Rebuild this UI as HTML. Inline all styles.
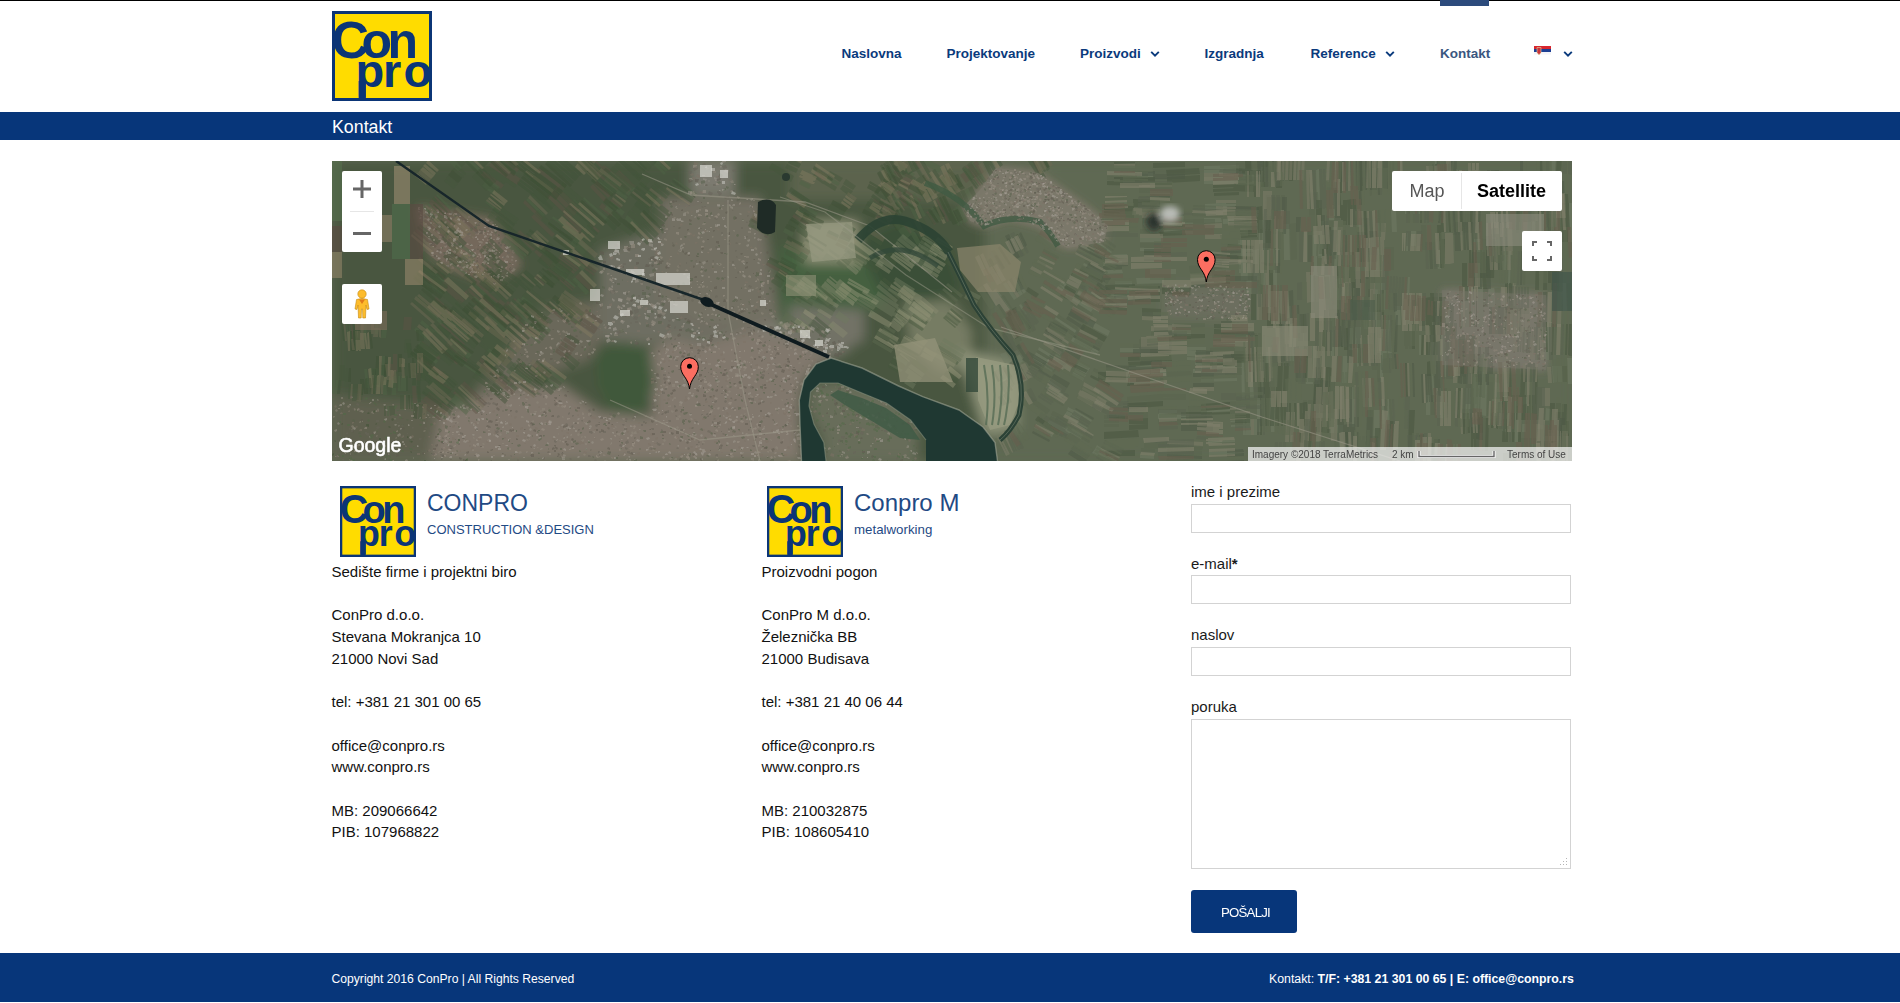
<!DOCTYPE html>
<html><head><meta charset="utf-8"><title>Kontakt - ConPro</title>
<style>
html,body{margin:0;padding:0;background:#fff;}
body{width:1900px;height:1003px;position:relative;overflow:hidden;font-family:"Liberation Sans", sans-serif;}
</style></head><body>
<div style="position:absolute;left:0px;top:0px;width:1900px;height:1px;background:#000"></div>
<svg style="position:absolute;left:332px;top:11px" width="100" height="90" viewBox="0 0 100 90" preserveAspectRatio="none">
<rect x="0" y="0" width="100" height="90" fill="#0b3576"/>
<rect x="3" y="3" width="94" height="84" fill="#ffdc00"/>
<text x="-0.5" y="46.8" font-family="Liberation Sans" font-weight="bold" font-size="52" fill="#0b3576">C</text>
<text x="29.5 55.5" y="46.8" font-family="Liberation Sans" font-weight="bold" font-size="50" fill="#0b3576">on</text>
<text x="23.6 50.9 71.5" y="75.5" font-family="Liberation Sans" font-weight="bold" font-size="47" fill="#0b3576">pro</text>
<rect x="26.7" y="70" width="7.2" height="18" fill="#0b3576"/>
</svg>
<div style="position:absolute;left:841.5px;top:46.57px;font-size:13.5px;line-height:13.5px;font-weight:bold;color:#0a3a7c;white-space:nowrap;font-family:'Liberation Sans', sans-serif;">Naslovna</div>
<div style="position:absolute;left:946.5px;top:46.57px;font-size:13.5px;line-height:13.5px;font-weight:bold;color:#0a3a7c;white-space:nowrap;font-family:'Liberation Sans', sans-serif;">Projektovanje</div>
<div style="position:absolute;left:1080px;top:46.57px;font-size:13.5px;line-height:13.5px;font-weight:bold;color:#0a3a7c;white-space:nowrap;font-family:'Liberation Sans', sans-serif;">Proizvodi</div>
<div style="position:absolute;left:1204.5px;top:46.57px;font-size:13.5px;line-height:13.5px;font-weight:bold;color:#0a3a7c;white-space:nowrap;font-family:'Liberation Sans', sans-serif;">Izgradnja</div>
<div style="position:absolute;left:1310.5px;top:46.57px;font-size:13.5px;line-height:13.5px;font-weight:bold;color:#0a3a7c;white-space:nowrap;font-family:'Liberation Sans', sans-serif;">Reference</div>
<div style="position:absolute;left:1440px;top:46.57px;font-size:13.5px;line-height:13.5px;font-weight:bold;color:#3a5680;white-space:nowrap;font-family:'Liberation Sans', sans-serif;">Kontakt</div>
<svg style="position:absolute;left:1150px;top:49.5px" width="10" height="8" viewBox="0 0 10 8"><path d="M1.2 1.8 L5 5.6 L8.8 1.8" fill="none" stroke="#0a3a7c" stroke-width="1.9"/></svg>
<svg style="position:absolute;left:1385px;top:49.5px" width="10" height="8" viewBox="0 0 10 8"><path d="M1.2 1.8 L5 5.6 L8.8 1.8" fill="none" stroke="#0a3a7c" stroke-width="1.9"/></svg>
<svg style="position:absolute;left:1562.5px;top:49.5px" width="10" height="8" viewBox="0 0 10 8"><path d="M1.2 1.8 L5 5.6 L8.8 1.8" fill="none" stroke="#0a3a7c" stroke-width="1.9"/></svg>
<div style="position:absolute;left:1440px;top:0px;width:49px;height:6px;background:#2c4b7c"></div>
<svg style="position:absolute;left:1534px;top:46px" width="18" height="11" viewBox="0 0 18 11">
<rect x="0" y="0" width="17" height="3" fill="#d8262e"/><rect x="0" y="3" width="17" height="3" fill="#1c3f94"/><rect x="0" y="6" width="17" height="2.5" fill="#f4f4f8"/>
<path d="M3 1.5 h4 v5 l-2 2.5 l-2 -2.5z" fill="#c9343c" stroke="#e8d9a0" stroke-width="0.6"/></svg>
<div style="position:absolute;left:0px;top:112px;width:1900px;height:28px;background:#07367a"></div>
<div style="position:absolute;left:332px;top:118.93px;font-size:17.8px;line-height:17.8px;font-weight:normal;color:#fff;white-space:nowrap;font-family:'Liberation Sans', sans-serif;">Kontakt</div>
<svg style="position:absolute;left:332px;top:161px" width="1240" height="300" viewBox="332 161 1240 300">
<defs><filter id="b6" x="-5%" y="-5%" width="110%" height="110%"><feGaussianBlur stdDeviation="6"/></filter>
<filter id="b3"><feGaussianBlur stdDeviation="3"/></filter>
<clipPath id="mc"><rect x="332" y="161" width="1240" height="300"/></clipPath></defs>
<g clip-path="url(#mc)">
<rect x="332" y="161" width="1240" height="300" fill="#5f6852" />
<g filter="url(#b6)">
<polygon points="332,161 1572,161 1572,461 332,461" fill="#4a573f" />
<polygon points="789,161 985,161 985,200 789,200" fill="#5b634d" />
<polygon points="985,161 1572,161 1572,461 985,461" fill="#5f6952" />
<polygon points="332,395 440,405 470,461 332,461" fill="#5f604f" />
<polygon points="536,311 600,300 600,345 590,360 536,378 500,392 470,400" fill="#6a675a" />
<polygon points="660,197 760,197 770,260 779,321 750,330 700,325 660,300" fill="#736f63" />
<polygon points="600,250 660,230 660,300 700,325 750,330 700,345 672,337 650,345 600,340" fill="#6e6e62" />
<polygon points="779,321 830,330 850,350 831,358 790,340 750,330" fill="#7f7d72" />
<polygon points="690,161 735,161 735,195 690,195" fill="#7b7a70" />
<polygon points="430,461 440,412 503,389 560,384 600,412 653,416 650,350 672,337 700,345 750,330 790,340 831,358 811,371 802,385 799,408 800,436 802,461" fill="#81786d" />
<polygon points="417,207 495,220 521,265 495,285 430,259" fill="#74695b" />
<polygon points="596,352 625,342 650,350 655,385 640,416 610,410 598,385" fill="#40593a" />
<polygon points="813,384 846,381 887,393 918,425 917,461 824,461 822,436 811,417 809,397" fill="#676d5a" />
<polygon points="780,245 870,258 885,300 850,322 780,328" fill="#45603f" />
<polygon points="856,240 900,220 947,246 962,290 930,302 880,292" fill="#3a5039" />
<polygon points="789,305 864,310 864,340 831,356 789,340" fill="#727266" />
<polygon points="804,221 858,221 858,263 804,263" fill="#8d9076" />
<polygon points="905,302 950,300 972,330 971,370 940,372 910,345" fill="#767b63" />
<polygon points="959,350 1017,363 1017,429 985,435" fill="#8f947a" />
<polygon points="996,168 1038,173 1062,190 1090,210 1108,226 1104,242 1067,248 1056,242 1041,226 1010,218 984,226 970,221 963,207 980,190 992,173" fill="#7e786a" />
<polygon points="1442,290 1546,295 1546,370 1442,365" fill="#78766a" />
<polygon points="1164,285 1250,287 1250,320 1164,318" fill="#6c6e5e" />
</g>
<g filter="url(#b3)">
<polygon points="996,168 1038,173 1062,190 1090,210 1108,226 1104,242 1067,248 1056,242 1041,226 1010,218 984,226 970,221 963,207 980,190 992,173" fill="#7e786a" opacity="0.8"/>
<polygon points="417,207 495,220 521,265 495,285 430,259" fill="#74695b" opacity="0.7"/>
<polygon points="1442,290 1546,295 1546,370 1442,365" fill="#78766a" opacity="0.6"/>
</g>
<path fill="#5d5244" opacity="0.45" d="M428 261 447 280 445 281 427 262zM420 270 438 288 437 290 418 271zM602 203 614 213 611 217 599 207zM480 265 502 284 500 287 478 267zM433 376 452 389 451 391 432 378zM557 186 581 209 578 212 554 189zM554 190 577 212 574 216 551 193zM550 194 573 216 570 219 547 197zM537 249 556 265 552 269 534 252zM567 221 586 235 584 237 566 223zM520 230 537 247 533 251 516 234zM422 341 441 357 439 360 420 345zM436 202 457 222 456 224 435 203zM433 205 454 226 453 227 431 207zM431 207 452 227 451 229 430 208zM425 214 446 234 445 236 423 215zM576 256 597 271 595 273 574 258zM574 259 595 274 594 276 573 261zM565 213 582 229 580 231 563 215zM440 322 452 331 451 333 439 324zM619 170 635 186 631 190 615 174zM615 174 631 190 627 194 611 178zM506 305 522 318 520 321 504 308zM547 304 568 323 567 324 545 306zM612 199 622 207 620 208 610 201zM455 209 479 231 477 233 453 212zM493 160 521 179 519 182 491 163zM491 163 519 182 517 185 489 166zM565 337 577 345 575 348 563 340zM562 341 575 349 572 352 560 344zM560 345 572 353 570 356 558 348zM557 348 569 357 567 360 555 352zM504 156 520 168 517 172 501 159zM497 164 513 176 511 180 494 167zM515 298 532 313 531 315 513 299zM480 277 492 289 490 291 478 279zM477 279 489 291 487 294 475 282zM469 288 481 300 479 302 467 290zM466 290 478 303 476 305 464 293zM564 250 583 263 581 265 563 252zM561 254 579 268 578 270 559 256zM559 257 577 270 576 272 558 259zM557 259 575 272 574 274 556 261zM526 235 550 251 549 253 525 236zM539 168 565 188 563 191 537 171zM498 378 515 392 512 395 495 381zM425 219 445 236 443 238 423 221zM416 229 437 246 435 248 415 231zM508 301 520 310 517 313 506 303zM429 392 450 408 448 410 428 393zM428 394 448 410 447 412 426 396zM426 396 446 412 445 414 424 398zM424 398 445 414 443 416 423 400zM422 400 443 417 441 418 421 402zM421 403 441 419 440 421 419 404zM464 381 487 403 486 404 463 383zM463 383 486 405 484 406 461 384zM455 391 478 413 476 414 453 393zM480 303 502 319 500 321 478 306zM559 275 575 288 574 289 558 277zM558 277 573 290 572 291 557 278zM435 196 450 210 449 212 434 197zM432 199 447 214 445 215 430 201zM430 201 445 215 443 217 429 203zM436 297 453 312 451 314 434 299zM590 223 600 231 598 233 589 224zM453 337 469 352 468 353 451 338zM450 340 466 355 464 357 448 342zM448 342 464 357 463 359 446 344zM488 273 500 283 497 286 485 276zM536 275 545 284 544 285 535 277zM536 315 547 324 545 327 533 318zM533 318 544 328 542 330 531 321zM528 325 539 334 537 337 525 328zM520 303 544 322 542 324 519 305zM597 181 611 195 608 198 594 184zM593 184 607 199 604 202 590 187zM500 299 518 314 516 316 498 302zM493 308 510 322 508 325 491 310zM444 281 465 300 461 304 440 285zM579 273 593 288 590 291 575 277zM484 171 504 185 501 189 481 175zM446 344 468 360 466 362 445 346zM477 282 501 303 499 305 475 284zM473 287 497 308 495 310 471 289zM470 290 494 311 492 313 468 292zM517 318 534 333 532 335 515 320zM442 348 458 363 457 365 440 350zM583 148 607 171 605 172 582 149zM557 305 579 322 576 325 555 309zM437 200 459 219 457 221 435 202zM435 202 457 221 455 223 433 204zM433 204 455 224 453 226 431 206zM604 165 625 181 622 184 601 168zM598 171 619 188 617 191 596 174zM535 363 549 376 547 379 532 366zM549 268 561 277 560 279 547 269zM482 363 508 383 506 386 480 366zM422 357 448 376 445 379 420 360zM481 358 493 368 491 371 479 361zM442 323 465 344 464 345 441 325zM537 315 549 323 546 326 535 318zM525 200 543 218 541 220 523 203zM469 269 481 278 478 282 466 273zM534 214 555 234 552 237 531 217zM435 265 448 274 447 276 434 266zM586 309 603 321 601 324 584 312zM581 316 598 328 596 331 579 319zM579 320 596 331 594 334 577 323zM456 253 481 271 479 274 454 255zM416 386 417 403 413 403 412 386zM397 354 397 372 393 372 393 354zM422 359 420 381 416 380 418 359zM412 317 411 330 407 330 408 317zM408 317 407 330 403 330 404 317zM394 364 395 380 391 380 390 364zM352 319 354 340 352 340 350 319zM767 262 788 273 786 276 766 265zM905 189 921 200 920 202 904 191zM895 170 914 181 912 185 893 173zM892 174 911 185 909 189 890 177zM875 198 884 204 882 207 873 201zM753 217 772 227 770 231 751 221zM877 215 892 221 891 223 876 217zM790 195 810 207 808 210 789 198zM816 171 826 179 825 181 814 174zM895 166 913 177 911 179 893 168zM842 231 852 237 850 240 840 234zM881 188 893 196 892 198 880 190zM879 203 898 213 897 215 878 205zM794 214 809 223 808 226 792 217zM928 211 936 224 934 225 926 212zM915 156 922 167 919 169 913 158zM977 161 984 172 980 175 973 163zM972 164 979 175 975 178 968 166zM1035 160 1041 172 1038 173 1032 161zM938 198 949 221 947 222 936 200zM900 190 908 205 904 207 896 192zM906 223 912 232 910 234 903 225zM964 172 970 180 966 183 960 175zM967 165 981 185 980 186 965 166z"/>
<path fill="#4e6445" opacity="0.45" d="M427 263 445 281 444 283 425 264zM450 156 462 168 458 171 446 159zM518 298 528 306 526 310 515 302zM515 303 525 310 523 314 512 307zM475 296 487 306 485 308 473 297zM419 345 438 361 436 364 417 348zM649 190 663 202 662 205 647 193zM435 329 447 338 446 340 434 331zM486 201 500 211 498 213 485 202zM436 409 447 417 445 420 434 412zM469 158 481 170 479 172 467 160zM431 282 443 292 441 294 429 285zM510 303 527 319 525 321 508 305zM474 282 487 294 484 297 472 284zM525 236 549 253 548 255 524 238zM569 252 586 267 583 271 566 256zM456 393 473 407 470 411 453 397zM453 397 469 411 466 415 450 401zM662 155 673 165 671 168 660 157zM657 160 668 170 666 172 655 162zM655 162 666 173 664 175 653 164zM421 341 439 355 436 358 418 344zM561 273 576 286 575 288 560 275zM437 194 452 208 450 210 436 195zM428 203 443 217 441 219 427 204zM425 206 439 221 438 222 423 208zM528 309 551 330 549 333 526 312zM523 315 546 336 544 338 521 317zM518 321 541 342 539 344 516 323zM427 307 443 322 441 325 425 309zM511 366 524 375 522 378 509 369zM508 369 522 378 520 382 506 372zM505 237 527 255 525 257 503 239zM503 239 525 258 523 260 501 241zM523 296 533 304 531 307 521 299zM582 159 591 167 589 169 580 161zM515 362 533 379 532 381 514 363zM513 364 532 381 530 383 512 365zM511 366 530 383 528 385 510 367zM465 252 475 262 472 264 462 255zM462 255 472 265 469 268 459 258zM459 258 468 268 465 271 456 261zM627 215 639 225 637 229 625 219zM541 363 565 380 563 383 539 365zM536 369 560 387 558 389 534 372zM508 345 517 353 516 355 507 347zM553 216 577 233 575 235 552 218zM422 320 435 331 433 334 420 323zM416 327 430 338 428 341 414 330zM459 242 477 255 475 258 457 245zM490 313 509 332 507 335 488 316zM600 178 614 192 611 195 597 180zM495 305 513 320 511 322 493 307zM575 277 589 292 586 295 572 280zM576 236 590 248 586 251 573 240zM573 240 586 252 583 255 570 244zM450 339 472 355 470 357 449 341zM448 341 470 357 468 359 447 343zM574 199 599 221 598 222 573 200zM572 201 597 223 596 224 571 202zM454 357 480 374 479 376 453 358zM448 341 465 356 463 358 447 343zM674 178 697 194 696 196 673 179zM671 182 694 198 693 200 670 183zM584 197 609 219 607 221 583 199zM488 178 500 187 497 190 485 181zM485 182 496 191 494 195 482 186zM553 262 565 272 564 273 552 264zM489 348 501 358 499 361 487 351zM447 317 471 337 470 339 446 318zM611 171 635 188 632 192 608 174zM608 175 631 192 629 196 605 179zM605 179 628 197 626 200 602 183zM528 198 545 215 543 217 526 200zM611 201 625 212 622 216 608 204zM607 205 621 217 618 220 604 209zM555 305 581 323 579 326 552 308zM450 261 475 279 474 281 449 263zM406 376 406 391 403 391 403 376zM403 376 403 391 400 391 401 376zM400 376 400 391 398 391 398 376zM389 406 389 416 387 416 387 406zM396 376 396 395 392 395 392 377zM386 377 387 395 383 395 382 377zM378 321 378 334 375 334 375 321zM387 329 386 338 384 338 384 329zM384 329 384 338 381 338 382 329zM384 363 384 375 381 375 382 363zM376 375 375 394 373 394 374 375zM372 368 372 380 369 379 369 368zM367 324 366 340 363 340 364 324zM378 368 380 387 377 387 375 368zM367 369 369 388 366 388 364 369zM385 356 384 376 382 376 382 356zM356 318 358 340 356 340 354 319zM349 319 352 340 350 341 348 319zM347 319 349 341 348 341 345 319zM338 380 337 394 334 394 336 380zM335 380 334 394 332 393 333 380zM333 380 331 393 329 393 330 379zM785 228 794 233 792 237 783 232zM802 203 818 213 816 216 800 205zM798 208 814 219 813 221 797 211zM827 175 840 183 838 186 825 179zM801 180 811 185 809 189 799 184zM897 162 915 174 913 176 895 165zM884 184 895 192 894 194 883 186zM790 245 808 256 806 260 787 249zM920 155 942 167 939 173 917 160zM933 207 942 220 939 222 931 209zM901 220 911 235 905 240 894 225zM915 193 926 216 923 217 912 195zM908 196 919 219 916 221 905 198zM968 188 979 211 975 212 964 190zM909 221 921 243 917 245 904 223zM967 167 974 178 970 181 963 170zM960 205 968 221 966 222 958 206zM958 206 966 222 964 223 955 207zM955 208 963 223 961 224 953 209zM952 209 960 225 958 226 950 210zM895 192 903 207 899 209 892 194zM890 166 895 177 891 179 886 168zM909 220 916 230 913 232 907 222zM882 168 892 186 890 187 881 168zM895 203 902 213 900 214 893 204zM882 213 888 224 886 225 879 214zM949 172 960 189 958 190 947 174zM944 176 955 192 953 194 942 177zM941 177 953 194 951 196 939 179zM894 157 906 177 903 178 891 159zM972 161 987 181 985 182 971 162z"/>
<path fill="#3f5238" opacity="0.45" d="M425 264 443 283 442 284 423 266zM423 266 442 285 440 286 422 268zM421 268 440 286 438 288 420 269zM418 271 436 290 435 291 416 273zM414 275 433 293 431 295 413 276zM606 168 630 189 627 192 603 170zM423 391 442 404 440 406 422 393zM498 216 522 236 520 240 495 219zM560 230 578 244 577 246 559 232zM516 235 532 252 528 256 512 239zM546 249 573 269 571 272 545 251zM545 251 571 272 569 274 543 254zM543 254 569 275 567 277 541 256zM541 256 567 277 566 279 539 259zM539 259 565 280 564 282 537 261zM526 270 539 281 538 283 524 272zM524 272 537 283 536 285 523 273zM521 275 534 286 533 288 520 277zM518 279 531 290 530 291 517 280zM517 280 530 292 529 293 516 282zM416 349 435 364 433 368 414 352zM498 149 516 167 514 169 496 152zM426 212 448 232 446 234 425 213zM442 320 454 328 453 330 441 322zM439 325 451 333 449 335 437 327zM437 327 449 335 448 338 436 329zM551 299 573 317 571 319 550 300zM501 266 522 281 519 284 498 269zM498 269 519 285 517 288 495 273zM610 201 620 209 619 210 609 203zM607 218 617 227 614 231 604 221zM445 397 456 405 454 407 443 399zM443 400 454 408 452 410 441 402zM432 342 455 360 453 363 430 345zM451 228 467 243 464 246 449 230zM478 149 490 161 488 163 476 150zM476 151 488 163 486 165 474 153zM474 153 486 165 484 167 472 155zM467 160 479 172 477 174 465 162zM530 229 554 246 553 247 529 231zM527 233 551 250 550 251 526 234zM524 238 548 255 546 257 523 240zM646 152 657 161 655 164 644 154zM637 201 650 211 647 215 634 205zM633 155 647 168 646 170 631 156zM631 157 645 170 644 172 629 158zM487 267 508 283 507 285 486 269zM482 273 504 289 502 291 481 275zM641 182 658 196 657 198 639 184zM637 186 655 201 653 203 635 188zM635 189 653 203 652 205 634 191zM632 193 650 207 648 209 630 195zM490 356 506 369 504 371 489 358zM480 367 496 381 494 383 479 369zM490 251 508 265 504 269 487 256zM505 304 517 314 515 316 503 306zM503 307 515 317 512 319 501 309zM500 310 512 320 510 322 498 312zM506 357 518 366 512 372 501 363zM563 356 576 367 573 371 560 359zM479 322 489 332 488 333 478 324zM474 328 484 338 483 339 472 329zM422 268 448 287 447 289 420 270zM416 275 443 294 442 297 415 277zM482 167 496 181 495 183 480 168zM421 341 439 354 437 357 419 345zM418 345 436 358 434 361 416 349zM415 349 433 362 431 366 413 353zM444 305 456 314 455 316 443 306zM621 158 643 177 639 181 618 161zM456 302 483 323 481 325 455 304zM453 306 479 328 477 330 451 308zM539 373 557 388 554 392 537 376zM536 377 554 392 551 395 533 380zM588 224 598 233 597 235 587 226zM446 344 462 359 461 361 445 346zM509 232 531 250 530 252 507 234zM494 208 515 224 514 226 492 210zM482 280 494 290 491 293 479 284zM540 271 549 279 548 280 539 272zM532 280 541 288 540 289 531 281zM503 351 512 359 511 361 502 353zM498 261 506 270 503 273 494 264zM490 268 499 277 495 280 487 272zM525 173 552 193 550 196 523 175zM520 179 548 199 546 201 519 181zM518 181 545 202 544 204 517 184zM443 373 457 385 455 386 442 374zM441 374 455 387 454 388 440 376zM438 378 452 390 451 391 437 379zM437 379 451 391 450 393 436 381zM436 381 450 393 448 394 434 382zM433 384 447 396 446 398 432 386zM518 305 542 325 540 327 517 307zM445 346 466 362 464 365 443 349zM509 327 526 342 524 344 507 329zM438 226 449 234 446 237 435 229zM569 205 594 226 593 228 568 206zM457 353 483 371 482 372 456 354zM673 180 696 196 695 198 672 181zM669 185 692 202 691 203 668 187zM596 175 617 191 615 194 594 177zM542 277 554 287 553 288 540 279zM485 360 511 379 509 382 483 363zM477 370 503 390 501 393 475 373zM419 360 445 380 443 383 417 363zM417 364 442 383 440 386 414 367zM414 367 440 387 437 390 412 370zM514 369 541 389 539 390 513 371zM535 190 553 208 551 210 533 193zM556 151 582 174 580 176 554 154zM554 154 579 176 577 179 552 156zM551 157 577 179 575 181 549 159zM549 159 574 182 572 184 547 162zM557 301 583 319 581 322 555 304zM420 386 421 402 418 403 417 386zM408 376 408 391 406 391 406 376zM411 343 413 357 408 358 406 343zM379 377 379 385 376 385 376 376zM376 376 375 385 372 385 372 376zM359 338 361 350 358 350 357 338zM356 338 358 350 355 350 354 339zM424 330 424 341 422 341 421 330zM421 330 422 341 419 341 419 330zM385 365 386 380 383 381 381 365zM376 369 375 380 372 380 373 369zM421 375 420 386 417 385 417 375zM416 375 416 385 412 385 413 375zM388 357 387 376 385 376 385 356zM354 319 356 340 354 340 352 319zM343 320 345 341 343 341 341 320zM341 380 340 394 337 394 339 380zM801 208 810 214 807 219 797 213zM790 219 799 223 797 228 788 223zM791 187 810 200 808 204 789 191zM828 209 842 217 840 221 826 213zM800 206 816 216 815 218 799 208zM886 175 899 183 898 185 885 176zM829 230 839 235 838 238 827 233zM868 201 880 207 878 210 866 205zM888 172 901 179 900 183 886 176zM846 223 856 229 854 232 844 226zM844 227 854 233 852 236 842 230zM790 158 801 164 799 168 788 163zM885 182 897 190 895 192 884 184zM882 186 894 194 893 196 881 188zM880 190 891 198 890 200 879 192zM790 221 805 230 803 234 788 224zM800 226 809 233 806 238 796 231zM879 186 890 194 887 197 876 190zM876 190 887 198 885 201 874 193zM873 194 884 202 882 205 871 197zM897 187 906 192 905 194 896 189zM784 262 798 272 796 276 781 266zM782 257 797 265 796 267 781 259zM781 260 796 267 795 270 780 262zM958 174 963 186 959 188 953 176zM952 171 957 181 955 182 949 173zM912 158 919 169 916 170 910 159zM910 160 916 171 913 172 907 161zM907 161 913 172 910 174 904 163zM904 163 910 174 908 175 901 164zM1029 152 1040 174 1037 176 1026 154zM1033 156 1046 177 1041 181 1027 160zM996 154 1003 165 1000 167 993 155zM989 158 996 169 993 171 986 159zM893 208 905 226 903 227 891 209zM889 211 901 228 899 230 887 212zM987 160 996 179 992 181 983 162zM932 210 938 221 936 222 929 212zM901 160 908 173 903 175 897 161zM886 166 896 184 894 185 884 166zM885 163 897 182 895 184 883 164zM963 167 978 188 976 189 962 169z"/>
<path fill="#44573b" opacity="0.45" d="M416 273 434 292 433 293 415 274zM454 152 466 163 462 167 450 155zM483 262 505 282 503 284 481 265zM485 330 507 346 503 350 481 335zM603 171 627 192 624 195 600 174zM432 378 451 391 449 393 431 380zM430 380 449 393 448 395 429 382zM429 382 448 395 446 397 428 384zM426 387 445 400 443 402 425 389zM424 389 443 402 442 404 423 391zM495 220 519 240 516 244 492 223zM640 214 659 234 657 236 638 216zM637 217 657 236 655 238 635 219zM635 219 654 239 652 241 633 221zM630 223 649 243 647 245 628 225zM471 300 483 310 481 312 470 302zM562 227 580 242 579 244 560 229zM558 232 577 246 575 248 557 234zM520 277 533 288 532 290 518 278zM490 326 511 345 508 348 487 329zM487 330 508 348 506 351 484 332zM413 353 432 368 430 371 410 356zM495 152 513 169 511 171 493 154zM430 209 451 229 449 230 428 210zM428 210 449 231 448 232 427 212zM655 182 670 194 668 196 654 184zM653 185 668 197 666 199 651 187zM490 196 504 206 503 208 489 197zM614 196 625 203 623 205 613 197zM489 166 517 185 515 188 487 169zM441 403 452 411 450 414 439 406zM563 182 586 201 583 203 561 185zM561 185 583 204 581 207 558 188zM558 188 580 207 578 210 556 191zM438 263 451 275 448 278 435 266zM430 345 452 363 450 366 428 348zM418 295 439 314 436 317 416 298zM415 298 435 318 432 321 412 301zM448 230 464 246 462 248 446 233zM446 233 461 249 459 251 443 235zM436 276 448 285 446 288 434 279zM434 279 446 288 444 291 432 282zM548 270 559 280 555 283 545 274zM513 299 530 315 529 317 512 301zM508 305 525 321 524 322 506 307zM658 202 672 213 669 217 655 206zM654 207 668 218 665 222 651 211zM650 212 665 223 662 227 647 216zM556 261 574 275 572 277 554 263zM529 231 553 248 552 249 528 232zM644 154 655 164 653 166 642 156zM642 157 652 166 650 169 640 159zM639 159 650 169 648 171 637 161zM641 197 653 207 650 210 638 201zM634 206 646 215 643 219 631 209zM630 210 643 220 640 223 627 214zM577 243 594 259 591 262 574 247zM495 270 516 290 514 292 493 272zM485 280 507 300 505 302 483 282zM635 152 649 166 648 168 633 154zM484 271 505 287 504 289 483 273zM417 361 434 379 432 381 415 363zM485 337 508 355 506 358 483 340zM483 340 506 358 504 360 481 342zM481 343 504 361 502 363 479 345zM502 373 518 388 515 391 499 377zM495 382 511 396 508 399 492 385zM420 224 441 241 439 243 419 226zM639 184 657 198 655 200 637 186zM488 358 504 372 502 374 487 360zM424 251 443 266 441 269 422 254zM422 254 440 269 438 271 420 257zM417 260 436 275 434 277 415 263zM486 256 504 270 500 274 483 261zM495 316 507 326 505 328 493 319zM529 287 555 309 553 311 528 289zM526 292 551 313 549 315 524 294zM524 294 549 315 547 317 522 296zM491 238 504 251 501 254 489 241zM488 242 501 254 498 257 485 244zM485 245 498 257 495 260 482 247zM482 248 494 260 492 263 479 251zM431 389 451 406 450 407 430 391zM458 388 481 410 480 411 457 389zM456 390 479 411 478 413 455 391zM482 300 504 316 502 318 481 303zM478 306 500 322 498 324 476 309zM476 310 498 325 496 327 474 312zM474 313 495 328 494 330 472 315zM567 352 580 363 577 367 564 355zM477 324 488 334 486 335 476 326zM475 326 486 336 484 337 474 328zM472 330 482 339 481 341 470 331zM466 336 477 345 475 347 465 337zM465 338 475 347 474 349 463 339zM421 291 445 310 443 313 419 293zM414 299 438 319 436 321 412 302zM562 271 578 284 577 286 561 273zM556 279 572 291 571 293 555 280zM484 165 498 179 497 181 482 166zM476 173 490 187 488 189 474 175zM474 175 488 189 486 191 472 177zM578 152 602 176 600 177 576 153zM434 197 448 212 447 213 432 199zM520 318 544 339 542 341 518 320zM445 303 457 313 456 314 444 305zM441 308 453 318 452 319 440 310zM439 312 451 321 449 323 438 313zM425 310 441 325 439 327 423 312zM640 167 653 177 651 180 638 170zM637 170 650 181 647 184 635 173zM634 174 647 185 644 188 632 177zM631 177 644 188 641 191 629 180zM625 154 646 173 643 177 621 157zM617 162 639 181 636 185 614 166zM613 166 635 186 632 189 610 170zM528 299 553 321 550 324 525 302zM521 307 546 329 543 332 518 311zM458 299 485 320 483 323 457 301zM455 304 481 325 479 327 453 306zM447 314 473 335 471 337 445 316zM456 165 466 173 465 175 455 167zM454 168 464 176 463 178 452 170zM448 176 458 184 456 186 446 178zM446 179 456 186 454 189 444 181zM587 226 596 235 595 237 585 228zM583 230 593 239 591 240 582 232zM475 272 487 280 484 284 472 276zM521 300 531 307 529 310 519 302zM518 303 528 311 526 313 516 306zM497 204 519 219 517 221 496 206zM496 206 517 222 516 224 494 208zM492 211 514 226 512 228 491 213zM490 213 512 229 510 231 489 215zM489 215 510 231 509 233 487 217zM479 301 501 321 498 324 476 304zM517 360 535 377 534 379 516 361zM621 223 633 233 630 236 618 226zM538 366 562 383 560 386 536 369zM542 269 551 277 550 279 541 270zM539 272 548 280 547 282 538 274zM533 278 543 287 541 288 532 280zM551 219 575 236 573 238 550 221zM538 312 550 321 547 324 536 315zM530 322 542 331 539 334 528 325zM494 265 502 273 499 277 491 268zM444 371 458 383 457 385 443 373zM440 376 454 388 453 390 439 378zM434 383 448 395 447 396 433 384zM487 357 499 367 496 370 484 360zM440 286 461 305 457 309 436 290zM487 166 507 180 504 184 484 170zM480 176 500 190 498 194 477 180zM584 228 597 240 594 243 580 232zM580 232 593 244 590 247 577 236zM475 284 499 305 497 308 473 287zM468 292 492 313 490 316 466 295zM440 222 451 230 449 233 438 225zM529 363 549 379 546 383 526 367zM568 206 592 228 591 230 566 208zM566 208 591 230 589 232 564 210zM458 351 484 369 483 370 457 352zM446 343 463 358 461 360 444 345zM444 346 461 361 459 363 442 348zM582 150 605 172 604 174 580 151zM467 314 487 331 485 334 465 317zM670 184 693 200 692 202 669 185zM435 379 455 396 452 398 433 382zM564 292 576 304 573 308 560 296zM559 297 572 308 569 312 556 300zM554 260 567 270 566 272 553 262zM551 264 564 274 563 275 550 266zM550 266 563 275 561 277 549 268zM546 272 558 281 557 283 545 273zM544 273 557 283 556 284 543 275zM543 275 556 285 555 286 542 277zM436 320 456 341 454 343 433 322zM430 325 450 346 448 349 428 328zM475 374 501 393 498 396 472 377zM486 351 499 361 496 364 484 354zM443 322 467 342 466 344 442 323zM440 325 464 346 463 347 439 326zM535 319 546 327 544 329 533 322zM538 188 555 205 553 207 536 190zM533 193 550 210 548 212 531 195zM538 210 559 230 556 233 535 213zM395 406 395 415 392 415 392 406zM392 406 392 415 390 416 389 406zM386 406 386 416 384 416 384 406zM391 377 391 395 388 395 387 377zM383 377 383 385 380 385 380 377zM427 360 425 381 421 381 423 359zM399 372 398 388 393 388 395 371zM345 365 345 381 339 381 340 365zM363 384 362 400 360 400 361 384zM358 384 357 400 355 400 356 384zM355 384 355 400 352 400 353 384zM351 384 350 399 348 399 349 384zM381 363 381 375 378 375 379 362zM348 368 348 382 345 382 346 368zM411 339 410 353 404 353 405 339zM420 358 421 366 418 366 418 358zM417 358 418 366 415 366 415 358zM407 363 408 378 405 378 404 363zM375 368 376 388 373 388 372 368zM423 404 422 419 418 419 419 404zM369 378 370 394 368 394 367 378zM357 384 356 401 352 401 354 384zM412 395 413 409 411 409 411 395zM408 395 408 409 406 409 406 395zM404 395 404 409 402 409 402 395zM402 395 402 409 400 409 400 395zM751 218 770 229 768 232 749 222zM792 273 807 281 806 284 790 276zM788 279 804 288 802 290 787 282zM772 163 794 176 791 182 769 168zM769 259 789 270 788 273 767 262zM897 166 916 178 914 181 895 170zM777 272 787 279 786 280 776 274zM775 276 784 282 783 284 774 278zM773 278 783 284 782 286 772 280zM772 280 782 286 780 288 771 282zM831 204 845 212 843 216 828 208zM750 222 770 232 768 236 748 226zM875 220 889 226 888 228 874 222zM867 232 883 242 881 246 865 236zM830 171 843 178 840 182 828 174zM825 180 837 187 835 191 822 183zM794 190 813 202 812 204 792 192zM792 192 812 205 810 207 790 195zM814 174 824 182 823 184 812 176zM866 205 878 211 876 214 864 209zM885 177 899 184 897 188 883 181zM786 283 806 294 804 297 785 285zM785 286 804 298 802 300 783 288zM783 289 802 301 800 303 781 291zM846 179 856 186 853 190 843 184zM843 185 853 191 849 196 840 189zM787 164 798 169 796 173 785 168zM893 165 904 172 903 175 891 168zM886 180 898 188 897 190 885 182zM787 250 805 260 803 264 785 254zM871 198 882 205 880 208 869 201zM898 185 907 190 906 192 897 187zM781 267 795 277 792 281 778 271zM807 271 817 278 813 283 803 277zM842 231 852 235 851 239 841 234zM953 176 958 189 954 191 948 178zM923 217 930 232 926 234 919 219zM943 176 948 186 946 187 941 177zM972 186 983 209 979 210 968 188zM964 190 975 213 971 214 960 191zM960 192 971 215 967 216 956 193zM1039 147 1050 169 1047 171 1036 149zM1035 149 1046 171 1044 172 1033 150zM915 218 927 240 922 242 910 220zM942 192 949 207 943 210 936 195zM921 176 934 195 931 197 918 178zM918 178 931 197 928 199 915 180zM914 180 928 199 925 201 912 182zM922 158 933 177 930 179 919 160zM915 162 926 181 924 183 912 164zM935 208 942 218 939 220 932 210zM929 213 935 223 933 224 926 214zM885 183 896 199 893 201 882 185zM969 168 975 177 971 180 965 171zM893 204 900 214 898 215 891 205zM946 174 958 191 956 192 944 175zM888 161 900 180 898 182 885 162zM882 164 894 184 892 185 880 166zM935 169 947 187 945 189 932 171zM971 162 985 182 983 183 969 163zM969 163 983 184 982 185 967 165zM965 166 979 186 978 187 963 167zM826 289 838 299 836 303 823 293zM823 293 835 303 832 307 820 297zM914 313 928 322 926 325 912 316zM910 319 924 329 922 331 908 322zM848 250 865 264 864 266 847 252zM914 359 928 369 925 373 911 363zM951 308 963 318 962 320 950 310zM948 312 961 322 959 323 947 313zM946 315 958 325 957 326 944 317zM944 317 956 327 955 328 943 318zM824 301 836 309 834 312 822 304zM884 277 904 293 902 296 882 280zM809 234 827 245 826 247 808 236zM947 370 959 380 956 383 944 374zM900 344 919 355 918 356 899 346zM937 349 959 362 957 365 935 352zM805 289 825 302 823 305 803 293zM846 283 867 295 866 297 845 285zM917 250 938 262 937 265 916 252zM866 257 881 267 879 271 864 261zM863 261 879 271 877 274 861 265zM893 281 913 293 911 295 892 284zM798 294 813 303 812 306 796 296zM855 247 867 254 866 256 854 249zM853 250 866 257 865 259 852 252zM852 252 865 259 863 261 851 254zM851 254 863 262 862 264 849 257zM949 256 966 267 964 270 947 259zM946 259 963 271 961 274 944 262zM851 242 871 258 868 262 848 246zM816 316 832 329 830 332 814 318zM813 319 830 332 827 335 811 322zM811 322 827 336 824 338 808 325zM884 253 897 262 895 266 881 256zM927 240 936 248 935 250 925 242zM924 244 933 252 932 253 922 246zM896 353 908 361 907 363 895 355zM893 358 905 365 904 367 892 360zM892 360 904 368 903 370 890 362zM889 365 901 372 900 374 888 367zM791 320 801 328 799 330 790 323zM946 285 960 298 959 300 944 287zM941 290 956 303 954 305 940 292z"/>
<path fill="#857c62" opacity="0.45" d="M516 152 541 172 539 174 514 154zM478 268 500 287 498 289 476 270zM476 270 498 290 496 292 474 273zM436 217 459 239 456 241 433 220zM632 221 652 241 650 243 630 223zM565 223 584 237 582 239 564 225zM564 225 582 239 580 241 562 227zM557 234 575 248 573 250 555 236zM647 193 661 205 659 207 645 195zM562 216 579 232 577 234 560 218zM560 218 577 234 575 236 558 220zM444 317 456 326 454 328 442 319zM503 309 519 322 516 325 500 313zM550 301 571 319 570 321 549 302zM494 190 508 201 507 202 493 192zM493 192 507 202 505 204 492 193zM491 194 505 204 504 206 490 195zM489 197 502 208 501 209 488 199zM616 194 626 201 625 203 615 195zM428 160 439 170 437 172 426 163zM425 164 436 173 434 176 423 166zM423 167 434 176 431 179 420 170zM417 173 428 182 426 185 415 176zM471 155 484 168 482 169 469 157zM472 285 484 297 482 299 469 287zM563 252 581 265 579 267 561 254zM573 248 590 263 587 267 570 251zM490 275 512 295 510 297 488 277zM659 157 671 168 669 170 657 159zM419 359 437 377 435 379 417 361zM412 234 433 251 431 253 411 236zM484 362 500 376 498 378 483 364zM498 313 510 323 507 325 496 316zM527 290 553 311 551 313 526 292zM459 386 482 408 481 409 458 388zM420 270 447 290 445 292 418 272zM579 150 603 174 602 175 578 152zM576 154 600 177 599 179 575 155zM575 155 599 179 597 180 573 157zM573 157 597 181 596 182 572 158zM443 307 455 316 453 318 442 308zM440 310 452 320 451 321 439 312zM434 300 450 315 448 317 432 302zM432 302 448 317 446 320 430 304zM429 305 446 320 444 322 427 307zM585 228 595 237 593 238 584 230zM582 232 591 241 590 242 580 234zM451 338 467 353 466 355 450 340zM590 150 599 158 596 161 588 153zM579 162 588 170 586 172 577 164zM577 164 586 173 584 175 575 167zM482 298 504 317 501 320 479 301zM543 359 567 377 565 380 541 362zM538 274 547 282 546 283 536 275zM535 277 544 285 543 286 534 278zM535 232 547 244 545 246 533 234zM530 237 543 248 541 250 528 239zM527 170 554 190 552 193 525 172zM456 246 475 259 472 262 454 249zM487 316 506 335 504 338 484 319zM497 344 510 354 507 358 494 348zM490 352 502 362 499 366 487 356zM448 277 469 296 466 300 444 281zM582 270 597 285 594 288 579 273zM515 320 532 336 530 337 513 322zM511 325 528 340 526 342 509 327zM507 329 524 344 522 346 505 331zM505 331 522 347 520 349 503 333zM571 203 596 224 594 226 569 204zM564 210 589 232 588 234 563 212zM575 156 599 179 597 180 574 157zM470 311 490 328 488 331 468 314zM667 187 690 204 689 205 666 189zM580 202 605 224 603 226 578 204zM561 301 582 318 579 321 558 305zM532 366 546 379 544 382 530 369zM427 328 448 349 445 351 425 330zM424 331 445 352 442 354 422 333zM484 355 496 365 494 367 481 357zM457 216 471 230 467 234 453 220zM452 221 467 235 463 239 448 226zM453 310 477 331 476 332 452 312zM452 312 475 332 474 334 451 313zM450 313 474 334 473 335 449 315zM449 315 473 336 471 337 448 317zM446 318 470 339 468 340 445 320zM445 320 468 341 467 342 443 322zM530 326 541 333 539 336 528 328zM527 329 539 337 537 340 525 332zM511 373 538 392 537 394 510 375zM434 366 449 377 446 380 431 369zM431 370 446 381 443 384 428 374zM474 259 490 274 488 276 472 261zM471 261 487 277 485 279 469 264zM437 262 450 272 448 274 436 264zM584 313 600 324 598 327 582 316zM577 323 593 335 591 338 575 326zM387 377 386 385 383 385 384 377zM393 370 394 383 391 384 390 370zM394 371 393 388 388 387 390 371zM405 359 405 367 402 367 402 358zM402 358 402 367 399 367 399 358zM369 332 370 349 368 349 367 333zM366 333 368 349 366 349 364 333zM364 333 365 349 363 349 362 333zM362 333 363 349 361 349 359 333zM359 333 360 349 358 350 357 333zM381 375 380 394 378 394 379 375zM379 375 378 394 376 394 377 375zM360 331 361 351 359 351 358 331zM358 331 358 351 356 351 355 331zM350 331 350 351 348 351 347 332zM423 357 424 366 421 366 421 358zM371 368 373 388 370 388 368 369zM391 357 390 376 388 376 388 357zM382 356 381 376 379 376 379 356zM846 195 855 201 853 203 845 197zM844 198 853 204 851 206 843 200zM842 201 851 207 849 209 841 203zM790 276 805 284 804 287 788 279zM786 283 802 291 800 294 785 286zM816 163 835 176 834 178 815 166zM812 169 832 182 830 184 811 172zM788 192 807 204 804 208 786 196zM779 271 788 277 787 278 778 272zM873 202 882 207 880 210 871 205zM871 205 880 211 878 214 869 208zM802 170 817 177 816 179 801 172zM801 172 816 179 815 181 800 174zM800 175 815 182 814 184 799 177zM878 212 893 219 892 221 877 214zM885 176 897 185 896 187 884 178zM882 180 895 189 893 191 881 182zM881 182 893 191 892 193 880 184zM879 184 892 193 891 195 878 186zM913 179 927 187 925 191 910 183zM818 169 828 176 827 179 816 171zM803 175 814 180 812 184 801 179zM883 207 895 214 894 216 882 209zM793 153 803 159 801 163 791 158zM897 158 908 165 907 168 895 161zM895 162 906 168 905 171 893 164zM797 210 812 219 810 223 795 213zM901 179 910 183 910 185 900 181zM899 183 908 188 908 190 898 185zM912 195 922 218 919 219 909 196zM918 219 926 235 921 237 914 221zM946 174 951 184 949 186 944 176zM1032 151 1043 173 1040 174 1029 152zM929 180 938 197 933 200 923 182zM923 183 932 201 927 203 917 186zM993 156 1000 167 997 169 990 157zM935 200 946 223 943 224 933 201zM942 174 956 194 953 196 939 177zM885 169 890 179 886 181 881 171zM949 163 958 183 954 185 945 164zM944 165 953 185 949 187 940 167zM896 151 906 168 900 172 890 155zM932 171 944 190 941 192 929 173z"/>
<path fill="#3b4d34" opacity="0.45" d="M514 154 539 174 538 176 512 156zM512 156 537 177 536 179 510 158zM510 159 535 179 534 181 508 161zM606 198 618 208 615 212 603 202zM439 214 462 235 459 238 436 217zM644 210 664 230 662 231 642 212zM473 298 485 308 483 310 471 300zM469 302 481 313 480 314 468 304zM467 304 479 315 478 317 466 306zM465 306 477 317 476 319 464 308zM464 308 476 319 474 321 462 310zM541 244 560 261 556 264 538 248zM555 237 573 251 572 253 553 239zM490 158 508 175 506 177 488 160zM434 204 456 224 454 225 433 205zM555 295 576 314 575 315 553 297zM553 297 574 315 573 317 552 299zM548 302 570 321 568 323 547 304zM614 210 624 220 621 223 611 213zM610 214 621 224 618 227 607 217zM568 333 580 341 578 345 565 336zM443 236 459 251 456 254 441 238zM544 275 555 284 552 288 541 279zM500 160 516 172 514 176 498 163zM492 273 514 292 512 295 490 275zM541 165 567 185 565 188 539 168zM536 171 563 191 561 194 534 174zM534 174 560 194 558 197 532 177zM532 177 558 197 556 200 530 180zM485 269 507 285 505 287 484 271zM422 356 439 374 437 376 420 359zM491 386 508 400 505 404 488 389zM418 344 436 359 433 362 415 347zM415 348 433 362 431 365 413 350zM412 351 430 366 428 368 410 354zM418 226 439 243 437 245 417 228zM486 360 502 374 500 376 485 362zM482 365 498 378 496 380 481 367zM468 334 479 343 477 345 467 335zM423 288 447 308 445 310 421 290zM418 273 445 292 444 294 417 275zM415 277 442 297 440 299 413 279zM480 169 494 183 492 185 478 170zM478 171 492 185 490 187 476 173zM526 312 549 333 547 335 523 314zM451 309 477 330 475 332 449 311zM452 170 462 178 460 181 450 173zM450 173 460 181 458 183 448 175zM448 249 462 259 459 262 446 253zM446 253 459 263 456 266 443 257zM585 156 594 164 591 167 582 158zM485 294 507 314 504 317 482 297zM519 358 537 375 536 377 517 359zM491 270 503 280 500 283 488 273zM485 277 497 287 494 290 482 280zM624 219 636 229 634 233 621 222zM543 268 552 276 551 277 542 269zM549 222 573 239 571 241 548 224zM523 176 550 196 548 199 521 178zM524 299 548 318 546 320 522 301zM522 301 546 320 544 322 520 303zM494 348 506 358 503 362 491 352zM498 302 515 317 513 319 496 304zM491 311 508 325 506 328 488 313zM452 336 474 352 472 354 451 338zM443 349 464 365 462 367 441 351zM513 323 530 338 528 340 511 324zM456 355 481 372 480 374 454 356zM580 151 603 174 602 175 579 153zM577 154 600 177 599 179 576 156zM574 158 597 180 596 182 573 159zM582 200 607 222 605 224 580 202zM564 297 585 313 582 317 561 301zM593 178 614 194 612 197 591 181zM537 360 552 373 549 376 535 363zM547 270 560 279 559 281 546 271zM532 322 544 330 542 333 530 325zM520 361 546 381 545 382 519 363zM518 363 545 383 544 384 517 365zM517 365 543 385 542 386 516 367zM516 367 542 387 541 388 514 369zM510 375 536 394 535 396 509 377zM547 162 572 185 570 187 545 164zM466 273 477 282 474 286 463 277zM439 260 451 270 450 272 437 262zM434 267 446 276 445 278 432 269zM432 269 445 278 443 280 431 271zM402 354 402 372 398 372 398 354zM360 384 359 400 357 400 358 384zM371 332 373 348 371 349 369 332zM419 330 419 341 417 341 416 330zM387 363 386 376 384 375 385 363zM378 362 378 375 375 375 376 362zM351 368 351 382 348 382 349 368zM355 331 355 351 353 351 353 331zM352 331 353 351 351 351 350 331zM360 324 360 340 357 340 358 324zM357 324 357 340 354 340 355 324zM414 358 415 367 412 367 412 358zM414 363 415 377 412 377 411 363zM411 363 411 378 409 378 408 363zM418 404 417 419 413 418 414 403zM379 356 378 376 376 376 376 356zM374 378 375 394 373 394 372 378zM371 378 373 394 371 394 369 378zM367 378 368 394 366 394 365 379zM364 379 366 394 364 394 362 379zM362 379 363 395 361 395 360 379zM410 395 410 409 409 409 408 395zM814 166 833 179 832 181 813 169zM770 257 791 267 789 270 769 259zM787 224 796 228 794 232 785 228zM904 192 919 203 918 205 902 194zM900 197 916 208 915 210 899 199zM776 274 785 281 784 282 775 276zM833 200 848 208 845 212 831 204zM804 212 824 221 823 225 803 216zM802 217 822 226 820 230 800 221zM884 178 896 187 895 189 882 180zM910 184 925 192 922 196 908 188zM881 211 893 218 892 220 880 213zM864 209 876 215 874 218 862 213zM870 181 882 188 881 190 869 183zM869 184 881 190 879 192 868 186zM868 186 879 192 878 194 867 188zM880 201 899 210 898 212 879 203zM792 217 807 227 805 230 790 220zM900 181 909 186 909 187 899 183zM840 234 851 239 849 242 839 238zM788 236 805 245 803 248 787 239zM958 209 963 220 958 222 953 211zM952 211 958 223 953 225 948 214zM935 206 944 219 942 220 933 207zM930 209 939 222 937 223 928 210zM891 209 903 227 901 228 889 210zM887 212 899 230 897 231 885 213zM1044 155 1050 167 1047 168 1041 157zM924 174 937 192 935 194 922 176zM945 195 955 218 953 219 942 197zM941 197 952 220 950 221 939 198zM938 206 945 216 942 218 935 208zM950 168 965 188 961 190 947 171zM880 171 886 181 882 183 877 173zM882 186 893 202 890 204 879 188zM888 165 898 183 896 184 886 165zM884 167 894 185 892 186 882 167zM896 202 903 211 902 213 895 203zM891 206 898 215 896 216 889 207zM891 159 903 178 901 180 888 160z"/>
<path fill="#6f6b54" opacity="0.45" d="M488 325 510 340 507 345 485 329zM427 385 446 398 445 399 426 387zM433 221 455 242 453 245 430 223zM642 212 661 232 659 234 640 214zM523 273 536 285 535 286 521 275zM500 147 519 164 516 166 498 149zM493 155 511 172 509 174 491 157zM578 254 599 269 597 271 576 256zM651 188 666 200 664 202 649 190zM487 199 501 210 500 211 486 201zM613 197 623 205 622 207 612 199zM460 204 484 226 482 228 458 206zM457 207 481 228 479 231 455 209zM452 212 476 234 474 236 450 214zM450 215 474 237 472 239 448 217zM438 406 449 414 448 417 436 409zM441 260 454 271 451 274 438 263zM420 170 431 179 429 182 418 173zM511 301 529 317 527 319 510 303zM581 239 598 254 595 258 578 243zM488 278 509 298 507 300 486 280zM423 221 443 238 441 240 421 223zM414 231 435 248 433 250 413 233zM633 191 651 205 650 207 632 193zM420 257 438 272 436 274 418 260zM461 384 484 406 483 408 460 386zM470 332 481 341 479 343 469 333zM419 294 442 313 440 316 417 296zM416 296 440 316 438 318 414 299zM412 302 435 322 433 324 410 304zM426 205 441 219 440 221 425 206zM525 303 550 325 547 328 522 306zM449 311 475 333 473 335 447 313zM451 245 464 255 462 258 449 249zM478 267 490 275 488 279 475 271zM507 234 529 252 528 255 505 236zM587 153 596 161 594 164 585 156zM476 305 498 324 495 327 473 308zM512 341 521 349 519 351 510 343zM510 343 519 351 518 353 508 345zM506 347 516 355 514 357 505 349zM505 349 514 357 512 359 503 351zM501 353 511 361 509 363 500 355zM500 355 509 363 507 365 498 357zM498 357 507 365 506 367 496 359zM537 230 549 241 548 243 535 232zM533 234 545 246 543 248 531 236zM419 324 433 334 430 337 417 327zM533 359 552 375 549 378 530 363zM579 153 602 176 600 177 577 154zM464 318 484 335 482 338 461 321zM433 382 452 399 450 401 430 385zM430 385 449 402 447 405 428 388zM431 207 453 226 451 228 429 209zM601 168 622 184 620 187 599 171zM433 323 453 344 451 346 430 325zM480 367 506 386 504 389 478 370zM478 361 491 371 489 374 476 364zM513 371 539 391 538 392 511 373zM508 377 535 396 534 398 507 379zM530 195 548 213 546 215 528 198zM469 264 485 279 483 282 467 266zM565 290 591 308 589 311 563 293zM562 293 589 311 586 315 560 297zM560 297 586 315 584 319 558 300zM454 256 479 274 477 276 453 258zM452 258 477 277 476 279 451 260zM448 263 473 282 472 284 447 266zM374 321 374 334 371 334 371 321zM396 370 397 383 394 383 393 370zM353 339 355 350 352 350 351 339zM353 384 352 399 350 399 351 384zM381 329 381 338 379 337 379 328zM379 328 378 337 376 337 376 328zM376 328 376 337 373 337 374 328zM416 363 416 378 411 378 410 363zM384 376 383 394 381 394 381 375zM374 375 373 394 371 394 372 375zM389 364 391 380 387 380 385 364zM364 324 363 340 360 340 361 324zM404 363 405 378 402 378 401 364zM423 353 423 373 420 373 420 353zM420 353 419 373 417 373 417 353zM427 404 426 419 422 419 423 404zM362 384 361 402 357 401 358 384zM406 395 406 409 404 409 404 395zM345 320 347 341 345 341 343 320zM848 192 857 198 855 201 847 195zM756 210 775 220 773 224 754 213zM753 214 772 224 770 228 751 218zM902 194 918 205 916 207 901 196zM780 269 789 275 788 276 779 270zM876 217 890 224 889 226 875 219zM869 228 885 238 883 242 867 232zM827 233 838 238 836 241 826 236zM884 205 896 212 895 214 883 207zM882 209 894 216 893 218 881 211zM792 241 811 251 808 255 790 245zM881 198 900 208 899 210 880 200zM779 262 795 270 793 272 778 264zM839 238 849 243 847 246 837 241zM837 242 847 247 846 250 835 245zM787 240 803 249 801 252 785 243zM785 244 801 252 799 255 783 247zM949 173 954 183 952 184 946 174zM982 163 991 182 987 184 978 165zM1047 154 1053 165 1050 167 1044 155zM1041 157 1047 168 1044 170 1038 158zM1038 158 1044 170 1041 171 1035 160zM919 160 930 179 927 181 916 162zM891 195 898 209 895 211 887 197zM946 171 961 191 957 193 943 174zM889 181 900 197 897 199 886 183zM906 157 912 171 908 173 902 159zM898 200 905 210 904 211 897 201zM886 210 893 220 891 222 884 211zM884 211 891 222 888 223 882 213z"/>
<path fill="#6f7a60" opacity="0.45" d="M903 234 920 248 918 251 900 237zM900 237 917 251 915 254 897 240zM897 241 914 255 912 258 895 244zM830 249 840 256 838 258 829 251zM827 253 837 260 835 262 825 255zM825 255 835 263 834 264 824 257zM824 257 833 265 832 266 822 259zM916 310 930 319 929 321 914 312zM798 281 814 292 812 293 797 283zM923 236 942 248 940 251 922 239zM919 243 938 254 936 257 918 246zM909 298 928 311 926 314 907 301zM906 301 925 314 923 318 904 305zM904 305 923 318 921 321 902 308zM901 309 920 322 918 325 899 312zM850 248 867 262 866 264 849 250zM839 311 850 319 846 324 835 317zM911 364 925 374 922 377 908 367zM908 368 922 378 919 382 905 372zM894 317 906 324 903 328 892 320zM879 284 898 300 896 303 876 287zM802 246 819 257 818 259 800 247zM920 301 936 314 933 318 917 304zM802 313 813 321 810 325 800 317zM799 318 809 325 807 329 796 321zM944 338 966 351 964 354 942 341zM941 342 964 355 962 358 940 345zM916 253 936 265 935 268 914 256zM914 256 934 268 933 271 912 259zM912 259 933 271 931 274 911 262zM897 278 916 294 914 296 895 281zM910 373 919 379 916 383 907 378zM907 379 916 384 913 389 904 383zM878 291 899 305 897 309 876 295zM875 295 896 309 894 313 873 299zM873 299 894 313 892 317 870 303zM969 290 981 296 979 300 967 294zM966 294 978 301 976 305 964 298zM868 253 884 263 882 267 866 257zM896 277 915 289 913 292 894 280zM889 288 909 299 907 302 888 290zM898 307 908 313 905 317 896 311zM895 312 905 318 902 322 892 315zM856 245 869 252 868 254 855 247zM819 312 835 326 833 328 816 315zM928 239 938 246 936 248 927 240zM925 242 935 250 933 251 924 244zM864 289 880 299 879 301 863 291zM860 296 876 306 875 308 859 298zM858 298 875 308 873 310 857 300zM939 293 954 305 952 307 938 295zM857 240 875 251 873 253 856 242zM855 242 873 253 872 255 854 244zM854 244 872 255 871 257 853 246zM853 246 871 257 870 259 852 248zM849 252 867 263 866 265 848 254z"/>
<path fill="#9a987c" opacity="0.45" d="M894 244 912 258 909 261 892 247zM828 251 838 258 837 260 827 253zM797 318 812 329 810 333 794 322zM793 323 809 334 806 338 791 327zM916 246 925 253 922 257 912 250zM912 251 921 258 918 263 909 256zM804 276 818 286 816 290 801 279zM801 280 815 291 813 294 798 284zM798 284 812 295 810 298 795 288zM912 316 926 325 924 328 910 319zM917 333 928 341 924 346 913 338zM795 285 810 296 809 298 794 287zM877 248 886 254 882 259 873 253zM917 297 934 310 932 314 915 301zM914 301 931 315 929 318 911 305zM911 306 928 319 925 322 908 309zM927 258 943 268 942 271 925 261zM899 309 911 317 908 320 897 312zM950 310 962 320 961 321 949 311zM852 258 863 265 862 267 850 260zM808 236 825 248 824 250 806 238zM950 366 962 376 959 379 947 370zM943 375 956 384 953 388 940 378zM904 336 923 347 922 349 903 338zM805 309 816 316 813 320 803 313zM808 285 828 297 826 301 806 288zM904 285 923 297 919 303 900 290zM849 278 870 290 869 292 848 280zM848 281 869 292 867 294 847 283zM845 285 866 297 865 299 844 288zM938 237 953 247 952 248 936 239zM936 239 952 249 951 250 935 241zM934 243 950 253 949 255 933 245zM932 245 948 255 947 257 931 247zM931 247 947 257 946 259 930 249zM930 250 946 259 945 261 929 251zM898 246 918 260 917 262 897 248zM897 248 917 262 915 264 895 250zM895 251 915 265 913 267 894 253zM893 253 913 267 912 269 892 255zM892 255 911 270 910 272 890 257zM802 286 818 296 817 298 801 288zM880 328 899 338 897 342 878 331zM876 335 895 346 893 349 874 338zM854 238 875 253 871 257 851 241zM925 347 937 354 934 358 923 351zM923 352 934 358 932 362 920 356zM861 294 878 303 876 305 860 296zM904 285 917 295 915 298 902 288zM902 288 915 298 912 301 899 291zM899 292 912 302 910 305 897 295zM871 310 892 323 889 328 868 316zM852 248 870 259 869 261 851 250zM843 282 861 295 858 298 840 285zM840 286 858 299 856 302 838 289zM837 289 855 302 853 306 835 292z"/>
<path fill="#8a8c70" opacity="0.45" d="M830 276 850 292 849 294 829 277zM828 278 848 294 847 296 827 279zM827 279 847 296 846 298 826 281zM825 281 845 298 844 300 824 283zM824 283 844 300 842 301 822 285zM822 285 842 302 841 303 821 287zM829 285 841 295 839 298 826 289zM800 279 815 289 814 291 799 280zM797 283 812 294 811 296 796 285zM794 287 809 298 807 300 792 289zM844 254 861 269 860 271 843 256zM843 257 859 271 858 273 841 258zM841 259 858 273 856 275 839 261zM929 254 946 264 944 267 927 257zM925 261 941 271 939 274 923 265zM922 265 939 275 937 278 921 268zM897 313 908 321 906 324 895 316zM826 297 839 305 837 308 824 300zM819 308 832 316 830 319 817 311zM856 251 867 258 866 260 855 253zM853 256 864 262 863 265 852 258zM850 261 862 267 860 270 849 263zM805 241 822 252 821 254 803 243zM803 243 821 255 820 257 802 245zM923 297 939 311 936 314 920 301zM916 305 932 318 930 322 914 308zM905 335 924 345 923 347 905 336zM903 338 922 349 921 351 902 340zM902 340 921 351 920 353 901 342zM901 342 920 353 919 354 900 344zM898 348 916 359 916 360 897 350zM896 316 905 324 904 325 895 317zM895 318 904 325 903 327 893 319zM893 320 902 327 901 329 892 321zM892 321 901 329 900 331 890 323zM890 323 900 331 898 332 889 325zM895 281 914 297 912 299 893 283zM890 339 898 345 897 347 889 340zM888 341 897 348 895 349 887 342zM840 279 852 289 850 293 837 282zM837 283 849 293 847 296 834 286zM780 321 795 331 794 334 778 324zM891 284 911 296 909 299 890 287zM881 257 894 266 892 270 878 261zM878 261 891 271 889 274 875 265zM813 283 833 300 832 302 812 285zM811 286 831 302 830 304 810 287zM936 349 957 361 954 367 933 356zM918 253 930 260 928 262 916 255zM863 291 879 301 878 303 862 293zM901 353 910 361 909 362 899 354zM833 321 848 333 843 338 828 326z"/>
<path fill="#5d6a50" opacity="0.45" d="M925 233 944 245 942 247 924 236zM921 240 940 251 938 254 920 243zM846 252 863 267 862 269 845 254zM947 313 959 323 958 325 946 315zM822 304 834 312 832 316 819 308zM854 253 866 260 865 262 853 255zM881 280 901 296 899 299 879 283zM806 239 824 250 823 252 805 240zM899 346 918 357 917 358 898 348zM939 345 962 359 960 362 937 348zM802 294 822 306 820 310 800 297zM898 314 907 322 906 323 896 316zM892 336 900 343 899 345 890 338zM786 312 802 322 800 325 784 315zM784 315 800 325 798 328 782 318zM782 318 797 328 796 331 780 321zM935 241 951 251 950 253 934 243zM801 289 817 298 815 300 799 291zM799 291 815 301 814 303 798 294zM796 297 812 306 811 308 795 299zM795 299 810 309 809 311 793 301zM846 252 854 258 851 262 843 255zM843 256 851 262 848 266 840 259zM839 260 847 266 845 270 836 263zM878 331 897 342 895 345 876 335zM874 339 893 350 891 353 872 342zM847 247 867 263 864 266 844 251zM815 281 835 298 833 300 813 283zM810 288 830 304 828 306 808 290zM922 246 932 253 930 255 921 247zM921 248 930 255 929 257 920 249zM919 249 929 257 928 259 918 251zM894 356 907 363 906 365 893 358zM890 363 903 370 901 372 889 365zM789 323 799 331 797 333 787 326zM921 246 934 253 932 256 920 249zM919 249 932 256 930 259 918 252zM857 301 873 311 872 313 856 303zM948 283 963 295 961 298 946 285zM944 288 958 300 957 302 942 290zM902 351 911 359 910 360 901 353zM899 355 908 362 907 364 898 356zM898 356 907 364 906 366 896 358zM885 325 896 331 894 334 884 327zM883 328 894 335 892 337 882 331zM881 331 892 338 890 341 880 334zM850 250 868 261 867 263 849 252z"/>
<path fill="#6f7a64" opacity="0.55" d="M1136 278 1164 277 1164 283 1137 284zM1201 367 1236 365 1236 368 1201 369zM1201 379 1237 378 1237 381 1201 382zM1230 406 1246 405 1246 407 1230 408zM1230 421 1247 420 1247 421 1231 422zM1231 425 1247 424 1247 426 1231 427zM1114 166 1135 166 1135 168 1114 168zM1195 363 1223 362 1223 364 1195 365zM1150 269 1176 269 1176 274 1150 274zM1193 369 1214 369 1214 373 1193 373zM1191 275 1206 275 1206 280 1191 281zM1105 203 1127 202 1127 204 1105 205zM1223 219 1257 217 1257 223 1223 224zM1216 203 1236 204 1236 206 1216 206zM1140 238 1163 238 1163 242 1140 242zM1140 248 1163 248 1163 251 1140 251zM1105 255 1127 254 1128 258 1105 259zM1120 348 1140 348 1140 352 1120 352zM1227 248 1253 249 1253 252 1227 251zM1227 252 1253 253 1253 256 1227 255zM1151 370 1167 371 1167 376 1151 375zM1172 286 1189 286 1189 291 1172 290zM1137 173 1153 173 1153 177 1137 178zM1159 410 1177 410 1177 413 1159 414zM1102 215 1125 214 1125 219 1102 220zM1129 365 1159 364 1160 368 1129 369zM1129 380 1160 378 1160 382 1129 384zM1150 191 1170 192 1170 194 1150 194zM1208 441 1235 440 1235 442 1208 443zM1209 452 1235 451 1235 454 1209 455zM1099 295 1127 294 1127 296 1099 297zM1099 308 1127 308 1127 310 1099 310zM1164 221 1193 222 1193 224 1164 224zM1164 224 1193 225 1193 227 1164 227zM1164 230 1193 231 1193 234 1164 233zM1140 455 1154 456 1154 459 1140 458zM1103 262 1122 261 1122 265 1103 266zM1103 270 1122 270 1123 273 1103 274zM1201 411 1230 409 1230 411 1201 413zM1115 281 1132 281 1132 286 1115 287zM1115 288 1132 287 1132 293 1115 293zM1115 294 1133 294 1133 299 1116 299zM1158 414 1186 415 1186 419 1158 419zM1187 347 1206 347 1206 350 1187 350zM1187 350 1206 351 1206 354 1187 353zM1187 353 1206 354 1205 357 1187 356zM1187 357 1205 358 1205 361 1187 360zM1128 370 1150 370 1150 374 1128 373zM1205 204 1226 203 1227 208 1205 210zM1221 325 1248 326 1248 329 1221 329zM1172 333 1191 333 1191 336 1172 336zM1204 166 1239 165 1239 169 1204 169zM1204 170 1239 169 1239 173 1204 173zM1204 181 1239 181 1239 184 1204 184zM1204 218 1221 218 1222 222 1204 223zM1235 174 1261 175 1261 180 1235 179zM1215 269 1231 270 1230 272 1215 271zM1214 286 1230 287 1229 289 1214 289zM1068 407 1082 414 1081 417 1067 410zM1067 411 1080 417 1079 420 1065 414zM1062 281 1084 296 1082 298 1060 283zM1060 284 1082 299 1081 301 1059 286zM1073 337 1099 351 1098 353 1072 339zM1072 339 1097 353 1097 355 1071 341zM1056 353 1074 364 1073 366 1055 356zM1080 244 1104 256 1103 257 1079 246zM1075 410 1092 420 1091 422 1074 411zM1070 417 1088 428 1087 429 1069 419zM1049 380 1062 389 1061 391 1048 382zM1097 445 1115 457 1113 460 1095 449zM1095 449 1112 461 1110 464 1092 453zM1097 241 1112 252 1111 253 1096 243zM1077 291 1097 302 1095 305 1076 294zM1073 298 1093 309 1091 312 1072 300zM1087 286 1109 301 1107 305 1084 289zM1049 420 1071 431 1069 435 1047 424zM1056 317 1077 331 1075 333 1055 319zM1035 426 1053 435 1052 437 1034 428zM1079 362 1090 368 1088 371 1077 365zM1077 366 1088 371 1086 374 1075 368zM1075 369 1086 375 1085 377 1074 372zM1073 372 1084 378 1083 381 1072 375zM1086 318 1110 331 1108 336 1083 323zM1084 263 1106 275 1105 277 1083 265zM1048 384 1064 394 1061 398 1045 388zM1039 347 1060 360 1058 362 1038 350zM1036 352 1057 365 1055 367 1035 355zM1034 355 1055 368 1054 370 1033 357zM1033 358 1053 370 1052 372 1032 360zM1067 425 1083 435 1081 439 1064 429zM1087 290 1105 299 1104 302 1086 293zM1277 270 1277 307 1274 307 1273 270zM1265 270 1265 307 1262 307 1261 270zM1289 224 1290 260 1284 260 1283 224zM1345 278 1346 300 1342 300 1341 278zM1340 278 1341 300 1337 300 1336 279zM1548 323 1549 360 1545 360 1545 323zM1544 323 1545 360 1541 360 1541 323zM1348 356 1347 383 1342 383 1343 356zM1494 288 1495 307 1489 307 1489 288zM1357 336 1359 366 1357 367 1355 336zM1551 409 1550 441 1544 441 1546 408zM1484 287 1484 327 1482 327 1482 287zM1482 287 1482 327 1480 327 1480 287zM1480 287 1480 327 1478 327 1478 287zM1475 287 1475 327 1474 327 1474 287zM1473 287 1473 327 1471 327 1472 287zM1469 287 1469 327 1467 327 1467 287zM1467 287 1467 327 1465 327 1465 287zM1463 287 1463 327 1461 327 1461 287zM1318 272 1319 302 1316 302 1315 272zM1314 272 1315 302 1311 302 1310 272zM1512 308 1511 332 1509 332 1509 308zM1281 210 1280 232 1277 231 1278 210zM1270 209 1269 231 1267 231 1268 209zM1337 227 1337 255 1332 255 1332 227zM1549 322 1550 352 1548 352 1547 322zM1540 322 1540 353 1538 353 1538 322zM1356 432 1358 459 1355 459 1354 432zM1556 155 1555 174 1550 174 1551 155zM1317 256 1317 275 1314 275 1314 256zM1500 383 1500 416 1494 416 1495 382zM1487 382 1486 416 1480 415 1481 382zM1480 382 1479 415 1474 415 1474 382zM1400 306 1401 325 1396 325 1395 306zM1441 388 1443 418 1440 418 1439 388zM1380 223 1380 240 1376 240 1376 223zM1507 397 1507 413 1505 413 1505 397zM1440 241 1441 269 1438 269 1436 242zM1317 346 1319 381 1314 382 1312 346zM1396 209 1397 232 1392 232 1391 209zM1485 347 1485 385 1482 385 1482 347zM1242 240 1242 273 1239 273 1238 240zM1265 155 1266 182 1264 182 1264 155zM1324 221 1322 258 1318 258 1320 221zM1572 358 1573 384 1568 384 1567 358zM1408 233 1408 251 1406 251 1407 233zM1343 425 1344 453 1339 453 1337 425zM1374 312 1375 328 1373 328 1372 312zM1372 312 1372 328 1371 328 1370 312zM1370 312 1370 329 1368 329 1368 312zM1367 312 1368 329 1366 329 1366 312zM1365 312 1366 329 1364 329 1363 312zM1360 209 1360 227 1357 227 1357 209zM1295 447 1295 466 1290 466 1290 447zM1507 402 1506 426 1504 426 1505 402zM1259 249 1260 280 1254 280 1253 250zM1246 250 1247 280 1241 281 1240 250zM1312 358 1313 384 1306 384 1306 358zM1562 366 1562 382 1558 382 1557 366zM1557 366 1557 382 1553 383 1552 366zM1389 399 1390 429 1388 429 1387 399zM1384 399 1385 429 1383 429 1381 399zM1382 249 1382 271 1375 271 1375 249zM1319 169 1320 208 1317 209 1316 170zM1455 444 1454 475 1452 475 1453 444zM1471 388 1470 419 1468 419 1469 388zM1468 388 1467 419 1465 419 1466 388zM1482 357 1482 374 1477 374 1478 356zM1472 356 1471 373 1467 373 1467 356zM1566 283 1567 311 1563 311 1562 283zM1527 397 1526 432 1522 432 1523 397zM1517 397 1516 432 1512 432 1513 397zM1507 396 1506 432 1502 431 1503 396zM1274 398 1275 432 1271 432 1270 398zM1260 398 1261 432 1257 432 1257 398zM1383 353 1383 382 1380 382 1380 353zM1535 222 1536 251 1532 251 1532 222zM1531 222 1532 251 1528 251 1527 222zM1481 239 1480 278 1474 277 1474 239zM1518 419 1518 442 1515 442 1515 419zM1385 283 1385 310 1381 310 1381 283zM1380 283 1380 310 1375 310 1375 283zM1527 327 1526 353 1524 353 1525 327zM1443 335 1443 355 1440 355 1441 335zM1421 335 1421 355 1419 355 1419 335zM1339 230 1337 266 1334 266 1336 230zM1320 433 1319 451 1316 450 1316 433zM1264 220 1265 243 1259 244 1259 220zM1361 327 1361 363 1355 363 1355 327zM1553 191 1554 211 1552 212 1551 191zM1511 251 1510 284 1508 284 1509 251zM1368 378 1369 407 1366 407 1365 378zM1433 374 1435 402 1433 402 1432 374zM1335 419 1334 433 1330 433 1331 418zM1377 290 1377 329 1375 329 1376 290zM1291 306 1293 339 1290 339 1289 306zM1281 249 1280 263 1274 263 1275 249zM1274 249 1273 263 1268 263 1268 249zM1267 248 1267 263 1261 262 1262 248zM1330 275 1332 309 1326 310 1325 275zM1334 316 1334 356 1331 356 1331 316zM1506 247 1506 270 1503 270 1502 247zM1336 179 1337 216 1334 216 1333 180zM1390 320 1392 358 1388 358 1386 320zM1386 320 1387 358 1383 359 1382 320zM1381 320 1383 359 1379 359 1377 320zM1377 320 1378 359 1374 359 1373 321zM1354 387 1354 427 1352 427 1352 387zM1293 321 1294 361 1290 361 1289 321zM1437 155 1438 172 1435 172 1434 155zM1477 358 1475 397 1473 397 1474 358zM1416 231 1416 246 1411 246 1411 231zM1263 167 1264 187 1262 187 1261 167zM1334 205 1334 220 1329 220 1329 205zM1461 341 1461 355 1456 355 1457 341zM1317 231 1316 262 1313 262 1313 231zM1252 361 1254 398 1250 398 1249 361zM1244 361 1245 399 1242 399 1241 361zM1268 347 1269 382 1267 382 1266 347zM1573 203 1572 242 1568 242 1569 203zM1380 410 1379 450 1373 450 1374 410zM1446 339 1446 377 1444 377 1443 339zM1450 303 1448 335 1445 335 1446 303zM1543 194 1543 233 1540 233 1540 194zM1419 189 1420 214 1418 214 1417 189zM1414 189 1415 214 1413 214 1412 190zM1407 190 1407 214 1405 214 1404 190zM1381 231 1383 261 1379 261 1378 231zM1257 419 1257 435 1254 435 1254 419zM1251 419 1251 435 1248 435 1248 419zM1248 419 1248 435 1245 435 1246 419zM1245 419 1245 435 1243 435 1243 419zM1252 264 1251 294 1246 293 1247 264zM1353 328 1353 350 1349 350 1349 328zM1481 171 1480 206 1477 206 1479 170zM1472 170 1470 206 1467 206 1469 170zM1458 170 1457 205 1454 205 1456 169zM1430 395 1430 415 1426 415 1426 395zM1410 277 1409 311 1406 310 1408 277zM996 288 1011 309 1010 310 995 289zM1016 276 1026 292 1024 294 1013 278zM1013 278 1023 294 1020 296 1010 280zM1006 282 1017 298 1014 300 1003 284zM1002 367 1007 378 1005 379 1000 369zM999 369 1005 379 1003 380 997 370zM1012 237 1018 250 1016 251 1010 238zM1021 304 1027 314 1025 315 1019 305zM1008 363 1018 382 1013 384 1003 366zM1014 364 1020 372 1017 374 1011 366zM1011 366 1016 375 1013 377 1008 368zM1017 419 1024 432 1021 433 1015 420zM1017 350 1024 361 1020 363 1014 352zM1013 352 1020 363 1017 365 1010 354zM1006 352 1012 364 1006 367 1000 354z"/>
<path fill="#5a654e" opacity="0.55" d="M1137 285 1164 284 1165 290 1137 292zM1144 247 1171 247 1171 248 1144 248zM1144 257 1171 257 1171 259 1144 259zM1167 445 1203 447 1202 450 1167 448zM1167 449 1202 451 1202 455 1167 453zM1167 458 1202 460 1202 464 1166 462zM1230 404 1246 403 1246 405 1230 406zM1230 410 1246 409 1246 411 1230 412zM1230 412 1246 411 1246 413 1230 414zM1231 423 1247 422 1247 424 1231 424zM1195 352 1223 351 1223 353 1195 354zM1183 219 1215 219 1215 224 1183 223zM1115 284 1151 286 1151 288 1115 286zM1139 339 1171 338 1171 345 1139 346zM1139 178 1172 178 1172 180 1139 180zM1139 187 1172 187 1172 189 1139 189zM1139 189 1172 189 1172 191 1139 191zM1139 191 1172 192 1172 193 1139 193zM1139 196 1172 196 1172 198 1139 198zM1225 354 1241 353 1242 360 1225 360zM1225 361 1242 361 1242 367 1225 367zM1225 369 1242 368 1242 375 1225 375zM1107 176 1142 177 1142 181 1107 180zM1235 424 1250 423 1250 426 1235 426zM1140 229 1163 229 1163 233 1140 233zM1140 243 1163 243 1163 247 1140 247zM1145 443 1166 444 1166 449 1144 448zM1221 251 1241 251 1241 255 1221 255zM1221 256 1241 255 1241 259 1222 260zM1141 349 1169 349 1169 353 1141 353zM1152 364 1167 365 1167 370 1152 369zM1105 258 1128 259 1128 262 1105 261zM1144 443 1169 442 1169 446 1144 448zM1227 206 1256 206 1256 210 1227 210zM1227 211 1256 211 1256 215 1227 216zM1166 372 1191 371 1192 375 1167 377zM1127 397 1162 394 1163 400 1127 402zM1193 205 1223 206 1223 208 1193 207zM1192 213 1223 215 1223 217 1192 216zM1123 403 1147 403 1146 405 1123 405zM1123 408 1146 408 1146 411 1123 410zM1099 225 1126 226 1126 231 1098 231zM1141 448 1155 449 1155 452 1141 451zM1236 397 1263 396 1263 400 1236 401zM1210 348 1234 347 1234 350 1210 351zM1153 169 1185 168 1185 173 1153 174zM1174 323 1205 323 1205 327 1174 328zM1133 344 1157 343 1157 348 1133 348zM1158 420 1186 420 1186 425 1158 424zM1213 348 1235 348 1235 352 1213 352zM1157 394 1186 394 1186 397 1158 397zM1158 398 1186 397 1186 400 1158 400zM1241 238 1258 237 1258 239 1241 240zM1151 332 1176 331 1177 336 1151 337zM1104 415 1119 415 1119 419 1104 419zM1104 420 1119 420 1119 423 1104 423zM1104 424 1119 424 1119 427 1104 427zM1189 266 1225 264 1226 269 1190 272zM1190 268 1212 267 1212 273 1190 273zM1188 406 1206 406 1207 410 1189 411zM1189 411 1207 411 1207 415 1189 416zM1189 416 1207 416 1207 420 1189 421zM1189 421 1207 421 1207 425 1189 426zM1229 221 1247 220 1247 225 1229 226zM1222 402 1250 401 1250 408 1222 408zM1206 252 1237 251 1237 255 1206 256zM1129 413 1148 412 1148 418 1129 418zM1236 157 1262 159 1262 163 1236 162zM1236 163 1262 164 1261 169 1236 168zM1143 219 1158 218 1158 223 1143 223zM1223 169 1242 168 1242 171 1223 171zM1231 351 1264 350 1264 353 1231 354zM1123 173 1148 174 1148 176 1123 176zM1142 212 1174 214 1174 217 1142 215zM1070 279 1088 288 1086 293 1067 283zM1067 284 1085 294 1083 299 1064 289zM1067 282 1078 287 1077 290 1066 285zM1091 296 1116 312 1114 315 1090 299zM1077 329 1103 343 1102 345 1076 331zM1075 333 1101 347 1100 349 1074 335zM1076 303 1093 314 1091 318 1074 307zM1071 311 1088 323 1085 326 1068 315zM1047 338 1064 349 1062 352 1045 341zM1091 242 1101 249 1100 252 1089 245zM1043 362 1056 370 1054 372 1042 364zM1084 237 1107 249 1106 251 1083 239zM1083 239 1106 251 1105 253 1082 241zM1026 393 1050 410 1047 414 1023 397zM1045 393 1064 405 1063 406 1044 395zM1068 428 1090 441 1089 443 1067 430zM1101 235 1116 246 1115 248 1099 237zM1098 239 1114 250 1113 251 1097 241zM1093 246 1109 257 1108 259 1092 248zM1090 250 1106 261 1105 263 1089 252zM1040 418 1055 428 1053 431 1038 421zM1071 301 1091 313 1089 315 1070 304zM1053 411 1075 422 1074 426 1051 415zM1051 416 1073 427 1071 430 1049 419zM1047 424 1069 435 1067 439 1045 428zM1093 252 1118 264 1117 266 1092 254zM1058 314 1078 328 1077 330 1056 317zM1054 320 1075 333 1073 336 1053 322zM1086 260 1108 272 1107 274 1084 262zM1079 271 1102 284 1100 286 1078 274zM1094 368 1113 377 1112 380 1093 371zM1044 249 1059 257 1058 259 1043 251zM1038 350 1058 362 1057 365 1036 352zM1053 351 1069 360 1068 362 1052 352zM1105 440 1124 449 1123 451 1104 441zM1102 446 1121 455 1120 457 1101 448zM1098 454 1117 463 1116 465 1097 456zM1086 276 1102 285 1100 287 1084 278zM1074 445 1090 455 1087 459 1071 449zM1465 409 1465 427 1462 427 1462 409zM1296 223 1297 259 1291 260 1290 224zM1452 164 1452 184 1450 184 1450 164zM1551 258 1551 290 1547 290 1548 258zM1394 354 1394 369 1392 369 1392 354zM1389 354 1390 369 1388 369 1387 354zM1382 355 1383 370 1381 370 1380 355zM1380 355 1380 370 1379 370 1378 355zM1378 355 1378 370 1376 370 1376 355zM1375 355 1376 370 1374 370 1373 355zM1373 355 1374 370 1372 370 1371 355zM1544 414 1543 444 1537 444 1538 414zM1488 288 1488 307 1483 307 1483 288zM1429 206 1429 220 1425 220 1425 206zM1522 308 1522 332 1519 332 1520 308zM1277 210 1276 231 1273 231 1274 210zM1394 247 1394 270 1389 270 1389 247zM1389 247 1388 270 1383 270 1384 247zM1383 247 1382 270 1377 270 1378 247zM1354 320 1352 348 1350 348 1351 320zM1348 319 1346 347 1344 347 1345 319zM1342 319 1340 347 1338 347 1339 319zM1336 319 1335 347 1332 347 1333 319zM1325 227 1325 254 1319 254 1320 226zM1336 433 1337 460 1335 460 1334 433zM1419 433 1419 471 1416 471 1416 433zM1493 382 1493 416 1487 416 1488 382zM1365 218 1366 245 1363 245 1362 218zM1362 218 1362 245 1359 245 1359 218zM1473 354 1474 377 1471 377 1470 354zM1465 354 1466 377 1463 377 1462 354zM1461 354 1462 378 1459 378 1458 354zM1447 388 1448 418 1446 418 1444 388zM1519 397 1519 413 1517 413 1517 397zM1415 184 1415 223 1413 223 1413 184zM1410 184 1410 223 1408 223 1408 184zM1442 293 1444 322 1440 322 1439 293zM1311 346 1313 382 1308 382 1306 346zM1305 346 1307 382 1302 382 1300 346zM1502 412 1501 429 1499 429 1499 412zM1380 210 1382 247 1379 247 1378 210zM1394 147 1394 185 1392 185 1392 147zM1391 147 1391 185 1389 185 1389 147zM1338 221 1336 259 1332 259 1334 221zM1333 221 1332 259 1328 259 1329 221zM1328 221 1327 259 1323 258 1324 221zM1371 168 1372 195 1370 196 1369 168zM1282 285 1281 321 1279 321 1280 285zM1349 308 1351 346 1347 347 1346 309zM1341 309 1343 347 1339 347 1337 309zM1337 309 1339 347 1335 347 1333 309zM1252 250 1253 280 1248 280 1247 250zM1447 198 1448 232 1446 232 1445 198zM1316 442 1316 465 1314 465 1314 442zM1391 399 1393 429 1390 429 1389 399zM1364 442 1362 476 1360 476 1361 442zM1285 195 1285 219 1281 219 1281 195zM1270 195 1270 219 1265 219 1266 195zM1371 320 1371 338 1367 338 1366 320zM1366 320 1366 338 1362 338 1361 320zM1476 354 1476 371 1472 371 1472 354zM1474 388 1473 419 1470 419 1471 388zM1529 287 1529 314 1526 314 1527 287zM1571 283 1572 310 1568 311 1567 283zM1380 353 1380 382 1377 382 1377 353zM1520 362 1521 401 1517 401 1516 362zM1488 239 1487 278 1481 278 1482 239zM1369 283 1369 310 1365 310 1365 283zM1426 225 1427 250 1422 250 1421 225zM1536 327 1535 353 1533 353 1534 327zM1533 327 1532 353 1531 353 1532 327zM1525 327 1524 353 1522 352 1523 327zM1522 327 1521 352 1520 352 1521 327zM1535 189 1535 205 1529 205 1530 188zM1531 205 1532 221 1529 221 1528 205zM1333 221 1333 252 1329 252 1330 221zM1549 157 1549 186 1546 186 1546 157zM1555 191 1556 211 1554 211 1554 191zM1551 191 1551 212 1549 212 1549 191zM1549 191 1549 212 1547 212 1547 191zM1537 191 1538 212 1536 212 1535 192zM1450 326 1449 353 1444 353 1445 326zM1526 251 1525 285 1523 285 1524 251zM1452 194 1452 208 1450 208 1450 194zM1557 324 1556 355 1554 355 1555 324zM1279 216 1279 248 1277 248 1277 216zM1409 319 1409 346 1404 346 1404 319zM1527 404 1527 424 1522 424 1522 405zM1503 170 1503 206 1499 206 1499 170zM1536 438 1536 470 1533 470 1533 438zM1532 438 1532 470 1529 470 1529 438zM1528 438 1528 470 1525 470 1525 438zM1525 438 1524 470 1521 470 1521 438zM1351 265 1352 287 1350 287 1349 265zM1347 265 1348 287 1346 287 1345 265zM1345 265 1346 287 1344 287 1343 265zM1336 266 1337 288 1336 288 1334 266zM1261 333 1261 353 1258 353 1258 333zM1257 333 1257 353 1254 353 1254 333zM1254 333 1254 353 1250 353 1251 333zM1250 333 1250 353 1247 353 1247 333zM1318 192 1319 208 1310 208 1309 193zM1318 276 1320 310 1314 310 1313 276zM1378 436 1378 473 1374 473 1374 436zM1374 436 1374 473 1370 473 1370 436zM1365 436 1365 473 1362 473 1362 436zM1361 436 1361 473 1358 473 1357 436zM1467 413 1468 433 1466 434 1465 413zM1498 307 1498 334 1495 334 1495 307zM1356 302 1357 321 1353 321 1353 302zM1395 320 1396 358 1393 358 1391 320zM1494 241 1495 263 1490 264 1490 241zM1489 241 1489 264 1485 264 1484 242zM1483 358 1482 397 1479 397 1481 358zM1480 358 1478 397 1476 397 1477 358zM1474 358 1472 397 1470 397 1471 358zM1414 440 1414 476 1408 477 1408 440zM1318 399 1319 436 1314 436 1314 400zM1313 400 1314 436 1309 436 1308 400zM1307 400 1308 436 1303 436 1303 400zM1290 152 1289 181 1285 181 1286 152zM1277 152 1276 181 1272 180 1273 151zM1281 197 1281 234 1276 234 1277 197zM1276 197 1276 234 1271 234 1272 197zM1375 271 1375 297 1371 297 1371 271zM1360 271 1360 297 1356 297 1356 271zM1355 271 1355 297 1351 297 1351 272zM1486 418 1485 451 1482 451 1483 418zM1439 239 1439 267 1434 267 1435 239zM1250 348 1251 382 1249 382 1248 348zM1281 229 1281 266 1279 266 1279 229zM1270 229 1270 266 1268 266 1268 229zM1262 229 1262 265 1260 265 1260 229zM1470 205 1469 233 1467 233 1467 205zM1467 205 1466 233 1464 233 1465 205zM1464 205 1464 233 1461 233 1462 205zM1461 205 1461 233 1458 233 1459 205zM1459 205 1458 233 1456 233 1456 205zM1467 338 1468 377 1465 377 1464 339zM1464 339 1465 377 1462 377 1461 339zM1449 339 1449 377 1447 377 1446 339zM1449 156 1447 190 1443 190 1445 156zM1315 200 1315 231 1309 232 1309 201zM1545 443 1546 466 1542 467 1541 443zM1438 297 1439 326 1433 326 1432 297zM1519 194 1519 233 1516 233 1516 194zM1561 425 1562 447 1558 447 1558 425zM1463 202 1463 235 1458 235 1458 202zM1457 202 1457 235 1452 235 1452 202zM1250 207 1251 233 1246 234 1245 207zM1475 170 1473 206 1471 206 1472 170zM1468 170 1467 205 1464 205 1466 170zM1411 318 1412 349 1409 349 1408 318zM1408 318 1408 349 1405 349 1405 318zM1436 395 1435 415 1431 415 1431 395zM1369 441 1368 465 1363 465 1364 441zM1363 440 1363 465 1358 465 1358 440zM995 250 1005 267 1003 269 992 251zM991 266 998 279 996 280 990 267zM989 267 996 280 994 281 987 268zM1007 392 1012 402 1008 404 1003 395zM1004 295 1017 316 1015 317 1002 296zM1002 296 1014 317 1012 319 1000 297zM999 298 1012 319 1010 320 997 299zM997 299 1009 320 1007 322 995 300zM1011 328 1022 347 1019 349 1008 329zM1007 330 1018 349 1015 351 1004 331zM1024 310 1034 331 1032 332 1022 311zM1022 311 1031 332 1029 333 1020 312zM1015 240 1024 255 1021 257 1013 241zM1012 241 1021 257 1018 258 1010 243zM1009 243 1018 258 1016 260 1007 244zM1018 361 1024 370 1021 372 1015 364zM1014 420 1021 433 1019 434 1012 421zM1014 328 1022 340 1017 343 1009 331zM1008 332 1016 344 1012 347 1003 335z"/>
<path fill="#48553f" opacity="0.55" d="M1128 357 1152 355 1152 360 1128 361zM1128 362 1152 361 1152 365 1129 367zM1144 251 1171 251 1171 253 1144 253zM1114 162 1135 162 1135 163 1114 164zM1114 177 1135 177 1135 179 1114 179zM1109 415 1128 416 1128 419 1109 418zM1139 183 1172 183 1172 185 1139 185zM1214 324 1248 325 1248 330 1214 328zM1214 329 1248 331 1248 335 1214 334zM1107 181 1142 182 1142 186 1107 185zM1235 414 1250 414 1250 416 1235 416zM1235 416 1250 416 1250 418 1235 418zM1235 419 1250 419 1250 421 1235 421zM1235 421 1250 421 1250 423 1235 423zM1158 216 1184 214 1184 216 1159 218zM1159 226 1185 225 1185 227 1159 229zM1159 232 1185 230 1185 232 1160 234zM1160 234 1185 232 1186 235 1160 236zM1098 372 1126 372 1126 376 1098 376zM1098 376 1126 376 1126 380 1098 380zM1162 288 1191 288 1190 295 1162 294zM1181 412 1212 412 1212 414 1181 414zM1228 244 1254 246 1253 249 1227 247zM1227 255 1253 257 1253 260 1227 258zM1213 185 1238 184 1238 187 1213 188zM1213 189 1238 188 1239 191 1213 192zM1214 193 1239 192 1239 195 1214 196zM1166 170 1199 168 1200 174 1167 176zM1167 177 1200 175 1200 181 1167 183zM1127 403 1163 401 1163 406 1128 409zM1234 183 1255 184 1255 192 1233 191zM1105 451 1135 450 1135 456 1106 456zM1142 308 1161 309 1161 313 1142 312zM1150 349 1171 349 1171 354 1150 355zM1150 356 1171 355 1172 361 1151 361zM1210 363 1235 362 1235 365 1210 366zM1133 199 1160 200 1160 207 1133 207zM1153 163 1185 162 1185 167 1153 168zM1201 404 1230 402 1230 404 1201 406zM1201 409 1230 407 1230 409 1201 411zM1201 413 1230 412 1230 414 1201 415zM1174 334 1205 334 1205 338 1174 339zM1104 432 1138 430 1139 437 1104 439zM1103 307 1127 308 1127 311 1102 310zM1128 374 1150 374 1150 378 1128 377zM1128 382 1150 383 1150 386 1127 386zM1240 230 1257 230 1257 232 1240 232zM1240 233 1257 232 1257 234 1241 235zM1241 235 1257 235 1257 237 1241 238zM1235 215 1258 217 1258 219 1234 218zM1234 219 1258 220 1258 223 1234 221zM1120 177 1155 177 1155 182 1120 182zM1172 336 1191 336 1191 339 1171 338zM1135 286 1160 286 1160 288 1135 288zM1135 292 1160 292 1160 295 1135 295zM1135 299 1160 299 1160 302 1135 302zM1105 285 1135 284 1135 288 1106 290zM1104 205 1134 206 1134 209 1104 207zM1104 208 1134 209 1134 212 1104 210zM1104 211 1134 212 1134 215 1104 213zM1104 214 1134 215 1134 218 1104 216zM1129 419 1148 418 1148 424 1129 424zM1129 425 1148 424 1148 429 1129 430zM1236 168 1261 170 1261 174 1236 173zM1214 274 1230 275 1230 277 1214 276zM1214 281 1230 282 1230 284 1214 283zM1231 354 1264 354 1264 356 1231 357zM1232 357 1264 357 1264 359 1232 360zM1232 360 1264 360 1264 362 1232 363zM1066 285 1076 291 1075 294 1064 288zM1062 293 1073 298 1071 301 1060 296zM1097 284 1111 294 1110 296 1096 286zM1089 245 1100 252 1098 254 1087 248zM1066 360 1088 370 1086 373 1065 363zM1075 294 1095 306 1093 309 1074 297zM1072 273 1086 280 1085 282 1071 275zM1038 416 1060 431 1057 435 1035 420zM1083 324 1107 337 1104 342 1080 329zM1081 268 1103 281 1102 283 1079 271zM1091 375 1110 384 1109 387 1090 377zM1028 287 1039 294 1036 298 1026 291zM1485 252 1487 289 1483 289 1481 252zM1273 270 1273 307 1270 307 1269 270zM1555 182 1556 205 1553 205 1552 182zM1450 164 1450 184 1448 184 1448 164zM1437 164 1437 184 1435 184 1435 164zM1557 430 1556 469 1554 469 1555 430zM1559 258 1559 291 1555 291 1556 258zM1555 258 1555 291 1551 290 1552 258zM1547 258 1547 290 1543 290 1544 258zM1539 258 1539 290 1535 290 1536 258zM1502 222 1502 255 1500 255 1499 222zM1477 287 1477 327 1476 327 1476 287zM1415 410 1413 449 1408 449 1409 410zM1340 190 1342 218 1335 218 1334 190zM1508 397 1507 413 1502 413 1502 397zM1362 161 1363 191 1360 191 1360 161zM1345 319 1343 347 1341 347 1342 319zM1251 159 1252 182 1246 183 1245 160zM1516 452 1517 468 1513 468 1512 453zM1512 453 1512 468 1508 468 1507 453zM1507 453 1507 468 1503 468 1503 453zM1331 227 1331 255 1326 254 1326 227zM1343 162 1342 193 1339 193 1339 162zM1547 322 1548 352 1546 352 1545 322zM1545 322 1545 352 1543 352 1543 322zM1380 428 1379 467 1374 467 1375 428zM1348 432 1349 459 1346 460 1345 432zM1562 155 1561 174 1556 174 1557 155zM1306 314 1307 333 1301 333 1300 314zM1437 301 1436 316 1433 316 1434 301zM1422 184 1422 223 1420 223 1420 184zM1434 293 1435 322 1432 322 1430 293zM1329 277 1330 298 1325 299 1324 277zM1509 412 1509 429 1507 429 1507 412zM1507 412 1506 429 1504 429 1505 412zM1499 412 1498 429 1496 428 1497 412zM1494 412 1493 428 1491 428 1492 412zM1359 235 1359 267 1357 267 1357 235zM1366 211 1368 248 1365 248 1364 211zM1295 420 1294 435 1291 435 1291 420zM1282 314 1282 328 1279 328 1279 313zM1273 313 1273 328 1270 328 1270 313zM1270 313 1270 328 1267 328 1267 313zM1353 284 1353 313 1349 313 1348 284zM1289 363 1288 391 1283 391 1284 363zM1283 363 1282 391 1277 391 1278 363zM1270 363 1269 391 1264 390 1265 363zM1263 285 1262 320 1259 320 1260 284zM1468 286 1468 301 1464 301 1464 286zM1435 325 1435 342 1431 342 1430 325zM1354 252 1355 288 1350 288 1350 252zM1268 378 1269 394 1264 394 1263 378zM1526 368 1524 406 1520 406 1521 368zM1523 195 1521 230 1516 230 1517 195zM1462 198 1463 231 1461 231 1459 198zM1449 198 1451 232 1449 232 1447 198zM1442 198 1444 232 1441 232 1440 199zM1567 366 1567 382 1563 382 1562 366zM1434 443 1434 458 1428 458 1429 443zM1537 395 1537 420 1532 420 1532 395zM1531 395 1531 420 1527 420 1527 395zM1526 395 1526 420 1521 420 1521 395zM1520 395 1521 420 1516 420 1516 395zM1515 395 1515 420 1511 420 1510 395zM1461 388 1460 418 1457 418 1458 388zM1511 286 1511 314 1508 314 1509 286zM1477 356 1477 374 1472 373 1473 356zM1467 263 1467 287 1462 287 1462 263zM1258 335 1258 371 1256 372 1255 335zM1511 362 1512 401 1508 401 1507 362zM1495 239 1494 278 1488 278 1489 239zM1521 419 1521 442 1518 442 1519 419zM1515 419 1514 442 1512 442 1512 419zM1508 419 1508 442 1505 442 1506 419zM1505 419 1505 442 1502 442 1503 419zM1441 225 1442 249 1438 250 1437 225zM1475 336 1474 374 1471 374 1472 335zM1472 335 1471 374 1468 374 1469 335zM1465 335 1464 374 1461 374 1462 335zM1462 335 1460 374 1458 374 1459 335zM1529 327 1528 353 1526 353 1527 327zM1428 335 1428 355 1426 355 1426 335zM1424 335 1423 355 1421 355 1422 335zM1556 260 1556 283 1552 283 1552 260zM1552 260 1552 283 1548 283 1548 260zM1331 405 1331 421 1329 421 1329 405zM1568 194 1570 230 1566 230 1565 194zM1549 195 1551 231 1547 231 1546 195zM1542 158 1543 186 1540 186 1540 158zM1312 433 1311 450 1308 450 1309 433zM1271 220 1271 243 1266 243 1265 220zM1544 191 1545 212 1543 212 1542 191zM1539 191 1540 212 1538 212 1538 191zM1373 344 1373 363 1369 363 1368 344zM1362 344 1363 363 1358 363 1358 344zM1407 363 1408 397 1406 397 1405 363zM1571 324 1570 356 1568 355 1569 324zM1568 324 1567 355 1565 355 1566 324zM1554 324 1553 355 1551 355 1552 324zM1567 404 1566 433 1561 433 1562 404zM1561 403 1560 433 1555 433 1556 403zM1555 403 1554 433 1549 433 1550 403zM1325 321 1325 351 1322 351 1323 321zM1332 368 1330 404 1328 404 1329 367zM1329 367 1327 404 1325 404 1326 367zM1323 367 1322 404 1319 404 1321 367zM1320 367 1319 404 1316 404 1318 367zM1317 367 1316 404 1313 404 1315 367zM1330 418 1329 433 1325 433 1326 418zM1325 418 1325 433 1321 432 1321 418zM1320 418 1320 432 1316 432 1316 418zM1316 418 1315 432 1311 432 1312 418zM1384 290 1384 329 1382 329 1382 290zM1373 290 1373 329 1371 329 1371 290zM1499 170 1498 206 1495 206 1495 170zM1540 438 1540 470 1537 470 1537 438zM1349 265 1350 287 1348 287 1347 265zM1338 266 1339 288 1338 288 1336 266zM1304 413 1303 443 1299 442 1300 413zM1491 250 1491 278 1488 278 1488 250zM1488 250 1488 278 1486 278 1486 250zM1482 250 1483 278 1480 278 1480 250zM1477 250 1477 278 1475 278 1475 250zM1474 250 1474 278 1472 278 1472 250zM1471 250 1472 278 1469 278 1469 250zM1482 412 1483 433 1480 433 1480 412zM1479 412 1480 433 1478 433 1477 412zM1469 413 1470 433 1468 433 1467 413zM1465 413 1465 434 1463 434 1463 413zM1569 421 1569 436 1563 436 1563 421zM1394 421 1393 449 1389 448 1390 421zM1346 205 1346 220 1341 220 1341 205zM1280 387 1279 426 1275 426 1276 387zM1275 387 1274 426 1270 426 1271 387zM1270 387 1269 426 1265 426 1265 387zM1294 152 1293 181 1289 181 1290 152zM1271 197 1270 234 1266 234 1267 197zM1489 418 1488 451 1485 451 1486 418zM1477 418 1476 450 1474 450 1474 418zM1474 418 1473 450 1471 450 1471 418zM1445 239 1444 268 1440 268 1440 239zM1260 361 1262 398 1258 398 1257 361zM1543 196 1544 234 1542 234 1541 196zM1430 361 1431 376 1427 376 1427 362zM1473 205 1472 233 1470 233 1470 205zM1569 203 1568 242 1564 242 1565 203zM1565 203 1564 242 1560 242 1561 203zM1552 203 1552 242 1548 241 1549 203zM1322 200 1322 231 1316 231 1316 200zM1480 417 1480 440 1477 439 1478 417zM1477 417 1477 439 1474 439 1475 417zM1474 417 1474 439 1471 439 1472 417zM1506 399 1507 425 1504 425 1503 399zM1307 402 1308 426 1306 426 1305 402zM1305 402 1305 426 1303 426 1302 403zM1302 403 1302 426 1300 426 1300 403zM1296 403 1297 426 1295 426 1294 403zM1291 403 1291 426 1289 426 1289 403zM1286 403 1286 426 1284 426 1283 403zM1283 403 1283 426 1281 426 1280 403zM1445 297 1446 326 1440 326 1439 297zM1431 297 1432 326 1426 326 1425 298zM1424 298 1425 326 1419 326 1418 298zM1283 162 1282 188 1276 188 1277 162zM1269 162 1268 187 1261 187 1263 161zM1356 199 1357 225 1353 225 1352 199zM1352 199 1352 225 1348 225 1347 200zM1347 200 1347 225 1343 225 1343 200zM1256 294 1256 320 1251 320 1251 294zM1262 206 1263 233 1258 233 1257 207zM1512 283 1513 313 1509 313 1509 283zM1508 283 1508 313 1505 313 1505 283zM1262 419 1262 435 1260 435 1260 419zM1348 328 1348 350 1344 350 1344 328zM1488 188 1488 211 1482 211 1482 188zM1415 318 1415 349 1412 349 1412 318zM1380 294 1381 312 1377 312 1377 294zM1256 171 1256 197 1254 197 1254 171zM1538 367 1537 406 1535 406 1535 367zM1331 249 1332 263 1330 263 1329 249zM1329 249 1329 264 1327 264 1327 249zM1324 249 1324 264 1322 264 1322 249zM1308 346 1307 378 1303 378 1304 346zM1000 246 1011 264 1009 265 998 248zM1009 316 1019 337 1015 339 1005 318zM997 255 1005 268 1002 270 994 256zM991 258 998 272 995 273 988 260zM1018 234 1024 247 1022 248 1016 235zM1009 238 1015 251 1013 252 1007 239zM1026 301 1032 311 1030 312 1024 302zM1014 308 1022 325 1020 326 1012 309zM1010 311 1022 332 1018 334 1007 313z"/>
<path fill="#4e5a47" opacity="0.55" d="M1144 249 1171 249 1171 251 1144 251zM1144 253 1171 253 1171 255 1144 255zM1144 259 1171 259 1171 261 1144 261zM1167 454 1202 456 1202 459 1167 457zM1115 293 1150 295 1150 297 1114 295zM1196 350 1213 351 1213 357 1196 356zM1196 357 1213 358 1213 364 1196 363zM1193 373 1214 373 1214 377 1193 377zM1193 383 1214 383 1214 387 1193 387zM1191 282 1206 281 1207 287 1192 288zM1154 328 1168 328 1168 331 1154 332zM1105 263 1128 262 1128 266 1105 267zM1181 417 1212 416 1213 418 1181 418zM1181 421 1213 421 1213 422 1181 423zM1181 425 1213 425 1213 427 1181 427zM1181 427 1213 427 1213 429 1181 429zM1181 429 1213 429 1213 431 1181 431zM1141 359 1162 360 1162 365 1140 365zM1227 450 1243 449 1244 452 1227 453zM1227 454 1244 453 1244 456 1227 457zM1227 461 1244 460 1244 463 1227 464zM1227 464 1244 463 1244 466 1228 467zM1228 468 1244 467 1245 470 1228 471zM1202 366 1217 366 1217 369 1202 369zM1221 250 1241 249 1241 253 1222 254zM1142 312 1161 313 1161 317 1142 316zM1150 194 1170 195 1170 198 1150 197zM1123 406 1146 406 1146 408 1123 408zM1133 367 1166 366 1166 369 1133 370zM1099 219 1126 220 1126 225 1099 225zM1103 266 1122 266 1122 269 1103 270zM1210 355 1234 355 1234 358 1210 359zM1153 174 1185 174 1185 179 1154 179zM1133 349 1157 349 1157 354 1133 354zM1225 276 1257 276 1257 281 1225 281zM1221 333 1254 332 1255 336 1221 337zM1235 206 1259 207 1259 210 1235 209zM1120 171 1155 171 1155 176 1120 176zM1206 253 1230 255 1230 257 1206 255zM1221 321 1248 321 1248 325 1221 325zM1237 170 1262 171 1261 176 1236 174zM1236 175 1261 177 1261 181 1236 180zM1130 380 1163 378 1164 382 1130 384zM1206 257 1237 255 1238 259 1206 260zM1106 365 1136 366 1136 371 1106 370zM1090 265 1105 272 1104 275 1089 267zM1096 290 1120 306 1118 308 1094 293zM1074 335 1100 349 1099 351 1073 337zM1068 316 1085 327 1083 330 1066 319zM1098 282 1113 291 1111 293 1097 284zM1095 286 1110 296 1108 298 1094 288zM1039 369 1052 377 1050 378 1038 371zM1068 347 1081 356 1079 360 1065 351zM1079 246 1102 258 1102 260 1078 248zM1089 263 1111 278 1109 281 1087 266zM1087 266 1109 281 1107 284 1085 269zM1076 408 1094 418 1093 420 1075 409zM1028 351 1047 362 1045 365 1026 354zM1026 354 1045 366 1043 368 1024 357zM1024 357 1043 369 1042 371 1022 360zM1051 321 1068 330 1067 332 1050 322zM1050 323 1067 332 1066 334 1049 325zM1049 325 1066 335 1065 336 1048 327zM1046 329 1063 339 1062 341 1045 331zM1071 275 1085 282 1084 284 1070 277zM1033 431 1050 440 1049 442 1032 433zM1071 309 1096 322 1094 325 1070 312zM1070 312 1094 325 1093 328 1068 315zM1082 266 1105 278 1103 280 1081 268zM1054 374 1070 383 1067 388 1051 378zM1050 355 1066 364 1065 366 1049 356zM1071 450 1087 460 1084 464 1068 454zM1490 252 1491 289 1487 289 1486 252zM1480 252 1482 289 1478 289 1477 252zM1476 252 1477 289 1473 289 1472 252zM1368 296 1368 320 1363 320 1363 296zM1357 296 1357 320 1352 320 1352 296zM1564 181 1565 205 1562 205 1562 181zM1561 181 1562 205 1559 205 1558 181zM1558 181 1559 205 1556 205 1555 182zM1549 182 1550 206 1547 206 1546 182zM1434 164 1435 184 1433 184 1432 164zM1492 236 1492 270 1487 270 1486 236zM1289 318 1288 347 1285 347 1286 318zM1540 323 1540 360 1537 360 1536 323zM1396 354 1397 369 1395 369 1394 354zM1340 310 1340 330 1335 330 1336 310zM1388 153 1388 189 1383 188 1383 153zM1507 222 1508 255 1506 255 1505 222zM1517 308 1516 332 1514 332 1515 308zM1335 381 1334 413 1328 413 1329 381zM1328 381 1326 413 1320 413 1322 380zM1321 380 1319 413 1313 412 1315 380zM1398 315 1397 352 1394 352 1396 315zM1356 320 1355 348 1353 348 1354 320zM1351 320 1349 348 1347 347 1348 319zM1263 159 1264 182 1259 182 1258 159zM1467 359 1467 376 1461 376 1461 359zM1359 432 1360 459 1358 459 1357 432zM1354 432 1355 459 1352 459 1351 432zM1369 218 1369 245 1366 245 1366 218zM1496 223 1496 237 1493 237 1493 223zM1432 242 1433 269 1430 269 1429 242zM1299 346 1301 382 1296 382 1294 347zM1344 409 1344 441 1338 441 1338 409zM1489 347 1489 385 1486 385 1485 347zM1481 347 1482 385 1478 385 1478 347zM1512 412 1511 429 1509 429 1510 412zM1347 235 1347 267 1345 267 1345 235zM1274 155 1274 182 1273 182 1272 155zM1267 155 1268 182 1266 182 1266 155zM1263 155 1264 182 1262 182 1261 156zM1261 156 1262 182 1260 182 1259 156zM1259 156 1259 182 1258 182 1257 156zM1468 366 1467 384 1463 384 1463 366zM1463 366 1462 384 1458 383 1458 366zM1379 168 1380 195 1378 195 1377 168zM1355 424 1356 452 1351 452 1349 424zM1349 424 1350 452 1345 453 1343 425zM1551 173 1551 190 1549 190 1549 173zM1554 429 1554 446 1550 446 1550 429zM1545 429 1545 446 1541 446 1541 429zM1541 429 1541 446 1537 446 1537 429zM1535 363 1535 382 1533 382 1533 363zM1533 363 1532 382 1530 382 1531 363zM1531 363 1530 382 1528 382 1528 363zM1528 363 1527 382 1525 382 1526 363zM1503 402 1502 426 1500 425 1501 402zM1454 198 1456 232 1454 232 1452 198zM1493 357 1493 374 1488 374 1489 357zM1449 323 1449 361 1445 361 1446 323zM1363 348 1363 362 1361 362 1360 348zM1538 328 1537 353 1535 353 1536 327zM1424 434 1425 452 1420 452 1419 435zM1436 335 1435 355 1433 355 1434 335zM1431 335 1430 355 1428 355 1429 335zM1441 199 1440 223 1438 223 1439 199zM1542 191 1542 212 1540 212 1540 191zM1352 344 1352 363 1347 363 1347 344zM1523 251 1522 285 1520 285 1521 251zM1345 230 1343 255 1340 255 1341 230zM1337 230 1336 255 1333 255 1334 230zM1334 230 1332 255 1329 254 1331 230zM1352 387 1352 422 1350 422 1349 387zM1414 363 1415 397 1413 397 1412 363zM1449 194 1449 208 1447 208 1447 194zM1439 194 1439 208 1437 208 1437 194zM1293 290 1294 323 1290 324 1289 291zM1573 324 1572 356 1570 356 1571 324zM1271 216 1271 248 1268 248 1268 216zM1268 216 1268 248 1266 248 1266 216zM1332 321 1332 351 1329 351 1329 321zM1329 321 1328 351 1325 351 1326 321zM1440 373 1441 402 1439 402 1438 373zM1438 373 1439 402 1437 402 1436 374zM1436 374 1437 402 1435 402 1434 374zM1431 374 1433 402 1431 402 1429 374zM1429 374 1430 402 1429 402 1427 374zM1427 374 1428 402 1426 403 1425 374zM1423 374 1424 403 1422 403 1421 374zM1325 215 1325 235 1322 235 1322 215zM1523 146 1523 177 1520 177 1520 146zM1299 305 1300 338 1298 338 1297 305zM1495 170 1494 206 1490 205 1491 170zM1490 170 1490 205 1486 205 1487 170zM1500 211 1501 228 1499 228 1498 212zM1369 436 1370 473 1366 473 1366 436zM1485 250 1485 278 1483 278 1483 250zM1301 217 1300 232 1296 232 1296 217zM1472 413 1473 433 1471 433 1470 413zM1515 306 1516 334 1513 334 1513 306zM1507 307 1507 334 1504 334 1504 307zM1504 307 1504 334 1501 334 1501 307zM1501 307 1501 334 1498 334 1498 307zM1492 307 1492 334 1489 334 1489 307zM1565 418 1565 450 1561 450 1560 418zM1501 247 1502 270 1498 270 1498 247zM1562 421 1562 436 1556 436 1557 421zM1549 421 1548 436 1543 436 1543 421zM1359 387 1359 427 1357 427 1357 387zM1283 322 1285 361 1281 362 1280 322zM1341 326 1342 346 1338 347 1337 326zM1265 387 1264 426 1260 426 1260 387zM1285 152 1284 181 1281 181 1282 152zM1466 341 1466 356 1461 355 1462 341zM1287 197 1286 234 1282 234 1282 197zM1377 157 1377 190 1375 190 1375 157zM1374 157 1375 190 1372 190 1372 157zM1372 157 1372 190 1370 190 1370 157zM1367 157 1367 190 1365 190 1365 157zM1362 157 1362 190 1360 190 1360 157zM1360 157 1360 190 1358 190 1358 157zM1357 157 1358 190 1356 190 1355 157zM1370 271 1370 297 1366 297 1366 271zM1480 418 1479 451 1476 450 1477 418zM1553 227 1554 258 1550 258 1549 227zM1312 231 1312 262 1308 262 1308 231zM1361 186 1362 205 1359 205 1359 186zM1440 361 1440 376 1436 376 1436 361zM1254 347 1255 382 1253 382 1252 348zM1268 229 1267 266 1265 265 1265 229zM1481 205 1480 233 1478 233 1479 205zM1373 410 1372 450 1366 450 1367 410zM1461 339 1462 377 1459 377 1458 339zM1457 157 1456 190 1452 190 1454 157zM1453 157 1451 190 1448 190 1449 156zM1440 156 1439 190 1435 189 1437 156zM1547 292 1546 327 1542 327 1543 292zM1454 303 1453 336 1449 335 1450 303zM1441 303 1440 335 1437 335 1438 303zM1437 303 1436 335 1433 335 1434 302zM1459 179 1458 196 1453 196 1454 179zM1345 161 1345 182 1341 182 1342 161zM1483 417 1483 440 1480 440 1481 417zM1288 403 1289 426 1286 426 1286 403zM1539 194 1539 233 1536 233 1536 194zM1440 439 1438 466 1433 466 1434 439zM1361 279 1360 302 1354 302 1355 279zM1421 189 1422 214 1420 214 1419 189zM1280 250 1280 273 1277 273 1278 250zM1377 231 1378 261 1375 262 1373 231zM1373 231 1374 262 1371 262 1369 231zM1369 232 1370 262 1367 262 1365 232zM1365 232 1366 262 1363 262 1361 232zM1361 232 1362 262 1359 262 1357 232zM1260 419 1259 435 1257 435 1257 419zM1397 293 1397 311 1394 312 1393 293zM1358 440 1357 465 1352 465 1353 440zM1473 222 1474 250 1472 250 1471 222zM1468 222 1469 250 1467 250 1465 222zM1465 222 1466 250 1464 250 1463 222zM1459 222 1461 251 1458 251 1457 222zM1457 222 1458 251 1455 251 1454 222zM1019 344 1032 365 1029 366 1016 346zM987 260 995 274 992 275 984 262zM1004 331 1015 351 1012 353 1001 333zM995 371 1000 381 998 382 993 372zM1021 232 1027 245 1025 247 1019 234zM1018 276 1024 289 1021 290 1015 277zM1012 278 1018 292 1015 293 1009 280zM1007 369 1013 377 1010 379 1004 371zM1016 307 1024 324 1022 325 1014 308zM1009 234 1020 257 1016 259 1005 236zM1019 311 1031 328 1029 329 1017 312z"/>
<path fill="#7c7b68" opacity="0.55" d="M1144 255 1171 255 1171 257 1144 257zM1168 440 1203 442 1203 446 1167 444zM1230 408 1246 407 1246 409 1230 410zM1230 419 1246 418 1247 419 1230 420zM1114 164 1135 164 1135 166 1114 166zM1195 357 1223 357 1223 359 1195 360zM1195 371 1223 370 1223 373 1195 373zM1196 365 1212 366 1212 372 1195 371zM1139 185 1172 185 1172 187 1139 187zM1193 387 1214 387 1214 391 1193 391zM1213 341 1247 342 1247 347 1213 345zM1216 200 1236 200 1236 203 1216 203zM1216 206 1236 207 1236 209 1216 209zM1216 209 1236 210 1236 213 1216 212zM1216 213 1236 213 1236 216 1216 215zM1235 411 1250 411 1250 413 1235 413zM1140 234 1163 234 1163 238 1140 238zM1222 261 1241 260 1241 264 1222 265zM1141 337 1169 337 1169 341 1141 341zM1141 341 1169 341 1169 345 1141 345zM1141 345 1169 345 1169 349 1141 349zM1105 255 1128 255 1128 258 1105 258zM1105 261 1128 262 1128 265 1104 264zM1198 422 1220 424 1220 427 1197 426zM1228 222 1257 221 1257 226 1228 226zM1159 418 1177 418 1177 421 1159 422zM1192 210 1223 212 1223 214 1192 213zM1142 316 1161 317 1161 321 1142 320zM1099 297 1127 297 1127 299 1099 299zM1223 359 1237 360 1237 366 1223 365zM1210 359 1234 358 1235 361 1210 362zM1133 208 1160 209 1160 216 1132 215zM1103 303 1127 304 1127 308 1103 306zM1240 228 1257 227 1257 229 1240 230zM1151 326 1176 325 1176 330 1151 331zM1172 324 1191 325 1191 327 1172 327zM1172 330 1191 330 1191 333 1172 333zM1190 274 1212 273 1212 279 1190 279zM1135 296 1160 296 1160 299 1135 299zM1204 173 1239 173 1239 177 1204 177zM1204 224 1222 223 1222 228 1205 228zM1205 234 1222 234 1222 239 1205 239zM1146 336 1172 335 1172 337 1147 338zM1142 213 1158 212 1158 217 1142 218zM1232 318 1248 317 1248 323 1232 323zM1058 286 1081 301 1079 303 1057 288zM1057 288 1079 303 1077 306 1055 290zM1083 387 1107 401 1106 403 1082 389zM1082 390 1106 403 1105 405 1081 392zM1081 392 1104 405 1103 407 1079 394zM1079 394 1103 408 1102 410 1078 396zM1078 396 1102 410 1101 412 1077 398zM1032 266 1043 272 1041 275 1030 269zM1045 341 1062 352 1060 355 1043 344zM1076 252 1099 264 1098 266 1075 254zM1068 421 1086 431 1085 433 1067 423zM1080 329 1098 338 1096 340 1079 332zM1084 382 1100 391 1099 394 1083 386zM1080 390 1096 399 1094 402 1078 394zM1047 327 1065 337 1064 339 1046 329zM1079 290 1100 301 1099 303 1078 292zM1078 292 1099 303 1098 305 1077 294zM1049 328 1069 342 1068 344 1047 331zM1073 306 1097 319 1096 322 1072 309zM1038 260 1053 268 1052 270 1037 262zM1101 448 1120 457 1119 459 1100 450zM1099 452 1118 461 1117 463 1098 454zM1419 293 1418 331 1416 331 1416 293zM1415 293 1415 331 1412 331 1412 293zM1269 270 1269 307 1266 307 1265 270zM1384 237 1385 277 1381 277 1380 237zM1351 278 1352 299 1347 299 1346 278zM1568 431 1568 469 1566 469 1566 431zM1566 431 1565 469 1563 469 1564 431zM1564 431 1563 469 1561 469 1562 431zM1561 431 1561 469 1559 469 1560 431zM1559 431 1559 469 1557 469 1557 430zM1555 430 1554 469 1552 469 1553 430zM1552 430 1552 469 1550 469 1550 430zM1550 430 1549 469 1548 469 1548 430zM1329 310 1329 330 1324 330 1325 309zM1369 335 1371 366 1369 366 1367 335zM1362 335 1363 366 1361 366 1360 335zM1371 153 1371 188 1366 188 1367 153zM1512 222 1513 255 1511 255 1510 222zM1510 222 1511 255 1508 255 1507 222zM1504 222 1505 255 1503 255 1502 222zM1499 222 1500 255 1498 255 1497 222zM1496 222 1497 255 1495 256 1494 222zM1493 222 1494 256 1492 256 1491 223zM1488 223 1489 256 1487 256 1486 223zM1450 144 1452 180 1447 180 1445 144zM1310 272 1311 302 1307 303 1306 272zM1305 151 1304 181 1301 180 1302 151zM1301 151 1300 180 1297 180 1298 150zM1297 150 1296 180 1293 180 1294 150zM1293 150 1292 180 1289 180 1290 150zM1289 150 1288 180 1285 180 1286 150zM1285 150 1284 180 1281 180 1282 150zM1383 315 1382 351 1379 351 1381 315zM1284 210 1283 232 1280 232 1281 210zM1350 161 1351 191 1348 191 1348 161zM1343 227 1343 255 1338 255 1338 227zM1552 322 1552 352 1550 352 1550 322zM1349 386 1350 418 1345 419 1345 386zM1453 233 1454 263 1450 264 1449 233zM1449 233 1450 264 1445 264 1445 233zM1431 433 1431 471 1428 471 1428 433zM1322 411 1321 441 1316 441 1317 411zM1310 411 1309 441 1304 440 1305 411zM1499 223 1499 237 1496 237 1496 223zM1438 388 1440 418 1437 418 1436 388zM1386 223 1385 240 1381 240 1381 223zM1333 391 1334 428 1329 429 1328 392zM1337 409 1337 441 1331 441 1330 409zM1375 307 1375 333 1369 333 1369 307zM1255 240 1255 273 1251 273 1251 240zM1496 412 1496 428 1494 428 1494 412zM1352 235 1352 267 1350 267 1350 235zM1280 344 1281 366 1278 366 1277 345zM1369 211 1370 248 1368 248 1367 211zM1363 211 1365 248 1363 248 1361 211zM1361 211 1362 248 1360 248 1358 211zM1276 313 1276 328 1273 328 1273 313zM1348 284 1348 313 1344 313 1343 284zM1417 234 1416 251 1414 251 1415 234zM1473 366 1472 384 1468 384 1468 366zM1458 365 1457 383 1453 383 1453 365zM1549 173 1548 190 1546 190 1547 173zM1429 325 1430 342 1426 342 1425 325zM1360 252 1360 288 1356 288 1355 252zM1349 252 1349 288 1345 288 1344 252zM1526 363 1525 382 1523 382 1523 363zM1509 402 1508 426 1507 426 1507 402zM1496 402 1495 425 1493 425 1494 401zM1459 198 1460 232 1458 232 1457 198zM1445 198 1446 232 1444 232 1443 198zM1551 367 1552 383 1548 383 1547 367zM1309 170 1310 209 1307 209 1306 170zM1458 444 1457 475 1455 475 1456 444zM1510 353 1509 392 1504 392 1504 353zM1503 353 1503 392 1497 392 1498 353zM1488 357 1487 374 1483 374 1483 357zM1480 263 1480 287 1475 287 1475 263zM1576 282 1577 310 1573 310 1572 283zM1522 397 1521 432 1517 432 1518 397zM1248 335 1248 372 1246 372 1246 335zM1550 388 1550 406 1542 406 1542 388zM1375 283 1375 310 1370 310 1370 283zM1364 283 1364 310 1360 310 1360 283zM1518 327 1517 352 1515 352 1516 327zM1516 327 1515 352 1513 352 1514 327zM1538 205 1538 221 1535 221 1535 205zM1342 230 1341 266 1338 266 1339 230zM1534 340 1534 360 1529 360 1529 339zM1325 405 1325 421 1323 421 1323 405zM1323 405 1322 421 1320 421 1320 405zM1320 405 1319 421 1317 421 1317 404zM1317 404 1316 421 1314 421 1314 404zM1311 404 1310 421 1308 421 1308 404zM1557 194 1558 230 1555 230 1553 194zM1553 194 1554 230 1551 231 1550 195zM1565 193 1566 218 1561 218 1561 193zM1555 193 1556 218 1551 218 1551 193zM1446 199 1445 223 1443 223 1444 199zM1304 433 1304 450 1300 450 1301 432zM1540 420 1540 457 1536 457 1536 420zM1364 378 1366 407 1363 407 1362 378zM1342 387 1342 422 1340 422 1339 387zM1409 363 1410 397 1408 397 1407 363zM1283 291 1285 324 1281 324 1279 291zM1276 216 1276 248 1274 248 1274 216zM1326 367 1324 404 1322 404 1324 367zM1375 290 1375 329 1373 329 1373 290zM1334 266 1335 288 1333 288 1332 266zM1295 412 1294 442 1290 442 1291 412zM1290 412 1289 442 1285 442 1286 412zM1471 163 1471 203 1468 203 1468 163zM1462 413 1463 434 1461 434 1460 413zM1338 316 1338 356 1335 356 1335 316zM1330 316 1330 356 1327 356 1327 316zM1323 316 1322 356 1319 356 1319 316zM1510 247 1511 270 1507 270 1506 247zM1497 247 1498 270 1494 270 1493 247zM1493 247 1493 270 1490 270 1489 247zM1440 165 1441 186 1434 186 1434 166zM1433 166 1433 187 1427 187 1426 166zM1349 387 1349 427 1347 427 1347 387zM1288 321 1290 361 1286 361 1284 322zM1279 322 1281 362 1277 362 1275 322zM1506 308 1505 336 1503 336 1504 308zM1281 152 1280 181 1276 181 1277 152zM1356 385 1356 417 1354 417 1354 385zM1272 347 1273 381 1271 381 1270 347zM1263 347 1264 382 1262 382 1261 347zM1261 347 1262 382 1260 382 1259 347zM1259 347 1260 382 1258 382 1257 347zM1252 348 1253 382 1251 382 1250 348zM1247 348 1248 382 1246 382 1245 348zM1407 299 1406 325 1403 325 1404 299zM1562 292 1561 327 1557 327 1558 292zM1453 179 1452 196 1447 195 1448 178zM1338 161 1337 182 1334 182 1335 160zM1330 160 1329 182 1326 181 1327 160zM1502 399 1503 426 1500 426 1499 399zM1499 399 1500 426 1497 426 1495 399zM1495 399 1496 426 1493 426 1492 399zM1535 194 1535 233 1532 233 1532 194zM1328 387 1327 427 1322 427 1323 387zM1322 387 1321 427 1315 427 1316 387zM1262 294 1262 320 1257 320 1257 294zM1269 250 1269 273 1267 273 1267 250zM1516 283 1517 313 1513 313 1513 283zM1254 419 1254 435 1251 435 1251 419zM1441 396 1441 415 1436 415 1436 395zM1249 171 1249 197 1247 197 1247 171zM1272 191 1272 220 1263 220 1263 191zM1321 346 1320 378 1317 378 1317 346zM1312 346 1312 378 1308 378 1308 346zM1471 222 1472 250 1469 250 1468 222zM1462 222 1463 250 1461 251 1460 222zM1025 363 1033 377 1028 379 1020 365zM1020 366 1028 380 1023 382 1015 368zM1012 364 1021 382 1017 384 1007 367zM1009 280 1020 296 1017 298 1007 282zM1000 435 1010 454 1008 455 999 436zM998 436 1008 455 1006 456 997 437zM997 370 1002 380 1000 381 995 371zM1005 318 1017 337 1014 339 1002 319zM992 266 1002 283 997 285 988 269zM1004 431 1013 452 1012 453 1002 432zM983 253 992 273 989 274 980 255zM1012 422 1018 435 1016 436 1009 423z"/>
<path fill="#5a6250" opacity="0.55" d="M1201 370 1236 368 1236 371 1201 373zM1201 373 1236 372 1236 374 1201 376zM1195 368 1223 367 1223 370 1195 371zM1115 290 1151 292 1150 294 1115 292zM1114 296 1150 298 1150 301 1114 298zM1139 347 1172 346 1172 352 1139 353zM1139 181 1172 181 1172 183 1139 182zM1139 198 1172 198 1172 200 1139 200zM1125 408 1144 409 1143 414 1125 414zM1235 426 1250 426 1251 428 1235 428zM1181 414 1212 414 1212 416 1181 416zM1145 438 1166 438 1166 443 1145 443zM1197 436 1219 437 1219 441 1196 439zM1113 232 1138 233 1138 237 1113 236zM1161 253 1187 252 1187 256 1161 257zM1159 426 1178 426 1178 429 1159 430zM1193 208 1223 209 1223 211 1192 210zM1127 289 1150 288 1150 293 1127 294zM1165 212 1193 213 1193 215 1165 215zM1164 227 1193 228 1193 230 1164 230zM1236 406 1263 405 1263 409 1236 409zM1116 300 1133 300 1133 305 1116 305zM1158 409 1186 409 1186 414 1158 413zM1220 169 1239 170 1238 173 1219 172zM1102 232 1129 232 1129 237 1102 237zM1157 332 1187 331 1187 335 1157 336zM1235 209 1259 210 1259 213 1235 212zM1235 212 1259 214 1258 216 1235 215zM1234 225 1258 226 1258 229 1234 228zM1154 243 1171 243 1171 245 1154 245zM1158 440 1194 439 1194 443 1158 443zM1158 444 1194 443 1194 447 1158 447zM1158 452 1194 451 1194 455 1158 456zM1138 197 1159 195 1159 200 1138 202zM1138 203 1159 201 1159 206 1138 208zM1221 393 1250 393 1250 400 1221 400zM1206 261 1238 260 1238 263 1206 265zM1147 344 1172 342 1172 344 1147 346zM1106 402 1128 401 1129 405 1107 407zM1107 408 1129 406 1129 411 1107 412zM1107 413 1129 412 1129 416 1107 418zM1223 172 1242 171 1242 174 1223 175zM1223 178 1243 178 1243 180 1223 181zM1123 181 1148 181 1148 183 1123 183zM1142 206 1175 207 1175 210 1142 209zM1086 273 1101 281 1099 283 1084 275zM1076 331 1102 345 1101 347 1075 333zM1077 250 1100 262 1099 264 1076 252zM1074 411 1091 422 1090 424 1073 413zM1072 413 1090 424 1089 425 1072 415zM1071 415 1089 426 1088 427 1070 417zM1045 387 1058 395 1057 397 1044 388zM1041 393 1054 402 1052 403 1040 395zM1039 395 1052 404 1051 405 1038 397zM1051 384 1069 395 1068 397 1050 386zM1070 423 1093 437 1092 439 1069 425zM1092 248 1107 259 1106 261 1091 250zM1045 331 1062 341 1061 343 1044 333zM1081 286 1102 297 1101 298 1080 288zM1041 412 1063 427 1060 431 1039 416zM1051 379 1067 388 1064 393 1048 383zM1031 366 1045 374 1044 376 1030 367zM1030 368 1044 376 1043 378 1028 369zM1028 370 1043 378 1042 380 1027 371zM1027 372 1042 380 1041 382 1026 373zM1055 346 1071 356 1070 358 1054 348zM1054 348 1070 358 1069 360 1053 350zM1051 353 1068 362 1067 364 1050 354zM1049 357 1065 366 1064 368 1048 359zM1104 442 1123 451 1122 453 1103 443zM1097 456 1116 465 1115 467 1096 458zM1082 282 1098 291 1097 294 1081 285zM1080 285 1096 294 1095 297 1079 288zM1064 430 1080 440 1077 444 1061 434zM1057 416 1070 424 1069 425 1056 418zM1056 418 1068 426 1067 427 1055 420zM1055 420 1067 428 1066 429 1054 422zM1054 422 1066 430 1065 431 1053 424zM1053 424 1065 431 1064 433 1052 425zM1050 428 1063 435 1062 437 1049 429zM1093 403 1111 413 1110 416 1092 407zM1426 293 1425 331 1422 331 1423 293zM1476 409 1477 426 1473 427 1473 409zM1472 409 1473 427 1470 427 1469 409zM1358 372 1359 398 1356 399 1355 372zM1261 270 1261 307 1258 307 1257 270zM1563 258 1563 291 1559 291 1560 258zM1285 318 1284 347 1281 347 1282 317zM1553 323 1553 360 1549 360 1549 323zM1387 354 1387 369 1385 369 1385 354zM1385 354 1385 369 1383 369 1383 354zM1376 335 1378 366 1376 366 1374 335zM1374 335 1375 366 1373 366 1372 335zM1371 335 1373 366 1371 366 1369 335zM1367 335 1368 366 1366 366 1365 335zM1364 335 1366 366 1364 366 1362 335zM1360 335 1361 366 1359 366 1358 336zM1339 188 1338 209 1333 209 1333 188zM1332 188 1332 209 1326 209 1327 187zM1326 187 1325 209 1320 208 1320 187zM1290 211 1290 229 1286 229 1286 211zM1392 353 1391 373 1382 373 1383 353zM1444 144 1446 180 1441 181 1440 145zM1400 424 1398 463 1395 463 1397 424zM1390 424 1388 463 1385 463 1387 424zM1387 424 1385 463 1382 463 1384 424zM1384 424 1382 463 1379 462 1381 424zM1503 234 1504 261 1502 261 1501 234zM1495 234 1496 262 1494 262 1493 234zM1492 234 1493 262 1491 262 1490 234zM1514 308 1514 332 1511 332 1512 308zM1392 315 1391 352 1388 351 1390 315zM1389 315 1388 351 1385 351 1387 315zM1267 209 1266 231 1263 231 1264 209zM1347 161 1348 191 1345 191 1345 162zM1359 320 1358 348 1356 348 1357 320zM1392 429 1391 468 1386 467 1387 428zM1386 428 1385 467 1380 467 1381 428zM1339 433 1340 460 1338 460 1337 433zM1383 437 1383 461 1378 461 1377 438zM1427 433 1427 471 1424 471 1424 433zM1573 156 1573 175 1568 174 1568 156zM1567 156 1567 174 1562 174 1563 155zM1328 256 1328 275 1325 275 1325 256zM1477 353 1478 377 1475 377 1474 354zM1469 354 1470 377 1467 377 1466 354zM1512 397 1512 413 1510 413 1510 397zM1436 242 1437 269 1434 269 1433 242zM1428 242 1429 269 1426 269 1425 242zM1428 184 1429 223 1427 223 1426 184zM1426 184 1426 223 1424 223 1424 184zM1419 184 1419 223 1417 223 1417 184zM1417 184 1417 223 1415 223 1415 184zM1408 184 1408 223 1406 223 1406 184zM1438 293 1439 322 1436 322 1434 293zM1504 412 1504 429 1501 429 1502 412zM1286 442 1286 468 1282 468 1283 442zM1282 442 1282 468 1278 468 1279 442zM1278 442 1277 468 1274 467 1275 442zM1289 344 1290 366 1288 366 1287 344zM1286 344 1287 366 1285 366 1284 344zM1283 344 1284 366 1282 366 1280 344zM1277 345 1278 366 1275 366 1274 345zM1274 345 1275 366 1272 367 1271 345zM1372 211 1373 248 1371 248 1369 211zM1285 314 1285 328 1282 328 1282 314zM1342 284 1343 313 1339 313 1338 284zM1410 234 1410 251 1408 251 1409 233zM1382 168 1382 195 1380 195 1379 168zM1345 309 1347 347 1343 347 1342 309zM1531 172 1531 190 1529 189 1529 172zM1356 209 1356 227 1353 227 1353 209zM1274 378 1275 394 1270 394 1269 378zM1306 447 1307 466 1302 466 1301 447zM1500 402 1499 425 1497 425 1498 402zM1320 358 1320 384 1314 384 1314 358zM1305 358 1305 384 1298 384 1298 358zM1325 441 1325 465 1324 465 1323 441zM1323 442 1323 465 1321 465 1321 442zM1320 442 1321 465 1319 465 1318 442zM1318 442 1319 465 1317 465 1316 442zM1313 442 1314 465 1312 465 1312 442zM1394 399 1395 429 1393 429 1392 399zM1386 399 1387 429 1385 429 1384 399zM1325 169 1327 208 1324 208 1323 169zM1322 169 1324 208 1321 208 1319 169zM1315 170 1317 209 1314 209 1312 170zM1366 442 1365 476 1363 476 1364 442zM1280 195 1280 219 1276 219 1276 195zM1275 195 1275 219 1271 219 1271 195zM1376 320 1376 338 1372 338 1371 320zM1360 320 1361 338 1356 338 1356 320zM1480 354 1480 371 1476 371 1477 354zM1466 388 1465 419 1463 419 1464 388zM1526 287 1526 314 1523 314 1524 287zM1523 287 1523 314 1520 314 1521 287zM1520 287 1520 314 1517 314 1518 287zM1517 287 1517 314 1514 314 1515 286zM1514 286 1514 314 1511 314 1512 286zM1265 335 1265 371 1263 371 1263 335zM1253 335 1253 372 1251 372 1251 335zM1310 419 1310 433 1305 433 1305 419zM1512 419 1511 442 1509 442 1509 419zM1457 323 1457 361 1453 361 1454 323zM1453 323 1453 361 1449 361 1450 323zM1410 396 1409 429 1404 429 1405 396zM1531 327 1530 353 1528 353 1529 327zM1520 327 1519 352 1517 352 1518 327zM1302 282 1302 300 1297 300 1297 283zM1418 435 1419 452 1414 452 1413 435zM1412 435 1413 452 1408 452 1407 435zM1445 335 1445 356 1443 355 1443 335zM1441 335 1440 355 1438 355 1438 335zM1438 335 1438 355 1436 355 1436 335zM1433 335 1433 355 1431 355 1431 335zM1534 205 1535 221 1532 221 1532 205zM1346 230 1345 266 1341 266 1343 230zM1335 230 1334 266 1331 265 1332 230zM1332 230 1330 265 1327 265 1329 230zM1328 230 1326 265 1323 265 1325 229zM1561 260 1561 283 1557 283 1557 260zM1550 193 1551 218 1546 218 1546 193zM1308 433 1307 450 1304 450 1305 433zM1333 298 1333 332 1329 332 1328 298zM1328 298 1328 332 1324 332 1324 298zM1546 191 1547 212 1545 212 1544 191zM1520 251 1519 285 1517 285 1518 251zM1471 373 1471 404 1465 404 1466 373zM1381 378 1382 406 1379 406 1378 378zM1564 324 1563 355 1561 355 1562 324zM1319 321 1318 351 1315 350 1316 321zM1442 373 1443 402 1441 402 1440 373zM1537 404 1538 424 1533 424 1533 404zM1382 290 1382 329 1380 329 1380 290zM1329 215 1329 235 1326 235 1326 215zM1505 211 1506 228 1504 228 1503 211zM1453 355 1453 379 1446 379 1446 355zM1445 355 1445 379 1438 379 1438 355zM1560 418 1560 450 1555 450 1555 418zM1369 302 1370 320 1366 320 1365 302zM1365 302 1366 320 1362 320 1361 302zM1352 302 1353 321 1349 321 1348 302zM1348 303 1349 321 1345 321 1344 303zM1556 421 1555 436 1549 436 1550 421zM1357 387 1357 427 1354 427 1355 387zM1352 387 1352 427 1349 427 1350 387zM1443 154 1444 171 1441 172 1441 154zM1345 326 1346 346 1342 346 1341 326zM1336 326 1337 347 1333 347 1332 327zM1422 231 1421 246 1417 246 1417 231zM1411 231 1410 246 1406 246 1406 231zM1271 166 1272 187 1270 187 1269 166zM1269 166 1269 187 1267 187 1266 167zM1266 167 1267 187 1265 187 1264 167zM1340 205 1340 220 1335 220 1335 205zM1458 391 1458 427 1455 426 1455 391zM1440 391 1440 426 1437 426 1437 391zM1364 157 1365 190 1363 190 1362 157zM1352 157 1353 190 1351 190 1350 157zM1279 172 1280 186 1276 187 1275 172zM1270 172 1271 187 1267 187 1266 173zM1303 231 1303 262 1299 262 1299 231zM1336 276 1336 305 1333 305 1333 276zM1256 361 1258 398 1254 398 1253 361zM1548 196 1549 234 1547 234 1546 196zM1265 229 1265 265 1262 265 1263 229zM1475 205 1475 233 1472 233 1473 205zM1545 387 1545 424 1536 424 1536 387zM1309 313 1309 341 1304 341 1304 314zM1303 314 1303 341 1298 341 1298 314zM1415 300 1414 325 1411 325 1412 300zM1352 283 1351 313 1348 313 1349 283zM1531 194 1531 233 1528 233 1528 194zM1527 194 1527 233 1524 233 1524 194zM1389 255 1388 290 1382 290 1383 255zM1409 190 1410 214 1408 214 1407 190zM1277 250 1277 273 1275 273 1275 250zM1265 419 1265 435 1263 435 1263 419zM1258 264 1257 294 1252 294 1253 264zM1404 277 1403 310 1400 310 1402 277zM1401 277 1400 310 1397 310 1399 277zM1398 277 1397 310 1394 310 1396 276zM1395 276 1394 310 1391 310 1393 276zM1392 276 1391 310 1388 309 1390 276zM1535 367 1535 406 1532 406 1533 367zM1476 222 1477 250 1475 250 1474 222zM992 251 1002 269 1000 271 989 253zM1009 332 1020 354 1014 358 1002 335zM1002 319 1014 339 1011 341 999 321zM1024 302 1030 313 1028 314 1022 303zM1014 360 1024 379 1019 381 1009 363zM1027 309 1036 330 1034 331 1025 310zM1014 426 1024 448 1022 449 1012 427zM1012 427 1022 449 1020 449 1010 428zM1010 428 1020 450 1018 450 1008 429zM1008 429 1017 451 1016 451 1006 430zM1006 430 1015 451 1014 452 1004 431zM1020 237 1029 252 1027 254 1018 238zM1014 232 1025 255 1021 257 1010 234zM1027 305 1039 322 1037 324 1025 307zM1024 307 1037 324 1034 325 1022 308zM1022 309 1034 326 1032 327 1020 310zM1031 388 1037 400 1033 402 1027 390z"/>
<path fill="#5f6952" opacity="0.55" d="M1201 376 1236 375 1237 377 1201 379zM1230 414 1246 413 1246 415 1230 416zM1230 416 1246 416 1246 417 1230 418zM1114 159 1135 159 1135 161 1114 161zM1114 168 1135 168 1135 170 1114 170zM1114 173 1135 173 1135 175 1114 175zM1114 175 1135 175 1135 177 1114 177zM1114 180 1135 180 1135 182 1114 182zM1150 275 1176 275 1176 280 1150 280zM1139 355 1172 353 1172 360 1140 361zM1139 194 1172 194 1172 196 1139 196zM1119 212 1136 211 1136 215 1120 216zM1120 216 1136 216 1136 220 1120 221zM1120 221 1137 221 1137 225 1120 226zM1193 378 1214 378 1214 382 1193 382zM1153 312 1168 312 1168 315 1153 315zM1214 335 1248 336 1247 341 1213 340zM1105 194 1127 193 1127 195 1105 196zM1105 199 1127 198 1127 200 1105 200zM1223 212 1257 210 1257 216 1223 218zM1224 225 1257 224 1257 229 1224 231zM1107 165 1142 166 1142 171 1107 170zM1159 219 1184 217 1185 219 1159 221zM1159 221 1185 219 1185 222 1159 223zM1159 229 1185 227 1185 229 1159 231zM1098 367 1126 368 1126 371 1098 371zM1120 343 1140 343 1140 347 1120 347zM1222 265 1241 265 1241 269 1222 269zM1141 353 1162 354 1162 359 1141 358zM1151 376 1167 377 1166 381 1151 380zM1151 381 1166 382 1166 387 1150 386zM1114 213 1139 214 1139 218 1114 217zM1113 222 1138 223 1138 227 1113 226zM1113 227 1138 228 1138 232 1113 231zM1161 248 1187 248 1187 252 1161 252zM1166 362 1191 360 1191 365 1166 366zM1166 367 1191 365 1191 370 1166 372zM1167 378 1192 376 1192 381 1167 383zM1227 457 1244 456 1244 459 1227 460zM1202 355 1217 355 1217 358 1202 358zM1202 362 1217 362 1217 365 1202 365zM1136 163 1152 162 1152 167 1137 167zM1137 168 1152 167 1153 172 1137 172zM1158 407 1177 406 1177 409 1159 410zM1159 414 1177 414 1177 417 1159 418zM1220 235 1240 234 1240 238 1221 239zM1221 240 1240 239 1240 243 1221 244zM1221 245 1240 244 1241 248 1221 249zM1150 182 1173 182 1173 188 1150 188zM1150 197 1173 197 1173 203 1150 203zM1129 375 1160 374 1160 378 1129 379zM1234 175 1256 175 1255 183 1234 182zM1105 444 1135 444 1135 449 1105 450zM1209 447 1235 446 1235 448 1209 449zM1123 411 1146 411 1146 413 1123 413zM1134 378 1167 377 1167 380 1134 381zM1206 437 1223 437 1223 440 1206 439zM1165 209 1193 209 1193 212 1165 211zM1164 215 1193 216 1193 218 1164 218zM1164 218 1193 219 1193 221 1164 221zM1235 392 1263 392 1263 395 1236 396zM1236 401 1263 400 1263 404 1236 405zM1174 328 1205 328 1205 333 1174 333zM1174 339 1205 339 1205 344 1174 344zM1105 441 1139 438 1139 446 1105 448zM1231 322 1247 323 1247 329 1231 329zM1220 165 1239 166 1239 169 1220 168zM1102 214 1129 214 1129 219 1102 219zM1157 391 1186 391 1186 393 1157 394zM1234 222 1258 223 1258 226 1234 224zM1154 241 1171 241 1171 243 1154 243zM1154 257 1171 258 1171 260 1154 259zM1190 273 1226 270 1226 276 1190 278zM1221 334 1248 334 1248 338 1221 338zM1236 180 1261 182 1261 186 1236 185zM1229 226 1248 226 1248 231 1229 231zM1229 232 1248 231 1248 236 1230 237zM1129 286 1158 285 1158 289 1129 290zM1105 280 1135 278 1135 283 1105 284zM1106 291 1135 289 1136 294 1106 295zM1105 202 1134 203 1134 206 1104 204zM1189 394 1206 395 1206 400 1189 399zM1189 400 1206 401 1206 406 1189 405zM1189 406 1206 407 1206 412 1188 412zM1205 229 1222 229 1222 233 1205 234zM1147 339 1172 337 1172 339 1147 341zM1147 341 1172 340 1172 342 1147 343zM1215 266 1231 267 1231 269 1215 268zM1215 271 1230 272 1230 274 1214 273zM1214 276 1230 277 1230 279 1214 278zM1214 279 1230 280 1230 282 1214 281zM1214 284 1230 285 1230 287 1214 286zM1123 171 1148 171 1148 173 1123 173zM1123 176 1148 176 1148 178 1123 178zM1123 178 1148 179 1148 181 1123 180zM1142 202 1175 204 1175 207 1142 205zM1142 209 1175 211 1174 214 1142 212zM1073 273 1091 283 1089 288 1070 278zM1089 268 1103 275 1102 278 1087 270zM1087 270 1102 278 1101 280 1086 273zM1098 287 1122 302 1120 305 1096 289zM1094 293 1118 309 1116 312 1092 296zM1089 300 1114 316 1112 318 1088 303zM1035 259 1046 264 1045 267 1034 262zM1033 262 1045 268 1043 271 1032 265zM1030 270 1041 275 1040 278 1028 273zM1030 298 1044 305 1043 307 1029 300zM1029 300 1043 307 1042 310 1028 303zM1070 341 1096 355 1095 357 1070 343zM1043 283 1065 297 1063 299 1042 285zM1097 447 1124 461 1122 463 1096 449zM1096 450 1122 464 1121 466 1094 452zM1094 453 1121 467 1119 469 1093 455zM1094 289 1108 298 1107 300 1092 291zM1092 240 1103 247 1102 249 1091 242zM1042 365 1054 372 1053 374 1041 367zM1041 367 1053 374 1052 376 1040 369zM1038 372 1050 379 1049 381 1037 374zM1037 374 1049 381 1048 383 1036 376zM1035 376 1047 383 1046 385 1034 378zM1078 248 1101 260 1100 262 1077 250zM1067 423 1084 433 1083 435 1066 424zM1022 398 1047 415 1044 419 1019 402zM1047 385 1059 393 1058 395 1045 386zM1044 389 1056 397 1055 399 1043 391zM1042 391 1055 400 1054 401 1041 393zM1077 335 1094 344 1093 347 1076 338zM1076 338 1093 347 1092 350 1074 341zM1074 341 1091 350 1090 353 1073 344zM1068 355 1090 366 1088 369 1067 359zM1064 364 1086 374 1084 377 1063 367zM1062 368 1084 378 1082 381 1061 371zM1069 426 1092 439 1090 441 1068 428zM1099 237 1115 248 1114 250 1098 239zM1082 386 1098 395 1097 398 1081 390zM1078 395 1094 403 1092 406 1076 398zM1038 421 1053 431 1051 434 1036 424zM1079 287 1099 299 1097 302 1078 290zM1038 235 1057 247 1055 251 1035 240zM1045 268 1066 280 1065 282 1044 270zM1042 272 1064 284 1063 286 1041 274zM1041 274 1063 287 1062 288 1040 276zM1080 288 1101 299 1100 301 1079 290zM1096 247 1120 259 1119 261 1095 249zM1092 255 1117 266 1116 268 1091 257zM1091 257 1116 269 1115 271 1090 259zM1045 421 1061 432 1057 438 1041 427zM1077 263 1091 270 1090 272 1076 265zM1076 265 1090 272 1089 274 1075 267zM1041 312 1054 320 1052 323 1039 315zM1069 433 1093 449 1092 451 1067 435zM1067 435 1092 451 1090 454 1066 437zM1065 438 1090 454 1089 456 1064 440zM1052 323 1073 336 1071 339 1051 325zM1050 325 1071 339 1069 341 1049 328zM1034 428 1051 437 1050 439 1033 430zM1078 274 1100 287 1099 289 1076 277zM1093 371 1112 381 1111 383 1091 374zM1045 247 1060 255 1059 256 1044 249zM1042 254 1056 261 1055 263 1041 256zM1039 258 1054 266 1053 268 1038 260zM1103 444 1122 453 1121 455 1102 445zM1025 292 1035 299 1033 303 1023 296zM1516 387 1517 413 1515 413 1514 387zM1513 387 1515 413 1512 413 1511 387zM1469 409 1469 427 1466 427 1465 409zM1461 409 1462 427 1458 427 1458 410zM1365 371 1366 398 1363 398 1362 371zM1361 371 1362 398 1359 398 1358 372zM1354 372 1356 399 1353 399 1352 372zM1351 372 1352 399 1349 399 1348 372zM1348 372 1349 399 1346 399 1345 372zM1344 372 1346 399 1343 399 1342 372zM1552 182 1553 205 1550 206 1549 182zM1335 279 1336 300 1332 300 1331 279zM1432 164 1432 184 1430 184 1430 164zM1485 236 1486 270 1480 270 1480 236zM1543 258 1543 290 1539 290 1540 258zM1340 377 1339 403 1335 403 1336 377zM1335 377 1334 403 1329 403 1330 376zM1564 397 1564 412 1556 412 1556 397zM1391 354 1392 369 1390 369 1390 354zM1272 337 1271 352 1266 352 1266 336zM1265 336 1265 352 1259 352 1260 336zM1259 336 1258 352 1253 352 1253 336zM1500 288 1501 307 1495 307 1495 288zM1335 310 1335 330 1330 330 1330 310zM1438 437 1437 474 1432 474 1433 437zM1421 437 1420 473 1415 473 1417 437zM1394 153 1393 189 1388 189 1389 153zM1500 234 1502 261 1499 262 1498 234zM1498 234 1499 262 1497 262 1495 234zM1440 207 1439 221 1435 221 1435 206zM1435 206 1434 221 1430 220 1430 206zM1424 206 1424 220 1420 220 1420 206zM1520 308 1519 332 1517 332 1517 308zM1408 410 1407 449 1401 449 1403 409zM1402 409 1400 449 1395 449 1396 409zM1395 315 1394 352 1391 352 1393 315zM1274 210 1273 231 1270 231 1271 209zM1501 397 1501 413 1496 413 1496 397zM1495 397 1495 413 1489 413 1489 397zM1365 161 1366 191 1363 191 1363 161zM1359 161 1360 191 1357 191 1357 161zM1356 161 1357 191 1354 191 1354 161zM1257 159 1258 182 1253 182 1252 159zM1542 322 1543 352 1541 353 1540 322zM1444 233 1445 264 1441 264 1440 233zM1415 433 1415 471 1412 471 1412 433zM1328 411 1327 441 1322 441 1323 411zM1321 256 1320 275 1317 275 1318 256zM1299 314 1300 333 1294 333 1293 314zM1507 223 1507 237 1504 237 1504 223zM1443 301 1442 316 1440 316 1440 301zM1502 374 1501 413 1499 413 1500 374zM1499 374 1499 413 1497 413 1497 374zM1494 374 1494 413 1491 413 1492 374zM1492 374 1491 413 1489 413 1489 374zM1450 388 1451 418 1449 418 1447 388zM1444 388 1445 418 1443 418 1442 388zM1516 397 1516 413 1514 413 1514 397zM1444 241 1445 268 1442 269 1440 241zM1424 184 1424 223 1422 223 1422 184zM1412 184 1413 223 1411 223 1410 184zM1328 392 1329 429 1324 429 1323 392zM1368 307 1368 333 1363 333 1362 307zM1390 209 1391 232 1386 232 1385 209zM1384 209 1385 232 1380 232 1379 209zM1491 412 1491 428 1488 428 1489 411zM1292 344 1293 366 1291 366 1290 344zM1271 345 1272 367 1269 367 1268 345zM1272 155 1272 182 1270 182 1270 155zM1270 155 1270 182 1268 182 1268 155zM1257 156 1257 182 1255 182 1255 156zM1255 156 1255 182 1253 182 1253 156zM1358 211 1359 248 1357 248 1355 211zM1299 420 1298 435 1295 435 1295 420zM1291 420 1290 435 1286 435 1287 420zM1286 420 1286 435 1282 434 1283 420zM1282 420 1281 434 1278 434 1279 419zM1278 419 1277 434 1274 434 1274 419zM1279 313 1279 328 1276 328 1276 313zM1484 241 1486 273 1482 273 1481 241zM1480 242 1482 273 1478 273 1477 242zM1397 147 1397 185 1395 185 1394 147zM1337 284 1338 313 1334 313 1333 284zM1332 284 1333 313 1329 313 1328 284zM1277 363 1276 391 1270 391 1271 363zM1577 358 1578 383 1573 384 1572 358zM1567 358 1568 384 1563 384 1562 358zM1562 358 1563 384 1558 384 1557 359zM1557 359 1558 384 1554 384 1552 359zM1392 168 1393 195 1390 195 1390 168zM1389 168 1390 195 1388 195 1387 168zM1387 168 1387 195 1385 195 1384 168zM1384 168 1385 195 1383 195 1382 168zM1376 168 1377 195 1375 195 1374 168zM1374 168 1375 195 1372 195 1372 168zM1546 173 1546 190 1544 190 1544 173zM1544 173 1543 190 1541 190 1542 173zM1541 173 1541 190 1539 190 1539 173zM1536 173 1536 190 1534 190 1534 173zM1534 173 1533 190 1531 190 1532 172zM1521 368 1519 406 1514 406 1516 368zM1301 378 1302 400 1297 400 1296 378zM1295 378 1296 400 1292 401 1291 378zM1290 378 1291 401 1286 401 1285 379zM1498 402 1497 425 1495 425 1496 402zM1457 198 1458 232 1456 232 1455 198zM1452 198 1453 232 1451 232 1450 198zM1305 170 1307 209 1304 209 1302 170zM1445 444 1444 475 1442 475 1443 444zM1372 442 1371 476 1368 476 1370 442zM1369 442 1368 476 1366 476 1367 442zM1381 320 1381 338 1377 338 1377 320zM1484 354 1484 372 1480 371 1481 354zM1479 388 1478 419 1476 419 1477 388zM1476 388 1475 419 1473 419 1474 388zM1562 283 1562 311 1558 311 1557 283zM1270 398 1270 432 1267 432 1266 398zM1265 398 1266 432 1262 432 1261 398zM1262 335 1263 371 1261 371 1260 335zM1260 335 1260 371 1258 371 1258 335zM1255 335 1256 372 1253 372 1253 335zM1245 335 1246 372 1244 372 1243 335zM1370 430 1369 461 1365 461 1367 430zM1366 430 1365 461 1361 461 1362 430zM1362 430 1361 461 1357 461 1358 430zM1357 430 1356 461 1353 461 1354 430zM1389 353 1389 382 1386 382 1386 353zM1386 353 1386 382 1383 382 1383 353zM1540 222 1540 251 1537 251 1536 222zM1522 222 1523 251 1519 252 1519 222zM1259 361 1260 387 1254 387 1254 361zM1365 348 1366 362 1364 362 1363 348zM1360 348 1360 363 1358 363 1358 348zM1357 349 1358 363 1355 363 1355 349zM1436 225 1437 250 1432 250 1432 225zM1404 396 1403 429 1398 429 1398 396zM1307 282 1307 299 1303 300 1302 282zM1548 189 1547 206 1542 205 1543 189zM1542 189 1541 205 1536 205 1536 189zM1528 206 1528 221 1525 221 1525 206zM1539 340 1539 360 1535 360 1535 340zM1346 221 1345 252 1342 252 1342 221zM1342 221 1341 252 1337 252 1338 221zM1547 260 1547 283 1543 283 1543 260zM1314 404 1313 421 1311 421 1311 404zM1560 194 1562 230 1559 230 1557 194zM1552 157 1552 186 1550 186 1549 157zM1546 157 1546 186 1543 186 1543 158zM1539 158 1540 186 1537 186 1536 158zM1439 199 1438 223 1436 223 1437 199zM1437 199 1436 223 1433 223 1435 199zM1367 327 1367 363 1362 363 1362 327zM1549 420 1549 457 1545 457 1545 420zM1517 251 1516 285 1514 285 1515 251zM1514 251 1513 285 1511 284 1512 251zM1508 251 1507 284 1505 284 1506 251zM1505 251 1504 284 1502 284 1503 251zM1502 251 1501 284 1499 284 1500 251zM1478 373 1477 404 1472 404 1472 373zM1387 377 1388 406 1386 406 1384 377zM1377 378 1379 406 1376 406 1375 378zM1345 387 1346 422 1343 422 1342 387zM1412 363 1413 397 1411 397 1410 363zM1455 194 1455 208 1452 208 1452 194zM1447 194 1447 208 1444 208 1445 194zM1444 194 1444 208 1442 208 1442 194zM1442 194 1441 208 1439 208 1439 194zM1436 194 1436 208 1434 208 1434 194zM1566 324 1565 355 1563 355 1564 324zM1282 216 1282 248 1279 248 1279 216zM1273 216 1273 248 1271 248 1271 216zM1573 404 1571 434 1566 433 1568 404zM1415 319 1415 346 1410 346 1410 319zM1322 321 1321 351 1319 351 1319 321zM1532 404 1533 424 1528 424 1527 404zM1389 290 1388 329 1386 329 1387 290zM1386 290 1386 329 1384 329 1384 290zM1380 290 1379 329 1377 329 1378 290zM1317 215 1317 235 1313 235 1313 215zM1313 215 1313 235 1309 235 1309 215zM1308 215 1309 235 1305 235 1305 215zM1530 146 1530 177 1527 177 1527 146zM1526 146 1527 177 1524 177 1523 146zM1340 266 1342 287 1340 287 1339 266zM1300 413 1298 442 1294 442 1296 412zM1480 250 1480 278 1477 278 1477 250zM1513 306 1513 334 1510 334 1510 306zM1360 302 1361 320 1358 321 1357 302zM1326 316 1326 356 1323 356 1323 316zM1332 180 1333 216 1330 216 1329 180zM1329 180 1329 216 1326 216 1326 180zM1372 321 1374 359 1370 359 1368 321zM1362 387 1362 427 1359 427 1360 387zM1500 241 1501 263 1496 263 1495 241zM1440 154 1441 172 1438 172 1438 155zM1434 155 1435 172 1432 172 1431 155zM1431 155 1432 172 1429 172 1428 155zM1486 358 1485 398 1482 398 1484 358zM1405 231 1405 246 1400 246 1400 231zM1404 421 1402 449 1398 449 1400 421zM1385 420 1384 448 1379 448 1381 420zM1462 391 1461 427 1458 427 1459 391zM1455 391 1454 426 1451 426 1451 391zM1369 157 1370 190 1368 190 1367 157zM1355 157 1355 190 1353 190 1353 157zM1567 227 1568 258 1564 258 1563 227zM1562 227 1563 258 1559 258 1558 227zM1548 227 1550 258 1546 258 1544 228zM1283 172 1284 186 1280 186 1280 172zM1340 276 1339 305 1336 305 1337 276zM1333 276 1332 305 1329 305 1330 276zM1329 276 1329 305 1326 305 1326 276zM1326 276 1325 305 1322 305 1323 276zM1373 385 1374 417 1371 417 1371 385zM1370 385 1371 417 1368 417 1368 385zM1365 385 1365 417 1363 417 1362 385zM1362 385 1362 417 1360 417 1359 385zM1359 385 1359 417 1357 417 1357 385zM1248 361 1249 398 1246 399 1245 361zM1551 196 1551 234 1549 234 1549 196zM1538 196 1539 234 1537 234 1536 196zM1536 196 1536 234 1534 234 1534 196zM1533 196 1534 234 1532 234 1531 196zM1364 186 1365 205 1362 205 1362 186zM1435 361 1435 376 1431 376 1431 361zM1265 347 1266 382 1265 382 1264 347zM1284 229 1284 266 1281 266 1281 229zM1276 229 1275 266 1273 266 1273 229zM1556 203 1556 242 1552 242 1553 203zM1458 339 1458 377 1456 377 1455 339zM1452 339 1452 377 1450 377 1449 339zM1445 156 1443 190 1439 190 1441 156zM1411 300 1410 325 1407 325 1408 299zM1349 161 1348 182 1345 182 1346 161zM1342 161 1341 182 1338 182 1338 161zM1334 160 1333 182 1330 182 1331 160zM1510 399 1511 425 1508 425 1506 399zM1348 283 1347 313 1344 312 1345 283zM1294 403 1294 426 1292 426 1291 403zM1560 442 1561 466 1557 466 1556 442zM1550 443 1551 466 1547 466 1546 443zM1276 162 1275 188 1269 187 1270 162zM1523 194 1523 233 1520 233 1520 194zM1566 425 1566 447 1562 447 1562 425zM1544 425 1544 447 1541 447 1540 425zM1335 388 1334 427 1328 427 1329 387zM1458 440 1457 467 1452 466 1453 440zM1446 439 1445 466 1439 466 1440 439zM1369 279 1368 303 1361 302 1362 279zM1382 255 1381 290 1375 289 1376 255zM1375 255 1374 289 1368 289 1369 255zM1412 190 1412 214 1410 214 1409 190zM1282 250 1282 274 1280 273 1280 250zM1275 250 1274 273 1272 273 1272 250zM1272 250 1272 273 1270 273 1270 250zM1267 250 1267 273 1264 273 1264 250zM1261 250 1261 273 1259 273 1259 250zM1259 250 1259 273 1257 273 1257 250zM1264 264 1263 294 1258 294 1259 264zM1473 189 1474 211 1468 211 1467 189zM1419 318 1419 349 1416 349 1416 318zM1393 293 1393 312 1390 312 1389 293zM1388 293 1389 312 1385 312 1385 293zM1384 293 1385 312 1381 312 1381 294zM1376 294 1377 312 1373 312 1373 294zM1263 171 1262 197 1260 197 1261 171zM1254 171 1253 197 1251 197 1252 171zM1252 171 1251 197 1249 197 1250 171zM1247 171 1247 197 1245 197 1245 171zM1354 255 1355 282 1350 282 1349 255zM1348 255 1349 282 1343 282 1342 255zM1532 367 1532 406 1530 406 1530 367zM998 248 1008 266 1006 267 995 249zM1019 422 1030 438 1026 441 1015 424zM1014 425 1025 441 1022 444 1010 428zM1000 309 1013 328 1009 330 996 311zM991 315 1004 334 1000 336 987 317zM1007 367 1016 384 1012 387 1003 369zM1017 312 1027 333 1024 335 1014 314zM1013 314 1023 335 1019 337 1010 316zM1002 395 1007 404 1002 406 998 397zM994 257 1001 270 998 271 991 258zM1003 434 1012 453 1010 454 1001 435zM996 438 1006 457 1004 457 995 438zM1015 235 1021 248 1019 249 1013 236zM1021 274 1027 288 1024 289 1018 276zM1015 277 1021 290 1018 292 1012 278zM1018 238 1026 254 1024 255 1015 240zM1004 237 1015 260 1011 262 1000 239zM982 286 995 307 990 310 977 289zM1005 381 1010 391 1008 392 1002 382zM1002 382 1008 393 1005 394 1000 384zM1019 307 1030 328 1026 330 1015 308z"/>
<path fill="#858370" opacity="0.55" d="M1114 157 1135 157 1135 159 1114 159zM1195 355 1223 354 1223 356 1195 357zM1195 366 1223 365 1223 367 1195 368zM1115 287 1151 289 1151 291 1115 289zM1153 316 1168 316 1168 319 1153 319zM1153 320 1168 320 1168 323 1153 323zM1153 324 1168 324 1168 327 1154 327zM1154 332 1168 332 1169 335 1154 336zM1105 196 1127 196 1127 197 1105 198zM1105 201 1127 200 1127 202 1105 203zM1105 207 1128 206 1128 208 1105 209zM1107 171 1142 172 1142 176 1107 175zM1159 224 1185 222 1185 224 1159 226zM1105 259 1128 258 1128 262 1105 263zM1162 280 1191 280 1191 287 1162 287zM1181 419 1213 418 1213 420 1181 420zM1181 423 1213 423 1213 424 1181 425zM1163 222 1182 224 1182 226 1163 225zM1227 259 1253 260 1253 263 1227 262zM1141 353 1169 353 1169 356 1141 357zM1143 438 1169 437 1169 441 1144 443zM1197 427 1219 428 1219 432 1197 430zM1213 181 1238 180 1238 184 1213 185zM1227 216 1256 216 1257 220 1228 221zM1161 257 1187 257 1187 261 1161 261zM1202 359 1217 359 1217 362 1202 362zM1150 197 1170 198 1170 201 1150 200zM1208 438 1234 437 1235 440 1208 441zM1208 444 1235 443 1235 445 1209 446zM1209 449 1235 448 1235 451 1209 452zM1209 455 1235 454 1235 456 1209 457zM1099 304 1127 303 1127 305 1099 305zM1127 295 1150 293 1151 298 1128 300zM1133 371 1166 369 1166 372 1134 374zM1134 374 1166 373 1166 376 1134 377zM1134 382 1167 380 1167 383 1134 385zM1207 421 1223 422 1223 424 1207 423zM1207 424 1223 424 1223 427 1207 426zM1207 426 1223 427 1223 429 1206 428zM1206 429 1223 430 1223 432 1206 431zM1206 431 1223 432 1223 434 1206 434zM1206 439 1223 440 1222 442 1206 441zM1206 442 1222 443 1222 445 1206 444zM1141 452 1155 453 1154 456 1140 455zM1223 367 1237 367 1237 373 1222 373zM1210 352 1234 351 1234 354 1210 355zM1210 367 1235 366 1235 369 1210 370zM1231 315 1247 315 1247 321 1231 321zM1219 173 1238 174 1238 177 1219 176zM1102 220 1129 220 1129 225 1102 225zM1102 226 1129 226 1129 231 1102 231zM1158 342 1187 341 1187 345 1158 346zM1158 346 1187 346 1187 350 1158 350zM1158 351 1187 350 1187 354 1158 355zM1221 323 1254 323 1254 327 1221 327zM1221 328 1254 327 1254 331 1221 332zM1205 211 1227 209 1227 215 1206 216zM1120 183 1155 183 1155 188 1120 188zM1206 251 1230 253 1230 255 1206 253zM1205 258 1230 259 1230 261 1205 259zM1205 260 1230 261 1229 263 1205 262zM1205 262 1229 264 1229 265 1205 264zM1205 264 1229 266 1229 268 1205 266zM1190 279 1226 277 1226 283 1191 285zM1158 448 1194 447 1194 451 1158 452zM1221 338 1248 339 1248 342 1221 342zM1135 289 1160 289 1160 292 1135 292zM1131 257 1162 256 1162 262 1131 262zM1131 263 1162 263 1162 268 1131 269zM1129 371 1163 368 1163 372 1129 375zM1190 388 1207 389 1207 394 1189 393zM1204 177 1239 177 1239 180 1204 181zM1129 407 1148 407 1148 412 1129 412zM1106 371 1136 372 1136 377 1106 376zM1106 377 1136 378 1136 383 1105 382zM1123 183 1148 183 1148 186 1123 185zM1065 414 1079 421 1077 424 1063 417zM1091 262 1106 270 1105 272 1090 264zM1042 286 1063 299 1062 302 1040 288zM1049 335 1066 346 1064 348 1048 338zM1092 291 1106 301 1105 303 1091 293zM1054 356 1073 366 1071 369 1053 359zM1053 359 1071 369 1070 372 1052 361zM1081 242 1105 253 1104 255 1080 243zM1069 419 1087 430 1086 431 1068 421zM1048 383 1061 391 1059 393 1047 384zM1050 386 1068 398 1067 400 1048 388zM1048 389 1067 400 1065 402 1047 390zM1047 391 1065 402 1064 404 1046 393zM1072 421 1094 435 1093 436 1070 423zM1095 387 1119 403 1117 406 1093 390zM1044 333 1061 343 1060 345 1043 335zM1044 270 1065 282 1064 284 1043 272zM1075 268 1089 275 1088 277 1074 270zM1046 305 1059 313 1057 316 1044 308zM1036 424 1054 433 1053 435 1035 426zM1040 256 1055 263 1054 265 1039 258zM1048 359 1064 368 1063 370 1047 361zM1070 275 1082 281 1080 285 1069 279zM1068 279 1080 285 1078 289 1066 283zM1086 293 1104 303 1102 305 1084 296zM1082 300 1100 309 1099 312 1081 303zM1096 399 1114 409 1112 412 1094 403zM1422 293 1422 331 1419 331 1419 293zM1412 293 1412 331 1409 331 1409 293zM1408 293 1408 331 1405 331 1405 293zM1405 293 1405 331 1402 331 1402 293zM1379 237 1380 277 1375 277 1374 237zM1374 237 1375 277 1370 277 1369 238zM1368 238 1369 277 1365 277 1364 238zM1297 318 1296 347 1293 347 1294 318zM1293 318 1292 347 1289 347 1290 318zM1354 357 1352 383 1348 383 1349 356zM1337 356 1336 382 1331 382 1332 356zM1507 287 1507 307 1502 307 1501 287zM1324 309 1324 330 1319 330 1319 309zM1432 437 1431 474 1426 473 1428 437zM1427 437 1426 473 1421 473 1422 437zM1382 153 1382 188 1377 188 1378 153zM1377 153 1376 188 1372 188 1372 153zM1558 409 1557 442 1551 441 1552 409zM1544 408 1543 441 1537 441 1539 408zM1465 287 1465 327 1463 327 1463 287zM1397 424 1395 463 1392 463 1394 424zM1530 308 1530 332 1527 332 1528 308zM1528 308 1527 332 1525 332 1525 308zM1525 308 1524 332 1522 332 1523 308zM1281 150 1281 180 1277 180 1278 150zM1344 162 1345 191 1342 191 1342 162zM1460 359 1460 376 1455 376 1454 359zM1457 186 1457 204 1452 204 1452 186zM1451 186 1452 204 1447 204 1446 186zM1445 186 1446 204 1441 204 1440 186zM1351 432 1352 459 1349 459 1348 432zM1345 432 1346 460 1343 460 1342 432zM1342 432 1343 460 1341 460 1339 433zM1344 386 1345 419 1340 419 1340 386zM1339 386 1339 419 1335 419 1335 386zM1439 233 1440 264 1436 264 1435 233zM1325 256 1324 275 1321 275 1322 256zM1418 306 1419 324 1414 324 1413 306zM1412 306 1413 324 1408 324 1407 306zM1406 306 1407 324 1402 325 1401 306zM1503 223 1503 237 1500 237 1500 223zM1440 301 1439 316 1437 316 1437 301zM1497 374 1496 413 1494 413 1495 374zM1329 225 1330 244 1326 244 1325 225zM1324 225 1325 244 1320 244 1319 226zM1318 226 1319 244 1314 244 1313 226zM1263 240 1263 273 1260 273 1259 240zM1259 240 1259 273 1255 273 1255 240zM1250 240 1251 273 1247 273 1247 240zM1246 240 1246 273 1243 273 1242 240zM1375 210 1376 248 1374 248 1372 211zM1402 146 1403 185 1400 185 1400 146zM1421 234 1420 251 1418 251 1419 234zM1419 234 1418 251 1416 251 1417 234zM1415 234 1414 251 1412 251 1413 234zM1413 234 1412 251 1410 251 1411 234zM1406 233 1405 251 1404 251 1404 233zM1404 233 1403 251 1402 251 1402 233zM1271 285 1270 321 1268 320 1269 285zM1478 286 1478 301 1474 301 1474 286zM1473 286 1473 301 1469 301 1469 286zM1440 325 1440 341 1436 342 1435 325zM1353 209 1353 227 1350 227 1350 209zM1300 447 1301 466 1296 466 1295 447zM1538 364 1537 382 1535 382 1536 364zM1491 401 1490 425 1488 425 1489 401zM1440 443 1440 458 1434 458 1435 443zM1312 170 1314 209 1311 209 1309 170zM1448 444 1446 475 1444 475 1446 444zM1375 443 1373 476 1371 476 1372 442zM1463 388 1462 419 1460 418 1461 388zM1458 388 1457 418 1455 418 1456 388zM1512 397 1511 432 1507 432 1508 396zM1304 419 1304 433 1299 433 1299 419zM1506 362 1508 401 1504 401 1503 362zM1527 222 1527 251 1524 251 1523 222zM1253 361 1253 387 1248 387 1248 361zM1479 336 1477 374 1474 374 1476 336zM1540 328 1539 353 1537 353 1538 328zM1426 335 1426 355 1424 355 1424 335zM1545 340 1544 360 1540 360 1540 340zM1338 221 1337 252 1333 252 1334 221zM1328 405 1328 421 1326 421 1326 405zM1564 194 1566 230 1563 230 1561 194zM1560 193 1561 218 1556 218 1556 193zM1323 298 1323 332 1319 332 1319 298zM1381 327 1381 363 1375 363 1375 327zM1374 327 1374 363 1368 363 1368 327zM1559 420 1558 457 1555 457 1555 420zM1545 420 1544 457 1540 457 1541 420zM1341 230 1340 255 1337 255 1338 230zM1384 377 1385 406 1382 406 1381 377zM1371 378 1372 407 1369 407 1368 378zM1349 387 1349 422 1346 422 1346 387zM1288 291 1290 324 1286 324 1284 291zM1279 291 1280 324 1276 324 1274 291zM1274 291 1275 324 1271 324 1270 291zM1561 324 1560 355 1558 355 1559 324zM1559 324 1558 355 1556 355 1557 324zM1425 374 1426 403 1424 403 1423 374zM1321 215 1321 235 1318 235 1317 215zM1508 211 1509 228 1506 228 1506 211zM1503 211 1504 228 1501 228 1501 211zM1498 212 1498 228 1496 228 1496 212zM1495 212 1496 228 1494 228 1493 212zM1493 212 1493 228 1491 229 1490 212zM1324 276 1326 310 1320 310 1319 276zM1357 436 1357 473 1353 473 1353 436zM1479 163 1478 203 1475 203 1476 163zM1475 163 1475 203 1471 203 1472 163zM1477 412 1478 433 1476 433 1475 413zM1474 413 1475 433 1473 433 1472 413zM1340 179 1340 216 1337 216 1337 179zM1399 421 1398 449 1394 449 1395 421zM1523 309 1522 337 1520 337 1521 309zM1520 309 1519 337 1517 337 1518 309zM1517 309 1516 337 1514 337 1515 309zM1515 309 1514 337 1511 336 1512 309zM1512 309 1511 336 1508 336 1509 309zM1509 309 1508 336 1506 336 1507 308zM1420 440 1421 476 1415 476 1415 440zM1451 391 1451 426 1447 426 1448 391zM1447 391 1447 426 1444 426 1444 391zM1444 391 1443 426 1440 426 1441 391zM1287 391 1287 407 1282 407 1282 391zM1281 391 1281 407 1277 407 1276 391zM1276 391 1276 407 1271 407 1271 391zM1274 172 1275 187 1271 187 1271 172zM1307 231 1307 262 1303 262 1304 231zM1541 196 1541 234 1539 234 1539 196zM1270 347 1271 381 1269 382 1268 347zM1256 347 1257 382 1255 382 1254 347zM1278 229 1278 266 1276 266 1276 229zM1478 205 1478 233 1475 233 1476 205zM1388 411 1386 450 1380 450 1382 410zM1455 339 1455 377 1453 377 1452 339zM1443 339 1443 377 1441 377 1440 339zM1315 313 1315 341 1310 341 1310 313zM1552 292 1551 327 1547 327 1548 292zM1345 283 1344 312 1341 312 1342 283zM1299 403 1300 426 1297 426 1297 403zM1555 442 1556 466 1552 466 1551 443zM1540 443 1541 467 1537 467 1536 443zM1264 250 1264 273 1262 273 1262 250zM1478 170 1477 206 1474 206 1475 170zM1462 170 1460 205 1457 205 1459 170zM1481 189 1481 211 1475 211 1474 189zM1260 171 1260 197 1258 197 1259 171zM1258 171 1258 197 1256 197 1256 171zM1530 367 1529 406 1527 406 1527 367zM1326 249 1327 264 1325 264 1324 249zM1325 347 1325 378 1321 378 1322 346zM1317 346 1316 378 1312 378 1313 346zM1479 222 1480 250 1478 250 1477 222zM995 289 1010 310 1008 312 993 291zM993 291 1008 312 1006 313 991 292zM1018 235 1024 248 1021 250 1014 237zM1014 238 1020 250 1016 252 1010 239zM1009 240 1015 253 1012 255 1005 242zM997 264 1006 280 1002 282 993 266zM979 255 988 275 984 276 975 257zM987 283 1000 303 996 306 983 285zM1026 391 1033 403 1029 405 1022 393zM1013 376 1019 386 1016 388 1011 377zM1010 378 1016 388 1014 389 1008 379z"/>
<path fill="#675f4e" opacity="0.55" d="M1114 171 1135 171 1135 173 1114 173zM1110 407 1128 408 1128 411 1109 410zM1109 411 1128 412 1128 415 1109 414zM1109 418 1128 419 1128 422 1109 421zM1195 360 1223 359 1223 362 1195 362zM1183 224 1215 225 1214 230 1182 229zM1182 230 1214 230 1214 235 1182 235zM1105 205 1127 204 1128 206 1105 207zM1125 415 1143 415 1143 421 1125 420zM1235 428 1251 428 1251 430 1235 431zM1120 353 1140 353 1140 357 1120 357zM1164 216 1182 217 1182 220 1164 219zM1164 219 1182 221 1182 223 1163 222zM1163 225 1182 227 1181 229 1163 228zM1221 247 1241 246 1241 250 1221 251zM1197 431 1219 433 1219 436 1197 435zM1213 174 1238 173 1238 176 1213 177zM1213 178 1238 177 1238 180 1213 181zM1113 217 1139 218 1138 223 1113 221zM1172 291 1189 292 1189 297 1172 296zM1161 238 1187 238 1187 242 1161 242zM1161 243 1187 243 1187 247 1161 247zM1145 269 1171 269 1171 278 1145 278zM1202 369 1217 369 1217 372 1202 372zM1159 422 1177 422 1178 425 1159 426zM1150 189 1173 189 1173 196 1150 196zM1102 204 1124 203 1125 208 1102 209zM1102 210 1125 209 1125 214 1102 214zM1102 221 1125 220 1125 225 1102 226zM1129 370 1160 369 1160 373 1129 374zM1099 290 1127 290 1127 292 1099 292zM1099 292 1127 292 1127 294 1099 294zM1099 299 1127 299 1127 301 1099 301zM1099 301 1127 301 1127 303 1099 303zM1099 306 1127 306 1127 307 1099 308zM1099 310 1127 310 1127 312 1099 312zM1099 312 1127 312 1127 314 1099 314zM1128 301 1151 299 1151 304 1128 305zM1206 434 1223 435 1223 437 1206 436zM1151 362 1172 362 1172 367 1151 367zM1099 213 1126 214 1126 219 1099 218zM1103 275 1123 274 1123 278 1103 278zM1201 406 1230 405 1230 407 1201 408zM1102 310 1127 312 1126 315 1102 313zM1225 282 1257 282 1257 288 1225 288zM1128 378 1150 378 1150 382 1128 382zM1214 334 1235 335 1235 338 1213 338zM1213 339 1235 339 1235 343 1213 343zM1213 343 1235 344 1235 347 1213 347zM1157 388 1186 388 1186 390 1157 391zM1157 337 1187 336 1187 340 1158 341zM1221 337 1255 337 1255 341 1221 341zM1154 245 1171 246 1171 248 1154 247zM1154 248 1171 248 1171 250 1154 250zM1154 250 1171 250 1171 252 1154 252zM1154 253 1171 253 1171 255 1154 255zM1154 255 1171 255 1171 257 1154 257zM1154 260 1171 260 1171 262 1154 262zM1206 255 1230 257 1230 259 1205 257zM1158 456 1194 456 1194 459 1159 460zM1221 330 1248 330 1248 334 1221 333zM1172 327 1191 328 1191 330 1172 330zM1129 291 1158 290 1159 295 1129 296zM1130 375 1163 373 1163 377 1130 379zM1130 385 1164 382 1164 386 1130 389zM1130 389 1164 387 1164 391 1131 393zM1204 271 1235 270 1235 275 1205 276zM1205 277 1235 276 1235 281 1205 282zM1205 283 1235 282 1235 287 1205 288zM1223 175 1243 174 1243 177 1223 178zM1232 324 1248 324 1248 330 1232 330zM1027 299 1045 309 1044 312 1026 302zM1025 302 1044 312 1042 315 1024 305zM1024 306 1042 316 1040 318 1022 309zM1064 289 1075 294 1073 297 1062 292zM1032 295 1046 302 1044 304 1031 298zM1045 280 1066 294 1065 297 1043 283zM1073 307 1091 318 1088 322 1071 311zM1091 294 1105 303 1104 305 1089 296zM1070 343 1084 352 1081 356 1068 347zM1065 351 1078 360 1076 364 1062 355zM1062 355 1076 364 1073 368 1060 359zM1079 332 1096 341 1095 344 1077 335zM1100 379 1124 395 1122 398 1098 382zM1098 383 1122 399 1120 402 1095 386zM1095 243 1111 254 1110 255 1094 244zM1094 245 1110 255 1109 257 1093 246zM1035 424 1051 435 1049 437 1034 427zM1041 230 1061 241 1058 246 1039 234zM1084 290 1106 305 1104 309 1081 294zM1081 294 1103 310 1101 313 1079 298zM1095 249 1119 261 1118 263 1094 252zM1073 270 1088 277 1087 279 1072 272zM1043 308 1056 316 1054 319 1041 312zM1043 251 1057 259 1057 261 1042 253zM1100 450 1119 459 1118 461 1099 452zM1051 358 1063 366 1059 372 1047 364zM1084 279 1100 288 1098 290 1082 281zM1089 287 1107 296 1106 299 1088 290zM1084 297 1102 306 1101 309 1083 299zM1052 426 1064 433 1063 435 1050 427zM1519 387 1520 413 1518 413 1517 387zM1511 387 1512 413 1509 413 1508 387zM1368 371 1369 398 1366 398 1365 371zM1362 296 1362 320 1358 320 1357 296zM1351 296 1351 320 1347 320 1346 296zM1345 296 1346 320 1341 320 1341 296zM1447 164 1447 184 1445 184 1445 164zM1445 164 1445 184 1443 184 1442 164zM1442 164 1442 184 1440 184 1440 164zM1440 164 1440 184 1438 184 1437 164zM1426 296 1425 321 1421 321 1422 296zM1421 296 1420 321 1415 321 1417 295zM1416 295 1414 321 1410 321 1411 295zM1410 295 1409 320 1405 320 1406 295zM1342 356 1341 382 1336 382 1338 356zM1398 354 1399 369 1397 369 1396 354zM1537 414 1536 444 1531 444 1531 413zM1530 413 1530 444 1524 444 1525 413zM1279 337 1278 353 1272 352 1273 337zM1286 211 1286 229 1282 229 1282 211zM1282 211 1282 229 1278 229 1278 211zM1278 211 1278 229 1274 229 1274 211zM1491 223 1492 256 1489 256 1488 223zM1471 287 1471 327 1469 327 1469 287zM1461 287 1461 327 1459 327 1459 287zM1393 424 1392 463 1389 463 1391 424zM1333 190 1334 218 1327 218 1326 190zM1386 315 1385 351 1382 351 1384 315zM1377 247 1376 270 1371 270 1372 247zM1353 161 1354 191 1351 191 1351 161zM1339 319 1338 347 1335 347 1336 319zM1453 359 1454 376 1448 376 1448 359zM1346 162 1346 193 1343 193 1343 162zM1339 162 1338 193 1335 193 1336 162zM1335 162 1335 193 1331 192 1332 162zM1376 438 1377 461 1371 461 1370 438zM1423 433 1423 471 1420 471 1420 433zM1316 411 1315 441 1310 441 1311 411zM1332 256 1331 275 1328 275 1329 256zM1314 256 1313 275 1310 275 1311 256zM1449 301 1448 316 1446 316 1446 301zM1446 301 1445 316 1443 316 1443 301zM1433 301 1433 316 1430 315 1431 301zM1430 300 1430 315 1427 315 1428 300zM1436 388 1437 418 1435 418 1433 388zM1523 397 1523 413 1521 413 1521 397zM1521 397 1521 413 1519 413 1519 397zM1514 397 1514 413 1512 413 1512 397zM1510 397 1510 413 1508 413 1508 397zM1323 277 1324 299 1319 299 1318 277zM1514 412 1514 429 1512 429 1512 412zM1366 235 1366 267 1364 267 1364 235zM1364 235 1364 267 1362 267 1362 235zM1361 235 1361 267 1359 267 1359 235zM1357 235 1356 267 1354 267 1355 235zM1354 235 1354 267 1352 267 1352 235zM1350 235 1349 267 1347 267 1348 235zM1345 235 1345 267 1343 267 1343 235zM1377 210 1379 247 1376 248 1375 210zM1476 242 1478 273 1474 273 1473 242zM1400 146 1400 185 1398 185 1397 147zM1423 234 1422 252 1420 251 1421 234zM1288 285 1287 321 1284 321 1285 285zM1285 285 1284 321 1282 321 1282 285zM1279 285 1278 321 1276 321 1277 285zM1276 285 1276 321 1273 321 1274 285zM1274 285 1273 321 1271 321 1271 285zM1268 285 1267 320 1265 320 1266 285zM1265 285 1265 320 1262 320 1263 285zM1463 286 1463 301 1459 301 1459 286zM1539 173 1538 190 1536 190 1537 173zM1550 429 1550 446 1546 446 1546 429zM1529 196 1527 230 1522 230 1524 195zM1516 195 1515 230 1509 229 1511 195zM1514 402 1513 426 1511 426 1512 402zM1512 402 1511 426 1509 426 1510 402zM1505 402 1504 426 1502 426 1503 402zM1494 401 1493 425 1491 425 1492 401zM1428 443 1428 458 1422 458 1423 443zM1422 443 1422 458 1416 458 1417 443zM1381 399 1382 429 1380 429 1379 399zM1391 249 1391 271 1384 271 1384 249zM1302 170 1303 209 1300 209 1299 170zM1461 444 1459 476 1457 475 1458 444zM1453 444 1452 475 1449 475 1451 444zM1450 444 1449 475 1447 475 1448 444zM1443 444 1441 475 1439 475 1440 444zM1440 444 1439 475 1436 475 1438 444zM1307 349 1306 373 1300 373 1302 349zM1301 349 1299 373 1294 373 1295 348zM1474 263 1474 287 1468 287 1468 263zM1557 283 1557 311 1553 311 1553 283zM1250 335 1251 372 1249 372 1248 335zM1316 419 1316 434 1311 433 1311 419zM1515 362 1517 401 1513 401 1511 362zM1502 362 1503 401 1500 401 1498 362zM1431 225 1432 250 1427 250 1427 225zM1469 335 1467 374 1464 374 1466 335zM1444 199 1443 223 1441 223 1442 199zM1434 199 1433 223 1431 222 1432 199zM1432 199 1431 222 1429 222 1430 199zM1316 433 1315 450 1312 450 1313 433zM1300 432 1300 450 1296 450 1297 432zM1296 432 1296 450 1292 450 1293 432zM1554 420 1554 457 1550 457 1550 420zM1558 191 1558 211 1556 211 1556 191zM1456 327 1455 353 1450 353 1451 326zM1368 344 1368 363 1363 363 1363 344zM1357 344 1357 363 1353 363 1352 344zM1374 378 1375 406 1373 407 1371 378zM1405 363 1406 397 1404 397 1403 363zM1402 363 1403 397 1401 398 1400 363zM1444 373 1445 402 1444 402 1442 373zM1296 305 1298 338 1295 338 1294 305zM1294 305 1295 338 1293 338 1292 306zM1342 265 1344 287 1342 287 1341 266zM1311 217 1311 232 1306 232 1307 217zM1306 217 1306 232 1301 232 1301 217zM1510 306 1510 334 1507 334 1507 307zM1495 307 1495 334 1492 334 1492 307zM1482 409 1482 425 1472 424 1473 408zM1530 442 1531 465 1524 465 1524 442zM1522 442 1523 465 1516 466 1516 442zM1390 420 1388 448 1384 448 1386 420zM1473 339 1474 367 1469 367 1469 340zM1468 340 1469 367 1464 367 1464 340zM1463 340 1463 367 1459 367 1459 340zM1458 340 1458 367 1454 367 1454 340zM1365 271 1365 297 1361 297 1361 271zM1483 418 1482 451 1479 451 1480 418zM1571 227 1572 257 1569 258 1567 227zM1557 227 1559 258 1555 258 1554 227zM1368 385 1368 417 1365 417 1365 385zM1546 196 1546 234 1544 234 1544 196zM1358 186 1359 205 1356 205 1356 186zM1356 186 1356 205 1354 205 1353 186zM1353 186 1353 205 1351 205 1350 186zM1444 361 1444 376 1441 376 1440 361zM1273 229 1273 266 1270 266 1271 229zM1560 203 1560 242 1556 242 1557 203zM1557 292 1556 327 1552 327 1553 292zM1542 292 1541 327 1537 327 1538 292zM1445 303 1444 335 1441 335 1442 303zM1557 425 1557 447 1554 447 1553 425zM1553 425 1553 447 1549 447 1549 425zM1548 425 1549 447 1545 447 1545 425zM1452 440 1451 466 1446 466 1447 439zM1361 199 1362 225 1357 225 1357 199zM1268 294 1268 320 1263 320 1263 294zM1256 207 1257 233 1252 233 1251 207zM1417 189 1417 214 1415 214 1414 189zM1465 170 1463 205 1461 205 1462 170zM1407 277 1406 310 1403 310 1405 277zM1389 276 1388 309 1385 309 1387 276zM1482 221 1483 250 1480 250 1479 222zM1010 428 1021 444 1017 447 1006 431zM987 268 994 281 992 282 985 269zM985 269 991 282 989 283 983 270zM996 312 1008 331 1004 333 992 314zM1016 362 1026 379 1022 381 1012 364zM1023 342 1035 363 1032 364 1020 344zM1004 366 1009 376 1007 377 1002 367zM1011 314 1023 334 1020 335 1008 316zM1008 316 1020 336 1017 337 1005 317zM1011 309 1019 327 1017 327 1009 310zM1009 310 1017 328 1015 328 1007 311zM1007 311 1015 329 1013 330 1005 312zM1007 379 1013 390 1011 391 1005 381zM1015 309 1026 330 1022 332 1011 311z"/>
<polygon points="996,168 1038,173 1062,190 1090,210 1108,226 1104,242 1067,248 1056,242 1041,226 1010,218 984,226 970,221 963,207 980,190 992,173" fill="#7a786a" opacity="0.85"/>
<path d="M925 183 Q962 196 984 226 Q1010 214 1040 222 Q1050 232 1058 246" fill="none" stroke="#3d5a42" stroke-width="6" opacity="0.75" fill="none"/>
<polygon points="1442,290 1546,295 1546,370 1442,365" fill="#77756a" opacity="0.5"/>
<path fill="#8f877b" opacity="0.5" d="M812 360 813 360 813 362 811 361zM473 437 475 438 474 439 473 438zM584 453 586 454 585 456 583 455zM717 460 719 459 719 461 717 462zM622 418 625 418 625 420 623 420zM669 458 672 457 672 459 670 460zM809 356 811 355 812 356 810 357zM757 368 759 367 759 369 758 369zM773 424 775 424 775 425 774 425zM581 440 584 439 584 441 582 442zM651 416 654 417 653 419 650 418zM690 381 692 382 691 383 689 382zM771 391 773 391 773 392 771 393zM651 352 653 352 654 354 651 354zM518 398 520 399 519 400 518 399zM683 364 686 363 687 366 684 366zM526 439 529 438 530 440 527 441zM765 369 768 368 768 370 766 371zM718 427 720 427 720 428 718 428zM540 411 541 410 542 411 540 412zM740 448 743 448 743 450 740 450zM749 335 751 335 751 337 749 337zM466 416 467 416 467 417 465 417zM777 364 780 363 781 365 778 366zM558 434 559 433 559 434 558 435zM716 456 718 456 718 458 716 458zM779 336 781 337 780 339 778 338zM663 384 665 384 665 385 664 386zM561 404 564 406 563 408 561 407zM747 435 749 434 750 436 747 437zM578 433 580 434 579 436 577 435zM794 398 796 398 796 399 794 399zM710 410 713 410 713 412 710 412zM694 438 696 437 697 439 695 439zM768 381 769 380 770 381 768 382zM689 434 690 433 690 434 689 435zM694 439 695 439 696 440 694 441zM625 422 626 423 626 423 625 423zM679 429 681 429 681 430 679 430zM778 412 779 413 779 414 777 413zM685 447 687 447 688 449 685 449zM782 399 783 400 783 401 781 400zM557 406 559 405 560 406 558 407zM701 414 703 415 703 416 701 416zM739 368 741 368 741 370 739 370zM507 404 509 405 508 407 506 406zM749 375 750 376 750 377 748 376zM750 395 753 396 753 398 750 397zM797 438 800 438 800 440 797 440zM546 411 548 410 549 412 547 413zM770 439 772 440 772 441 770 440zM476 455 479 456 478 458 476 457zM605 423 607 424 606 426 604 425zM688 352 689 351 689 352 688 353zM767 451 769 451 769 453 767 452zM666 386 668 386 668 388 665 388zM780 389 782 388 783 390 781 391zM472 449 474 449 474 451 472 451zM749 420 750 419 751 420 749 421zM546 412 547 412 547 413 546 413zM527 409 529 409 529 411 526 411zM675 458 677 458 677 460 674 460zM538 415 540 415 541 417 538 417zM735 373 737 373 737 375 735 375zM577 435 579 434 579 435 578 436zM723 423 725 423 725 424 724 424zM624 426 627 427 626 429 624 428zM790 347 792 347 792 349 790 349zM652 450 654 449 655 451 653 451zM751 387 753 386 754 388 751 388zM728 418 729 419 729 420 727 419zM727 385 729 385 728 386 727 386zM702 441 705 442 704 444 702 443zM633 420 635 419 635 420 634 421zM445 452 448 451 449 453 446 454zM504 430 506 430 506 431 504 431zM502 443 504 443 504 444 502 444zM559 440 561 440 561 441 560 442zM632 431 634 433 633 435 631 433zM605 417 607 417 607 419 605 419zM776 446 778 447 778 450 775 448zM770 449 773 450 772 452 769 451zM788 366 791 365 792 367 789 368zM617 422 618 422 618 423 616 423zM594 430 596 430 596 431 594 431zM613 428 615 428 615 429 613 429zM758 352 760 352 760 354 758 354zM765 344 767 344 767 346 765 346zM482 446 484 446 484 448 481 448zM620 432 622 431 622 432 620 433zM582 412 584 413 584 415 582 415zM727 385 729 386 728 388 726 386zM449 442 450 442 451 443 449 443zM629 448 632 447 633 449 630 450zM774 350 775 350 776 351 774 351zM603 454 606 455 605 456 603 456zM787 413 788 414 788 415 786 414zM717 365 719 364 720 366 718 367zM508 448 511 448 511 450 508 450zM687 457 690 456 690 458 687 459zM744 414 745 413 746 414 744 415zM542 408 545 408 545 410 542 411zM665 351 667 350 668 352 666 353zM676 417 679 418 679 420 676 420zM684 380 686 380 686 381 684 382zM793 400 794 400 794 401 793 401zM508 391 510 392 510 393 507 392zM446 434 449 433 449 435 446 436zM676 427 678 426 679 428 677 429zM762 417 763 417 763 418 762 418zM776 423 778 422 778 424 776 424zM743 370 745 369 746 370 744 371zM714 408 715 408 715 409 714 409zM509 438 511 438 511 439 509 439zM645 415 647 416 646 417 644 416zM503 394 505 394 506 396 503 396zM525 398 528 398 528 400 526 400zM796 453 797 452 797 454 796 454zM530 413 532 413 532 415 530 415zM671 410 674 411 673 413 671 412zM610 444 611 443 612 444 610 445zM610 416 612 416 613 417 611 418zM588 413 591 413 591 415 588 416zM655 393 658 394 657 396 655 395zM554 437 556 437 556 438 554 438zM798 445 800 444 801 446 799 447zM791 391 792 391 792 392 791 392zM615 426 617 427 616 428 615 427zM751 356 753 357 753 359 750 358zM521 416 523 416 524 418 521 418zM457 454 459 455 458 456 456 456zM717 367 719 366 720 368 717 369zM787 421 789 422 789 424 786 423zM718 348 720 348 720 350 718 349zM501 390 502 391 502 392 500 391zM662 384 664 384 664 385 663 386zM493 434 495 435 494 436 493 435zM757 426 759 426 759 428 757 428zM717 384 718 384 719 385 717 386zM545 422 547 423 546 424 544 423zM739 375 741 376 740 377 738 376zM661 392 662 393 662 394 660 393zM611 457 613 457 614 458 612 459zM500 433 502 434 501 436 499 435zM537 439 538 440 537 441 536 440zM531 421 534 420 534 422 532 423zM790 376 792 376 792 377 790 378zM782 440 784 439 784 440 783 441zM743 407 746 408 745 410 742 409zM801 382 804 384 803 386 800 385zM798 363 800 362 801 363 799 364zM728 416 731 415 731 417 728 418zM678 416 680 415 681 417 679 418zM577 409 578 408 579 409 577 410zM584 422 585 422 585 423 584 423zM510 391 512 392 511 394 509 393zM564 428 566 428 566 430 564 430zM675 347 676 346 677 347 675 348zM709 346 710 347 710 348 708 347zM669 358 672 358 672 360 670 360zM751 458 754 458 754 461 751 460zM455 411 456 411 456 412 455 412zM447 437 450 437 450 439 447 439zM633 428 635 428 635 429 633 429zM477 422 479 422 479 424 477 424zM537 401 539 402 538 404 536 403zM483 443 485 444 484 445 482 444zM582 400 583 401 583 402 581 401zM617 433 620 433 620 436 617 435zM788 460 790 460 791 461 789 462zM548 451 550 453 550 454 547 453zM454 452 456 451 457 453 454 454zM668 406 671 405 671 407 668 407zM674 427 676 428 675 429 673 428zM570 448 572 447 573 449 570 450zM791 425 792 426 792 427 790 426zM731 360 733 360 733 362 731 362zM691 351 693 351 693 353 691 352zM710 391 712 390 712 391 711 392zM762 438 764 438 763 440 762 439zM698 446 700 445 700 447 698 447zM811 352 813 353 812 355 810 353zM726 394 729 394 729 396 726 396zM522 393 524 391 526 393 523 395zM741 414 743 415 742 416 740 416zM674 397 676 397 676 399 673 399zM734 436 735 436 736 437 734 437zM452 434 453 434 454 435 452 435zM633 446 635 446 634 447 633 447zM466 406 469 407 468 409 466 408zM465 454 466 454 466 455 465 455zM452 412 454 413 453 414 452 413zM545 403 547 403 547 405 545 405zM585 443 587 443 587 445 585 445zM702 368 704 367 705 368 703 369zM581 437 582 436 583 437 581 438zM662 443 664 443 664 445 662 445zM518 452 521 451 522 453 519 454zM786 368 788 367 788 369 787 369zM534 411 537 411 537 412 535 413zM667 377 669 377 669 378 668 378zM691 344 693 344 693 346 691 345zM762 373 763 373 763 374 761 374zM728 390 731 391 730 393 728 392zM626 459 628 458 628 460 626 460zM562 416 564 417 563 418 562 417zM537 447 539 447 538 448 537 448zM462 405 464 404 465 406 462 407zM508 459 510 459 510 460 508 460zM726 393 728 394 728 395 726 395zM767 456 768 456 768 457 767 457zM663 440 665 439 666 441 664 442zM457 438 459 437 459 438 458 439zM456 421 459 422 458 424 456 423zM709 349 711 349 711 351 708 351zM715 372 717 373 717 374 715 374zM453 421 456 421 456 422 453 422zM727 379 729 377 730 379 727 381zM648 447 651 446 651 449 648 449zM788 367 789 368 789 369 787 368zM730 456 733 455 734 457 731 458zM561 456 564 456 564 457 562 458zM672 384 675 384 675 387 672 387zM634 432 636 431 637 434 634 434zM787 348 789 348 789 350 787 350zM708 363 711 363 711 365 708 365zM679 404 682 403 682 406 679 406zM797 437 800 437 799 439 797 438zM668 298 671 299 670 301 667 300zM661 239 662 239 662 240 661 240zM715 315 716 315 716 316 715 316zM744 288 746 287 747 289 745 289zM694 295 696 295 695 296 694 296zM738 306 739 306 739 308 737 307zM712 263 714 263 714 265 712 265zM688 232 691 233 690 235 687 235zM659 239 661 239 661 240 659 240zM698 209 701 209 701 211 698 210zM762 224 763 225 763 226 761 225zM760 252 762 252 762 253 760 254zM723 267 725 267 724 268 723 268zM687 211 689 212 689 214 686 213zM733 230 735 230 735 232 733 231zM689 275 690 275 690 276 688 276zM676 270 678 269 679 271 677 272zM718 264 721 263 722 265 719 266zM746 256 749 256 749 258 746 258zM744 276 745 276 745 277 743 277zM707 252 709 252 709 253 708 253zM706 287 708 286 708 287 707 288zM711 314 713 313 714 315 711 315zM673 282 674 281 675 282 673 283zM748 231 751 231 751 233 748 233zM666 228 668 228 668 230 665 230zM738 273 740 272 740 274 738 274zM697 284 698 284 698 285 697 285zM676 208 678 208 678 209 676 209zM738 259 740 259 741 260 739 261zM703 223 706 223 705 225 702 225zM709 294 710 295 710 297 708 296zM735 267 736 268 736 269 734 268zM683 243 685 243 685 245 682 245zM664 238 667 239 667 241 664 240zM722 307 725 306 725 309 722 310zM712 236 713 236 714 237 712 238zM761 312 764 313 763 315 761 314zM726 299 728 300 727 302 725 301zM753 200 755 200 755 201 753 201zM706 302 707 301 708 302 706 303zM670 201 672 201 672 203 670 203zM767 282 769 282 769 284 767 284zM675 304 678 304 677 306 675 306zM755 247 757 248 757 250 754 249zM672 301 674 300 675 302 673 302zM769 313 772 312 773 314 770 315zM769 271 771 270 771 272 769 273zM704 321 705 321 705 322 704 322zM668 212 670 211 671 213 669 214zM724 239 726 239 726 240 724 240zM714 216 717 215 718 217 715 218zM702 298 704 298 705 299 703 300zM764 298 766 298 765 299 764 299zM707 230 709 231 708 232 706 232zM677 266 679 265 680 267 678 268zM739 243 741 243 740 245 738 244zM732 311 735 311 735 314 732 314zM757 278 759 279 759 281 757 280zM700 284 702 284 702 286 700 285zM758 218 760 219 759 220 758 219zM708 276 710 276 710 278 708 278zM755 288 758 287 758 288 756 289zM756 302 758 301 758 303 756 303zM701 237 703 237 702 238 701 238zM740 304 742 303 742 304 740 305zM708 217 710 217 711 219 709 219zM669 326 671 325 671 327 669 327zM661 301 663 300 663 302 661 302zM600 304 603 303 603 306 600 307zM663 336 667 334 668 337 664 339zM612 291 615 292 614 294 611 293zM639 322 641 323 641 325 639 324zM621 270 624 271 623 274 620 273zM619 330 622 329 624 331 620 333zM640 283 643 283 643 285 641 285zM635 340 636 340 636 341 635 341zM628 247 630 247 630 248 628 248zM628 291 630 291 630 292 628 293zM657 250 659 250 658 252 656 251zM627 297 631 298 630 301 626 300zM619 313 621 313 620 315 618 314zM603 268 605 268 605 270 603 270zM662 312 666 313 664 316 661 314zM607 273 609 273 610 274 607 275zM615 291 618 291 618 292 616 293zM614 333 618 334 618 336 614 336zM625 292 626 291 627 292 625 293zM698 327 700 327 700 329 698 329zM600 263 603 262 603 265 600 265zM628 251 630 252 629 253 628 252zM604 327 607 326 607 328 605 329zM606 335 610 335 610 337 606 337zM603 325 605 324 605 325 604 326zM612 340 614 340 614 342 611 342zM612 321 615 321 615 323 612 323zM765 328 769 328 769 331 765 331zM829 346 834 347 833 350 829 349zM785 331 789 333 787 336 783 334zM795 342 800 342 800 345 796 345zM831 350 833 350 833 351 831 351zM827 339 830 340 829 342 826 341zM782 325 785 324 787 327 783 328zM825 345 827 345 827 346 825 347zM764 327 767 328 766 330 764 329zM699 183 701 183 702 184 700 185zM730 181 733 180 734 183 731 183zM713 170 716 171 716 173 713 173zM694 193 697 194 696 197 693 195zM493 243 495 243 495 245 493 245zM481 241 483 242 482 244 480 242zM507 255 509 256 509 258 506 257zM437 232 440 232 440 234 438 234zM444 246 447 245 447 247 445 248zM485 242 487 242 487 243 485 244zM483 263 485 262 485 264 484 265zM505 267 507 267 507 268 506 269zM453 214 455 215 454 216 453 215zM513 268 516 269 515 270 513 270zM461 269 463 270 462 271 460 270zM482 252 484 252 485 254 482 254zM479 219 480 219 480 220 479 220zM485 252 487 252 486 254 484 253zM498 268 500 268 500 269 499 269zM429 243 432 243 432 244 430 245zM484 260 487 261 486 263 483 262zM472 271 475 271 475 273 472 273zM472 264 474 263 474 264 473 265zM500 279 503 279 503 281 500 281zM431 255 433 254 434 256 432 256zM420 214 422 215 422 216 420 216zM484 251 486 251 485 253 483 252zM447 226 449 227 449 228 447 228zM478 241 481 241 481 243 479 243zM475 222 476 223 476 224 475 224zM511 270 514 269 515 271 512 272zM429 237 431 239 430 240 428 239zM444 222 446 221 447 222 445 224zM511 260 512 259 513 260 512 261zM447 250 449 251 449 253 446 252zM454 250 456 251 456 253 453 252zM512 256 513 256 513 258 511 257zM457 236 459 236 459 238 456 237zM493 283 496 283 495 285 493 284zM503 277 504 276 505 278 503 279zM494 253 497 252 497 254 495 255zM445 243 447 242 447 243 446 244zM490 251 491 251 491 252 490 252zM433 229 435 228 435 230 433 231zM500 271 502 270 502 272 500 272zM493 239 495 239 495 240 493 240zM506 275 508 275 508 277 505 276zM480 231 482 231 481 232 480 232zM501 266 503 266 503 268 501 268zM467 219 468 219 468 220 466 220zM440 238 442 239 441 240 439 240zM462 234 464 235 464 236 462 236zM451 242 454 243 453 245 451 244zM470 263 472 263 472 265 470 265zM437 258 440 259 439 260 437 259zM862 457 863 457 863 458 862 458zM904 456 906 456 907 458 904 458zM825 399 828 399 828 401 826 401zM839 455 841 456 841 457 839 457zM868 401 871 401 871 403 869 403zM888 394 891 394 891 397 888 397zM837 406 840 406 840 409 837 408zM845 409 848 408 848 410 846 410zM843 399 846 400 845 402 843 401zM880 458 881 459 881 460 879 459zM852 421 854 422 853 423 852 422zM866 404 869 404 869 406 866 406zM813 395 816 396 816 398 813 397zM841 386 844 386 844 388 841 388zM903 455 906 454 907 456 904 457zM842 456 843 455 843 456 842 457zM1072 218 1074 218 1074 220 1071 220zM1018 194 1020 193 1020 194 1019 195zM1057 240 1058 240 1059 241 1057 242zM979 216 981 215 981 217 979 217zM1071 200 1073 199 1074 201 1071 202zM1104 239 1106 240 1105 241 1104 241zM1081 209 1083 210 1083 212 1081 211zM1013 209 1015 210 1014 211 1012 211zM1062 199 1064 198 1064 199 1063 200zM1053 232 1055 232 1054 234 1052 233zM1045 186 1047 186 1047 188 1045 187zM987 182 989 182 989 183 987 183zM1076 224 1077 225 1077 226 1075 226zM1000 189 1002 189 1002 190 1000 190zM1062 225 1064 225 1064 226 1062 226zM1090 222 1092 221 1093 222 1091 223zM1005 192 1007 192 1007 193 1005 194zM1057 233 1060 233 1060 235 1058 235zM1007 172 1009 171 1009 173 1007 173zM1023 193 1025 193 1024 195 1023 194zM977 223 979 222 979 223 978 224zM1075 215 1077 215 1077 216 1075 217zM1011 193 1013 193 1013 195 1011 195zM983 186 985 186 985 187 984 187zM1082 244 1084 244 1083 245 1082 245zM1071 238 1073 238 1073 239 1072 240zM1029 184 1031 184 1031 186 1028 186zM985 203 987 203 987 204 985 204zM1063 229 1065 230 1065 231 1062 230zM1029 174 1030 173 1031 174 1029 175zM1048 198 1049 198 1049 199 1048 199zM1089 214 1091 213 1092 215 1089 216zM1008 214 1010 214 1010 215 1009 215zM1022 186 1024 187 1024 189 1021 188zM1017 177 1018 177 1018 179 1017 179zM1000 200 1002 201 1002 202 1000 202zM1088 240 1090 239 1091 241 1089 241zM1024 183 1026 184 1025 186 1023 185zM1013 206 1015 206 1015 208 1013 208zM1088 209 1090 209 1091 211 1088 211zM1038 215 1040 214 1040 215 1038 216zM975 198 977 198 976 200 975 199zM1047 196 1049 196 1049 197 1048 197zM1035 189 1037 189 1037 191 1035 190zM1033 219 1035 220 1035 222 1033 221zM1021 197 1023 197 1023 199 1021 198zM1049 199 1051 199 1051 200 1050 200zM1038 194 1039 193 1040 194 1039 195zM1015 202 1017 203 1016 204 1015 204zM1023 217 1024 218 1024 219 1023 219zM1044 209 1046 209 1046 210 1044 210zM1106 226 1108 226 1108 227 1106 227zM992 188 994 188 994 189 992 189zM1084 213 1086 212 1087 214 1085 214zM1018 200 1020 201 1019 202 1018 201zM966 215 968 214 969 216 967 217zM984 211 986 211 986 212 984 212zM1068 196 1070 195 1071 197 1069 198zM999 188 1001 187 1001 188 999 190zM1027 175 1029 176 1028 178 1026 177zM983 214 985 214 984 215 983 215zM991 222 992 222 992 223 991 223zM995 172 996 172 996 173 995 173zM1031 173 1033 173 1034 174 1032 175zM1060 200 1061 201 1061 202 1059 201zM1081 232 1083 232 1083 233 1081 233zM1034 201 1036 201 1036 202 1034 202zM1021 198 1023 198 1023 199 1021 199zM986 204 987 205 987 206 985 205zM975 213 976 214 976 215 974 215zM1081 217 1083 218 1083 220 1081 219zM1002 189 1004 189 1004 191 1002 191zM967 210 969 210 969 212 967 212zM1060 199 1061 200 1061 201 1059 200zM979 206 980 206 980 207 979 207zM985 193 988 192 988 194 986 195zM1035 196 1037 196 1038 197 1035 198zM1088 226 1090 227 1089 228 1088 227zM1007 215 1009 215 1010 216 1007 217zM1036 193 1039 192 1039 194 1037 194zM1028 186 1030 187 1030 189 1028 188zM1049 217 1051 218 1050 220 1048 219zM985 207 988 206 988 208 986 209zM1032 201 1035 202 1034 204 1032 203zM1025 200 1027 199 1027 200 1026 201zM975 205 976 205 976 206 975 206zM1002 197 1004 198 1003 199 1002 198zM1010 202 1012 201 1013 203 1011 204zM1072 227 1073 227 1074 228 1072 229zM1036 210 1037 210 1037 212 1036 211zM1033 191 1035 192 1034 194 1032 193zM1024 185 1026 185 1026 186 1025 186zM1039 178 1042 177 1042 179 1040 179zM991 221 993 222 993 223 991 222zM1054 222 1056 222 1056 224 1054 224zM1069 203 1071 202 1072 204 1069 205zM1014 179 1016 179 1016 181 1014 180zM1070 230 1072 230 1072 231 1070 232zM1073 203 1074 202 1074 203 1073 203zM1015 175 1018 177 1017 178 1014 177zM1024 172 1025 173 1025 174 1023 174zM1010 211 1011 212 1011 213 1010 212zM1079 202 1081 202 1081 204 1079 204zM1031 185 1033 185 1033 187 1031 186zM1058 210 1059 209 1060 211 1058 211zM1090 220 1092 220 1092 222 1090 222zM1041 175 1042 175 1042 176 1041 176zM982 215 984 215 984 217 982 217zM1079 223 1081 224 1080 225 1079 224zM1056 208 1058 208 1058 210 1056 209zM1085 225 1087 225 1087 227 1085 227zM1051 193 1053 193 1053 195 1051 195zM1067 204 1069 204 1069 205 1067 206zM1067 222 1069 223 1068 225 1066 224zM1070 202 1073 202 1072 204 1070 204zM1034 183 1036 184 1036 186 1033 185zM988 197 990 197 990 198 988 198zM974 213 976 213 976 214 974 214zM1056 226 1058 226 1058 227 1056 227zM1010 208 1011 208 1011 209 1010 209zM1020 203 1022 203 1022 204 1020 204zM1052 215 1054 213 1055 215 1053 216zM1079 217 1080 217 1081 218 1079 218zM1061 233 1063 234 1063 235 1061 235zM1000 215 1001 215 1001 216 1000 216zM1487 357 1489 356 1490 358 1488 358zM1509 366 1510 366 1511 367 1509 367zM1494 349 1496 350 1495 352 1493 351zM1489 356 1491 357 1490 359 1488 358zM1448 308 1450 308 1450 310 1448 310zM1482 325 1483 325 1483 326 1482 326zM1450 309 1451 309 1451 310 1450 310zM1545 331 1547 331 1547 332 1545 332zM1478 321 1480 322 1479 323 1478 322zM1450 297 1452 298 1451 299 1449 298zM1449 341 1451 341 1450 342 1449 342zM1526 338 1528 337 1528 339 1527 339zM1494 361 1497 361 1497 363 1494 363zM1532 329 1534 330 1533 331 1532 330zM1516 345 1518 346 1518 347 1515 347zM1540 348 1541 348 1542 349 1541 349zM1469 346 1470 346 1471 347 1469 348zM1506 350 1508 350 1508 351 1507 352zM1461 308 1462 308 1463 309 1461 309zM1478 341 1480 341 1480 343 1478 343zM1501 352 1503 352 1503 354 1501 354zM1450 291 1451 291 1450 293 1449 292zM1516 362 1518 362 1517 364 1515 363zM1477 321 1478 321 1479 322 1477 323zM1515 313 1517 314 1517 316 1514 315zM1492 294 1494 293 1494 295 1492 295zM1495 338 1497 338 1497 339 1495 339zM1505 352 1506 352 1506 353 1505 353zM1465 309 1467 308 1468 309 1466 310zM1529 296 1531 296 1531 298 1529 298zM1473 332 1475 332 1475 333 1473 333zM1530 318 1532 318 1532 319 1530 319zM1506 357 1508 357 1508 359 1506 359zM1523 298 1526 297 1526 299 1524 299zM1474 339 1476 339 1476 340 1475 341zM1475 364 1476 365 1476 366 1474 366zM1496 349 1498 350 1497 351 1495 351zM1457 361 1459 361 1459 363 1457 362zM1452 300 1453 300 1453 301 1451 301zM1483 329 1484 329 1484 331 1483 331zM1447 328 1449 327 1450 329 1448 330zM1518 330 1519 330 1519 331 1518 331zM1519 339 1521 340 1521 341 1519 341zM1485 316 1487 315 1488 316 1486 317zM1493 319 1496 319 1495 321 1493 321zM1542 355 1544 355 1544 357 1542 357zM1241 294 1243 293 1243 295 1241 296zM1197 306 1199 306 1198 307 1197 307zM1178 312 1180 311 1180 313 1178 313zM1222 311 1224 311 1224 312 1222 312zM1200 309 1202 310 1201 312 1199 311zM1170 289 1171 289 1171 290 1170 290zM1170 299 1172 298 1173 300 1171 301zM1169 297 1171 297 1171 299 1169 299zM1168 291 1169 292 1169 293 1167 292zM1206 297 1209 297 1208 299 1206 298zM1167 286 1169 285 1169 287 1167 288zM1245 301 1247 300 1247 302 1245 302zM1235 316 1236 316 1236 317 1235 317zM1168 302 1170 302 1170 303 1168 304zM1197 301 1199 300 1199 301 1198 302zM1221 316 1223 316 1223 318 1221 318zM1216 295 1218 295 1218 296 1216 296zM1184 314 1185 314 1185 315 1184 315zM1225 299 1227 298 1228 300 1225 301zM1232 295 1234 295 1235 296 1233 297zM1174 290 1176 291 1176 292 1173 292zM1246 313 1248 313 1248 314 1246 314zM1217 290 1219 290 1219 291 1217 291zM1215 290 1217 289 1217 291 1215 291zM1167 311 1169 310 1169 311 1168 312zM1246 310 1248 309 1248 311 1246 311zM1178 290 1180 289 1181 291 1179 292zM1186 295 1188 296 1187 298 1185 296zM1222 313 1223 312 1224 313 1222 314zM439 430 441 430 441 431 439 431zM388 453 390 454 389 455 388 455zM357 451 359 451 359 453 357 452zM423 431 425 430 426 431 424 432zM347 406 349 405 350 407 348 408zM352 425 354 426 354 428 351 427zM423 421 425 422 425 423 423 423zM341 397 343 397 343 399 341 399zM354 408 356 409 355 411 354 410zM384 445 386 445 386 447 384 447zM433 416 435 417 435 418 432 418zM396 431 398 430 398 432 396 432zM336 409 338 410 337 412 335 411zM359 411 361 410 361 412 360 412zM349 459 351 460 351 461 349 460zM351 429 352 429 353 430 352 430zM352 427 354 427 354 428 352 429zM333 416 335 416 335 417 333 418zM433 449 435 450 434 451 433 451zM447 443 450 443 450 445 447 445zM438 452 440 451 440 452 438 453zM378 408 379 410 379 411 377 410zM372 411 374 412 374 414 371 413zM350 460 353 460 353 462 350 462zM438 407 440 406 441 408 439 408zM362 420 363 421 363 422 362 422zM374 433 375 432 375 434 374 434zM392 404 394 404 394 405 393 406zM414 403 416 403 416 404 414 404zM337 455 339 456 339 457 337 457zM376 436 377 435 378 436 376 437zM395 438 397 437 397 438 396 439zM341 450 344 450 344 452 341 451zM588 353 590 353 591 355 588 355zM543 372 545 371 546 373 544 374zM542 359 545 358 545 360 543 361zM550 353 553 354 552 355 550 355zM522 327 525 328 524 330 522 329zM563 319 565 320 564 322 562 321zM529 364 531 364 530 366 528 365zM587 314 588 315 587 315 586 315zM513 341 515 340 515 342 513 342zM563 330 565 331 565 333 562 332zM563 356 565 356 565 358 563 357zM532 327 534 326 534 328 532 328zM521 335 522 335 522 336 521 336zM565 332 567 331 568 333 566 334zM568 351 570 350 570 352 568 352zM537 339 539 338 539 339 538 340zM563 359 564 360 564 361 563 360zM556 344 558 344 558 345 556 345zM575 353 578 352 578 355 575 355zM534 321 536 321 537 322 535 323zM485 389 486 390 486 390 485 390zM550 347 552 348 552 350 550 349zM514 354 516 354 516 356 514 355zM498 371 499 371 499 373 497 372zM541 312 543 312 543 313 541 313zM585 315 587 314 588 316 586 317zM556 345 558 345 557 347 556 346zM553 309 555 309 555 311 552 311zM526 351 528 351 528 353 525 353zM514 370 516 370 515 372 514 371z"/>
<path fill="#56604a" opacity="0.5" d="M774 346 776 346 776 347 774 347zM725 434 727 434 728 435 725 436zM475 398 477 399 477 400 475 399zM778 342 780 343 779 344 778 343zM665 403 668 402 668 404 666 404zM537 392 540 393 539 395 536 394zM673 346 676 345 676 347 673 348zM683 423 685 423 684 425 683 424zM779 365 781 366 780 368 778 367zM738 395 740 394 740 396 739 396zM720 372 722 372 722 374 720 373zM613 414 616 415 615 418 612 416zM694 433 696 434 695 435 693 434zM756 379 758 378 759 380 757 381zM787 402 789 402 789 403 788 404zM739 365 741 365 741 366 739 366zM442 442 443 442 443 443 442 443zM760 386 763 386 763 389 760 388zM469 417 470 418 469 419 468 418zM539 423 541 424 541 425 539 424zM688 439 690 439 690 440 688 440zM520 394 522 395 521 396 520 396zM792 373 794 372 795 373 793 374zM548 449 549 448 549 449 548 450zM765 447 767 446 768 448 766 449zM467 404 470 404 470 406 467 406zM582 428 584 427 584 429 582 430zM750 449 752 450 752 451 750 451zM711 408 713 408 713 409 712 409zM506 432 508 432 509 433 507 434zM675 345 677 345 677 347 675 347zM579 450 581 451 581 452 579 452zM541 415 543 414 544 415 542 416zM559 395 560 395 560 396 559 396zM769 340 770 340 770 341 769 341zM543 435 545 435 544 437 543 436zM620 448 622 448 622 450 620 450zM718 359 720 360 719 362 717 361zM680 351 682 352 681 354 679 353zM726 337 729 338 728 341 725 339zM593 409 595 410 594 411 593 410zM499 447 500 447 500 448 499 448zM680 436 683 436 683 438 681 438zM671 457 673 457 673 458 671 458zM716 442 718 442 718 444 716 444zM615 457 618 457 618 459 615 459zM712 344 714 344 713 346 711 346zM683 413 686 412 687 414 684 415zM604 423 606 423 606 425 603 425zM508 447 509 448 509 450 507 449zM662 438 664 438 664 439 662 439zM502 438 504 438 504 439 502 440zM741 449 742 448 742 450 741 450zM750 402 753 402 753 404 751 404zM755 389 757 389 757 391 755 391zM593 456 594 457 594 458 592 457zM773 379 775 379 775 380 773 380zM741 399 743 400 743 402 741 401zM794 412 795 411 796 412 794 413zM508 441 510 440 510 442 509 442zM449 412 451 414 450 416 448 414zM773 336 776 335 776 338 773 338zM689 344 692 345 691 346 689 345zM546 444 549 444 548 446 545 446zM717 386 718 386 718 387 717 387zM501 430 502 430 502 432 500 431zM621 442 623 442 623 444 621 443zM785 379 787 380 787 382 784 381zM771 380 774 380 774 382 771 382zM760 458 761 459 761 460 760 459zM538 430 540 430 540 431 538 431zM450 453 452 453 452 454 450 454zM575 443 578 442 579 444 576 445zM640 436 643 437 643 439 640 439zM795 392 796 393 796 394 794 393zM787 365 789 365 789 367 787 367zM774 384 776 384 776 385 775 385zM773 391 775 391 775 392 773 393zM701 370 703 370 703 371 701 371zM799 356 801 355 802 357 800 358zM439 431 440 431 441 432 439 433zM704 416 707 417 706 419 703 418zM449 441 452 441 452 443 449 443zM476 419 478 419 478 420 476 421zM505 409 508 409 507 411 505 411zM758 430 761 429 761 432 759 432zM688 454 691 453 691 455 689 456zM538 439 541 437 542 439 539 441zM738 407 741 407 741 409 738 410zM608 451 611 452 610 455 607 454zM796 371 799 371 800 373 797 373zM686 412 688 412 687 414 685 413zM573 441 576 440 576 442 573 443zM741 418 743 418 742 420 740 419zM726 373 727 372 728 373 726 374zM780 385 781 386 781 387 779 386zM496 415 498 414 498 415 497 416zM774 422 775 421 775 422 774 423zM726 445 727 445 728 446 726 446zM529 404 531 405 530 406 528 405zM704 376 706 376 706 377 705 377zM731 449 734 450 733 452 730 451zM725 398 727 398 726 399 725 399zM762 446 764 446 764 447 762 447zM719 366 721 366 721 368 719 367zM742 457 744 457 744 458 742 458zM543 390 545 390 544 392 543 391zM701 428 703 429 703 431 700 430zM688 420 691 421 690 423 688 422zM514 430 517 430 517 432 515 432zM545 424 547 423 547 424 546 425zM678 385 681 385 680 387 678 386zM533 423 535 424 535 425 532 425zM740 381 742 382 742 384 739 383zM551 388 553 388 552 389 551 389zM788 411 790 411 790 413 788 413zM479 406 480 406 480 407 478 407zM718 449 720 450 720 451 718 450zM661 367 664 368 663 370 661 370zM522 402 524 402 524 404 522 404zM705 437 707 438 707 440 704 439zM453 413 455 414 455 416 452 415zM683 407 684 407 684 408 683 408zM762 345 765 344 766 346 763 347zM527 409 529 409 529 411 527 411zM682 369 684 369 684 370 682 371zM704 392 706 391 706 393 704 393zM729 382 731 382 731 384 729 383zM528 410 529 411 529 413 527 412zM587 422 589 422 588 423 587 423zM828 358 829 358 829 359 828 359zM712 388 714 389 713 391 711 390zM738 429 740 429 740 431 738 430zM714 426 716 426 716 427 714 427zM733 430 736 431 735 433 732 432zM718 440 720 441 720 443 718 442zM787 403 789 403 789 404 787 404zM687 435 690 434 690 436 688 437zM751 339 754 338 754 340 752 341zM710 407 712 405 713 407 711 408zM669 355 672 356 672 358 669 358zM443 416 445 416 445 418 443 417zM560 448 562 448 562 450 560 450zM668 394 670 395 669 397 667 396zM761 376 764 377 763 379 760 378zM734 451 735 450 736 452 734 452zM532 414 533 414 534 415 532 416zM662 342 664 341 664 343 662 343zM588 441 590 441 590 443 588 443zM661 431 663 431 663 433 660 433zM735 359 737 360 736 361 735 361zM486 418 488 419 488 420 486 420zM532 435 533 436 533 437 532 436zM549 409 551 410 550 412 548 411zM795 437 796 436 796 437 795 438zM782 426 784 426 784 427 783 428zM739 361 741 360 741 361 740 362zM621 433 623 432 624 434 622 435zM669 443 671 444 670 445 669 444zM522 404 525 403 525 405 523 406zM656 406 658 405 658 407 657 407zM741 376 743 377 742 378 740 378zM711 432 713 433 712 435 710 433zM550 411 551 411 551 412 549 412zM750 427 752 427 751 428 750 428zM782 455 784 455 785 456 783 456zM445 425 448 426 447 429 445 428zM743 363 746 365 745 366 742 365zM580 432 582 432 582 433 580 434zM586 448 587 448 587 450 585 450zM538 453 539 452 540 454 538 454zM808 359 810 359 810 360 808 360zM785 424 787 424 787 426 785 426zM684 413 686 414 685 415 683 414zM514 454 515 454 515 455 514 455zM696 404 698 405 698 406 696 406zM545 416 547 415 547 416 545 417zM765 438 767 438 768 440 765 440zM512 443 513 443 513 444 511 444zM745 416 747 417 746 419 745 418zM729 387 731 386 732 387 730 388zM691 360 694 359 695 361 692 362zM517 445 520 444 521 446 518 447zM575 409 578 410 578 412 575 411zM605 425 607 425 607 426 605 426zM738 365 740 367 739 369 736 367zM483 431 486 432 485 433 483 433zM760 372 762 371 763 373 760 374zM634 459 637 459 637 461 634 462zM570 407 571 408 571 409 569 408zM486 414 487 414 487 415 486 415zM537 431 539 432 538 433 537 432zM681 409 684 409 684 411 681 411zM497 427 500 428 499 430 496 429zM804 354 806 354 806 355 805 355zM715 372 717 372 716 373 715 373zM671 371 674 370 674 372 672 373zM771 459 774 459 774 461 771 461zM478 398 481 397 481 399 479 399zM449 438 450 438 450 439 449 439zM457 450 458 451 458 452 456 451zM725 391 727 392 726 393 725 392zM711 368 712 369 712 370 710 370zM688 376 690 377 690 378 688 378zM767 457 768 457 769 458 767 458zM653 448 655 448 656 449 654 450zM513 391 515 391 514 392 513 392zM687 354 690 353 690 356 687 356zM697 404 700 403 701 406 698 406zM778 436 780 436 780 439 777 438zM757 374 759 375 758 376 756 375zM751 350 753 349 754 351 751 352zM797 425 800 424 801 426 798 427zM764 357 766 357 766 359 765 359zM639 449 640 448 641 449 640 450zM682 421 684 421 684 423 682 423zM776 409 778 408 778 410 777 411zM696 395 698 396 697 398 695 397zM698 379 699 378 700 380 698 380zM763 392 765 392 765 394 763 393zM683 419 685 420 685 422 682 421zM439 428 442 430 441 432 438 430zM759 422 762 420 763 422 760 424zM715 380 718 379 719 381 716 382zM781 453 783 453 783 455 781 454zM741 437 744 436 745 438 742 439zM643 430 646 430 646 432 644 432zM719 415 721 415 721 417 719 417zM707 455 710 455 709 457 706 456zM711 352 712 352 712 353 711 353zM670 427 672 428 672 429 670 429zM731 427 733 428 732 430 730 429zM738 343 739 344 739 345 737 344zM670 338 672 337 672 339 670 340zM458 426 460 427 459 428 458 427zM468 420 470 421 469 422 468 421zM674 348 676 348 676 349 674 350zM563 458 565 458 565 459 564 459zM734 217 736 218 735 220 733 219zM751 226 754 225 754 227 752 228zM726 254 728 253 728 254 727 255zM703 197 705 197 705 199 703 199zM741 287 742 288 742 289 741 289zM748 312 750 312 751 313 749 314zM717 315 720 314 720 317 717 317zM724 318 726 318 726 320 724 320zM681 291 683 290 684 292 682 293zM722 277 724 278 724 280 721 279zM734 299 737 299 736 301 734 301zM697 256 699 256 699 257 697 257zM719 264 720 264 720 265 719 265zM717 277 720 278 719 280 716 279zM756 272 759 272 759 274 756 274zM766 293 769 293 769 295 766 295zM670 206 672 205 673 207 671 208zM704 222 705 222 706 223 704 223zM669 203 672 203 671 205 669 204zM740 299 742 299 741 300 740 300zM724 253 726 253 726 254 724 254zM662 230 664 232 663 234 661 232zM769 270 771 271 770 272 768 272zM665 296 667 296 667 297 666 297zM769 287 772 288 771 290 769 289zM677 286 679 285 680 287 678 288zM697 217 700 218 699 220 697 219zM769 309 772 309 772 312 769 311zM695 296 697 295 697 297 696 298zM756 274 759 274 759 276 756 276zM689 223 691 223 692 225 689 225zM706 305 708 306 708 307 705 307zM691 260 693 260 692 262 690 261zM733 217 735 216 736 217 734 219zM760 281 763 281 763 283 760 283zM700 232 702 232 702 234 700 234zM719 208 721 207 721 209 719 209zM709 290 711 290 711 292 709 291zM683 282 685 283 685 285 682 284zM733 300 735 300 735 302 732 302zM718 245 720 245 720 247 718 246zM749 301 750 302 750 303 748 302zM738 273 740 272 740 273 739 274zM737 234 739 235 738 237 736 236zM684 236 686 236 687 237 685 238zM737 198 740 198 740 200 737 201zM663 226 665 225 665 227 663 227zM710 213 712 212 712 214 710 215zM700 270 702 269 703 270 701 271zM737 234 738 234 739 235 737 235zM697 253 699 253 699 255 697 255zM690 278 693 278 693 281 690 281zM704 270 707 269 707 271 705 272zM706 215 708 215 708 217 706 217zM754 313 756 313 756 314 754 314zM712 267 713 266 714 268 712 268zM705 301 707 301 707 303 705 303zM670 212 672 212 672 213 670 213zM661 296 663 295 664 297 662 298zM673 300 675 301 675 303 673 302zM742 220 743 219 744 221 742 221zM710 319 713 319 714 321 711 321zM756 324 759 326 758 328 755 326zM699 314 701 315 700 317 698 316zM755 275 757 275 757 277 755 276zM685 330 689 328 690 331 686 332zM652 289 654 289 654 290 652 290zM646 325 649 324 649 327 646 327zM658 257 661 257 660 259 658 259zM658 321 662 321 662 324 658 324zM647 315 650 316 649 318 646 317zM637 276 641 274 642 277 638 278zM652 270 655 268 656 271 653 273zM702 337 705 337 706 339 702 340zM651 310 654 311 653 313 650 312zM602 286 605 287 605 289 602 288zM619 330 623 329 624 332 620 333zM689 330 693 329 694 332 690 333zM723 335 725 334 725 336 723 337zM708 339 710 340 710 342 707 341zM677 318 681 319 680 321 676 320zM622 279 623 280 623 281 622 280zM642 292 646 292 646 295 642 295zM645 296 648 296 647 299 645 298zM646 286 650 287 649 290 646 289zM617 283 620 283 620 285 617 285zM631 296 634 294 635 296 632 298zM648 294 650 293 651 295 649 296zM687 321 690 321 690 324 686 323zM662 303 665 303 664 306 661 305zM709 326 711 326 710 328 709 327zM657 263 659 263 660 265 657 265zM721 331 723 332 722 334 720 333zM697 337 700 336 701 338 698 339zM793 338 797 338 797 341 793 341zM818 338 820 338 820 340 817 340zM825 349 826 349 827 350 825 351zM782 332 785 332 785 335 782 335zM786 321 789 322 787 324 785 323zM769 333 773 332 773 335 770 336zM794 331 796 329 797 331 795 332zM804 327 807 326 808 329 804 330zM826 339 828 338 828 340 826 340zM816 329 819 327 820 330 817 331zM824 329 827 329 827 331 824 331zM812 331 814 332 813 333 812 332zM796 342 799 342 799 344 796 344zM701 181 705 180 705 183 701 184zM720 173 723 175 722 177 719 175zM726 186 729 187 728 189 726 188zM723 189 726 188 726 190 723 191zM717 182 720 181 721 183 718 184zM430 214 431 215 431 216 430 215zM433 211 435 211 435 213 433 212zM429 219 431 220 431 221 429 221zM470 244 471 244 472 245 470 246zM470 256 472 256 472 258 470 257zM496 268 497 269 497 270 495 269zM429 213 431 213 431 215 429 214zM471 256 474 258 473 259 470 258zM470 262 472 263 471 264 469 263zM498 248 500 248 500 250 498 249zM494 232 497 231 497 233 495 234zM440 226 441 225 442 227 440 227zM519 264 521 264 521 265 519 265zM439 231 440 231 441 232 439 233zM470 252 471 252 471 253 470 253zM441 215 444 216 443 218 440 217zM490 268 493 269 492 271 490 270zM492 269 494 268 494 270 492 270zM475 226 477 227 477 229 474 228zM490 220 493 220 493 222 490 222zM433 239 435 239 436 240 434 241zM470 227 472 228 472 229 470 229zM433 258 434 259 434 260 432 259zM476 224 478 225 478 226 476 226zM484 230 486 230 486 232 484 232zM470 228 473 228 473 230 471 231zM472 260 475 259 475 261 473 262zM489 223 491 224 490 226 488 225zM482 274 483 274 483 276 481 275zM489 254 491 253 492 255 490 256zM453 244 455 244 455 246 452 246zM509 263 511 263 511 264 509 264zM489 237 491 236 492 238 490 239zM418 213 420 214 419 216 418 215zM476 265 478 264 479 266 477 266zM438 230 440 230 440 232 438 232zM498 234 500 235 500 236 498 236zM479 222 481 222 481 223 479 223zM445 236 447 237 446 239 445 238zM443 252 446 252 446 254 444 254zM494 258 496 258 496 259 494 260zM440 216 443 215 444 218 441 218zM457 214 459 214 459 215 458 216zM501 242 503 241 504 242 502 244zM467 269 469 269 469 270 467 271zM441 247 443 247 443 249 441 248zM454 215 456 214 457 216 455 217zM470 230 472 229 472 230 471 231zM886 421 888 421 888 423 886 423zM846 432 848 433 848 435 845 434zM904 433 906 433 906 435 904 434zM915 429 917 429 917 431 914 431zM832 438 834 437 834 439 833 439zM902 437 905 436 905 438 903 439zM834 446 835 446 835 447 834 447zM906 438 909 438 909 441 906 440zM825 426 827 426 827 427 825 428zM833 427 835 428 834 430 832 429zM839 451 840 450 841 452 839 452zM868 414 870 413 870 415 869 416zM875 425 878 425 879 428 875 428zM859 409 861 409 862 410 860 410zM878 416 880 415 881 417 879 418zM826 451 828 451 828 453 826 453zM886 414 888 413 889 414 887 416zM917 436 919 436 919 438 917 438zM836 402 838 403 837 404 836 403zM916 447 917 447 917 449 916 449zM840 440 843 440 843 442 840 442zM832 429 834 430 834 431 832 431zM882 397 885 397 884 398 882 398zM896 432 898 432 898 433 896 434zM835 412 837 413 837 415 834 414zM1036 182 1037 182 1037 183 1036 183zM1012 184 1014 183 1014 184 1013 185zM1033 211 1035 212 1034 214 1032 213zM1074 221 1076 222 1075 224 1073 223zM1010 216 1012 215 1013 217 1011 218zM994 198 996 198 996 200 994 199zM1045 196 1047 196 1047 198 1045 198zM996 211 998 210 999 211 997 212zM964 211 966 210 967 212 965 213zM1022 171 1024 172 1023 173 1021 173zM1010 194 1012 194 1012 195 1010 196zM1011 176 1013 175 1014 177 1012 178zM975 202 976 203 976 204 975 203zM1063 214 1065 214 1065 215 1064 215zM1009 196 1011 196 1011 197 1009 197zM1036 175 1037 175 1037 176 1036 176zM1058 234 1060 234 1060 236 1058 236zM995 193 997 193 996 195 994 194zM1069 214 1072 214 1072 216 1070 216zM1044 199 1046 199 1046 200 1044 200zM1017 184 1019 184 1019 185 1017 185zM1009 207 1010 207 1010 208 1009 208zM995 176 996 176 996 178 994 177zM1005 181 1007 181 1007 182 1005 183zM1014 215 1016 215 1015 217 1014 216zM1054 206 1056 207 1056 208 1054 208zM987 213 989 212 990 214 987 214zM1034 192 1036 192 1036 193 1034 193zM1057 191 1059 191 1059 192 1057 192zM1103 239 1105 239 1105 241 1103 241zM1025 190 1027 191 1026 192 1024 191zM1004 203 1006 203 1005 204 1004 204zM1078 245 1080 245 1081 246 1079 247zM1030 172 1032 172 1032 174 1030 174zM1031 208 1033 208 1032 209 1031 209zM1061 224 1062 225 1062 226 1061 225zM1071 217 1073 217 1073 218 1071 218zM975 212 978 212 978 214 975 214zM1036 206 1038 205 1038 207 1036 207zM974 221 976 222 975 224 974 223zM984 188 986 189 986 191 984 190zM994 188 996 189 996 190 994 189zM1009 179 1012 180 1011 181 1009 180zM1028 186 1030 187 1030 188 1028 188zM986 201 988 200 988 201 986 202zM1078 200 1080 201 1079 203 1077 202zM1075 217 1077 217 1077 218 1075 218zM971 216 973 216 973 218 971 217zM976 199 977 200 977 201 975 200zM1019 174 1020 174 1020 175 1019 175zM1048 187 1051 188 1050 190 1048 189zM1065 245 1067 245 1067 246 1066 246zM971 216 973 214 974 216 972 217zM1031 204 1033 205 1033 207 1031 206zM1046 200 1049 199 1049 201 1047 202zM1033 173 1034 173 1034 174 1033 174zM1049 211 1051 211 1050 213 1049 212zM1030 176 1031 176 1032 177 1030 177zM1017 191 1018 191 1018 192 1017 192zM1060 224 1062 225 1062 226 1060 225zM1014 181 1015 182 1015 183 1013 182zM984 224 985 225 985 226 983 225zM1101 222 1103 221 1104 223 1102 223zM1049 234 1052 234 1052 235 1050 236zM1007 170 1009 170 1009 171 1007 172zM1094 223 1097 224 1096 225 1094 225zM994 176 996 177 996 178 994 177zM1053 199 1055 200 1055 201 1053 201zM981 215 983 214 984 215 981 216zM1099 228 1101 227 1101 229 1100 230zM1029 212 1031 212 1031 214 1029 213zM1002 191 1004 192 1003 193 1002 193zM1067 244 1069 243 1070 244 1068 245zM1047 227 1049 226 1050 227 1048 228zM978 224 980 223 981 224 979 225zM1005 212 1006 212 1006 213 1004 213zM967 209 969 209 969 210 968 210zM1034 203 1036 203 1036 205 1033 204zM1032 206 1035 205 1035 206 1033 207zM1048 193 1050 193 1050 195 1048 195zM1080 244 1082 244 1081 246 1079 245zM1066 199 1068 199 1068 201 1066 201zM1014 189 1016 189 1016 191 1014 190zM1060 219 1062 218 1062 220 1061 220zM1025 197 1026 197 1026 198 1024 198zM1074 206 1077 206 1077 208 1075 208zM1062 198 1064 198 1064 199 1062 199zM1010 193 1012 193 1012 194 1010 195zM1094 240 1096 241 1095 243 1093 242zM1090 223 1091 223 1091 225 1089 224zM995 175 998 174 998 176 996 177zM1065 238 1067 238 1067 239 1066 239zM985 218 986 218 987 219 985 219zM992 203 995 203 995 204 993 205zM1053 185 1055 186 1054 187 1052 187zM1053 214 1055 214 1054 215 1053 215zM1030 211 1032 211 1032 212 1031 213zM1079 217 1081 216 1081 218 1080 218zM1072 205 1074 206 1073 207 1071 207zM1473 302 1475 303 1474 305 1472 304zM1484 359 1487 359 1486 361 1484 360zM1504 327 1506 328 1505 330 1503 329zM1540 302 1542 303 1541 304 1539 304zM1490 311 1492 312 1492 314 1490 313zM1522 357 1523 357 1523 358 1522 358zM1450 349 1451 348 1451 349 1450 350zM1494 323 1496 324 1496 325 1494 324zM1488 295 1490 294 1491 296 1489 297zM1445 330 1446 329 1447 330 1445 331zM1524 357 1526 357 1527 359 1524 359zM1537 300 1539 300 1539 301 1537 302zM1490 355 1491 355 1491 357 1489 356zM1491 355 1493 355 1492 356 1491 356zM1473 323 1475 324 1475 325 1473 325zM1534 308 1536 308 1536 310 1533 309zM1482 342 1483 342 1484 343 1482 344zM1527 320 1529 319 1530 321 1527 322zM1469 312 1471 311 1472 313 1469 314zM1477 366 1479 365 1479 367 1477 367zM1525 308 1527 309 1526 311 1524 310zM1508 297 1510 296 1511 298 1509 299zM1454 320 1456 320 1456 321 1455 321zM1533 315 1536 314 1537 316 1534 317zM1484 333 1486 333 1486 335 1484 335zM1541 329 1542 330 1542 331 1540 330zM1539 320 1542 321 1542 322 1539 322zM1447 316 1449 315 1449 317 1447 317zM1498 306 1500 306 1501 307 1499 308zM1499 342 1501 342 1501 344 1499 343zM1460 310 1463 311 1463 312 1460 312zM1538 312 1541 311 1541 313 1539 314zM1453 330 1455 329 1455 331 1453 332zM1508 312 1510 312 1510 313 1509 314zM1463 355 1466 356 1465 357 1462 356zM1529 332 1531 332 1531 333 1529 333zM1447 307 1450 308 1449 310 1447 309zM1460 327 1462 326 1462 328 1460 329zM1514 334 1517 335 1516 336 1514 336zM1451 311 1452 311 1452 312 1451 312zM1457 294 1459 294 1459 295 1457 295zM1543 336 1545 336 1545 338 1543 338zM1454 303 1456 303 1456 304 1454 304zM1544 366 1545 365 1546 366 1544 367zM1507 354 1508 355 1507 356 1506 355zM1529 347 1531 347 1531 349 1528 349zM1444 297 1446 297 1447 298 1445 299zM1545 331 1546 332 1546 333 1544 332zM1505 354 1507 353 1508 355 1506 356zM1534 322 1537 322 1536 324 1534 323zM1231 291 1233 291 1232 292 1231 292zM1227 318 1229 319 1228 321 1226 320zM1169 304 1170 304 1171 305 1169 305zM1240 301 1242 302 1241 304 1239 303zM1218 312 1220 312 1220 314 1218 313zM1207 294 1209 293 1210 295 1208 296zM1225 311 1226 312 1226 313 1224 313zM1189 293 1191 294 1190 296 1188 295zM1179 295 1180 295 1180 296 1179 296zM1210 295 1212 296 1212 297 1210 296zM1169 298 1170 298 1170 299 1169 299zM1238 317 1240 318 1240 320 1237 319zM1212 288 1213 288 1213 289 1211 289zM1189 304 1191 304 1191 306 1189 306zM1170 305 1172 305 1172 306 1170 306zM1166 303 1167 304 1167 305 1165 304zM1207 307 1209 307 1209 308 1207 308zM1246 298 1247 298 1247 300 1245 300zM1245 287 1248 288 1247 290 1245 289zM1170 291 1172 292 1172 293 1170 293zM1198 296 1199 296 1199 297 1197 297zM1204 310 1206 310 1206 311 1204 312zM1170 293 1171 293 1171 294 1170 294zM1170 305 1172 305 1172 306 1170 306zM1214 311 1215 311 1216 312 1214 312zM1206 309 1208 308 1208 310 1206 310zM1246 314 1247 314 1247 315 1246 315zM1168 298 1171 299 1171 300 1168 300zM1242 297 1243 296 1244 298 1242 298zM1212 300 1214 299 1215 301 1213 301zM1236 312 1238 311 1238 313 1236 313zM1234 319 1236 319 1236 320 1234 320zM1212 293 1214 292 1214 294 1212 294zM1248 309 1250 309 1250 311 1248 311zM422 420 425 419 425 421 423 422zM406 419 408 419 409 420 407 421zM341 409 342 408 343 410 341 410zM364 398 366 398 366 400 364 400zM384 399 386 400 385 402 383 401zM354 453 356 452 357 454 355 455zM374 403 376 404 375 405 374 404zM409 440 411 439 412 441 409 442zM389 459 390 459 390 461 388 460zM353 419 355 420 355 422 352 421zM398 429 399 430 399 431 398 430zM363 412 364 411 365 413 363 413zM342 404 343 403 344 405 342 405zM382 448 384 448 384 449 383 449zM361 446 364 447 363 449 360 448zM383 452 385 451 386 453 384 454zM441 441 443 442 442 443 440 442zM423 414 425 413 425 415 423 415zM396 450 398 451 397 452 396 451zM402 424 404 424 404 426 401 425zM359 432 361 433 361 434 358 434zM553 351 555 350 555 352 553 353zM561 340 562 340 562 341 561 341zM541 337 543 336 544 338 542 338zM537 328 539 328 539 329 537 329zM521 355 522 354 523 355 521 356zM522 366 523 366 522 367 521 367zM588 344 591 343 591 345 589 346zM537 351 539 351 538 353 536 352zM568 323 571 323 570 325 568 325zM512 385 514 386 513 387 511 386zM532 373 534 373 534 374 532 374zM565 343 567 344 566 345 565 345zM588 343 590 343 590 345 588 344zM486 394 488 393 488 394 486 395zM495 372 498 373 497 375 495 374zM553 349 555 349 555 350 553 350zM589 341 591 341 591 343 589 343zM580 331 582 332 581 334 579 332zM490 371 492 372 492 374 490 373zM543 311 546 311 546 313 543 313zM571 326 574 327 573 328 571 328zM510 364 513 363 514 364 511 366zM565 345 568 346 567 348 564 347z"/>
<path fill="#9d978d" opacity="0.5" d="M594 431 595 432 595 433 593 432zM699 385 702 385 701 388 698 387zM487 440 490 439 491 441 488 442zM610 438 612 438 612 440 610 439zM477 443 479 443 479 445 476 445zM563 454 566 455 565 457 563 456zM575 430 577 430 577 432 575 432zM654 373 656 373 656 374 654 374zM658 412 660 412 660 413 658 414zM783 408 785 408 785 410 783 410zM727 375 729 376 728 377 727 376zM658 395 660 395 660 396 658 396zM770 396 773 396 772 398 770 398zM776 430 779 431 778 433 775 432zM684 350 686 351 685 352 684 351zM715 345 717 346 717 348 714 347zM629 459 631 459 631 461 629 460zM566 427 569 426 570 428 567 429zM720 443 721 444 721 445 719 445zM492 392 495 392 494 394 492 393zM752 414 753 414 753 415 752 415zM768 348 771 349 770 351 768 350zM655 452 657 451 657 453 656 453zM694 422 696 422 696 424 694 424zM667 376 670 376 670 377 668 378zM689 373 691 374 690 376 688 375zM742 432 744 433 743 434 742 434zM736 375 738 373 739 375 737 377zM679 432 680 433 680 434 679 433zM701 434 703 435 702 437 700 436zM759 433 762 433 762 435 759 435zM566 437 568 436 568 438 567 438zM752 416 754 416 754 418 752 418zM695 405 697 405 697 406 695 406zM553 436 555 436 555 438 553 438zM519 405 520 405 520 406 519 405zM697 374 699 375 698 376 697 375zM787 433 788 433 789 434 787 435zM716 381 719 380 720 382 717 383zM656 377 659 377 660 379 657 379zM667 380 669 379 670 381 668 382zM761 349 763 350 762 351 761 350zM717 376 718 376 718 377 717 377zM569 449 570 449 571 450 569 450zM665 353 667 352 667 353 665 354zM501 422 503 422 503 424 500 424zM723 351 725 352 724 354 723 353zM501 455 503 456 503 457 501 457zM692 434 693 434 694 435 692 436zM772 369 774 369 774 371 772 371zM590 425 592 426 591 428 589 427zM502 427 504 426 504 428 502 428zM767 364 769 363 770 365 767 366zM689 414 692 413 692 415 690 416zM677 346 679 345 680 346 677 347zM573 428 575 428 575 429 573 429zM456 407 458 408 457 409 455 408zM463 407 465 407 466 409 463 409zM755 451 758 452 757 454 754 453zM686 385 687 386 687 387 685 386zM773 363 775 363 775 365 772 365zM630 425 633 426 632 427 630 427zM571 447 572 446 573 448 571 448zM533 413 536 413 536 415 534 415zM677 386 679 385 679 387 677 387zM649 453 651 453 651 454 649 454zM580 402 582 403 581 404 579 403zM534 448 535 448 535 449 533 449zM732 377 733 377 733 378 732 378zM797 457 800 457 801 459 798 459zM623 434 625 434 625 435 623 435zM687 367 689 367 689 368 687 369zM558 388 561 387 562 389 559 390zM788 414 791 415 790 417 787 416zM509 405 512 404 512 406 510 407zM794 433 796 432 796 433 794 434zM513 394 515 393 515 395 514 395zM713 434 716 435 716 437 713 436zM547 442 549 443 549 445 547 444zM718 450 720 449 720 451 719 451zM545 395 547 395 546 397 544 397zM674 359 676 357 677 359 675 361zM664 371 665 370 666 372 664 372zM702 449 705 449 704 451 702 451zM456 431 459 431 458 433 456 433zM766 414 768 415 767 416 765 415zM612 432 614 432 614 434 612 433zM693 372 695 371 695 373 693 373zM694 435 696 434 697 435 695 436zM559 426 560 427 559 428 558 427zM739 351 741 351 741 352 739 352zM782 408 784 408 784 409 782 410zM766 367 768 366 769 368 767 369zM746 419 748 418 748 420 746 420zM676 356 679 356 678 358 675 358zM727 442 729 443 728 445 726 443zM680 438 682 438 682 440 680 440zM605 420 607 419 607 421 606 421zM436 438 438 437 439 438 437 439zM585 402 587 402 586 403 585 403zM728 431 730 431 730 432 728 432zM540 449 542 448 543 449 540 450zM591 442 593 441 594 443 592 444zM785 343 788 342 788 345 785 345zM562 457 565 457 565 460 562 460zM502 392 505 392 505 395 502 394zM712 402 714 402 714 403 712 403zM761 400 763 400 763 402 761 402zM447 418 450 420 449 421 446 420zM623 431 626 430 626 432 624 433zM666 348 669 349 669 351 666 350zM663 420 664 420 665 421 663 421zM466 440 469 440 469 442 466 442zM489 412 491 412 491 413 489 414zM723 415 725 416 724 417 723 416zM629 456 630 456 630 458 628 457zM764 438 766 439 765 440 763 440zM442 414 444 413 445 414 443 416zM747 439 749 439 749 440 748 441zM656 382 657 382 657 383 655 383zM573 422 575 422 576 423 573 424zM639 429 641 429 640 430 639 430zM681 439 683 439 684 440 682 441zM603 417 606 417 605 419 603 419zM530 428 532 429 531 431 529 430zM572 425 574 426 574 428 571 427zM683 378 685 377 686 379 683 380zM796 381 798 381 799 383 796 383zM611 442 612 443 612 444 611 443zM781 431 783 432 783 433 781 433zM719 424 721 424 721 426 719 425zM696 373 699 373 699 376 696 375zM693 432 695 432 695 433 693 433zM733 441 735 440 736 442 733 443zM505 423 508 422 508 424 505 425zM756 342 759 343 758 345 756 344zM723 390 724 390 724 391 723 391zM531 452 533 452 533 453 531 454zM678 445 679 445 679 447 677 446zM472 434 474 434 475 435 473 436zM825 356 827 356 826 358 824 357zM621 439 622 439 623 440 621 440zM789 354 790 355 790 356 788 355zM748 384 751 384 750 386 748 386zM471 422 473 422 472 424 470 423zM750 364 752 364 752 365 751 365zM689 441 691 441 691 442 689 442zM796 435 799 433 800 435 797 436zM742 453 743 452 744 453 742 454zM440 412 442 412 442 414 440 414zM701 459 703 458 703 460 701 460zM739 366 742 366 742 368 740 368zM666 422 668 422 668 423 666 423zM726 435 728 434 728 436 726 436zM448 417 450 416 450 418 449 419zM669 432 671 433 670 434 669 434zM766 381 767 380 768 381 767 382zM740 452 742 452 742 454 740 454zM506 431 509 431 509 433 506 434zM509 389 510 390 510 391 508 391zM464 440 467 441 466 443 463 442zM523 457 525 457 525 458 523 458zM475 427 476 426 477 427 475 428zM806 370 809 369 809 372 806 372zM473 423 475 423 476 425 473 426zM460 406 462 407 461 408 460 408zM732 338 735 337 736 339 733 340zM730 369 733 369 732 372 729 371zM697 344 699 344 699 345 697 345zM748 393 751 392 751 394 748 395zM733 449 736 449 736 451 733 451zM667 355 670 355 670 357 667 357zM761 449 762 448 763 449 761 450zM761 337 763 335 764 337 762 338zM689 392 691 392 691 394 688 394zM741 362 744 363 743 365 740 363zM685 440 687 441 686 442 685 441zM738 375 740 375 740 376 738 377zM714 422 717 422 717 424 714 424zM679 347 681 347 681 349 679 349zM505 421 506 421 506 422 505 422zM755 401 756 402 756 403 754 402zM669 377 671 377 670 378 669 378zM445 439 448 441 447 443 444 442zM586 422 588 424 587 425 585 424zM695 457 697 457 697 459 695 459zM549 420 552 421 551 423 548 422zM680 401 683 402 682 404 679 403zM768 259 769 259 769 260 768 260zM722 205 724 205 724 206 722 206zM757 227 760 226 760 228 758 229zM694 217 696 216 696 217 695 218zM702 262 705 261 706 263 703 265zM668 301 670 300 670 302 668 302zM707 314 709 314 709 316 707 316zM691 215 692 215 693 216 691 216zM747 240 750 239 750 241 748 242zM665 216 667 216 667 218 665 218zM679 249 682 250 681 252 678 251zM741 328 744 327 744 329 742 330zM728 235 730 235 730 236 728 237zM705 302 706 301 707 303 705 303zM731 206 733 207 733 209 730 208zM711 281 712 281 711 282 710 282zM761 292 764 293 763 295 761 294zM718 302 720 302 720 303 718 303zM743 274 746 276 745 278 742 276zM746 245 749 244 749 246 747 247zM752 289 754 289 753 291 751 290zM705 309 706 309 706 310 705 310zM704 301 707 302 706 303 704 303zM754 237 755 237 756 238 754 239zM729 204 731 205 731 207 729 206zM744 236 746 236 746 238 744 237zM733 204 735 204 735 206 732 206zM715 224 718 225 718 227 715 227zM694 311 697 312 696 314 694 313zM721 235 723 234 723 235 722 236zM671 291 673 290 674 291 672 292zM707 300 710 300 710 302 707 302zM743 263 745 263 744 264 743 264zM760 269 762 269 762 271 760 271zM740 213 742 214 741 215 739 214zM769 300 771 301 770 302 769 302zM667 298 668 298 669 299 667 299zM726 226 727 227 727 228 725 228zM754 213 757 214 757 216 754 216zM754 233 756 233 756 234 754 235zM742 271 744 271 744 273 742 272zM683 213 686 212 686 214 684 215zM687 276 690 277 689 279 687 278zM717 263 718 263 718 265 716 264zM716 218 717 217 718 218 716 219zM705 209 708 210 708 212 705 212zM717 204 720 204 720 206 717 206zM699 313 702 314 701 316 699 315zM747 308 748 309 748 310 746 309zM689 282 691 282 692 283 689 284zM715 314 717 314 717 316 715 316zM750 199 753 198 753 200 751 201zM698 236 700 237 699 239 697 238zM742 220 744 220 744 221 742 221zM758 238 760 239 759 241 757 240zM750 324 752 324 751 325 750 325zM701 320 703 320 703 322 701 322zM755 216 757 216 756 218 755 217zM680 247 682 248 682 250 680 249zM689 292 691 291 692 293 689 294zM683 214 686 214 686 216 683 216zM697 201 699 201 699 202 697 202zM731 199 733 200 733 201 731 201zM741 308 743 308 743 310 741 310zM682 247 684 247 684 248 682 249zM657 302 660 303 660 305 656 304zM627 308 631 307 632 310 628 312zM600 271 603 272 602 274 599 273zM653 330 655 330 655 332 653 331zM635 280 638 279 639 282 635 283zM621 320 625 321 623 324 620 322zM649 243 653 244 653 247 649 246zM629 259 632 259 632 261 629 262zM653 291 656 291 656 293 653 293zM633 297 636 296 636 299 633 299zM619 298 623 299 622 302 618 301zM652 324 654 323 654 324 652 325zM646 295 649 295 650 297 646 298zM649 262 652 262 651 264 649 264zM716 326 717 327 717 328 716 328zM672 319 675 319 674 322 672 321zM607 306 611 306 611 308 607 309zM619 252 620 253 620 255 618 254zM697 343 701 343 701 346 697 346zM663 337 665 336 666 338 664 339zM667 334 671 333 672 337 668 338zM642 269 645 269 645 272 642 272zM649 274 654 273 654 276 650 277zM641 306 643 306 643 307 641 308zM612 298 615 300 614 302 612 300zM612 285 613 286 613 288 611 287zM652 247 656 248 656 251 651 250zM757 331 759 330 759 332 758 332zM802 338 805 336 806 339 803 341zM791 337 794 338 793 341 791 340zM780 322 782 321 783 323 780 324zM802 327 805 326 805 329 802 329zM827 356 829 355 829 356 828 357zM796 325 800 325 799 328 795 328zM794 324 796 324 796 326 794 326zM725 169 729 170 728 173 724 172zM722 160 726 160 726 162 722 163zM688 191 692 191 692 194 688 194zM703 178 707 179 706 181 703 180zM704 184 705 185 705 186 704 185zM706 168 708 167 709 169 706 170zM689 178 692 178 693 180 690 181zM708 181 709 180 710 181 709 182zM714 177 717 178 716 180 714 179zM491 276 492 276 492 278 491 277zM484 236 486 235 487 237 484 238zM477 234 479 233 479 234 478 235zM418 211 420 211 420 212 419 212zM466 266 468 267 467 268 466 268zM454 225 455 226 455 227 454 226zM446 251 448 250 448 252 446 252zM488 258 490 259 489 261 487 260zM446 260 447 260 447 261 446 262zM436 255 438 256 437 257 436 257zM479 230 481 232 480 233 478 232zM512 264 514 264 513 265 512 265zM431 253 433 252 433 254 431 254zM479 245 481 244 481 246 479 246zM490 226 492 227 491 229 489 228zM487 262 489 263 489 264 487 264zM439 225 441 226 440 228 438 227zM484 256 485 257 485 258 484 257zM418 208 420 209 420 210 418 210zM455 257 457 256 458 257 456 259zM492 250 495 250 495 252 492 252zM501 276 503 276 503 277 502 277zM488 230 489 231 489 232 487 232zM428 218 430 219 429 221 427 220zM487 233 489 234 488 235 487 235zM486 242 488 242 488 244 486 244zM494 230 496 229 497 231 495 232zM449 213 452 213 452 215 449 215zM461 250 462 250 462 251 461 251zM484 272 485 272 485 273 484 273zM470 266 472 266 471 268 470 268zM497 276 499 276 500 277 498 278zM458 223 461 223 461 225 459 225zM498 274 500 274 499 276 498 275zM425 211 428 212 428 214 425 213zM466 266 468 267 468 268 466 268zM486 257 488 257 488 259 486 259zM426 232 428 232 428 234 426 234zM497 237 500 238 499 240 496 240zM475 265 477 264 478 266 475 266zM446 216 448 218 447 219 445 218zM428 226 431 227 430 229 427 228zM447 265 449 265 449 267 446 266zM505 247 506 247 506 248 505 248zM441 240 444 241 443 243 440 243zM444 216 446 215 447 217 444 218zM490 233 492 234 492 236 489 235zM475 222 477 222 476 224 474 223zM497 275 499 276 499 277 497 276zM488 250 490 249 491 251 489 252zM441 262 443 262 443 264 441 264zM431 252 433 252 433 253 431 253zM831 391 833 391 832 392 831 392zM810 410 812 411 812 412 810 412zM844 402 845 402 845 403 844 403zM828 409 829 408 829 410 828 410zM823 395 826 396 825 398 822 397zM872 443 873 443 874 444 872 444zM868 416 869 416 869 417 867 417zM910 450 912 450 912 452 911 452zM830 415 833 416 833 418 830 418zM837 426 839 425 840 427 837 428zM888 423 891 424 890 426 887 426zM871 445 872 446 871 447 870 446zM862 401 864 400 865 401 863 402zM863 389 864 388 864 389 863 390zM884 420 885 419 885 420 884 421zM907 457 910 458 909 459 907 458zM876 438 879 439 878 441 876 440zM872 414 875 415 874 417 871 416zM913 452 916 453 916 455 912 454zM865 419 867 418 868 420 866 420zM897 432 898 432 898 433 896 433zM846 389 849 388 849 390 847 391zM816 390 818 390 819 392 816 392zM842 451 845 452 845 454 842 453zM1014 177 1015 177 1016 178 1014 178zM1094 219 1096 218 1097 220 1095 220zM1084 217 1086 217 1086 219 1084 219zM985 201 987 202 986 203 984 202zM1042 227 1044 227 1045 228 1042 229zM1012 188 1014 188 1015 190 1012 190zM1024 203 1025 202 1026 203 1025 204zM981 223 982 222 983 224 981 225zM1058 231 1060 232 1060 233 1058 233zM1055 215 1058 215 1058 216 1056 217zM971 205 973 205 973 207 971 207zM989 214 990 214 990 215 989 216zM986 223 988 222 988 224 987 224zM1076 202 1077 203 1077 204 1075 203zM1005 203 1007 204 1007 206 1005 205zM996 198 998 200 997 201 995 200zM993 188 995 188 995 190 993 189zM1057 206 1059 206 1059 208 1058 208zM1088 210 1089 210 1088 211 1087 211zM1019 171 1021 171 1021 172 1019 173zM992 174 993 174 993 176 991 175zM1033 223 1034 223 1035 224 1033 224zM1067 245 1069 244 1069 246 1068 246zM1006 190 1008 190 1008 191 1006 191zM1075 234 1077 235 1077 236 1075 235zM1012 211 1014 211 1014 212 1013 213zM1047 200 1049 201 1048 203 1046 202zM1045 210 1047 209 1048 211 1046 212zM991 216 993 217 992 218 990 217zM1075 227 1077 227 1077 229 1075 229zM1018 188 1020 189 1019 191 1017 190zM1032 222 1034 223 1034 225 1032 224zM1064 234 1066 235 1065 236 1064 235zM995 197 997 197 997 198 995 199zM1067 212 1069 213 1069 215 1066 214zM1008 200 1009 201 1009 202 1007 201zM1083 207 1085 208 1084 210 1082 209zM1019 184 1020 184 1020 185 1019 185zM991 187 992 186 993 187 991 188zM1043 183 1045 182 1045 184 1043 184zM1098 224 1100 224 1099 225 1098 225zM1034 183 1036 183 1036 185 1034 184zM1042 227 1044 227 1044 228 1042 228zM1033 196 1035 196 1035 197 1033 197zM1096 242 1097 241 1098 242 1096 243zM1099 234 1101 233 1102 235 1100 236zM1018 181 1021 181 1020 183 1018 182zM1068 196 1070 196 1070 197 1068 197zM1090 238 1092 238 1092 239 1091 239zM993 196 995 197 994 198 993 197zM1072 209 1073 209 1074 210 1072 211zM991 179 992 179 992 180 991 180zM1028 204 1030 204 1030 206 1028 206zM977 213 978 214 978 215 977 214zM1036 174 1038 175 1038 177 1035 176zM999 219 1000 220 1000 221 998 220zM1002 200 1004 201 1003 203 1001 202zM1079 227 1081 226 1081 228 1079 229zM1002 180 1004 179 1004 181 1002 181zM1002 209 1004 208 1005 210 1003 211zM1041 226 1044 225 1044 227 1042 227zM1042 185 1044 186 1044 187 1042 187zM1005 190 1007 189 1008 191 1006 192zM1071 200 1073 200 1073 202 1071 202zM987 211 989 211 989 213 987 212zM993 206 994 206 995 207 993 207zM995 200 997 199 998 200 996 201zM1067 237 1068 238 1068 239 1066 239zM993 211 994 210 995 212 993 212zM1029 199 1031 198 1031 199 1029 200zM1043 228 1045 229 1045 230 1043 230zM1102 229 1103 229 1103 230 1101 230zM1049 192 1051 193 1050 195 1048 194zM1000 211 1002 211 1001 213 999 212zM1006 197 1007 197 1007 198 1005 198zM1080 243 1082 242 1082 244 1081 244zM1004 192 1006 192 1006 194 1004 194zM1015 172 1017 172 1017 173 1015 173zM1015 204 1017 204 1018 205 1016 206zM1099 242 1100 242 1101 243 1099 243zM1025 188 1027 189 1026 190 1025 189zM1029 188 1031 188 1031 189 1029 189zM1074 214 1076 214 1076 216 1074 216zM1027 197 1029 197 1029 198 1027 198zM1058 231 1059 230 1060 232 1058 232zM1049 206 1051 206 1051 207 1049 207zM1007 200 1008 200 1008 202 1006 201zM1055 221 1057 222 1057 223 1055 223zM997 217 999 217 999 218 997 218zM1050 182 1052 182 1052 184 1050 184zM993 202 994 202 994 203 992 203zM1097 217 1099 216 1100 218 1097 219zM1042 228 1043 227 1044 228 1042 229zM1061 195 1062 195 1062 196 1061 196zM1035 221 1037 221 1037 223 1035 223zM1051 227 1053 227 1053 229 1051 229zM980 203 982 202 982 204 980 205zM1019 195 1021 195 1020 196 1019 196zM1062 208 1063 208 1063 209 1062 209zM1088 213 1089 214 1089 215 1088 214zM1101 231 1103 232 1103 233 1101 233zM1085 220 1086 221 1086 223 1084 222zM1027 207 1029 208 1028 209 1027 208zM984 224 986 223 987 225 985 226zM1081 227 1083 227 1083 228 1081 228zM1032 198 1034 199 1033 200 1031 200zM1080 211 1081 211 1081 213 1080 213zM1085 218 1086 218 1087 219 1085 219zM1066 232 1068 233 1068 234 1066 233zM1000 193 1002 194 1001 196 999 195zM1034 199 1036 198 1036 200 1034 200zM1047 193 1049 194 1049 195 1046 195zM1056 192 1058 193 1057 194 1056 193zM978 203 980 204 979 205 978 204zM1093 215 1095 215 1095 216 1093 216zM1102 240 1104 240 1104 241 1103 242zM1090 239 1092 240 1091 241 1090 240zM1536 315 1538 315 1538 317 1536 316zM1451 303 1453 303 1453 304 1451 305zM1473 313 1475 314 1475 316 1473 315zM1511 328 1513 328 1513 330 1511 330zM1446 354 1449 353 1449 355 1447 356zM1465 317 1467 318 1466 320 1464 319zM1508 334 1510 335 1509 336 1508 335zM1500 351 1503 351 1503 353 1500 353zM1504 346 1506 346 1506 347 1504 347zM1505 335 1507 336 1507 337 1505 337zM1456 302 1458 301 1458 302 1457 303zM1507 342 1509 342 1509 343 1507 343zM1481 331 1483 330 1484 332 1482 333zM1506 304 1508 304 1508 306 1506 306zM1454 295 1457 296 1457 297 1454 297zM1494 313 1496 312 1497 314 1495 315zM1501 338 1503 337 1503 338 1502 339zM1532 297 1534 297 1533 298 1532 298zM1510 300 1511 299 1511 300 1510 301zM1469 337 1471 336 1472 338 1470 339zM1446 326 1448 326 1448 328 1446 328zM1505 347 1507 348 1506 349 1504 348zM1478 318 1479 318 1480 319 1478 319zM1447 330 1449 330 1449 331 1447 331zM1446 312 1447 312 1447 313 1445 313zM1484 319 1486 319 1485 321 1484 320zM1460 310 1463 310 1463 312 1460 312zM1539 309 1540 309 1540 310 1539 310zM1450 339 1452 340 1451 341 1450 340zM1483 301 1485 300 1486 301 1484 302zM1487 343 1489 342 1489 344 1487 344zM1491 301 1493 301 1492 303 1490 302zM1462 319 1464 319 1464 321 1462 321zM1478 322 1479 323 1479 324 1477 324zM1533 341 1535 341 1535 342 1533 343zM1452 297 1454 296 1454 297 1453 298zM1509 335 1511 336 1510 338 1508 337zM1496 359 1497 359 1497 361 1495 360zM1471 325 1473 325 1473 326 1471 326zM1530 312 1532 312 1531 313 1530 313zM1448 304 1449 304 1449 305 1448 305zM1515 336 1517 336 1517 338 1514 337zM1508 350 1511 350 1511 352 1509 352zM1538 350 1540 350 1540 351 1538 351zM1510 322 1512 322 1512 324 1510 324zM1456 336 1457 337 1457 338 1456 337zM1531 316 1533 316 1533 318 1531 318zM1483 321 1485 321 1485 322 1483 322zM1540 315 1542 314 1543 316 1541 316zM1488 318 1490 318 1490 320 1488 319zM1448 350 1451 349 1451 351 1448 351zM1501 323 1502 323 1502 325 1501 325zM1516 328 1517 329 1517 330 1516 329zM1457 335 1459 334 1459 336 1457 336zM1537 353 1539 353 1539 354 1538 355zM1518 345 1519 344 1520 345 1518 346zM1482 327 1484 327 1483 329 1482 329zM1230 301 1232 302 1231 303 1229 303zM1240 296 1242 296 1242 297 1240 297zM1167 298 1168 298 1169 299 1167 299zM1208 293 1210 293 1210 294 1208 294zM1212 295 1214 294 1215 296 1213 297zM1166 304 1168 303 1169 304 1167 305zM1194 285 1196 285 1197 286 1195 287zM1242 303 1244 303 1244 304 1242 304zM1231 317 1233 318 1232 319 1231 318zM1179 303 1181 302 1181 303 1179 304zM1249 305 1250 305 1250 307 1249 307zM1197 314 1199 313 1199 314 1198 314zM1239 312 1241 312 1241 313 1239 313zM1226 301 1228 300 1228 302 1226 302zM1245 306 1247 306 1247 308 1245 307zM1222 306 1223 307 1223 308 1222 307zM1184 285 1186 284 1187 286 1184 287zM1229 302 1231 301 1232 302 1230 303zM1184 309 1186 309 1186 311 1184 311zM1171 299 1173 300 1172 301 1171 300zM1232 292 1234 291 1235 293 1233 294zM1244 307 1245 307 1246 308 1244 309zM1180 301 1182 301 1182 303 1180 303zM1236 293 1237 292 1238 294 1236 294zM1177 299 1179 300 1179 301 1177 301zM1165 298 1166 298 1166 299 1165 299zM1221 317 1223 317 1224 318 1222 319zM1209 317 1211 317 1210 319 1209 318zM1246 287 1248 287 1248 289 1246 289zM397 435 400 433 401 435 398 437zM384 404 386 404 385 406 383 405zM364 441 365 442 365 443 364 443zM369 403 370 403 371 404 369 404zM400 428 402 428 402 429 400 430zM337 423 339 422 340 424 338 425zM373 445 375 444 375 446 373 446zM398 426 399 425 400 426 398 427zM368 450 369 450 370 451 368 452zM395 424 397 424 396 426 394 425zM370 402 372 402 371 403 370 403zM382 441 384 440 385 441 383 442zM434 405 436 405 436 406 434 406zM425 417 427 417 427 418 426 418zM399 414 401 415 400 416 399 415zM414 411 415 412 415 413 414 412zM373 432 376 431 376 433 374 434zM358 444 360 444 360 446 357 446zM404 443 405 444 405 445 403 445zM419 418 421 417 421 418 420 419zM405 409 406 409 406 410 404 410zM340 404 342 404 342 406 339 406zM369 436 371 437 370 438 369 437zM384 459 386 458 386 460 385 460zM374 448 376 447 376 448 375 449zM347 439 350 438 350 440 348 440zM439 435 441 436 440 438 438 436zM372 399 374 399 374 401 372 401zM413 457 414 458 414 459 413 458zM411 420 413 420 413 421 411 421zM402 441 404 441 404 443 402 443zM557 343 559 342 560 344 557 345zM563 351 566 350 566 352 564 353zM591 352 594 351 594 353 592 354zM571 339 574 341 573 342 570 341zM519 381 521 382 520 384 518 383zM597 315 600 317 599 318 596 317zM580 340 583 341 582 343 579 342zM590 314 592 313 592 315 591 315zM587 316 589 317 588 318 586 318zM486 386 488 386 488 387 486 387zM535 323 536 323 536 324 534 324zM493 376 496 375 496 377 494 377zM571 340 574 340 574 342 572 342zM558 320 559 321 559 322 557 321zM540 353 543 352 544 354 541 355zM557 330 560 331 559 333 557 332zM599 304 601 304 601 306 599 305zM505 354 506 355 506 356 505 356zM506 350 508 349 508 351 506 352zM497 369 499 370 498 371 496 371zM487 388 490 388 490 390 488 390z"/>
<path fill="#9e9488" opacity="0.5" d="M719 444 721 444 721 445 720 446zM585 436 586 437 586 438 584 437zM737 345 738 344 738 345 737 346zM745 434 747 433 748 434 746 435zM634 459 636 459 635 460 634 460zM660 385 662 385 662 386 661 387zM703 379 705 378 706 380 704 381zM478 437 481 436 482 438 479 439zM757 339 760 339 760 342 757 342zM526 452 527 451 528 452 526 453zM693 456 695 455 696 457 694 458zM705 389 707 389 706 391 704 390zM687 358 689 359 689 360 687 359zM571 441 573 442 572 443 571 442zM713 376 715 376 715 377 713 377zM760 440 762 440 762 441 761 442zM719 414 720 415 720 416 719 415zM675 436 678 437 677 439 674 438zM545 386 547 385 548 387 546 388zM722 410 724 410 724 411 722 411zM664 423 665 422 666 423 664 424zM795 387 798 386 798 388 796 389zM786 431 788 431 788 433 786 433zM542 428 545 429 544 431 541 430zM749 362 750 362 750 363 749 363zM674 347 677 347 677 350 674 350zM760 340 762 341 762 342 760 342zM733 435 735 435 734 436 733 436zM617 413 619 412 620 414 618 415zM754 339 755 340 755 341 754 340zM570 435 572 434 572 435 571 436zM652 441 654 441 654 442 652 442zM672 400 673 399 674 400 672 401zM493 455 494 455 495 456 494 456zM717 408 719 407 720 408 718 410zM557 390 560 389 560 391 558 391zM497 420 499 421 498 422 496 422zM507 399 509 399 509 400 507 400zM451 418 452 419 452 420 450 419zM508 414 510 414 510 415 508 416zM744 360 746 361 746 363 743 362zM675 346 676 346 677 347 675 348zM713 351 716 351 716 353 713 353zM605 460 606 460 605 461 604 461zM687 398 689 397 690 399 688 400zM758 451 761 452 760 453 758 453zM509 396 511 395 512 396 509 397zM754 428 756 427 757 429 755 430zM696 455 697 454 698 455 696 456zM686 456 689 456 689 459 686 458zM683 429 685 429 685 430 683 431zM651 446 653 446 653 447 652 448zM802 351 804 351 804 352 802 352zM632 443 634 443 635 444 633 445zM478 459 479 459 480 460 478 461zM761 371 764 370 764 373 762 374zM744 366 747 367 746 369 743 368zM757 423 759 424 758 426 756 425zM458 434 460 434 460 435 458 435zM744 350 745 350 745 352 744 352zM685 351 686 352 686 353 684 352zM549 453 551 453 551 455 549 455zM772 357 775 357 775 359 772 359zM730 453 733 453 732 455 730 455zM757 332 758 332 759 333 758 333zM680 456 683 455 683 457 681 458zM772 351 773 351 773 353 771 352zM674 350 676 349 676 351 674 351zM571 447 572 447 573 448 571 448zM713 371 716 372 715 375 713 374zM577 422 579 422 579 424 577 424zM476 453 478 454 477 455 475 455zM544 424 546 424 546 425 545 425zM624 454 625 455 625 456 623 456zM796 353 798 354 797 355 796 354zM808 365 810 364 811 366 808 367zM557 454 558 454 558 455 557 455zM802 352 804 352 804 354 802 353zM661 358 664 358 664 360 662 360zM741 420 744 421 743 423 740 422zM777 347 779 347 779 348 777 348zM805 373 808 373 808 375 805 375zM797 425 799 425 799 427 797 427zM691 418 693 419 692 420 690 419zM596 455 599 454 600 457 597 458zM729 402 732 402 731 405 728 404zM487 421 488 421 488 422 487 422zM734 420 737 419 738 421 735 422zM774 456 776 457 775 458 774 457zM486 427 488 427 488 428 486 429zM768 346 770 345 771 347 769 348zM707 384 710 382 711 385 708 386zM630 435 632 434 633 436 631 437zM753 428 755 428 755 429 753 430zM780 455 782 455 783 457 780 457zM724 369 725 368 726 369 724 370zM500 398 502 398 501 399 500 399zM442 452 444 451 444 453 442 453zM794 441 796 441 796 443 794 442zM791 385 793 384 794 386 792 387zM695 447 697 446 698 448 696 448zM739 357 740 357 741 358 739 358zM563 406 566 405 566 407 564 408zM786 366 788 366 788 368 786 368zM659 353 661 354 660 355 658 354zM596 456 598 456 598 458 596 457zM734 385 736 384 737 386 735 387zM725 374 727 375 726 376 725 375zM774 453 776 452 777 453 775 454zM548 421 550 422 550 423 548 422zM656 424 657 424 658 425 656 425zM758 366 761 367 760 369 758 368zM528 424 530 425 530 427 528 426zM653 399 656 399 656 401 654 401zM709 412 712 411 712 413 709 414zM614 435 616 435 616 437 614 436zM735 360 738 360 739 362 736 363zM661 423 663 422 664 423 662 424zM663 456 665 457 664 459 662 458zM657 363 660 364 660 366 657 365zM794 349 796 348 797 350 794 351zM755 396 757 396 757 397 755 397zM759 437 761 437 761 438 759 438zM779 353 781 353 781 354 779 354zM452 432 454 432 454 433 452 433zM708 349 710 348 711 350 709 350zM702 410 704 410 704 411 702 411zM708 389 710 389 710 391 708 390zM686 363 688 362 688 364 686 364zM594 437 595 437 595 438 594 438zM692 394 694 393 694 394 693 395zM772 336 774 335 775 337 773 338zM726 393 728 394 728 396 725 395zM600 439 603 438 604 440 601 441zM737 441 740 441 739 443 737 443zM627 437 629 437 629 439 627 439zM562 441 564 441 564 443 562 442zM740 332 742 333 741 334 739 333zM554 390 555 391 555 392 553 391zM751 373 753 373 753 375 751 375zM749 418 752 418 752 420 749 420zM803 356 804 356 804 357 803 357zM583 417 584 417 585 418 583 419zM700 379 702 380 701 382 699 381zM545 395 548 396 547 399 544 397zM706 391 708 390 709 392 706 393zM758 445 760 444 761 446 758 447zM770 457 772 456 773 458 771 459zM720 360 722 360 722 362 720 361zM739 387 742 387 742 389 739 389zM757 455 758 455 758 456 757 456zM556 403 558 402 558 403 557 404zM476 439 478 440 478 441 476 441zM488 430 490 430 490 431 488 431zM633 426 635 425 636 427 634 428zM445 429 448 430 448 432 445 432zM448 448 450 449 450 451 448 450zM651 369 653 370 653 371 651 371zM723 360 726 361 725 363 722 362zM782 429 783 429 784 430 782 430zM619 449 621 448 622 450 619 451zM556 400 559 401 558 403 556 402zM791 398 793 398 793 400 791 400zM473 444 476 445 476 447 473 446zM749 401 751 400 752 402 749 402zM731 349 732 349 733 350 731 351zM785 449 787 449 786 451 784 450zM715 397 718 398 717 400 714 399zM687 454 689 453 690 455 687 456zM786 434 787 434 788 435 786 435zM755 380 757 381 757 383 754 382zM770 354 772 354 772 355 770 355zM735 375 738 375 738 377 735 377zM567 418 570 418 570 419 567 420zM704 381 707 381 707 383 704 383zM752 431 754 430 754 431 752 432zM632 442 635 442 635 444 632 444zM688 370 691 369 691 372 688 372zM716 429 718 430 718 432 715 431zM747 361 748 362 748 363 747 362zM439 437 441 438 440 440 438 439zM732 426 735 426 735 428 733 428zM688 458 690 458 690 460 688 460zM675 365 678 365 678 367 676 367zM784 411 786 412 785 413 784 412zM804 351 807 350 808 352 805 353zM763 427 765 426 765 427 764 428zM444 447 446 448 445 449 443 448zM734 409 736 409 736 411 734 411zM632 444 634 444 634 446 632 446zM775 408 778 408 778 410 775 410zM514 430 516 430 516 432 514 432zM777 348 779 349 779 350 777 350zM695 405 698 406 697 407 695 407zM678 387 679 387 679 388 678 388zM691 374 693 374 693 376 691 376zM741 261 744 260 745 262 742 263zM738 310 740 309 740 310 739 311zM744 309 745 309 745 310 744 310zM709 249 712 248 712 250 710 251zM755 281 757 280 757 282 755 282zM762 282 765 282 764 285 761 284zM673 218 675 217 676 218 674 219zM698 295 700 296 699 297 698 297zM669 263 671 264 670 265 669 265zM660 256 663 257 662 259 659 258zM706 209 708 210 708 212 705 211zM753 210 755 211 755 212 753 212zM744 285 746 284 746 285 745 286zM717 214 719 213 720 215 718 216zM717 206 718 205 718 206 717 207zM700 322 701 321 702 322 700 323zM705 213 708 213 708 215 705 216zM767 280 769 280 769 282 767 282zM684 273 686 274 685 275 683 275zM710 227 712 227 712 228 710 228zM670 256 672 256 672 257 670 257zM687 253 689 253 690 254 688 255zM697 281 698 281 698 282 696 282zM765 303 766 304 766 305 764 305zM702 282 704 281 704 282 703 283zM700 215 702 215 702 216 700 216zM712 307 714 306 715 308 712 309zM680 238 682 238 682 240 680 240zM749 275 751 276 751 278 748 277zM698 232 701 233 700 235 698 234zM771 316 774 315 775 317 772 318zM676 232 679 232 679 235 676 234zM703 240 705 241 704 243 702 242zM737 196 740 197 739 199 737 198zM760 239 762 239 761 241 759 240zM751 206 753 206 753 208 751 207zM736 318 738 318 738 320 736 320zM744 256 746 256 746 257 744 257zM723 295 725 295 725 296 723 297zM716 216 718 217 717 218 715 217zM759 224 761 225 760 226 758 225zM686 269 688 270 688 271 685 271zM701 246 704 246 703 248 701 248zM698 214 701 214 700 216 698 216zM706 293 708 293 708 295 706 294zM739 203 741 202 741 204 739 205zM701 317 703 317 703 318 701 318zM716 302 719 302 719 305 716 305zM710 290 712 290 712 292 710 291zM666 263 668 262 669 264 667 265zM751 325 754 324 755 326 752 327zM739 271 741 271 741 273 739 273zM700 271 702 270 703 272 701 273zM702 286 704 285 705 287 702 288zM707 202 709 202 709 204 707 204zM750 299 751 299 751 300 750 300zM706 322 708 323 708 325 705 324zM761 285 764 286 763 287 761 287zM758 258 761 259 761 261 758 260zM662 285 664 285 664 287 662 287zM699 286 701 287 700 288 698 288zM721 208 723 209 722 210 721 209zM610 275 612 275 612 276 611 276zM618 266 622 264 623 267 619 269zM642 239 644 240 643 241 641 240zM635 254 639 254 639 257 635 257zM652 320 656 322 655 325 651 323zM651 259 654 260 654 261 651 261zM624 246 628 246 628 249 624 249zM730 333 733 333 733 335 730 335zM618 305 621 307 620 309 617 308zM627 309 629 308 630 310 627 311zM610 278 613 280 612 282 609 280zM641 241 642 242 642 243 640 242zM681 326 684 325 684 327 682 328zM637 306 641 305 642 308 638 309zM716 331 718 330 719 331 717 332zM631 244 635 244 635 248 631 248zM634 303 636 304 635 306 633 305zM625 332 627 332 627 334 625 333zM646 339 649 337 650 340 647 341zM621 320 623 320 623 322 621 322zM631 341 632 342 632 344 630 343zM651 324 654 324 654 326 652 326zM651 303 655 305 654 308 650 306zM654 262 657 261 658 264 654 264zM657 310 662 310 662 313 658 314zM619 312 621 311 622 312 620 313zM631 315 633 314 634 315 632 317zM612 278 613 277 614 279 612 279zM609 287 613 289 612 292 608 290zM693 332 696 332 696 334 693 334zM600 271 603 270 604 272 601 273zM784 323 788 322 789 325 785 327zM787 325 789 325 790 327 787 327zM785 327 788 328 787 330 784 329zM836 344 838 343 839 345 837 346zM830 346 832 347 831 349 829 347zM788 332 791 333 791 335 788 335zM785 326 788 326 788 329 785 329zM829 353 831 353 831 355 829 354zM822 330 825 331 824 334 821 332zM818 345 820 345 820 347 818 346zM789 330 790 329 791 330 789 331zM779 331 783 332 782 335 778 334zM787 323 791 324 790 326 787 326zM716 183 718 183 719 185 716 185zM690 192 694 191 695 194 690 195zM730 191 732 190 733 191 731 192zM720 166 722 166 721 168 720 167zM703 190 706 190 706 193 702 193zM693 165 697 165 697 168 693 168zM715 180 716 180 717 181 715 181zM515 260 517 260 517 261 515 262zM477 256 479 256 478 257 477 257zM497 261 499 262 498 264 496 263zM499 252 500 252 500 253 499 253zM466 244 468 243 469 245 467 245zM502 257 504 256 504 258 502 258zM504 250 506 250 506 251 504 251zM497 260 500 260 499 262 496 262zM472 250 473 250 473 251 472 251zM478 272 479 272 479 273 478 273zM446 252 448 253 447 255 445 254zM483 233 485 234 484 235 483 234zM483 231 485 232 484 234 482 232zM475 275 478 276 477 278 475 277zM493 246 495 247 495 249 492 248zM480 256 482 257 481 258 480 258zM492 224 494 224 494 226 492 226zM491 231 493 232 493 233 491 233zM458 227 459 228 459 229 457 229zM482 262 484 262 484 263 482 263zM496 226 498 226 498 227 496 227zM430 216 431 216 431 217 430 218zM509 247 510 246 511 247 509 248zM486 218 487 219 487 220 485 219zM453 238 456 238 456 240 453 240zM473 261 476 261 476 263 473 263zM452 244 454 245 453 247 451 246zM504 260 505 260 506 261 504 262zM463 253 465 253 466 255 463 255zM433 239 435 239 435 241 433 241zM431 234 433 234 433 236 431 236zM488 262 489 263 489 264 488 264zM443 242 445 243 444 244 443 243zM489 255 491 255 492 257 489 257zM482 274 483 273 484 275 482 275zM472 269 473 270 473 271 471 270zM490 250 493 249 493 251 491 252zM418 207 420 207 420 208 418 209zM444 215 445 215 445 216 444 216zM428 236 430 236 430 237 428 237zM487 240 488 239 488 240 487 241zM475 275 477 276 476 278 474 277zM482 239 484 239 484 241 482 240zM466 252 468 253 467 255 465 254zM495 224 496 224 496 225 494 224zM496 256 498 257 497 259 495 258zM487 219 489 220 489 222 486 221zM467 264 469 265 468 267 466 266zM499 256 500 256 500 257 499 257zM432 252 434 252 434 254 432 254zM441 247 442 247 442 249 440 248zM419 218 421 217 422 218 420 219zM471 267 473 268 473 270 470 269zM435 217 437 215 438 217 436 219zM460 252 462 251 463 253 461 254zM457 265 459 265 459 266 457 267zM479 253 481 255 481 256 478 255zM456 247 458 248 458 249 456 249zM454 213 457 213 457 215 455 215zM475 272 477 271 477 273 475 273zM459 216 461 216 461 217 459 217zM479 219 481 218 482 220 479 220zM450 264 452 263 453 264 450 266zM440 262 442 262 442 263 440 263zM462 267 465 266 466 267 463 269zM469 267 471 268 471 270 469 269zM856 415 858 415 858 417 856 417zM880 400 883 401 882 403 880 402zM888 432 890 433 890 435 887 434zM892 417 894 417 894 418 893 418zM867 433 869 434 868 435 866 434zM819 400 822 400 821 403 818 402zM885 404 887 404 887 405 886 406zM906 447 908 446 909 448 907 448zM845 457 848 456 849 458 846 459zM870 395 872 395 872 397 870 397zM841 412 843 413 843 415 840 414zM875 417 878 416 878 418 876 419zM916 452 918 453 918 454 916 453zM866 403 869 403 869 405 866 405zM868 415 869 416 869 417 867 417zM812 401 814 402 813 403 812 402zM853 410 854 410 854 411 852 411zM841 454 843 454 843 455 841 455zM837 443 839 444 838 445 837 444zM858 440 860 439 860 441 858 441zM828 448 830 447 831 449 828 450zM837 429 840 429 840 431 837 431zM878 399 880 399 879 401 878 400zM837 432 839 432 839 434 837 434zM1064 220 1065 220 1065 221 1064 221zM1040 198 1042 199 1041 201 1039 200zM1086 235 1088 236 1087 238 1085 237zM1033 175 1034 176 1034 177 1032 177zM1050 208 1052 208 1051 210 1050 209zM1017 196 1019 197 1019 199 1016 198zM989 188 992 188 992 190 989 190zM1006 181 1008 182 1007 184 1005 183zM1052 207 1054 207 1054 208 1053 209zM974 218 977 217 977 219 975 220zM1082 239 1084 238 1084 240 1082 240zM1027 186 1029 186 1029 188 1027 188zM1023 212 1025 213 1024 214 1023 214zM1049 226 1050 227 1050 228 1048 227zM1002 211 1005 211 1005 213 1002 213zM1038 215 1041 215 1041 217 1039 217zM1059 208 1061 207 1061 208 1059 209zM1031 209 1034 208 1035 210 1032 210zM991 198 992 198 992 199 991 199zM1024 199 1026 199 1025 201 1023 200zM1029 196 1031 196 1031 197 1030 197zM1082 213 1084 212 1085 214 1082 215zM967 216 969 216 969 217 968 217zM1015 205 1017 206 1017 208 1014 207zM1037 203 1039 202 1039 204 1038 204zM1057 217 1059 217 1060 218 1057 219zM1056 212 1058 212 1057 214 1055 213zM1071 227 1073 226 1074 227 1072 228zM1059 225 1061 224 1061 226 1060 226zM984 209 986 209 985 211 983 211zM1035 209 1036 209 1036 211 1035 210zM1036 221 1038 221 1037 222 1036 222zM992 184 994 185 994 186 991 186zM976 195 977 196 977 197 976 196zM1017 207 1019 207 1019 208 1017 208zM1005 186 1007 186 1007 188 1005 187zM984 206 986 206 986 207 985 207zM991 180 993 181 993 182 990 182zM1002 189 1004 189 1004 190 1002 191zM1021 201 1023 201 1023 203 1021 203zM1029 173 1032 174 1031 175 1029 175zM1097 232 1099 233 1099 234 1097 234zM1055 220 1057 221 1056 222 1055 221zM990 220 992 220 992 222 990 221zM1033 177 1035 177 1035 179 1033 179zM996 207 998 207 997 209 995 208zM1072 202 1073 201 1074 202 1072 203zM1097 222 1099 222 1099 224 1097 224zM989 182 992 182 992 184 990 184zM999 205 1001 205 1000 207 998 206zM1083 205 1085 206 1084 207 1083 207zM1078 230 1079 229 1079 231 1078 231zM1023 178 1026 178 1026 180 1024 180zM1035 220 1037 219 1037 221 1035 221zM1019 215 1021 216 1021 217 1018 217zM1014 177 1016 177 1016 178 1015 179zM1065 200 1066 200 1066 202 1065 202zM1060 212 1063 211 1063 213 1061 214zM1058 209 1060 209 1060 210 1058 211zM994 185 996 186 995 188 993 187zM1016 189 1018 190 1018 191 1016 191zM994 178 996 178 996 180 994 179zM1022 195 1024 195 1024 197 1022 196zM1085 224 1086 224 1087 225 1085 226zM1038 205 1039 204 1040 205 1038 206zM1056 230 1058 230 1058 232 1056 232zM1041 216 1043 216 1043 217 1041 217zM984 220 986 220 986 221 984 222zM1058 193 1059 193 1059 195 1057 194zM1057 236 1059 235 1060 237 1058 238zM1072 203 1074 203 1074 204 1072 204zM1036 204 1038 204 1039 205 1037 206zM1021 191 1023 190 1023 192 1021 192zM1029 221 1031 221 1031 222 1030 222zM1017 214 1019 213 1020 215 1018 216zM989 202 991 202 990 204 988 203zM1053 202 1055 202 1055 204 1053 204zM1012 205 1013 205 1013 206 1012 206zM1072 238 1073 238 1073 240 1071 239zM1082 216 1083 217 1083 218 1082 217zM1045 179 1047 179 1047 180 1045 180zM1052 233 1053 234 1053 235 1051 234zM1054 237 1056 236 1057 238 1055 239zM1028 200 1030 201 1029 203 1027 202zM999 170 1001 170 1001 172 999 172zM995 215 996 215 997 216 995 217zM1036 196 1038 196 1038 198 1036 198zM1019 205 1020 205 1021 206 1019 206zM1027 196 1028 197 1028 198 1026 198zM980 218 982 218 981 220 979 220zM1022 173 1024 172 1024 174 1022 174zM1075 227 1077 227 1078 228 1076 229zM1086 239 1087 240 1087 241 1086 240zM1049 200 1051 200 1051 201 1049 201zM996 213 998 214 997 215 995 215zM1089 236 1091 237 1090 238 1089 237zM1011 181 1013 180 1013 181 1011 182zM1003 177 1005 177 1005 178 1003 178zM1100 234 1101 234 1101 236 1099 235zM1038 220 1039 220 1039 221 1038 221zM1061 195 1064 195 1063 197 1061 197zM1024 214 1026 214 1026 216 1024 216zM988 201 990 201 990 202 988 203zM1026 191 1027 191 1027 192 1026 192zM1027 200 1030 200 1030 202 1027 202zM1042 183 1044 182 1044 184 1042 185zM1055 187 1057 186 1057 188 1055 188zM1000 216 1001 216 1001 217 1000 217zM1095 237 1097 238 1096 239 1094 238zM1026 189 1028 188 1028 190 1027 191zM1066 193 1068 193 1068 194 1066 194zM1017 214 1018 214 1018 215 1017 216zM1045 223 1047 223 1047 225 1045 224zM1022 180 1023 180 1023 181 1021 181zM1009 177 1011 176 1012 178 1010 179zM1017 203 1019 204 1019 206 1016 205zM1014 169 1016 169 1016 171 1014 171zM1060 218 1063 217 1063 219 1061 220zM1092 225 1093 224 1094 225 1092 226zM1058 213 1059 214 1059 215 1057 214zM1036 185 1038 185 1038 187 1036 187zM1010 172 1012 172 1013 174 1010 174zM1079 204 1082 204 1081 206 1079 205zM1100 238 1102 239 1102 241 1100 240zM1015 193 1017 192 1018 193 1016 195zM1012 192 1014 192 1014 193 1012 193zM1044 182 1046 182 1045 184 1043 183zM1037 176 1039 177 1038 178 1036 178zM996 176 998 176 998 177 996 177zM1035 199 1038 198 1038 199 1036 200zM1065 238 1067 238 1067 239 1065 240zM1033 203 1034 203 1034 204 1033 204zM1470 316 1472 315 1472 317 1470 317zM1467 340 1470 340 1470 342 1467 342zM1531 362 1533 362 1533 364 1531 364zM1467 333 1469 334 1468 335 1466 334zM1460 335 1461 334 1462 336 1460 337zM1544 363 1546 362 1546 363 1545 364zM1539 317 1540 316 1541 317 1539 318zM1521 320 1522 321 1522 322 1520 321zM1528 355 1530 355 1530 357 1528 357zM1463 363 1465 363 1465 365 1463 365zM1525 343 1527 343 1527 345 1525 345zM1452 327 1454 326 1455 328 1452 328zM1467 361 1469 362 1469 363 1467 362zM1476 362 1478 361 1478 363 1476 364zM1476 336 1477 335 1478 336 1476 337zM1458 361 1459 362 1459 363 1457 362zM1516 364 1518 364 1517 365 1516 365zM1495 309 1497 310 1497 311 1495 310zM1544 335 1546 335 1546 336 1544 337zM1446 296 1448 297 1448 299 1446 298zM1495 359 1497 360 1497 362 1495 361zM1459 312 1461 313 1460 314 1459 313zM1469 301 1470 301 1470 303 1468 302zM1541 304 1543 303 1544 305 1542 306zM1525 302 1527 303 1527 305 1524 304zM1485 322 1487 321 1487 322 1486 323zM1531 330 1533 329 1534 331 1532 331zM1501 348 1503 349 1503 350 1501 350zM1472 321 1474 322 1474 324 1471 323zM1501 298 1503 299 1503 301 1500 300zM1543 313 1545 312 1546 314 1544 315zM1504 366 1506 366 1505 367 1504 367zM1465 322 1466 321 1466 322 1465 323zM1512 299 1514 299 1514 300 1512 300zM1512 358 1514 358 1514 359 1512 359zM1489 344 1491 344 1491 345 1489 345zM1446 327 1448 326 1448 327 1446 328zM1488 324 1490 324 1490 326 1488 326zM1543 318 1545 318 1545 320 1543 319zM1488 338 1490 337 1490 339 1488 339zM1509 360 1511 360 1511 361 1509 361zM1512 336 1514 336 1514 338 1512 337zM1493 337 1494 338 1494 339 1492 338zM1523 307 1524 308 1524 309 1523 308zM1493 321 1495 321 1495 323 1493 323zM1493 341 1495 341 1495 342 1494 342zM1510 350 1512 350 1512 351 1510 351zM1525 364 1527 363 1528 364 1526 365zM1457 312 1459 313 1458 314 1456 314zM1442 325 1445 325 1445 327 1442 327zM1509 324 1510 324 1510 325 1508 325zM1444 337 1446 336 1446 338 1445 338zM1539 336 1541 335 1541 337 1539 337zM1497 353 1499 352 1500 353 1498 355zM1520 297 1521 297 1521 298 1519 298zM1516 297 1518 296 1518 298 1517 298zM1503 328 1505 328 1504 330 1503 329zM1463 332 1465 333 1465 335 1462 334zM1542 315 1544 315 1544 316 1542 317zM1529 360 1531 361 1531 362 1529 362zM1442 323 1445 323 1445 325 1442 325zM1518 357 1519 357 1519 358 1518 358zM1449 322 1451 321 1451 322 1449 323zM1544 341 1546 342 1545 343 1543 342zM1203 318 1206 318 1206 320 1203 320zM1227 291 1229 291 1229 293 1227 293zM1214 303 1216 302 1217 304 1214 305zM1236 311 1239 312 1238 314 1236 313zM1229 317 1231 318 1231 319 1228 318zM1175 295 1177 295 1177 297 1175 296zM1169 310 1171 310 1171 312 1169 311zM1207 318 1208 318 1209 319 1207 319zM1180 306 1183 307 1182 308 1180 308zM1174 303 1175 303 1175 304 1174 304zM1181 289 1183 289 1182 291 1181 290zM1247 291 1248 290 1249 292 1247 293zM1174 288 1176 289 1175 291 1173 290zM1215 308 1216 308 1216 309 1215 309zM1195 312 1197 312 1197 314 1195 313zM1198 286 1200 286 1200 288 1198 287zM1177 299 1178 300 1177 301 1176 300zM1178 287 1180 287 1180 288 1179 288zM1211 309 1214 309 1214 310 1212 311zM1226 286 1227 286 1227 288 1225 287zM1195 296 1197 297 1197 298 1194 298zM1207 305 1209 305 1209 306 1207 306zM1245 317 1247 318 1247 319 1245 319zM1200 305 1203 305 1203 307 1200 307zM1170 314 1172 313 1172 314 1170 315zM1246 294 1249 294 1248 296 1246 295zM1245 302 1246 303 1246 304 1244 303zM1192 293 1194 293 1194 294 1193 295zM1165 295 1167 294 1167 296 1165 296zM1231 301 1234 301 1234 303 1231 303zM1165 292 1168 292 1168 294 1165 294zM1243 315 1245 315 1244 316 1243 316zM1223 302 1224 302 1224 303 1223 303zM1179 312 1181 312 1181 314 1179 313zM1210 289 1212 290 1211 292 1209 290zM1175 301 1177 302 1176 303 1174 302zM1213 288 1215 288 1215 290 1213 289zM1228 311 1230 311 1230 313 1228 313zM1214 310 1216 310 1216 312 1214 312zM1225 308 1226 307 1227 308 1225 309zM1238 291 1240 290 1240 291 1239 292zM395 418 396 419 396 420 394 419zM350 397 352 396 353 398 351 398zM428 414 429 415 429 416 427 415zM411 415 414 415 414 417 411 417zM365 427 367 427 367 429 364 429zM416 405 418 404 419 406 417 407zM392 460 394 460 394 461 392 461zM441 417 443 416 444 417 442 418zM445 435 447 435 447 437 444 437zM453 446 456 445 456 446 454 447zM345 453 346 453 346 454 345 454zM361 410 364 411 363 413 361 412zM434 454 436 453 437 455 434 456zM334 430 337 429 337 431 335 432zM405 460 407 459 408 461 405 462zM457 442 459 441 460 443 458 444zM424 453 425 453 425 454 424 454zM359 422 361 421 361 422 360 423zM357 409 359 408 360 410 357 411zM375 411 377 410 377 412 375 412zM338 408 340 408 340 409 338 409zM377 399 379 400 378 401 377 400zM444 455 446 455 446 457 444 456zM559 308 561 309 561 310 559 309zM556 362 559 361 560 363 557 364zM597 338 599 338 599 339 598 339zM538 359 540 359 540 360 538 360zM599 315 600 315 601 316 599 316zM525 324 528 324 528 326 525 326zM565 335 567 335 567 336 565 336zM565 319 567 318 567 319 565 320zM595 320 597 320 597 321 595 321zM524 354 526 354 525 355 524 355zM535 353 537 353 537 354 535 354zM578 344 580 343 580 344 579 345zM551 338 553 338 554 339 551 340zM593 348 596 349 595 351 593 350zM534 342 536 341 537 343 534 344zM545 348 547 347 547 349 545 349zM522 343 525 343 525 345 522 345zM485 382 487 382 488 384 485 384zM527 355 529 356 528 358 526 357zM550 346 552 347 552 349 549 348zM580 355 582 354 582 356 580 356zM525 348 527 350 526 351 524 350zM580 302 582 303 582 305 579 304zM563 321 566 320 566 322 564 323zM548 335 550 334 551 336 549 336z"/>
<path fill="#7d7266" opacity="0.5" d="M535 427 538 428 537 430 535 429zM664 399 666 400 665 401 663 400zM752 361 753 361 753 363 752 362zM743 341 746 341 746 343 743 343zM790 393 791 394 791 395 790 395zM801 349 803 348 804 350 801 351zM509 424 511 423 512 425 510 426zM788 446 790 447 789 449 787 448zM733 407 735 407 735 409 733 409zM724 434 725 434 725 436 724 436zM553 438 555 439 554 440 552 439zM731 399 733 398 733 400 731 400zM494 432 497 432 496 434 494 434zM763 416 765 417 765 419 762 418zM457 455 459 455 459 456 458 456zM676 456 678 456 679 458 676 458zM771 414 773 414 773 415 772 416zM672 351 674 351 674 353 672 353zM758 394 760 395 760 396 757 396zM525 443 526 443 526 444 524 444zM801 368 802 368 802 370 801 370zM626 428 628 428 628 430 626 430zM471 448 473 447 474 449 471 450zM760 455 763 454 763 456 761 457zM548 408 549 407 550 408 548 409zM516 435 519 435 519 437 516 437zM577 415 579 414 579 416 577 416zM781 390 784 391 784 392 781 392zM712 397 714 397 713 399 711 398zM764 388 766 387 766 389 764 389zM681 357 682 357 681 358 680 358zM784 454 787 454 787 456 784 456zM660 391 662 391 663 393 660 393zM682 453 684 453 683 455 681 454zM664 351 665 352 665 353 664 353zM787 460 788 460 789 461 787 461zM720 354 723 353 723 355 721 356zM579 443 581 443 581 444 580 445zM790 441 792 440 792 441 791 442zM528 439 529 439 529 440 528 440zM473 423 476 422 477 425 474 425zM729 379 730 379 731 380 729 381zM726 413 728 413 729 414 727 415zM729 420 731 420 730 422 728 421zM452 426 455 425 455 427 452 428zM499 406 502 406 501 408 499 407zM526 396 529 397 528 399 525 398zM785 359 787 359 787 360 785 360zM727 412 728 412 728 413 726 413zM709 384 711 383 711 384 710 385zM466 417 467 417 467 418 466 418zM744 440 746 441 746 442 744 441zM492 411 495 410 495 412 493 413zM690 344 693 345 692 347 689 346zM719 457 721 457 722 458 720 458zM658 405 659 404 660 406 658 406zM607 427 609 428 609 429 607 429zM623 453 625 452 626 454 624 455zM654 448 656 449 656 450 654 450zM659 350 660 349 661 351 659 351zM611 425 614 425 614 427 611 427zM771 430 773 429 773 431 771 432zM741 394 742 394 742 395 741 396zM664 360 666 361 665 362 664 361zM462 433 463 433 464 434 462 435zM685 397 686 396 687 397 685 398zM691 438 694 438 694 440 691 440zM721 452 723 452 723 453 721 453zM612 457 614 457 614 458 612 458zM435 449 437 449 437 451 435 451zM703 411 705 411 705 412 703 412zM705 361 707 361 707 363 704 362zM544 458 546 458 546 459 544 459zM713 404 715 404 714 406 713 405zM648 443 651 444 651 446 648 445zM806 347 807 347 808 348 806 348zM743 335 745 335 744 337 742 336zM486 441 489 440 489 442 487 443zM718 359 720 359 720 361 718 361zM784 411 787 412 786 415 783 414zM566 443 568 444 567 445 566 444zM567 432 569 432 569 434 566 433zM525 434 527 434 526 436 524 435zM671 396 673 396 673 398 670 397zM575 407 577 408 576 409 574 408zM514 417 516 416 517 417 515 419zM702 418 705 418 705 420 702 420zM655 438 658 437 658 439 656 440zM661 422 663 422 662 423 661 423zM684 400 687 398 688 400 685 402zM592 416 595 417 594 419 591 418zM707 390 709 390 709 391 708 391zM764 352 767 351 767 353 764 354zM494 429 496 430 496 432 494 431zM732 432 734 431 735 433 733 434zM703 451 705 450 706 451 704 452zM726 380 728 381 727 382 725 381zM714 441 717 441 717 443 714 443zM766 366 768 367 768 368 766 368zM584 451 587 452 586 454 583 453zM655 420 657 420 657 421 655 421zM737 406 739 406 739 407 738 408zM738 387 740 388 739 389 737 389zM691 446 693 446 692 448 690 447zM699 355 701 355 701 357 699 356zM689 428 691 427 691 429 689 429zM627 431 629 431 629 432 627 433zM432 455 433 455 433 456 432 456zM694 419 697 420 697 421 694 421zM744 402 745 402 745 403 744 403zM511 415 512 416 512 417 511 416zM767 362 770 362 771 364 768 364zM512 457 515 456 515 458 512 459zM753 333 755 333 755 335 753 334zM577 442 579 441 579 443 577 443zM696 439 699 438 700 440 697 441zM762 390 764 389 765 390 763 391zM577 410 580 410 580 412 577 412zM676 436 679 437 678 439 676 438zM651 381 654 381 654 383 651 384zM665 357 666 356 666 358 665 358zM653 411 655 411 656 413 653 413zM581 442 584 442 584 444 581 444zM654 358 656 357 656 359 654 359zM478 438 481 438 481 440 478 440zM525 392 526 392 526 393 525 393zM460 450 461 451 461 452 460 452zM444 420 446 419 447 421 445 422zM704 437 705 436 706 437 704 438zM524 438 526 437 526 438 524 439zM702 429 704 429 705 430 703 431zM793 409 794 408 795 410 793 410zM469 445 471 445 471 446 469 447zM668 360 670 360 670 361 669 362zM469 423 470 422 471 423 469 424zM654 443 656 443 656 444 654 444zM800 358 802 357 802 358 801 359zM593 417 596 417 596 419 593 419zM594 429 596 429 596 431 594 431zM465 440 466 439 467 440 465 441zM789 420 792 420 791 422 789 422zM554 402 556 401 556 403 554 403zM753 440 754 440 755 441 753 441zM637 431 639 432 638 433 637 432zM727 398 730 399 729 401 727 400zM713 416 715 415 716 416 714 418zM563 436 565 435 565 437 563 437zM468 440 471 441 470 443 467 442zM751 359 752 358 752 359 751 360zM653 396 656 396 656 398 654 398zM759 398 762 398 761 400 758 400zM770 402 771 402 772 403 770 404zM538 407 540 406 540 408 539 408zM502 390 505 389 505 391 503 392zM695 448 698 447 698 449 696 450zM691 366 694 366 694 368 691 368zM476 401 478 401 478 402 477 403zM799 378 801 378 801 379 799 380zM452 442 454 441 455 443 453 444zM722 359 725 358 725 360 722 361zM561 430 563 430 563 431 562 432zM651 433 654 434 653 436 650 435zM707 387 709 387 709 388 707 388zM738 457 740 458 739 459 738 458zM696 401 698 401 698 403 696 403zM594 438 596 438 595 439 594 439zM776 424 778 424 778 426 776 426zM712 396 714 396 714 398 712 397zM716 368 718 367 718 369 717 369zM729 406 732 407 731 409 728 408zM755 365 758 364 758 366 755 366zM651 378 654 378 653 380 651 380zM619 438 620 438 620 439 619 439zM433 453 435 452 435 454 433 455zM657 390 659 389 660 392 657 392zM504 437 506 437 506 438 504 439zM739 446 741 447 741 449 738 448zM667 399 669 398 670 400 668 401zM728 417 731 417 731 419 728 419zM738 421 740 422 739 423 737 423zM783 364 786 363 786 365 783 366zM493 458 495 458 496 459 493 460zM696 347 699 346 699 348 696 349zM768 381 770 381 770 383 768 383zM547 420 549 421 548 423 546 422zM663 361 665 361 665 363 663 363zM717 342 719 342 719 343 717 344zM798 403 801 404 800 406 797 405zM788 413 790 414 789 416 787 415zM568 438 570 439 569 440 567 440zM484 398 487 398 487 400 484 401zM709 342 712 342 712 344 709 344zM637 453 640 452 640 454 638 455zM727 390 729 390 729 391 727 391zM699 429 700 429 700 430 699 430zM705 401 708 401 707 403 705 403zM624 419 626 418 626 419 625 420zM676 357 678 357 679 359 676 360zM740 385 742 384 743 386 740 387zM739 430 741 431 741 432 739 432zM765 440 768 440 769 442 766 443zM790 404 792 405 792 407 789 406zM801 355 803 354 804 356 802 357zM776 434 779 434 779 436 776 436zM638 422 640 422 639 424 638 423zM788 369 790 370 790 371 788 371zM444 448 446 447 447 449 445 450zM541 425 542 425 542 426 541 426zM517 457 519 457 519 459 517 458zM779 428 781 427 781 429 779 429zM784 414 785 413 786 415 784 415zM813 358 816 358 816 361 813 360zM520 428 523 427 523 429 520 430zM512 391 515 391 514 393 512 393zM706 348 709 349 708 351 705 351zM443 425 445 426 444 427 442 427zM700 380 702 379 703 381 700 382zM682 353 684 353 684 355 682 355zM579 442 582 441 582 443 580 444zM559 404 562 404 562 406 559 406zM662 286 665 285 665 288 662 288zM659 242 662 242 662 244 659 244zM672 211 673 211 673 212 672 212zM757 291 759 290 760 292 758 293zM762 264 765 264 765 265 763 266zM729 262 731 262 731 263 729 263zM717 228 720 229 719 231 717 230zM679 263 681 263 681 265 679 264zM695 242 697 242 698 243 695 244zM773 301 775 302 774 303 773 302zM758 271 759 272 758 273 757 273zM685 207 687 206 687 207 685 208zM669 258 671 259 671 260 669 260zM691 212 692 211 693 212 691 213zM697 251 698 250 699 251 698 252zM704 230 706 230 706 232 704 232zM689 239 690 240 690 241 688 240zM774 310 776 311 776 313 774 312zM759 296 760 296 761 297 759 297zM681 305 684 304 684 306 682 307zM661 271 663 271 663 272 662 273zM760 274 762 274 763 275 761 276zM747 211 750 211 750 213 748 213zM708 252 710 252 709 254 707 253zM747 249 748 249 749 250 747 250zM668 285 671 285 670 288 667 287zM691 294 693 294 693 295 691 296zM724 237 726 237 726 238 724 238zM679 204 680 204 680 205 679 205zM677 252 679 253 679 255 677 254zM758 300 759 301 759 303 757 302zM742 304 745 304 745 307 742 306zM750 247 752 246 753 248 750 248zM734 220 736 220 736 221 735 221zM749 259 750 260 750 261 748 260zM771 278 774 277 774 279 771 280zM661 279 663 280 662 282 660 281zM692 235 695 234 695 236 693 237zM676 242 678 244 677 245 675 244zM680 224 682 223 683 225 680 226zM729 242 731 243 731 245 729 244zM690 267 691 267 691 268 689 268zM735 235 736 235 736 236 735 236zM716 227 717 228 717 229 715 228zM660 197 661 198 661 199 659 198zM737 310 740 311 739 313 737 312zM745 281 748 282 748 283 745 283zM694 202 695 203 695 204 694 203zM755 306 757 306 757 308 754 308zM690 233 692 233 692 235 690 235zM722 280 725 279 725 281 722 282zM711 268 714 267 715 269 712 270zM617 243 619 243 620 245 617 246zM692 325 694 324 695 326 692 326zM609 304 612 303 612 306 609 306zM743 329 746 329 746 331 743 332zM679 318 682 316 683 318 680 320zM654 271 655 272 655 273 653 272zM632 276 635 276 635 278 632 278zM662 322 664 324 663 325 661 324zM657 284 661 285 660 288 656 287zM634 266 638 267 637 270 634 269zM644 308 647 307 648 309 645 311zM646 322 648 323 648 324 646 324zM637 330 640 330 640 332 637 332zM659 319 661 318 662 319 660 320zM629 272 630 271 631 273 629 273zM700 331 703 330 704 332 701 333zM665 328 668 326 669 329 666 330zM627 274 629 273 629 275 627 275zM656 251 659 253 658 256 655 254zM706 341 708 341 708 343 706 343zM609 257 613 256 614 258 611 260zM624 313 626 313 626 315 624 315zM658 331 660 331 659 333 657 332zM626 315 628 314 629 316 627 317zM627 281 629 281 628 282 627 282zM667 332 670 330 671 332 668 334zM614 251 617 249 618 252 615 253zM638 315 640 314 641 316 638 317zM767 332 769 331 769 333 767 333zM791 328 795 329 795 332 790 332zM790 321 794 323 793 326 789 324zM842 351 845 351 844 353 842 353zM793 330 796 330 796 332 793 333zM728 179 730 180 729 181 728 180zM692 177 695 177 696 179 693 180zM690 174 693 173 694 175 691 176zM705 174 707 175 707 177 704 176zM694 162 698 163 697 165 694 165zM730 179 732 178 732 180 730 180zM701 191 703 192 703 194 700 193zM697 174 700 176 700 178 696 177zM716 176 719 176 718 178 716 177zM430 212 433 211 433 213 431 214zM512 257 514 256 514 258 512 258zM472 236 475 237 474 239 472 238zM433 230 435 230 435 230 433 231zM493 275 495 275 495 276 493 277zM475 232 478 233 477 235 475 235zM481 269 483 270 482 272 480 271zM484 250 486 248 487 250 485 251zM468 238 470 237 470 238 469 239zM434 214 436 214 437 215 435 216zM455 213 457 213 458 215 455 215zM432 218 433 218 433 219 432 219zM455 220 457 220 457 221 455 221zM504 257 507 257 506 260 504 259zM504 259 506 258 507 260 505 261zM445 254 447 253 447 255 445 255zM485 269 487 269 487 271 485 270zM470 268 472 267 472 269 471 269zM449 237 451 237 451 238 450 238zM425 223 427 223 427 225 424 225zM474 254 477 253 477 255 475 256zM435 216 437 216 437 217 435 217zM431 209 432 209 432 210 431 210zM464 261 467 261 467 263 464 263zM512 251 515 252 514 254 512 253zM497 277 499 277 499 279 497 278zM452 266 454 267 454 269 451 269zM484 254 485 253 486 255 484 256zM469 234 471 234 471 236 469 236zM450 224 452 223 452 224 451 225zM437 209 439 210 438 212 436 211zM441 261 443 260 444 262 442 262zM437 230 440 231 439 233 436 232zM468 216 470 216 470 218 468 218zM439 236 442 236 442 238 439 238zM477 268 479 268 479 270 477 269zM438 239 439 239 439 240 438 240zM478 231 480 230 480 231 479 232zM509 272 511 271 512 272 510 273zM467 260 470 258 471 260 468 262zM493 235 495 235 495 236 494 236zM500 269 502 269 502 270 500 270zM486 247 487 247 488 248 486 248zM497 250 498 250 498 251 496 251zM475 247 477 246 477 247 476 248zM491 227 494 226 494 228 491 229zM463 220 465 220 465 222 463 222zM512 250 514 250 513 252 512 252zM449 258 451 258 452 260 449 260zM490 248 492 248 491 250 489 249zM419 212 421 211 422 212 420 213zM433 223 434 223 435 224 433 224zM455 236 457 236 457 237 456 237zM456 229 459 229 459 231 456 231zM438 222 440 222 440 223 438 223zM488 273 490 273 491 274 488 275zM511 272 512 272 512 274 510 273zM447 213 450 213 450 215 448 215zM461 225 462 224 463 225 462 226zM882 403 885 402 886 404 883 405zM862 428 865 429 865 431 861 431zM848 413 850 413 850 415 848 415zM857 405 860 404 860 406 857 407zM844 389 846 390 846 391 844 390zM915 427 917 427 917 429 914 429zM889 416 892 418 891 420 888 418zM854 434 858 434 858 437 854 437zM821 395 823 396 823 398 820 397zM872 422 875 421 876 423 873 424zM834 394 837 395 836 397 834 396zM915 457 917 458 916 460 914 459zM835 386 836 387 836 388 835 387zM872 391 874 391 874 393 872 393zM852 432 854 433 853 434 852 433zM881 396 884 396 883 399 880 398zM874 437 875 437 876 438 874 439zM843 396 844 397 844 398 842 398zM898 453 901 453 901 455 898 456zM881 419 884 420 883 422 881 421zM822 415 824 415 824 417 822 417zM811 406 813 406 813 408 811 408zM847 449 849 449 850 450 848 451zM889 452 891 453 891 455 888 454zM908 439 911 440 910 442 908 441zM846 455 848 455 848 456 847 456zM850 423 852 424 851 425 849 425zM875 440 878 439 878 441 875 442zM813 411 816 410 817 412 814 413zM859 401 860 400 861 401 859 402zM823 448 825 447 825 448 823 449zM831 453 834 454 834 457 830 456zM1018 219 1020 218 1021 219 1019 221zM1054 231 1056 232 1055 233 1054 233zM1012 204 1015 203 1015 205 1013 205zM1011 187 1012 187 1012 188 1011 188zM1042 202 1045 202 1045 204 1042 204zM1095 233 1097 233 1096 234 1095 233zM1023 199 1025 200 1024 202 1022 201zM1081 242 1082 242 1083 243 1081 244zM1010 214 1012 214 1011 215 1010 215zM1047 194 1049 195 1049 196 1047 196zM1088 221 1091 221 1091 223 1089 223zM1067 236 1069 236 1068 237 1066 237zM1017 219 1019 219 1019 220 1017 220zM1045 224 1047 225 1047 226 1045 226zM991 205 994 205 994 207 992 207zM1032 207 1034 207 1034 208 1032 209zM998 170 1000 170 1000 171 998 171zM1034 214 1037 214 1036 216 1034 215zM1075 226 1076 225 1077 226 1075 227zM1036 194 1038 194 1039 196 1036 196zM1049 217 1051 218 1051 219 1049 219zM1039 185 1041 184 1042 186 1040 186zM1010 207 1011 206 1012 207 1010 208zM1039 206 1041 205 1042 207 1039 208zM1046 217 1048 216 1049 218 1047 219zM1051 186 1054 186 1054 188 1051 188zM1050 185 1052 186 1052 187 1050 187zM1059 233 1060 232 1060 234 1059 234zM1048 192 1050 193 1050 195 1047 194zM1019 189 1021 189 1021 190 1020 190zM1077 212 1078 212 1078 214 1076 213zM1075 222 1077 221 1078 223 1076 223zM1019 173 1021 174 1021 175 1019 175zM1010 207 1012 208 1011 209 1009 208zM1087 238 1089 237 1090 239 1088 240zM1053 190 1055 190 1055 192 1053 192zM1087 241 1088 241 1088 242 1087 242zM1093 214 1095 215 1094 217 1092 216zM1046 211 1048 211 1048 213 1046 213zM1049 219 1050 219 1050 221 1048 220zM1032 213 1034 212 1035 214 1033 215zM1047 192 1049 191 1050 193 1047 193zM1040 198 1042 198 1043 199 1041 200zM990 206 991 206 991 207 990 207zM1059 230 1061 230 1060 231 1059 231zM1027 189 1029 189 1029 190 1027 191zM1085 220 1087 221 1087 222 1085 222zM978 200 980 200 980 201 978 202zM1040 224 1042 224 1042 226 1040 226zM1038 177 1039 176 1039 177 1038 178zM1020 208 1021 208 1021 209 1019 209zM1039 183 1040 183 1040 184 1039 184zM1029 210 1031 210 1032 211 1030 211zM1078 209 1081 209 1081 211 1078 211zM992 213 994 212 994 214 993 214zM985 216 986 216 986 217 985 217zM1038 181 1039 181 1039 182 1038 183zM1052 186 1055 186 1055 188 1052 188zM1029 200 1031 199 1031 201 1030 201zM988 224 989 224 989 225 987 225zM998 168 999 169 999 170 997 170zM984 213 985 212 986 214 984 214zM1047 212 1048 213 1048 214 1047 214zM1063 220 1065 221 1064 222 1063 222zM1033 188 1035 189 1034 190 1033 189zM1010 176 1012 176 1012 177 1011 178zM1035 214 1037 214 1037 215 1035 215zM1039 217 1041 217 1041 218 1039 218zM1041 182 1043 183 1042 184 1041 183zM1038 189 1040 190 1039 191 1038 191zM1049 219 1050 219 1051 220 1050 220zM1027 194 1029 193 1029 194 1028 195zM1050 182 1051 182 1051 183 1050 183zM1000 191 1003 190 1003 192 1001 193zM1042 188 1044 188 1044 190 1042 190zM1016 200 1018 200 1018 202 1016 202zM980 206 982 205 983 207 980 207zM1081 237 1082 237 1082 238 1081 238zM1022 211 1024 211 1024 213 1022 213zM994 189 996 190 995 192 993 191zM997 185 999 185 998 187 996 186zM1023 186 1025 185 1025 187 1023 187zM1031 211 1033 211 1033 212 1032 212zM987 183 989 184 988 185 986 185zM1017 210 1020 209 1020 211 1018 211zM995 177 997 178 996 180 994 179zM1059 220 1061 220 1061 221 1059 221zM1035 223 1036 223 1036 224 1035 224zM1012 194 1014 193 1014 195 1012 195zM1073 216 1074 216 1074 217 1073 217zM1021 213 1024 213 1024 215 1021 215zM1017 199 1019 199 1018 201 1016 200zM1105 224 1107 225 1106 227 1104 226zM1092 234 1094 233 1094 235 1092 235zM1030 181 1032 180 1033 182 1031 183zM992 178 994 178 994 179 993 179zM1067 204 1068 204 1068 206 1066 205zM998 178 1000 179 1000 180 997 180zM1074 233 1075 233 1075 234 1074 234zM982 208 984 209 983 210 982 209zM1079 238 1081 237 1082 239 1079 240zM1073 206 1075 206 1075 208 1073 207zM1015 201 1017 202 1016 204 1014 203zM978 199 979 198 980 199 978 200zM981 223 983 224 982 226 980 225zM1077 235 1079 235 1079 236 1077 237zM963 208 965 208 965 209 964 209zM1067 219 1069 220 1068 221 1066 220zM1527 321 1529 321 1530 322 1528 323zM1507 350 1509 352 1508 353 1506 352zM1478 344 1479 344 1479 345 1478 345zM1490 366 1492 366 1492 367 1490 368zM1535 308 1537 307 1538 309 1535 310zM1475 318 1477 319 1476 320 1475 319zM1450 335 1452 334 1452 336 1450 336zM1515 342 1517 342 1517 343 1515 344zM1496 327 1498 326 1499 328 1497 328zM1469 349 1472 349 1472 351 1469 351zM1460 303 1462 303 1463 305 1460 305zM1537 362 1539 362 1539 363 1537 364zM1494 297 1496 296 1496 297 1495 298zM1448 351 1449 352 1449 353 1447 352zM1500 324 1502 323 1503 325 1501 326zM1462 297 1464 297 1464 298 1462 299zM1535 294 1538 294 1538 296 1535 296zM1483 346 1485 346 1485 348 1482 347zM1455 292 1457 293 1457 294 1455 294zM1485 292 1487 292 1487 293 1485 293zM1447 340 1448 340 1449 340 1447 341zM1458 296 1460 297 1459 298 1457 297zM1447 306 1448 305 1449 307 1447 307zM1490 299 1492 299 1492 301 1489 301zM1529 347 1531 347 1531 349 1529 349zM1542 363 1545 363 1545 365 1542 365zM1467 352 1469 353 1468 354 1466 354zM1442 306 1443 306 1443 307 1442 307zM1545 338 1546 338 1546 339 1545 339zM1494 306 1496 305 1496 306 1495 307zM1511 321 1512 320 1513 322 1511 323zM1486 357 1487 357 1487 358 1486 358zM1524 359 1527 358 1527 360 1525 361zM1482 317 1484 317 1485 318 1483 319zM1507 318 1509 319 1508 320 1506 320zM1511 325 1513 325 1513 327 1511 327zM1510 335 1512 335 1512 337 1510 337zM1480 346 1482 345 1483 347 1480 347zM1543 306 1545 305 1546 307 1544 308zM1516 304 1518 303 1519 305 1517 305zM1492 362 1493 362 1493 363 1492 363zM1536 300 1538 300 1538 302 1536 301zM1462 344 1464 344 1464 345 1462 346zM1503 318 1505 319 1504 320 1503 319zM1506 303 1508 302 1508 304 1506 304zM1499 335 1501 334 1501 336 1500 336zM1533 353 1536 353 1536 354 1534 355zM1527 298 1529 296 1530 298 1528 299zM1521 366 1523 366 1523 367 1522 367zM1497 298 1499 298 1499 299 1497 300zM1456 307 1457 307 1457 308 1456 308zM1477 312 1479 311 1479 312 1477 313zM1542 340 1544 340 1544 342 1542 342zM1473 306 1475 307 1475 308 1473 308zM1489 363 1490 362 1491 363 1489 364zM1492 321 1494 320 1494 322 1493 322zM1531 318 1533 318 1533 319 1531 319zM1517 321 1519 322 1518 323 1517 323zM1472 334 1474 334 1474 336 1472 336zM1514 356 1516 357 1515 358 1513 357zM1194 309 1196 308 1196 309 1195 310zM1170 300 1172 300 1172 301 1170 302zM1212 295 1214 295 1215 296 1213 296zM1175 297 1178 296 1178 298 1176 299zM1217 307 1219 306 1219 308 1217 309zM1217 289 1218 289 1219 290 1217 290zM1178 285 1180 285 1180 287 1178 287zM1240 294 1242 294 1242 296 1240 296zM1241 287 1243 286 1243 288 1241 288zM1224 309 1226 309 1226 311 1224 311zM1184 308 1186 309 1185 311 1183 310zM1188 292 1190 293 1189 295 1187 294zM1211 289 1212 290 1212 291 1210 291zM1228 296 1231 295 1231 297 1229 298zM1182 294 1184 293 1184 294 1182 295zM1233 299 1235 298 1235 300 1233 300zM1172 291 1174 292 1173 293 1172 293zM1211 311 1213 312 1213 313 1211 313zM1180 302 1182 302 1182 303 1181 303zM1171 301 1174 301 1173 303 1171 303zM1213 315 1215 316 1215 317 1213 317zM1216 306 1218 305 1219 306 1216 307zM1232 287 1235 286 1235 287 1233 289zM1237 313 1239 313 1239 315 1237 314zM1196 314 1198 314 1197 315 1196 315zM1247 305 1249 306 1248 308 1246 307zM1185 304 1188 304 1188 306 1185 306zM434 422 436 423 435 425 433 424zM428 436 430 436 430 437 429 438zM374 451 375 450 376 451 375 452zM360 429 362 429 362 431 359 431zM335 405 337 406 336 408 334 407zM380 454 382 453 383 455 381 456zM412 435 414 436 413 438 411 437zM377 410 379 410 379 412 377 412zM399 436 401 435 401 436 400 437zM355 427 357 426 358 427 356 428zM348 411 350 410 350 412 348 412zM422 406 424 407 424 408 422 408zM429 417 431 417 430 418 429 418zM452 437 455 438 455 440 452 440zM405 445 407 446 407 447 405 447zM352 422 354 422 354 423 352 424zM417 453 420 453 420 455 417 455zM447 448 449 447 450 449 448 449zM431 444 433 444 433 446 431 445zM340 413 342 412 343 414 340 414zM433 454 436 453 436 455 434 456zM449 441 451 441 451 442 448 442zM428 450 430 449 431 451 429 452zM356 445 359 446 358 448 356 447zM401 437 404 435 404 437 402 438zM500 380 502 379 503 380 501 382zM552 312 554 312 554 313 552 314zM513 348 516 347 516 349 514 350zM558 334 561 333 561 335 559 335zM564 313 566 314 565 316 563 315zM560 337 562 338 562 339 560 339zM540 318 541 318 541 319 539 319zM519 361 522 361 522 363 519 363zM554 360 556 360 556 361 554 362zM597 322 599 323 598 324 597 324zM562 315 564 314 565 316 563 317zM559 342 561 341 562 343 560 344zM599 328 601 328 601 329 599 329zM567 314 569 313 570 315 567 316zM520 360 521 360 522 361 520 361zM565 360 567 361 566 362 564 362zM535 371 537 370 538 372 535 373zM590 325 591 325 591 326 590 326zM540 374 541 374 541 376 539 375zM596 311 598 311 598 312 597 312zM524 382 526 381 526 383 524 383zM535 375 538 375 537 377 535 377zM596 340 598 339 599 340 596 341z"/>
<path fill="#5d574d" opacity="0.5" d="M554 397 557 397 557 399 555 399zM741 455 742 455 743 456 741 457zM771 449 774 448 775 450 772 451zM554 400 555 400 555 401 554 401zM755 436 757 436 757 438 755 438zM524 429 525 429 526 430 524 430zM498 445 500 445 501 446 499 446zM698 349 701 350 700 352 697 351zM554 404 557 402 558 404 555 406zM608 422 610 422 610 424 608 424zM654 380 656 380 656 382 654 382zM663 431 666 431 666 433 663 433zM698 352 700 353 699 354 697 354zM782 369 785 370 784 373 781 372zM692 374 693 375 693 376 691 375zM689 380 691 380 691 382 689 382zM682 355 685 356 684 358 681 357zM758 403 761 402 761 404 758 405zM713 395 714 395 715 396 714 397zM631 452 634 453 633 455 630 454zM759 342 761 341 762 343 759 344zM680 439 682 440 681 442 679 441zM497 407 500 409 499 411 496 409zM744 386 747 387 746 389 743 387zM680 411 682 411 682 412 681 413zM678 369 680 369 680 370 679 370zM670 393 673 392 673 394 671 395zM567 391 569 391 569 392 567 392zM723 373 726 374 725 376 722 376zM688 379 691 380 690 382 688 381zM719 448 720 448 720 449 719 449zM714 433 715 433 716 434 714 434zM455 454 456 454 456 455 455 455zM793 369 796 369 796 371 793 371zM703 387 704 387 704 389 703 389zM700 380 702 380 702 382 700 382zM758 348 760 349 759 350 757 349zM748 398 751 398 750 400 748 399zM619 441 620 441 620 442 619 442zM490 420 493 421 492 423 489 422zM675 410 677 409 678 411 675 412zM435 445 438 444 438 446 436 447zM433 448 436 448 436 450 433 450zM764 387 766 387 767 388 765 389zM531 422 533 423 533 425 530 424zM745 423 748 423 748 425 745 425zM715 390 718 389 718 391 716 392zM656 374 658 373 659 375 656 376zM724 369 727 369 726 371 724 371zM672 390 675 389 676 391 673 392zM464 406 466 405 467 407 465 408zM780 367 782 367 782 368 780 368zM534 429 536 430 536 432 533 431zM559 400 562 401 561 403 558 402zM450 448 452 448 452 450 450 449zM752 386 754 387 754 388 752 388zM798 445 801 446 800 448 798 447zM760 410 762 410 762 412 760 412zM495 404 498 403 498 405 496 406zM785 424 787 425 786 427 784 426zM612 424 613 424 613 425 611 425zM652 379 653 380 652 381 651 380zM758 424 761 424 761 427 758 426zM480 446 482 446 482 447 480 447zM781 338 783 339 782 340 780 339zM490 450 493 449 493 450 491 451zM787 379 790 378 790 380 788 380zM531 454 534 454 534 457 531 457zM744 393 746 392 746 394 744 394zM764 434 765 434 765 435 763 435zM701 361 703 362 703 363 701 363zM788 360 790 361 790 363 787 362zM491 460 492 460 492 462 490 462zM794 431 796 431 795 433 793 432zM710 396 712 396 711 398 709 397zM709 414 711 413 711 415 709 415zM511 391 513 392 512 394 510 393zM555 446 558 448 557 450 555 448zM563 426 565 425 566 427 563 428zM800 455 803 456 802 457 800 457zM574 423 576 422 577 424 575 424zM645 423 646 422 647 423 645 424zM554 445 556 445 556 447 554 446zM481 414 483 414 482 415 481 415zM441 459 442 458 443 459 441 460zM596 429 598 429 598 431 596 431zM691 438 693 439 692 440 691 439zM571 439 573 438 574 440 572 441zM463 459 466 460 465 462 463 461zM786 347 788 346 788 348 786 348zM634 438 635 437 636 438 634 439zM441 441 444 442 444 444 441 443zM787 423 789 423 789 425 787 424zM466 452 469 451 469 453 467 454zM565 441 567 441 567 442 565 443zM762 358 765 357 765 360 762 360zM764 384 766 384 766 386 763 386zM739 381 742 382 741 384 739 383zM774 373 776 373 776 375 775 375zM692 454 694 453 695 455 693 456zM571 426 573 425 574 427 572 428zM700 458 702 459 702 461 700 460zM724 390 726 389 727 391 725 392zM601 429 604 430 604 432 601 432zM571 446 574 446 574 447 571 448zM664 382 666 381 666 383 664 383zM662 434 664 435 664 436 662 436zM498 395 499 395 500 396 498 396zM734 400 736 399 737 400 735 401zM786 364 789 365 788 367 785 367zM495 424 498 424 498 426 495 426zM566 443 569 444 568 446 566 445zM644 415 646 415 646 416 644 416zM687 441 689 442 688 444 686 443zM532 390 535 391 534 393 531 392zM557 456 558 456 559 457 557 457zM652 433 655 433 655 435 652 435zM487 425 490 426 489 428 486 427zM451 459 452 459 451 460 450 460zM754 358 756 358 756 360 754 360zM565 394 567 395 567 397 564 396zM532 424 534 424 533 426 531 425zM463 437 465 438 464 439 462 439zM665 411 667 412 666 414 664 413zM585 404 586 404 587 405 585 405zM719 422 720 421 721 422 719 423zM495 420 497 419 498 421 496 421zM717 422 720 422 720 424 717 425zM731 366 734 366 734 368 731 368zM780 442 783 441 783 443 781 444zM781 371 783 371 783 372 782 372zM754 440 756 439 756 441 755 441zM562 452 563 452 563 453 562 453zM618 455 619 455 619 456 618 456zM598 424 600 424 600 425 597 425zM814 365 816 366 815 367 814 367zM691 428 693 427 694 428 692 429zM558 453 560 454 559 456 557 455zM510 429 512 430 512 432 509 431zM531 446 532 447 532 448 530 447zM544 411 547 412 546 414 543 413zM658 350 660 351 660 352 658 352zM651 420 654 421 653 423 651 422zM786 344 789 345 788 347 785 346zM748 332 751 332 751 334 748 334zM699 374 702 374 702 376 699 377zM690 347 693 347 693 349 690 349zM787 358 789 358 789 360 787 360zM542 391 544 391 544 392 542 392zM781 381 782 381 782 382 781 382zM440 452 442 452 442 453 440 453zM516 438 518 439 518 440 516 440zM592 409 594 408 595 410 593 411zM761 360 763 360 763 361 761 362zM568 429 569 429 569 431 568 430zM511 430 514 429 514 431 512 431zM508 394 509 395 509 396 507 395zM664 347 666 346 666 347 665 348zM459 457 462 458 461 460 459 459zM608 447 610 448 610 450 607 449zM684 352 686 353 685 354 683 354zM649 429 651 429 651 430 650 430zM697 389 699 390 699 392 696 391zM490 398 493 398 492 400 490 400zM475 430 477 429 477 430 476 431zM604 418 606 418 606 419 605 419zM679 459 681 458 682 459 679 461zM764 447 767 447 767 449 764 449zM685 419 687 419 686 420 685 420zM734 352 737 353 736 355 734 354zM436 445 438 445 438 446 436 446zM762 371 764 370 765 372 763 373zM443 413 445 413 445 415 442 415zM728 454 730 454 730 455 729 455zM552 415 554 415 554 417 551 417zM777 352 780 353 779 355 776 354zM616 432 617 431 618 432 616 433zM554 450 556 450 556 452 554 452zM765 415 768 414 769 417 766 417zM671 432 674 433 673 435 671 434zM502 453 504 453 503 454 502 454zM548 451 550 452 549 453 547 453zM743 416 744 415 745 416 743 417zM778 342 779 341 780 343 778 343zM720 444 723 445 722 447 720 446zM797 358 799 358 799 360 797 360zM759 356 761 357 760 358 758 357zM775 375 778 376 777 378 775 377zM566 425 568 426 567 427 565 427zM734 383 736 383 735 385 733 384zM487 451 489 452 489 453 487 453zM710 450 711 450 711 451 710 451zM773 419 774 420 774 421 772 420zM770 460 771 460 771 461 770 461zM588 421 590 420 591 422 589 423zM703 394 706 395 706 397 703 397zM683 433 685 432 685 434 684 434zM668 383 671 382 671 384 669 385zM496 434 498 434 499 436 497 436zM510 410 512 410 512 411 510 412zM773 357 776 357 775 359 773 359zM792 369 793 369 793 370 792 370zM540 435 542 435 542 437 540 437zM632 442 634 442 634 443 632 443zM577 407 580 407 580 409 577 409zM676 431 679 431 679 434 676 434zM724 395 726 394 727 395 725 397zM793 389 795 389 795 390 793 390zM674 345 676 347 675 348 673 347zM552 448 554 447 555 449 552 450zM668 366 670 366 670 367 668 367zM453 417 456 417 455 419 453 419zM693 266 694 265 695 267 693 268zM680 197 682 196 683 198 681 198zM707 239 709 239 709 240 707 240zM736 301 738 300 738 301 736 302zM745 267 748 266 748 268 745 269zM719 319 721 320 720 321 719 320zM671 213 673 214 673 216 671 215zM662 260 664 261 663 262 661 261zM662 224 664 224 664 226 661 226zM681 210 683 209 683 211 681 211zM682 250 684 251 684 253 682 252zM695 276 697 276 697 278 694 278zM713 230 715 230 715 231 713 232zM678 228 680 227 681 228 679 229zM714 287 717 286 717 289 714 289zM753 310 756 311 755 313 752 312zM665 267 667 265 669 267 666 269zM672 201 674 200 675 202 673 203zM702 247 704 248 703 250 701 249zM689 219 692 220 691 222 689 221zM735 217 737 217 737 219 735 219zM753 273 754 273 754 274 753 274zM741 253 743 253 742 255 740 254zM756 309 759 310 758 312 755 311zM696 255 698 256 698 257 696 257zM772 291 774 290 775 292 772 293zM705 295 707 296 706 298 704 297zM735 277 737 277 737 278 735 278zM673 244 675 245 674 247 672 246zM775 318 777 318 776 320 775 319zM684 294 686 294 686 296 684 295zM720 252 723 252 723 254 721 254zM764 319 766 319 766 321 764 320zM724 299 726 300 726 302 723 302zM746 262 748 262 748 263 746 264zM699 261 701 262 701 263 699 263zM769 310 771 310 770 311 769 311zM676 200 677 201 677 202 675 202zM765 235 768 236 767 238 764 237zM733 261 734 262 733 263 732 262zM684 253 687 252 687 254 685 255zM706 261 708 260 708 262 706 262zM687 229 689 229 689 230 687 231zM688 255 690 255 690 256 688 256zM701 202 702 202 702 203 701 203zM685 299 686 299 686 301 684 300zM701 312 703 313 703 314 701 313zM659 261 662 261 662 264 659 264zM754 259 755 259 755 260 753 260zM716 241 719 241 719 244 716 243zM727 233 730 232 730 235 728 235zM728 241 730 240 730 241 729 242zM732 306 734 307 733 309 731 308zM683 295 685 295 685 296 683 297zM725 212 728 211 728 213 726 214zM740 311 743 310 744 312 741 313zM720 308 723 308 722 310 719 310zM758 296 761 296 761 298 758 298zM707 302 709 303 709 305 706 304zM739 312 741 313 740 314 738 314zM767 251 769 252 768 254 766 253zM760 288 761 288 761 290 759 290zM703 306 704 305 704 306 703 307zM685 318 687 318 686 320 684 319zM646 264 650 265 649 267 645 267zM710 335 714 334 715 337 711 339zM636 262 639 262 639 264 636 265zM652 264 654 265 653 267 651 266zM688 319 691 321 690 323 687 321zM677 335 680 333 681 336 678 337zM660 337 663 335 664 338 661 339zM630 310 633 312 632 315 628 313zM650 338 652 338 652 340 650 340zM737 332 739 333 738 334 736 333zM708 340 712 340 712 342 709 342zM626 294 628 293 628 294 627 295zM679 329 682 329 682 331 679 331zM668 324 671 325 670 328 667 327zM658 295 661 295 661 297 658 297zM652 247 654 248 653 249 651 248zM732 332 733 332 733 334 732 333zM624 314 627 312 629 315 625 317zM650 257 654 256 654 260 650 260zM614 244 618 244 618 247 614 247zM621 265 624 266 624 268 620 267zM630 300 633 299 633 301 631 302zM617 269 619 268 620 270 617 270zM628 245 629 246 629 247 628 246zM653 257 657 259 656 262 652 260zM642 290 644 290 644 291 642 291zM635 343 638 342 639 344 636 345zM627 247 631 248 630 251 626 250zM658 314 662 315 660 318 657 316zM615 282 616 283 616 284 615 283zM600 251 604 252 604 255 600 254zM710 338 713 339 712 341 709 340zM603 261 606 261 606 263 603 263zM641 306 643 307 642 308 641 308zM802 344 806 345 806 348 802 348zM840 347 841 347 842 348 840 348zM843 352 845 351 845 352 844 353zM821 352 824 352 824 354 821 354zM832 342 835 341 836 344 833 345zM820 345 822 346 822 347 820 346zM836 346 839 348 838 350 835 348zM807 328 809 329 808 330 807 329zM838 352 842 353 842 355 838 355zM835 353 839 354 839 357 834 356zM770 326 774 327 773 330 769 329zM788 333 790 334 789 335 788 334zM772 331 774 330 774 332 772 332zM795 328 797 329 797 330 795 330zM814 341 815 341 816 342 815 342zM819 334 822 335 822 337 819 336zM753 329 755 330 755 332 753 331zM706 184 708 185 707 186 705 186zM695 179 699 179 698 182 695 182zM688 180 691 179 693 181 689 183zM717 179 720 178 721 180 717 181zM733 190 734 190 735 191 733 191zM442 234 444 236 443 238 441 236zM488 221 490 222 489 224 487 223zM449 240 450 240 450 242 448 241zM504 245 505 245 506 246 504 246zM486 258 487 258 488 259 486 259zM430 223 432 224 432 225 430 224zM493 282 495 282 495 284 493 283zM475 273 477 274 476 275 475 274zM480 230 483 230 483 233 480 232zM487 224 489 223 490 225 488 226zM505 244 506 244 506 246 505 245zM497 264 499 263 500 265 498 266zM434 255 436 255 436 257 434 257zM432 242 435 242 435 244 432 244zM478 245 479 245 479 246 478 246zM470 268 471 269 471 270 469 269zM428 232 430 231 430 232 429 233zM491 272 492 272 492 273 491 273zM499 255 500 254 501 255 499 256zM477 258 478 258 478 259 477 259zM474 275 476 275 476 276 474 276zM488 238 490 238 490 239 488 239zM493 262 495 263 494 265 492 264zM430 244 432 244 432 246 430 246zM464 219 467 219 467 220 465 221zM479 229 481 230 481 232 479 231zM459 264 461 264 461 266 459 266zM475 261 478 260 478 262 476 263zM488 241 489 241 489 242 487 242zM425 228 427 227 428 229 426 230zM440 219 441 219 441 221 439 220zM448 239 450 239 450 241 448 240zM478 224 480 225 480 226 478 226zM437 249 440 249 440 251 438 251zM509 268 512 269 511 271 509 270zM451 255 453 255 453 256 451 256zM476 267 478 267 478 269 476 268zM424 216 427 217 426 218 424 218zM419 210 421 210 422 212 419 212zM463 252 465 252 464 253 463 253zM498 242 500 242 500 244 498 244zM428 225 429 226 429 227 428 226zM477 266 479 265 479 267 477 267zM485 269 487 268 487 270 486 270zM510 267 511 267 511 268 510 268zM431 242 433 241 434 242 432 244zM477 249 478 248 479 250 477 250zM480 232 483 232 482 234 479 234zM420 222 422 222 423 223 421 223zM426 240 428 241 428 242 425 241zM489 253 492 253 491 255 489 255zM470 253 471 253 471 254 470 254zM500 244 502 244 502 246 500 246zM489 243 492 243 492 245 490 245zM847 393 849 394 848 396 846 395zM856 414 859 414 858 417 855 416zM882 416 884 417 884 418 881 418zM834 382 836 383 836 384 834 384zM863 410 865 410 865 411 863 412zM881 430 882 430 883 431 882 431zM858 442 860 442 860 443 858 444zM846 438 847 438 847 439 845 439zM862 451 865 451 865 453 862 453zM884 401 886 400 886 401 885 402zM838 388 841 387 841 390 838 390zM906 423 909 422 910 424 907 425zM878 412 881 413 880 415 877 414zM875 409 877 408 877 409 876 410zM826 413 828 412 828 414 826 414zM819 427 821 427 820 428 819 428zM861 437 863 438 862 439 860 439zM822 386 825 386 825 388 822 388zM834 403 837 402 838 404 835 406zM823 430 825 429 826 431 824 432zM888 438 890 439 889 440 887 440zM903 438 905 437 905 438 904 439zM893 425 895 425 895 427 892 427zM871 456 873 455 874 457 872 458zM901 423 904 422 905 424 902 425zM842 410 845 410 845 412 842 412zM844 424 846 424 846 425 845 425zM859 403 862 402 863 404 860 405zM834 414 835 415 835 416 834 415zM867 411 868 410 869 412 867 413zM846 390 849 390 849 392 847 393zM856 431 859 432 859 435 856 434zM900 460 903 459 903 462 900 462zM1043 201 1046 200 1046 202 1044 203zM1053 189 1055 190 1055 192 1053 191zM1050 219 1052 218 1053 219 1051 220zM1082 231 1084 231 1084 232 1083 233zM1015 198 1017 197 1017 199 1015 199zM1064 238 1065 238 1065 239 1064 239zM1019 200 1021 200 1021 201 1019 202zM1106 228 1107 228 1107 229 1106 229zM1051 197 1054 198 1053 200 1051 199zM1059 216 1062 217 1062 219 1059 218zM1033 210 1035 210 1035 212 1033 211zM1091 215 1093 214 1094 216 1092 217zM1046 227 1047 226 1048 227 1046 228zM1080 238 1082 239 1081 240 1079 239zM1080 203 1082 204 1082 206 1080 205zM999 213 1001 214 1000 215 999 214zM992 217 994 217 994 219 991 218zM1023 214 1025 215 1025 217 1022 215zM1012 182 1014 181 1014 182 1013 183zM1033 173 1036 173 1036 174 1033 175zM1067 218 1069 218 1069 219 1068 220zM1024 189 1026 189 1026 190 1024 190zM1087 210 1089 210 1089 211 1087 211zM1094 229 1096 229 1096 231 1094 231zM1044 189 1046 189 1045 191 1043 190zM1020 185 1022 184 1022 186 1021 187zM992 172 993 171 993 173 992 173zM986 204 988 205 988 207 985 206zM1076 220 1078 220 1078 222 1077 222zM1066 201 1068 201 1068 203 1066 203zM1037 184 1039 183 1039 184 1038 185zM1027 189 1029 188 1030 189 1028 190zM1004 196 1006 195 1006 196 1005 197zM1073 240 1075 240 1075 242 1073 242zM1055 232 1057 233 1057 234 1055 233zM1039 183 1040 183 1040 184 1038 184zM995 170 997 170 997 171 995 171zM1076 209 1078 210 1077 211 1075 211zM1105 225 1107 226 1106 227 1104 227zM1028 187 1031 186 1031 188 1029 188zM1055 187 1058 187 1057 189 1055 188zM1067 236 1068 236 1068 237 1066 237zM1037 191 1039 190 1040 192 1038 193zM1037 222 1039 222 1039 223 1037 223zM1048 198 1051 200 1050 201 1047 200zM992 212 994 212 994 214 992 213zM1058 187 1060 187 1059 189 1058 188zM1005 175 1006 176 1006 177 1005 177zM1026 183 1028 182 1029 183 1027 184zM984 199 985 200 985 201 983 200zM1063 220 1065 220 1065 221 1063 221zM1045 187 1046 187 1045 188 1044 188zM978 204 979 204 979 205 978 205zM978 222 980 222 981 223 979 223zM1010 189 1013 189 1012 191 1010 191zM1083 205 1085 205 1085 207 1082 206zM1030 177 1032 176 1033 178 1031 179zM990 209 992 210 991 212 989 211zM997 177 999 176 999 178 997 178zM1045 188 1047 188 1047 189 1045 190zM1069 219 1071 219 1071 221 1069 221zM1034 192 1036 192 1036 194 1034 194zM1008 199 1010 198 1010 199 1009 200zM1023 205 1025 205 1025 207 1023 207zM1007 200 1009 199 1009 201 1008 201zM1062 201 1064 202 1064 204 1061 202zM1051 192 1053 191 1053 192 1052 193zM1062 192 1064 191 1064 192 1063 193zM1039 188 1041 188 1041 189 1040 189zM1099 227 1101 226 1101 228 1099 228zM1058 220 1060 220 1061 221 1059 222zM1013 212 1015 212 1016 214 1013 214zM1097 228 1098 228 1098 229 1097 229zM993 213 996 213 996 215 993 215zM1058 207 1060 207 1060 209 1058 209zM1002 182 1004 183 1003 184 1002 183zM974 209 976 209 976 211 974 211zM1006 197 1007 198 1007 199 1005 198zM1030 196 1033 198 1032 199 1029 198zM1045 199 1047 199 1047 200 1045 200zM1033 219 1034 218 1035 220 1033 220zM989 186 991 187 990 188 988 188zM1073 242 1075 242 1075 244 1073 244zM1048 194 1050 194 1050 195 1048 196zM970 203 972 204 971 206 969 205zM1003 209 1006 209 1006 211 1003 211zM1102 225 1103 225 1104 226 1103 226zM1008 190 1010 190 1010 191 1009 191zM1084 208 1087 208 1087 210 1085 210zM1033 211 1034 211 1034 212 1032 212zM1009 206 1010 207 1010 208 1009 207zM993 179 994 178 995 180 993 180zM1033 209 1035 210 1035 212 1033 211zM983 222 985 222 985 224 983 224zM1081 211 1082 211 1082 212 1081 212zM1002 182 1004 182 1004 183 1003 183zM1090 229 1092 228 1093 230 1090 231zM1088 225 1089 225 1089 226 1088 226zM1085 233 1086 232 1087 233 1085 234zM1476 316 1477 316 1477 317 1476 317zM1544 359 1545 359 1546 360 1544 361zM1504 353 1507 353 1506 355 1504 355zM1491 320 1493 320 1494 321 1492 322zM1454 348 1455 349 1455 350 1453 349zM1474 360 1476 360 1476 362 1474 362zM1506 361 1509 361 1509 363 1506 363zM1473 360 1475 359 1475 361 1473 361zM1483 310 1485 311 1484 312 1483 311zM1542 370 1543 369 1544 370 1542 371zM1541 347 1542 348 1542 349 1540 348zM1509 334 1511 334 1511 336 1510 336zM1507 365 1508 365 1508 367 1507 367zM1480 335 1481 335 1481 336 1480 336zM1466 299 1468 298 1468 299 1466 300zM1499 317 1501 317 1501 319 1499 318zM1477 329 1479 329 1479 331 1477 331zM1540 308 1542 308 1542 310 1540 310zM1542 366 1544 366 1544 367 1543 367zM1498 354 1500 355 1499 356 1497 355zM1536 296 1537 296 1537 298 1536 298zM1449 317 1450 317 1451 318 1449 318zM1478 318 1480 319 1480 320 1478 320zM1514 311 1516 310 1517 312 1515 313zM1492 340 1494 340 1494 342 1492 341zM1502 305 1504 305 1504 306 1502 306zM1483 299 1486 299 1486 301 1484 301zM1508 363 1510 363 1510 364 1508 364zM1461 300 1463 300 1463 302 1461 301zM1477 320 1479 320 1479 321 1477 321zM1504 317 1506 316 1507 318 1505 319zM1483 305 1485 305 1485 306 1483 307zM1495 355 1497 356 1496 357 1495 356zM1471 320 1474 320 1473 322 1471 321zM1462 351 1465 351 1465 353 1463 353zM1518 294 1520 294 1520 295 1519 296zM1485 304 1487 305 1486 306 1485 305zM1470 364 1471 365 1471 366 1469 366zM1525 330 1527 330 1527 331 1525 331zM1455 298 1457 297 1458 299 1456 300zM1522 295 1524 295 1524 296 1522 297zM1504 321 1505 320 1506 321 1504 322zM1445 325 1447 324 1448 326 1446 327zM1460 320 1461 321 1461 322 1460 321zM1458 357 1460 357 1460 358 1458 358zM1510 308 1513 308 1513 310 1510 310zM1447 293 1449 293 1449 294 1447 295zM1526 330 1527 331 1527 332 1525 331zM1544 348 1546 347 1547 348 1545 350zM1451 352 1453 352 1453 354 1451 354zM1483 352 1485 353 1484 354 1483 353zM1478 354 1480 354 1479 356 1477 355zM1509 346 1511 345 1512 346 1510 347zM1235 313 1237 313 1238 315 1235 315zM1173 304 1174 304 1175 305 1173 306zM1185 311 1187 312 1186 313 1185 312zM1221 309 1223 309 1223 311 1221 311zM1208 301 1210 301 1210 302 1208 302zM1202 293 1203 293 1203 294 1202 294zM1234 291 1235 291 1235 292 1234 292zM1227 287 1229 287 1229 288 1227 289zM1225 289 1227 290 1226 291 1225 291zM1168 288 1170 288 1170 290 1168 289zM1198 307 1200 308 1199 309 1197 309zM1203 310 1204 309 1205 311 1203 311zM1225 315 1227 315 1226 317 1224 316zM1212 318 1214 318 1213 320 1212 319zM1195 302 1197 302 1197 303 1195 303zM1193 306 1194 307 1194 308 1192 308zM1165 304 1167 305 1167 307 1165 306zM1203 296 1205 297 1205 298 1202 298zM1179 292 1181 293 1180 294 1179 293zM1171 287 1173 286 1174 288 1172 289zM1223 297 1225 297 1225 298 1223 299zM1241 291 1244 290 1244 292 1242 293zM1167 297 1169 298 1168 299 1166 299zM1221 294 1223 293 1224 295 1222 296zM1172 300 1174 300 1174 301 1173 302zM1196 318 1198 318 1198 319 1196 320zM1220 288 1222 288 1222 289 1220 289zM1179 300 1181 300 1182 301 1180 302zM1186 315 1188 315 1188 316 1186 317zM1247 294 1249 295 1249 296 1247 296zM368 453 370 453 370 455 368 455zM350 396 352 396 352 398 350 398zM396 455 398 454 399 456 396 457zM402 428 404 427 405 429 402 430zM372 433 373 432 374 433 372 434zM417 414 418 414 418 415 417 415zM378 401 380 400 380 402 379 402zM424 413 425 413 425 414 424 414zM376 442 379 443 378 445 376 444zM367 425 369 425 369 425 368 426zM447 452 449 452 449 453 447 453zM442 455 444 455 444 457 442 457zM422 420 424 420 423 421 422 421zM353 431 354 431 354 433 352 432zM362 441 363 442 363 444 361 443zM413 439 414 439 414 440 413 440zM364 446 366 445 367 447 364 447zM397 415 399 415 399 416 397 416zM361 419 363 419 363 421 361 421zM388 445 390 445 390 447 388 447zM398 426 400 427 400 428 398 427zM355 448 356 449 356 450 354 449zM344 450 345 451 345 452 343 452zM427 450 428 451 428 452 427 451zM422 453 424 452 424 454 423 455zM437 413 439 413 440 415 437 415zM435 436 437 436 437 438 435 438zM402 418 404 418 403 419 402 419zM587 356 590 356 590 359 587 358zM596 302 598 302 599 304 596 304zM521 345 523 345 523 347 521 347zM575 336 577 335 578 337 576 337zM555 311 558 312 557 314 554 312zM576 336 577 336 577 337 575 337zM562 317 564 316 565 317 563 319zM568 335 570 335 570 336 568 336zM520 353 521 353 521 354 520 354zM523 380 526 380 525 382 523 382zM550 358 553 358 552 360 550 360zM538 366 539 365 540 366 538 367zM549 367 551 367 551 368 550 368zM578 360 579 359 580 360 578 361zM567 354 569 354 569 356 567 356zM585 310 587 309 588 311 586 312zM501 376 504 376 504 378 501 378zM581 347 583 346 583 348 582 348zM552 329 554 329 554 330 553 330zM547 319 550 319 549 321 547 321zM510 384 512 383 513 385 510 386z"/>
<path fill="#aaa49b" opacity="0.5" d="M789 390 792 391 792 393 789 393zM726 455 729 455 728 456 726 456zM759 350 761 351 760 352 759 351zM698 423 699 423 699 425 697 424zM788 419 789 418 790 419 789 419zM646 438 649 437 650 439 647 440zM715 365 718 364 719 366 716 367zM741 447 744 447 743 449 741 449zM732 407 735 407 734 409 731 409zM790 404 792 404 792 405 791 405zM794 378 797 377 797 379 794 380zM774 395 776 394 777 396 775 396zM566 401 568 402 567 403 566 402zM768 412 771 413 770 415 767 414zM684 371 686 371 686 373 684 373zM523 432 525 432 525 434 523 433zM767 396 769 396 770 398 767 398zM508 439 509 439 509 441 508 441zM770 357 773 357 774 359 771 360zM778 408 779 407 780 409 778 409zM527 406 528 406 529 407 528 407zM536 434 538 434 538 436 536 436zM518 398 520 397 520 399 518 399zM807 368 810 368 810 369 808 370zM753 369 756 369 755 371 753 371zM658 451 660 451 660 452 658 453zM678 342 680 342 680 344 678 343zM577 457 579 456 580 457 578 458zM654 400 656 399 657 401 654 402zM646 449 648 449 649 450 646 451zM434 458 435 458 435 459 434 459zM791 444 792 444 792 445 791 445zM725 422 727 421 727 423 725 424zM589 428 591 428 590 429 589 429zM563 438 565 437 565 438 564 439zM787 423 789 424 788 425 786 425zM464 435 466 435 466 436 464 437zM634 416 636 416 636 418 634 417zM773 431 776 432 776 433 773 433zM557 428 559 428 558 429 556 429zM452 452 453 452 454 453 452 454zM478 418 480 419 480 421 477 420zM600 451 602 452 601 454 599 453zM660 389 663 388 664 390 661 391zM774 424 777 423 777 424 775 425zM699 449 701 448 702 450 700 450zM746 447 748 447 749 448 747 448zM459 428 461 427 461 429 459 429zM770 378 772 379 772 381 769 380zM709 453 711 454 710 456 708 455zM447 445 449 444 449 446 447 446zM729 418 732 419 731 421 729 420zM450 456 452 456 452 458 449 458zM654 408 657 409 656 411 653 411zM677 382 679 382 678 383 677 383zM737 364 740 364 740 366 737 366zM653 408 654 409 654 410 652 410zM725 395 727 397 726 398 724 397zM541 422 543 423 543 425 540 424zM706 358 707 358 707 359 706 359zM624 454 625 453 626 455 624 455zM751 332 753 333 753 335 751 334zM788 410 790 410 790 412 788 412zM663 346 665 345 665 346 664 347zM526 420 529 421 529 423 526 422zM481 418 484 418 484 420 482 420zM736 417 738 417 737 418 736 418zM787 341 789 341 789 343 787 342zM491 456 493 456 493 458 491 458zM450 419 453 421 452 423 449 421zM489 440 491 440 491 442 489 442zM462 436 464 436 465 438 462 438zM572 448 574 447 574 449 572 449zM478 412 480 412 479 413 478 413zM519 388 522 390 521 392 518 390zM788 391 791 390 792 392 789 393zM549 423 551 424 551 425 548 425zM754 455 756 455 756 457 754 457zM736 416 738 416 738 418 736 417zM614 457 616 457 616 459 614 459zM778 433 780 433 780 434 778 434zM733 367 736 367 736 369 733 369zM533 445 535 444 536 446 534 447zM637 439 640 440 639 442 636 441zM683 384 686 384 685 387 682 386zM695 453 697 453 697 455 695 455zM786 405 788 405 788 407 786 407zM759 423 761 423 761 424 759 424zM523 439 526 440 525 442 522 441zM588 440 590 441 589 442 588 441zM527 395 529 394 529 395 528 396zM757 388 758 389 758 390 756 389zM794 438 796 440 795 442 793 440zM668 426 669 426 669 427 668 427zM748 376 751 377 750 379 747 378zM698 358 701 359 700 361 698 360zM665 454 667 453 668 455 665 455zM499 417 500 417 500 418 499 418zM702 451 705 450 706 452 703 453zM496 434 499 436 498 438 495 436zM736 334 737 333 738 334 736 335zM666 416 667 416 667 417 666 418zM762 357 765 356 766 358 763 360zM515 451 517 451 518 453 515 453zM549 421 552 422 551 424 548 423zM558 402 561 402 561 404 559 404zM782 378 785 377 785 379 783 380zM726 417 728 417 727 419 725 418zM497 393 499 392 499 393 497 394zM500 422 502 421 502 423 500 423zM488 433 491 433 491 435 488 436zM742 375 745 376 744 378 742 377zM778 455 780 455 780 457 778 456zM761 368 763 368 763 369 761 369zM734 361 737 361 736 362 734 362zM684 454 685 454 685 455 684 455zM498 448 501 448 501 450 498 450zM609 418 611 418 611 420 608 419zM495 446 497 446 497 448 495 448zM783 380 786 381 786 383 783 382zM694 388 696 388 696 389 694 389zM732 421 735 421 735 423 733 423zM732 427 735 426 735 429 732 429zM497 446 499 446 499 447 497 447zM796 414 797 414 797 415 796 415zM446 418 449 418 449 420 446 420zM439 420 441 420 441 421 439 421zM806 371 809 372 809 374 806 373zM757 394 759 394 758 396 756 395zM534 388 537 389 536 391 534 390zM598 416 601 416 601 418 599 418zM794 353 796 352 797 354 794 355zM784 449 786 449 786 451 784 451zM762 356 764 356 764 357 763 357zM556 440 558 439 558 440 556 441zM582 401 584 401 584 402 583 403zM724 408 727 407 728 409 725 410zM760 429 761 430 761 431 759 431zM710 384 712 385 711 387 709 386zM675 381 678 381 678 383 675 383zM662 410 663 410 663 411 662 411zM502 455 504 455 504 457 502 457zM716 378 718 379 717 380 715 379zM765 414 766 414 767 415 765 416zM655 388 657 389 657 390 654 390zM538 438 541 436 541 438 539 439zM664 343 665 344 665 345 664 344zM787 375 790 375 789 377 787 377zM528 434 531 435 530 437 527 436zM458 415 460 416 459 418 457 417zM525 406 528 406 528 409 525 408zM794 413 796 413 796 414 795 414zM577 419 579 418 580 419 578 420zM478 445 479 445 478 446 477 446zM656 420 657 421 656 422 655 421zM711 425 713 424 713 426 711 426zM736 394 737 394 737 395 736 395zM606 420 608 420 608 421 606 421zM774 373 776 372 777 373 775 375zM441 457 443 457 443 458 441 458zM475 426 478 428 477 430 474 428zM512 427 513 427 513 428 512 428zM561 425 563 424 564 425 562 426zM653 355 655 355 655 356 653 357zM705 350 707 351 706 353 704 352zM476 455 479 454 480 456 477 457zM718 362 720 361 720 363 718 363zM762 429 764 428 765 429 762 430zM744 374 747 374 747 376 744 376zM464 455 466 454 466 455 465 456zM506 445 508 445 508 446 505 446zM751 347 753 347 753 349 751 349zM544 413 545 413 545 414 543 414zM482 410 485 411 484 413 481 412zM691 395 693 395 694 396 692 397zM776 430 779 429 779 431 777 432zM622 445 625 445 624 447 622 447zM790 405 792 407 792 409 789 408zM751 453 754 453 754 455 751 455zM759 441 762 442 762 444 759 444zM625 444 626 444 626 445 625 445zM564 448 566 449 566 451 563 450zM585 449 587 448 587 449 586 450zM539 415 541 415 541 417 538 417zM542 458 544 457 544 459 542 459zM669 451 671 452 671 454 668 453zM471 408 472 409 472 410 470 410zM790 365 792 365 792 366 790 366zM788 343 789 344 789 345 787 344zM563 386 565 387 565 388 563 387zM499 446 500 446 500 448 499 448zM696 402 698 401 698 403 697 403zM655 389 658 388 658 390 655 391zM561 402 563 403 562 404 561 404zM660 362 661 361 662 363 660 364zM694 451 696 452 695 454 693 453zM507 396 509 396 508 397 507 397zM675 428 676 429 676 430 674 429zM701 452 704 453 703 456 701 454zM476 429 478 430 478 431 476 431zM758 416 760 415 760 416 759 417zM550 385 553 384 553 386 551 387zM702 362 705 362 705 364 702 364zM569 428 571 428 571 429 569 429zM796 413 799 413 800 415 796 416zM569 407 570 406 571 407 569 408zM758 460 759 459 760 460 758 461zM633 453 635 453 635 454 633 454zM698 228 700 227 700 229 698 229zM681 220 684 221 683 222 681 222zM660 228 662 228 661 229 660 229zM701 251 703 252 703 253 701 253zM767 275 770 275 770 277 767 277zM724 225 726 225 726 227 724 227zM758 262 760 263 759 264 757 263zM719 205 720 206 719 207 718 206zM760 272 762 273 762 275 759 275zM680 246 682 244 683 246 680 247zM699 301 702 302 701 304 698 303zM719 315 720 316 720 317 718 317zM709 231 710 231 710 232 709 232zM714 271 717 271 717 273 714 273zM661 243 664 244 663 246 661 246zM711 215 713 215 713 216 711 216zM701 266 704 267 703 269 701 268zM744 238 746 237 746 239 745 239zM751 249 754 249 754 251 751 251zM749 228 751 228 751 230 749 229zM765 302 767 303 766 305 764 303zM689 279 690 279 691 280 690 280zM715 308 716 307 717 308 716 309zM668 265 670 266 669 267 667 267zM717 224 720 224 720 226 717 226zM696 210 699 210 699 212 696 213zM728 276 729 277 729 278 727 277zM717 248 720 248 720 250 717 250zM678 219 681 218 681 221 678 221zM746 199 748 199 748 200 747 200zM717 303 719 302 719 303 718 304zM732 264 734 264 735 266 732 266zM659 293 661 293 661 295 659 295zM721 271 723 270 723 272 722 272zM664 232 666 232 666 233 664 233zM691 287 692 287 692 288 691 288zM751 305 754 305 753 307 751 307zM676 219 678 218 679 220 677 221zM675 207 677 206 677 207 676 208zM761 284 763 285 762 286 761 286zM701 275 703 275 704 276 702 277zM762 292 764 291 764 293 763 293zM748 290 751 289 751 292 748 292zM717 325 718 324 719 326 717 326zM744 263 745 264 745 265 743 264zM672 218 675 219 675 221 672 221zM663 301 665 300 666 302 664 303zM756 253 758 254 757 256 755 255zM688 252 690 252 690 254 688 254zM666 272 667 272 667 273 665 273zM735 296 738 297 738 299 735 298zM705 229 706 229 706 230 705 230zM702 282 703 282 703 283 702 283zM749 206 751 205 751 207 749 208zM731 307 733 307 733 309 731 309zM742 304 744 304 744 305 742 305zM722 217 725 217 725 219 723 220zM712 309 715 309 715 311 713 311zM722 287 725 287 725 289 722 289zM698 318 700 319 699 320 697 320zM696 263 698 263 699 264 696 265zM701 232 704 231 705 233 702 234zM743 321 745 320 746 322 743 323zM673 304 675 304 675 305 673 305zM680 292 682 294 681 296 679 294zM720 306 722 307 722 308 720 308zM767 303 768 303 768 304 766 304zM699 293 701 293 701 294 699 294zM619 309 620 309 620 310 619 310zM610 333 612 333 612 335 610 334zM609 327 611 327 611 329 608 329zM601 294 604 295 603 297 600 296zM652 306 656 304 657 307 653 309zM612 282 614 282 614 283 613 283zM654 317 657 316 657 318 655 319zM692 328 694 330 693 331 691 330zM613 328 616 327 617 330 613 331zM647 310 651 310 651 313 647 313zM612 265 615 266 615 269 611 268zM696 331 698 330 699 331 697 332zM644 313 646 313 646 315 644 314zM645 316 649 317 648 320 645 319zM623 292 626 292 626 295 623 294zM618 298 622 299 622 302 618 301zM719 332 721 332 722 334 719 334zM605 335 609 335 609 338 605 337zM646 302 649 301 649 303 646 304zM623 304 625 305 625 307 622 306zM606 340 609 338 611 341 607 343zM615 332 617 332 618 334 615 334zM655 268 657 268 658 269 656 270zM627 302 629 303 628 304 626 304zM683 323 685 323 685 324 683 325zM623 306 624 306 624 307 623 307zM623 249 627 249 628 252 624 252zM629 241 634 241 634 244 630 245zM631 270 634 271 634 273 631 272zM631 271 635 272 634 275 630 273zM621 307 623 308 622 309 621 309zM650 240 653 241 653 243 649 243zM667 333 669 333 669 335 667 335zM627 325 629 325 630 327 627 328zM814 340 816 340 816 341 814 341zM827 354 831 356 830 359 826 357zM823 344 827 344 828 347 823 348zM823 346 825 345 826 346 824 348zM811 326 815 328 814 331 810 329zM788 331 792 330 792 334 788 334zM776 326 779 326 779 328 776 329zM777 336 779 336 779 337 777 337zM826 329 830 328 831 331 827 332zM702 175 705 175 705 176 702 176zM719 190 721 190 720 191 719 191zM722 189 724 189 725 190 722 191zM734 184 735 184 736 185 734 185zM465 273 467 272 467 273 466 274zM471 249 474 249 474 250 472 251zM460 234 463 234 462 236 459 236zM506 273 508 272 508 273 507 274zM455 231 458 232 457 234 454 233zM470 245 472 244 473 246 470 246zM445 212 446 213 446 214 444 214zM458 218 460 219 460 221 457 220zM477 238 479 239 478 240 477 240zM448 249 451 249 451 251 449 251zM475 237 477 236 477 238 475 238zM470 272 472 271 472 272 470 273zM495 250 496 249 497 250 496 251zM428 229 430 229 430 230 429 231zM429 228 431 228 431 229 429 230zM438 257 441 258 440 259 438 259zM506 247 508 246 509 248 507 249zM469 250 471 251 471 252 469 251zM446 258 448 258 448 260 446 260zM506 248 507 248 508 249 506 249zM462 261 464 260 464 261 463 262zM475 252 476 253 476 254 474 253zM450 217 452 218 452 220 450 219zM437 250 439 251 438 252 436 252zM467 221 469 221 468 222 467 222zM455 231 457 232 457 233 454 232zM505 261 508 261 508 263 505 263zM459 246 462 245 462 247 460 248zM448 252 451 252 451 254 448 254zM457 229 459 230 458 232 456 231zM465 230 467 229 468 230 466 231zM438 211 439 212 439 213 437 213zM430 223 431 222 432 223 431 224zM484 227 486 227 486 228 484 228zM461 231 463 232 463 234 460 233zM432 246 434 246 434 247 433 247zM440 251 442 252 441 254 439 253zM494 227 496 228 496 230 493 229zM448 230 450 231 449 233 447 232zM472 264 474 265 474 266 471 266zM424 208 426 208 426 210 424 209zM453 240 455 239 456 241 453 242zM468 274 470 274 470 275 468 275zM459 261 461 261 462 263 459 263zM430 213 433 214 432 216 430 215zM505 251 507 250 507 252 505 252zM466 262 467 262 468 263 466 263zM458 231 461 230 461 232 459 233zM490 238 492 237 492 239 491 239zM457 261 459 262 459 263 457 262zM484 255 486 255 486 257 484 257zM473 254 475 255 474 257 472 256zM875 396 877 396 877 398 875 397zM879 458 882 459 881 461 878 460zM904 438 906 438 906 440 904 439zM856 427 859 427 859 428 856 428zM908 445 909 446 909 447 907 446zM867 451 870 451 870 453 867 454zM818 396 821 395 821 397 819 398zM860 416 863 417 862 419 859 418zM867 457 868 457 868 458 867 458zM824 447 826 448 825 449 824 449zM850 391 852 392 851 393 849 393zM864 402 865 402 865 404 864 404zM910 420 913 420 912 423 909 422zM889 425 892 426 891 428 889 427zM879 438 881 438 881 439 879 440zM884 419 886 420 885 421 884 420zM817 387 819 388 819 390 816 389zM825 384 827 385 827 386 825 385zM880 440 883 439 883 442 880 442zM1050 181 1052 181 1052 183 1050 183zM1056 197 1058 197 1058 198 1056 198zM1030 191 1032 191 1032 193 1030 192zM1100 239 1102 240 1102 241 1099 240zM992 202 994 203 994 205 992 204zM1059 192 1062 191 1063 193 1060 194zM1003 214 1004 214 1004 215 1003 215zM1009 181 1011 180 1012 181 1010 182zM1060 217 1063 217 1063 218 1060 218zM1022 195 1023 195 1023 197 1022 197zM1017 206 1018 207 1018 208 1016 207zM1028 216 1030 215 1030 216 1029 217zM1053 209 1055 210 1054 212 1052 211zM1061 193 1062 193 1062 194 1060 194zM1002 173 1004 173 1004 174 1002 174zM1080 229 1081 229 1081 230 1080 230zM990 180 992 180 992 182 990 182zM970 208 971 207 972 209 970 209zM1013 175 1015 174 1015 176 1013 176zM1032 213 1033 213 1033 214 1032 214zM974 210 976 209 976 211 974 211zM998 212 1000 213 999 214 997 213zM1048 228 1050 228 1050 230 1048 230zM1047 186 1048 186 1048 188 1047 188zM1017 203 1020 202 1021 203 1018 204zM1050 227 1052 227 1052 228 1050 228zM1004 183 1007 182 1007 184 1005 184zM1072 208 1075 208 1074 210 1072 209zM967 212 969 212 969 214 967 213zM1060 189 1062 189 1062 190 1060 191zM1045 202 1047 202 1047 204 1045 204zM1051 234 1052 235 1052 236 1050 235zM1044 210 1046 210 1046 212 1044 212zM1054 230 1055 230 1055 232 1053 231zM1026 205 1028 205 1029 206 1027 207zM1014 201 1016 201 1016 202 1014 202zM1051 189 1052 190 1052 191 1050 190zM1042 225 1043 225 1043 226 1042 226zM1031 213 1032 213 1033 214 1031 214zM969 204 971 203 971 205 969 206zM1021 198 1024 199 1023 201 1021 200zM1045 193 1047 194 1046 196 1044 195zM1008 194 1009 194 1009 195 1008 195zM1018 174 1019 174 1019 175 1017 175zM1078 205 1080 205 1079 206 1078 206zM1051 215 1053 214 1054 216 1052 217zM1005 172 1007 171 1008 173 1005 174zM1040 175 1042 175 1042 176 1040 177zM981 221 982 221 982 222 981 223zM1075 201 1076 202 1076 202 1074 202zM1072 242 1074 242 1073 244 1072 243zM1048 206 1050 206 1050 207 1048 207zM1041 178 1043 177 1043 179 1041 180zM1039 191 1041 190 1041 192 1039 192zM990 217 991 216 992 217 990 218zM1062 239 1064 239 1064 241 1062 241zM979 198 980 197 981 199 979 199zM1081 237 1084 236 1084 238 1082 239zM1017 206 1019 206 1019 207 1017 208zM1056 240 1057 240 1057 241 1056 241zM976 206 978 207 978 208 976 208zM1059 191 1061 190 1062 192 1060 193zM1101 233 1104 232 1105 234 1102 235zM1043 186 1045 185 1046 187 1044 188zM1045 208 1046 208 1047 209 1045 209zM972 204 974 203 974 204 973 205zM1093 222 1095 222 1095 223 1093 224zM1033 204 1034 205 1034 206 1032 205zM1011 183 1013 183 1014 185 1011 185zM1088 230 1091 229 1091 231 1088 231zM1005 193 1007 192 1007 194 1005 194zM1002 190 1003 190 1003 191 1002 191zM1052 195 1054 195 1054 196 1052 197zM985 223 988 224 987 225 985 225zM1033 184 1035 183 1036 185 1033 185zM1053 216 1055 215 1055 216 1054 217zM1039 193 1041 192 1042 194 1040 195zM1066 240 1067 240 1067 241 1065 241zM1042 183 1044 183 1044 185 1041 184zM973 198 975 199 974 200 972 200zM1032 207 1034 207 1034 209 1031 208zM1080 226 1082 227 1081 228 1079 227zM1087 229 1089 230 1088 231 1087 230zM1081 221 1083 221 1083 222 1081 222zM1098 234 1099 233 1099 234 1098 235zM1043 215 1045 214 1045 215 1044 216zM1043 176 1045 177 1044 178 1043 178zM1020 178 1022 179 1022 181 1019 180zM1038 219 1040 219 1040 221 1038 221zM1032 183 1034 184 1033 185 1032 185zM973 197 975 197 975 199 973 199zM987 224 989 223 990 224 988 225zM1069 196 1071 196 1071 197 1069 197zM1064 193 1066 193 1066 194 1064 194zM1054 214 1056 214 1057 215 1055 216zM1051 235 1052 235 1052 236 1051 236zM1017 195 1019 194 1020 195 1018 196zM1022 198 1024 198 1024 199 1022 199zM1027 215 1029 214 1029 216 1028 216zM1070 196 1072 196 1072 198 1070 198zM983 197 985 197 984 198 983 198zM1062 243 1064 243 1064 245 1062 244zM1053 195 1056 196 1055 198 1053 197zM970 216 972 216 972 218 970 217zM1044 224 1047 224 1047 225 1044 226zM999 194 1002 194 1002 196 1000 196zM1060 239 1062 239 1061 241 1060 240zM1038 177 1040 178 1039 180 1037 178zM1006 185 1007 185 1007 186 1005 186zM1502 296 1504 295 1505 297 1503 298zM1505 336 1507 336 1507 338 1505 338zM1471 318 1472 317 1473 319 1471 319zM1501 339 1503 338 1503 339 1502 340zM1453 304 1456 303 1456 305 1454 305zM1453 305 1454 304 1455 306 1453 306zM1487 303 1489 303 1489 304 1488 304zM1456 299 1458 299 1458 300 1457 300zM1445 316 1447 315 1447 317 1445 318zM1472 301 1474 300 1474 302 1473 302zM1447 315 1450 316 1449 318 1447 317zM1479 334 1480 335 1480 336 1478 335zM1508 350 1510 350 1510 352 1508 352zM1450 347 1451 347 1452 348 1450 349zM1470 293 1472 293 1472 294 1471 294zM1519 298 1522 298 1521 300 1519 299zM1533 344 1536 343 1537 345 1534 346zM1522 320 1524 321 1523 322 1522 321zM1458 308 1460 309 1460 310 1458 310zM1442 355 1443 355 1443 356 1442 356zM1494 325 1496 325 1496 326 1494 327zM1489 314 1491 314 1490 316 1488 316zM1545 334 1547 334 1546 336 1544 335zM1467 298 1469 297 1469 299 1467 299zM1447 341 1449 340 1449 341 1448 342zM1505 320 1506 320 1506 321 1505 321zM1471 315 1473 314 1473 316 1471 317zM1539 312 1542 311 1542 313 1540 313zM1513 365 1514 364 1515 366 1513 366zM1502 345 1504 346 1503 348 1501 347zM1499 316 1500 315 1500 316 1499 317zM1474 344 1477 345 1477 347 1474 346zM1491 361 1492 361 1492 362 1491 362zM1483 317 1486 316 1486 318 1484 319zM1444 307 1446 307 1446 309 1444 309zM1489 309 1491 310 1490 311 1489 310zM1445 352 1446 352 1446 353 1445 353zM1457 305 1458 305 1458 306 1457 306zM1517 332 1519 331 1520 333 1517 333zM1517 335 1519 336 1519 338 1516 337zM1458 301 1460 301 1460 302 1459 303zM1516 295 1518 295 1518 297 1516 296zM1513 344 1515 345 1514 346 1513 345zM1511 346 1512 345 1513 346 1511 347zM1469 291 1472 292 1471 294 1469 293zM1496 328 1497 329 1497 330 1496 329zM1475 320 1477 320 1477 322 1475 321zM1457 304 1458 305 1458 306 1457 305zM1529 298 1532 297 1532 299 1530 299zM1533 301 1535 302 1534 304 1532 303zM1540 349 1542 348 1543 349 1541 350zM1510 345 1512 345 1512 346 1510 346zM1171 291 1173 292 1172 293 1171 292zM1199 299 1200 299 1201 301 1199 301zM1195 290 1196 289 1197 290 1195 291zM1248 298 1250 298 1251 300 1248 300zM1173 288 1175 287 1175 288 1174 289zM1191 287 1194 287 1193 289 1191 288zM1165 303 1167 303 1167 304 1165 304zM1188 311 1190 311 1190 313 1188 313zM1200 300 1203 299 1203 301 1201 302zM1208 287 1209 287 1209 288 1207 288zM1247 294 1249 294 1249 296 1247 296zM1239 304 1241 305 1241 306 1239 306zM1239 299 1241 299 1242 301 1240 301zM1228 295 1229 295 1229 296 1227 296zM1175 312 1177 312 1177 314 1175 314zM1224 288 1226 289 1225 291 1223 290zM1232 293 1234 292 1235 294 1233 294zM1228 318 1229 318 1229 319 1228 319zM1244 294 1246 294 1246 295 1244 295zM1244 309 1246 309 1246 311 1244 311zM1224 310 1226 311 1225 313 1223 312zM1175 284 1177 285 1176 286 1175 286zM1219 286 1221 285 1222 287 1220 287zM1215 290 1217 289 1218 290 1216 291zM1217 301 1219 301 1220 302 1218 303zM1181 290 1184 290 1183 292 1181 292zM1242 318 1244 316 1244 318 1242 319zM1176 309 1178 308 1178 310 1177 310zM1210 316 1212 316 1212 317 1210 317zM1218 305 1220 305 1220 306 1218 306zM1214 301 1215 301 1215 303 1214 303zM1170 301 1172 301 1172 303 1170 303zM1235 307 1237 308 1236 309 1235 308zM1194 311 1196 312 1196 313 1194 312zM384 419 387 418 387 420 385 421zM386 409 388 410 387 411 385 410zM443 422 445 422 445 424 443 424zM350 441 352 442 352 444 349 443zM443 442 444 442 444 443 443 443zM430 408 432 407 432 409 430 409zM409 437 411 436 412 438 410 439zM352 446 355 446 355 448 353 448zM408 424 410 425 409 426 408 426zM354 450 356 451 356 452 354 452zM349 404 351 404 351 405 350 406zM382 448 384 449 384 451 382 450zM354 427 356 428 355 430 353 429zM350 453 351 454 351 455 350 454zM335 456 336 456 337 457 335 457zM424 422 425 423 425 424 423 424zM449 449 451 449 452 450 450 451zM349 439 352 439 352 441 349 441zM417 445 419 446 418 447 417 447zM436 411 438 410 438 412 436 413zM343 402 345 403 344 405 342 404zM588 341 590 340 591 341 589 342zM539 354 541 355 541 356 539 356zM542 360 544 360 544 362 542 362zM546 327 548 328 547 329 545 328zM523 381 526 381 526 383 523 383zM567 333 570 333 570 335 567 335zM584 347 586 346 586 347 585 348zM586 340 589 340 589 342 587 342zM500 389 501 389 501 391 500 390zM514 382 517 382 517 384 514 384zM540 351 542 351 542 353 540 353zM575 344 577 343 578 345 576 345zM522 330 525 330 524 332 522 332zM524 344 525 344 525 346 524 345zM560 311 562 310 563 311 561 312zM531 315 534 316 534 318 531 317zM535 337 537 337 538 339 535 339zM526 367 528 368 528 369 525 369z"/>
<path fill="#67645a" opacity="0.5" d="M775 366 778 366 779 368 776 368zM749 420 752 421 751 423 749 422zM568 413 570 412 570 414 568 415zM588 455 590 455 591 457 588 457zM712 401 713 401 713 402 712 402zM748 334 751 334 751 336 748 336zM517 460 518 459 519 461 517 461zM784 404 786 403 787 405 785 406zM694 356 696 355 696 357 694 358zM590 415 592 415 592 416 590 417zM664 378 667 378 666 380 664 379zM825 356 828 356 828 358 825 358zM712 421 714 422 713 423 712 423zM603 431 606 431 606 433 603 433zM671 343 673 344 673 345 671 345zM505 454 506 455 506 456 504 455zM702 350 704 350 704 351 702 351zM484 402 486 404 485 405 483 404zM588 410 590 409 591 411 589 412zM649 352 652 352 652 353 650 354zM810 367 812 367 812 368 810 369zM773 391 775 392 775 393 773 393zM696 444 698 444 698 445 696 445zM664 371 665 370 665 371 664 372zM484 403 487 402 488 404 485 405zM511 455 512 456 512 457 510 456zM488 394 490 395 489 397 487 396zM751 386 754 387 753 389 750 388zM634 414 637 413 638 415 635 416zM503 410 504 411 503 412 502 411zM680 429 683 429 683 431 680 431zM664 377 667 379 665 381 663 379zM724 373 727 374 726 376 723 375zM608 427 610 428 609 430 607 428zM527 438 528 437 529 438 528 439zM651 428 654 428 654 430 652 430zM481 411 483 412 482 414 480 413zM723 407 726 408 725 410 723 409zM523 394 525 394 524 395 523 395zM698 442 699 441 700 443 698 443zM716 454 718 454 718 457 715 456zM721 431 722 431 722 432 721 432zM600 417 603 417 603 419 600 419zM488 421 490 420 491 422 488 423zM594 460 596 459 597 461 595 462zM783 343 785 344 785 345 783 345zM662 413 664 413 663 415 661 415zM595 425 597 424 598 426 596 427zM455 439 456 439 456 440 455 440zM697 369 699 369 699 371 697 371zM805 359 807 359 807 360 805 360zM762 385 763 384 763 385 762 386zM698 403 700 403 700 405 698 405zM476 428 478 428 478 430 476 430zM760 445 761 444 761 445 760 446zM558 387 560 386 561 388 559 388zM785 341 788 341 788 343 785 343zM663 374 666 374 666 376 663 376zM723 339 725 339 724 341 722 340zM653 406 656 407 655 409 652 409zM703 405 705 405 704 406 703 406zM768 417 770 416 770 417 769 418zM793 406 795 407 794 409 792 408zM690 413 692 413 692 414 690 414zM723 433 725 434 724 435 722 434zM764 342 766 341 766 343 764 343zM609 452 611 451 611 453 609 453zM495 431 498 430 499 432 496 434zM543 396 545 396 546 397 543 398zM590 450 591 449 592 450 590 451zM721 387 723 386 723 388 721 388zM774 363 776 363 775 364 774 364zM795 389 796 388 796 389 795 390zM760 377 762 376 762 377 761 378zM668 372 670 373 669 374 668 373zM795 386 797 387 797 388 795 388zM797 455 800 454 801 456 798 457zM790 383 792 384 792 385 790 385zM440 454 443 454 443 456 441 456zM609 413 611 413 612 415 609 415zM566 423 568 424 568 426 565 425zM667 412 668 412 668 413 667 413zM432 453 435 453 435 455 432 455zM683 344 684 344 684 345 683 345zM641 424 643 424 643 426 641 426zM543 458 545 457 545 459 543 460zM695 421 698 421 697 423 695 422zM434 460 436 461 435 462 433 461zM714 401 717 400 717 402 715 403zM715 460 717 460 717 461 715 461zM702 345 705 347 704 349 701 347zM523 389 524 390 524 391 523 390zM676 448 678 447 679 449 677 449zM762 373 765 375 764 377 761 375zM625 447 628 448 627 450 625 449zM705 399 707 398 707 400 705 401zM783 389 785 389 785 390 783 391zM493 402 496 403 495 405 492 404zM539 435 541 435 541 437 539 437zM752 445 755 445 755 447 753 447zM602 451 603 451 603 452 601 452zM589 431 592 431 592 433 589 433zM673 357 674 356 675 358 673 359zM768 373 769 373 769 374 768 374zM664 382 666 383 666 384 664 384zM794 378 796 379 795 380 794 379zM598 451 600 451 601 453 598 453zM651 403 654 403 654 404 652 405zM766 351 768 351 768 353 766 353zM762 401 765 401 764 403 762 403zM665 388 667 388 667 390 665 390zM706 414 708 413 708 415 706 415zM698 387 700 386 700 387 699 388zM666 411 669 410 669 413 666 413zM599 422 600 422 600 423 598 423zM751 398 754 398 754 401 751 400zM488 402 491 403 490 405 487 404zM713 419 715 418 716 419 714 420zM740 396 742 396 742 397 741 397zM689 455 691 456 690 457 689 457zM474 455 476 455 476 456 474 456zM687 448 689 447 690 449 688 450zM455 423 457 422 457 423 455 424zM460 432 463 433 463 435 460 434zM732 408 735 407 736 409 733 410zM702 444 703 443 704 444 702 445zM674 405 676 406 676 407 674 407zM759 430 761 430 761 432 759 432zM708 405 710 405 710 407 708 406zM774 348 777 349 776 351 774 350zM591 431 593 432 592 434 590 433zM625 442 628 440 629 443 626 444zM662 391 665 392 665 394 662 394zM535 396 536 396 537 397 535 397zM578 429 580 429 580 430 578 431zM751 366 752 367 752 368 750 367zM772 450 773 450 774 452 772 452zM748 429 749 429 750 430 748 431zM786 392 789 392 788 394 786 394zM725 400 727 401 726 403 724 402zM570 458 572 459 571 460 569 459zM789 366 791 366 791 367 790 368zM658 443 661 444 660 446 657 445zM668 420 671 420 671 422 669 422zM710 374 712 373 712 375 711 375zM450 445 453 446 452 448 449 447zM622 424 624 424 625 425 623 426zM620 444 623 445 622 447 619 446zM458 443 460 443 460 445 458 445zM467 405 469 406 469 407 467 407zM530 455 532 454 532 456 530 456zM502 392 503 393 503 394 502 393zM515 411 517 410 518 412 516 413zM633 417 635 417 634 419 632 419zM656 443 658 442 658 443 657 444zM728 428 730 429 730 430 728 430zM674 339 676 338 676 340 674 340zM599 431 601 431 601 433 599 433zM738 382 741 381 742 383 739 384zM793 367 795 367 795 368 793 368zM554 440 557 441 556 443 554 442zM663 389 664 388 665 389 664 390zM442 455 444 454 444 455 443 456zM572 415 574 415 574 416 572 417zM802 366 803 365 804 366 803 367zM719 446 722 447 722 449 719 449zM490 426 491 427 491 428 489 428zM561 453 563 453 564 454 562 455zM661 429 663 430 663 431 661 431zM674 406 676 406 675 408 674 407zM817 361 820 361 820 363 817 363zM559 457 561 456 561 458 560 458zM750 330 752 330 752 331 751 332zM746 406 748 406 748 407 746 407zM525 402 527 402 527 403 525 403zM707 344 710 345 709 347 706 346zM707 416 709 415 709 417 707 417zM581 420 583 420 583 421 582 422zM627 451 630 451 630 454 627 453zM775 355 776 354 777 355 775 356zM708 372 709 372 709 373 708 373zM762 378 764 377 764 379 762 379zM557 416 559 415 560 417 557 418zM676 415 677 416 677 417 675 416zM701 414 703 414 703 415 701 416zM716 427 718 426 718 427 717 428zM626 418 628 419 627 420 625 419zM786 399 788 399 787 400 786 400zM597 455 600 454 600 456 598 457zM721 393 723 393 723 394 721 394zM626 420 627 421 627 422 625 422zM441 419 443 420 442 421 440 420zM702 379 704 379 705 380 702 381zM539 385 541 386 541 387 539 387zM540 393 542 394 541 396 539 395zM643 421 645 421 645 423 643 423zM538 458 539 458 540 459 538 459zM488 406 489 406 489 407 487 407zM762 372 763 372 763 373 762 373zM675 359 678 360 678 361 675 361zM624 428 627 428 627 430 624 430zM704 368 706 367 706 369 704 369zM442 437 444 438 444 439 442 439zM731 397 732 398 732 399 730 399zM665 378 667 378 668 379 665 380zM444 418 445 417 446 418 444 419zM758 336 760 335 761 336 759 337zM708 430 711 431 710 433 707 432zM657 375 659 375 659 377 657 377zM650 447 653 448 652 450 649 449zM702 206 704 207 703 208 701 207zM673 226 675 226 675 227 673 227zM743 311 745 310 746 312 743 312zM687 283 689 283 689 285 687 284zM688 296 691 295 691 297 689 298zM677 297 680 297 680 299 677 299zM747 327 750 327 750 328 747 328zM692 299 694 300 693 302 691 301zM705 322 706 323 706 324 705 323zM721 232 723 232 723 234 721 234zM695 261 697 260 697 261 696 262zM746 236 748 236 747 238 745 237zM715 217 718 218 717 220 714 219zM700 228 702 228 702 229 700 229zM671 306 674 304 675 306 672 308zM701 281 703 281 703 282 701 282zM667 266 670 267 669 269 666 268zM735 250 737 250 737 251 735 252zM738 271 740 272 739 274 737 273zM698 292 700 291 701 293 698 294zM749 285 752 286 751 288 748 287zM704 206 706 206 706 207 704 207zM659 281 661 280 662 282 660 283zM715 296 717 295 718 297 715 298zM716 246 718 247 717 249 715 247zM765 308 766 307 767 309 765 309zM732 210 734 211 733 211 732 211zM724 277 726 277 726 278 724 278zM754 223 756 224 755 225 753 225zM746 222 747 221 748 223 746 223zM736 256 738 257 737 258 736 257zM685 292 687 292 687 293 686 293zM735 243 737 242 738 244 736 244zM686 262 687 262 687 264 686 264zM701 268 703 267 704 269 702 270zM747 215 749 215 749 216 747 217zM727 243 730 243 730 245 727 245zM678 283 680 284 679 286 677 285zM749 206 752 206 752 208 749 208zM713 260 714 260 714 262 712 261zM741 227 743 227 743 229 741 229zM678 250 680 249 681 251 679 251zM737 199 739 200 738 202 736 201zM678 266 680 265 681 266 679 267zM748 304 750 303 751 304 749 305zM688 205 690 205 690 206 689 206zM723 217 725 218 725 219 723 219zM724 197 727 196 727 198 725 199zM759 306 761 306 761 308 759 307zM708 306 711 306 711 308 708 308zM660 204 662 204 663 205 661 206zM702 318 704 319 703 321 701 320zM726 196 729 196 729 198 726 198zM759 203 760 203 760 204 759 204zM723 309 725 309 724 310 723 310zM727 203 729 202 730 204 727 204zM672 242 674 243 673 244 672 244zM721 280 722 280 722 281 721 281zM642 273 645 273 645 275 642 275zM647 303 650 303 650 305 647 305zM610 290 615 290 615 294 610 293zM725 331 727 331 727 332 725 333zM647 325 651 325 651 328 647 327zM635 316 638 317 637 320 633 319zM658 289 660 290 660 292 658 291zM668 320 671 320 671 321 669 322zM716 335 719 334 720 337 717 338zM653 279 656 276 658 279 654 281zM623 263 626 263 626 265 623 265zM633 305 635 306 634 308 632 307zM649 258 650 259 650 260 648 259zM648 303 650 302 651 304 649 305zM674 327 676 326 676 328 674 329zM634 343 637 341 638 343 636 345zM600 307 602 307 602 309 600 309zM630 323 631 322 632 323 631 324zM641 236 643 237 643 238 641 238zM641 282 643 280 644 282 641 283zM606 326 609 326 608 329 606 328zM635 321 638 321 638 323 635 323zM635 274 638 273 639 275 636 276zM616 332 620 330 621 333 617 335zM638 295 640 295 640 297 638 297zM709 337 712 338 711 339 709 338zM623 303 625 304 624 305 622 304zM634 310 638 309 639 312 635 314zM797 327 800 327 800 329 797 329zM827 341 830 340 830 342 828 343zM829 333 830 333 831 334 829 334zM835 354 837 354 837 355 835 355zM760 329 763 329 763 331 760 331zM761 327 764 325 766 328 762 329zM788 328 790 329 790 331 787 330zM788 327 789 327 789 328 787 328zM825 340 828 342 827 345 823 343zM824 350 826 350 826 352 825 352zM800 336 803 337 802 339 799 338zM786 337 788 338 787 339 786 339zM838 340 841 341 841 342 838 342zM830 347 832 346 832 348 830 348zM807 345 811 346 809 350 805 348zM792 328 795 327 796 330 793 331zM693 168 697 166 698 169 694 171zM709 191 713 193 711 196 708 194zM719 175 722 176 721 179 718 177zM732 170 736 169 736 171 733 172zM734 185 735 185 735 186 733 186zM702 164 705 163 706 165 703 167zM718 193 721 192 722 194 719 196zM713 184 715 184 716 186 713 186zM717 191 720 191 720 193 717 193zM689 171 692 171 691 174 688 173zM722 166 726 165 727 168 723 169zM484 268 485 267 486 269 484 270zM500 259 501 258 502 259 500 260zM432 244 434 243 434 245 432 245zM438 253 440 252 441 254 439 255zM478 218 479 218 479 219 478 219zM443 227 445 226 446 228 444 229zM447 240 449 241 448 242 447 241zM473 226 475 226 475 227 473 228zM499 245 502 245 502 247 499 247zM493 231 494 231 494 232 492 232zM488 269 490 268 491 269 489 270zM426 215 427 214 427 215 426 216zM501 265 503 266 503 267 501 267zM448 229 450 229 449 230 448 230zM460 247 462 248 462 249 460 248zM456 266 457 267 457 268 456 267zM499 231 500 232 500 233 498 232zM452 216 455 217 455 218 452 218zM490 257 493 257 492 259 490 259zM475 232 478 231 478 233 475 234zM459 255 461 254 462 256 459 257zM466 260 468 259 468 261 467 261zM463 238 464 238 464 239 462 239zM494 267 496 268 495 270 493 269zM494 253 496 252 497 254 494 254zM441 237 443 238 442 240 440 239zM474 249 476 249 476 251 474 251zM456 243 459 243 458 245 456 245zM458 232 459 232 459 233 458 233zM428 239 431 238 432 240 429 241zM441 255 443 256 442 257 441 256zM495 234 497 234 497 236 495 235zM489 259 491 260 490 260 489 260zM422 219 424 220 423 221 422 220zM484 277 486 277 487 278 485 279zM503 256 506 257 505 259 503 258zM445 244 447 243 448 245 445 246zM468 256 470 257 470 258 468 258zM426 234 428 233 429 235 427 236zM461 266 463 266 462 268 460 267zM445 218 446 218 446 219 445 219zM436 212 437 212 437 213 436 213zM450 213 453 212 453 214 451 215zM474 261 476 261 476 263 473 262zM494 245 495 245 496 246 494 246zM478 223 480 222 480 224 478 224zM422 216 425 217 424 219 421 218zM468 230 469 230 469 231 467 231zM491 246 493 247 492 249 490 248zM442 210 444 211 444 212 442 212zM452 225 454 225 454 226 452 227zM499 244 501 246 500 247 498 246zM440 224 442 225 441 226 440 226zM437 223 440 224 440 226 437 225zM448 255 449 254 450 256 448 256zM502 270 504 270 504 271 502 272zM507 252 510 252 510 254 507 254zM495 276 497 276 497 278 495 277zM435 214 437 214 437 216 435 215zM457 213 460 214 460 216 457 216zM435 225 437 225 436 227 434 226zM491 221 493 221 494 223 491 223zM443 254 445 253 445 255 443 255zM447 265 450 265 450 267 447 267zM427 214 429 214 429 215 427 216zM468 233 471 233 470 235 467 235zM487 251 489 251 489 253 487 253zM486 254 489 254 489 256 486 256zM859 427 862 427 862 429 859 429zM896 458 898 457 898 459 897 460zM912 429 914 428 915 430 913 431zM821 401 823 400 823 402 821 402zM874 397 877 397 877 399 874 398zM816 398 818 398 818 400 816 400zM834 400 836 400 836 402 834 402zM820 391 821 390 822 392 820 392zM913 439 915 439 914 440 913 440zM841 436 845 436 844 439 841 438zM858 426 859 427 858 428 857 427zM894 425 896 425 897 426 895 427zM847 450 848 450 848 451 847 451zM834 381 836 382 835 384 833 383zM861 431 864 432 863 435 860 434zM884 430 887 430 887 432 884 432zM875 414 877 413 878 415 875 416zM882 407 884 407 884 408 883 408zM853 452 856 451 856 453 853 454zM828 416 830 416 830 417 829 417zM836 425 838 425 838 426 836 426zM821 416 822 416 822 417 821 417zM841 403 844 405 842 407 840 405zM843 443 844 443 844 444 843 444zM911 430 914 430 913 432 910 432zM838 440 840 439 841 441 838 442zM1014 174 1016 173 1016 174 1015 175zM1030 177 1032 178 1031 180 1029 179zM1021 200 1023 199 1023 201 1021 201zM1075 233 1077 234 1077 236 1074 235zM1012 211 1014 211 1014 212 1012 212zM970 203 971 204 971 205 969 204zM1066 234 1068 235 1068 236 1066 236zM988 201 990 202 990 203 988 202zM1075 220 1077 219 1078 221 1075 221zM988 177 990 178 990 180 987 179zM1062 196 1065 196 1065 198 1063 198zM980 209 981 208 982 209 980 210zM1081 218 1084 218 1083 220 1081 220zM1019 210 1021 211 1020 212 1018 211zM1062 243 1065 243 1064 245 1062 244zM1032 173 1033 173 1033 174 1031 174zM987 213 989 213 990 214 987 215zM992 194 995 195 994 196 992 195zM1012 186 1014 186 1014 188 1012 188zM1030 207 1032 208 1031 209 1029 208zM983 223 984 223 984 224 983 224zM1105 224 1106 224 1106 225 1105 224zM1067 235 1070 235 1069 237 1067 237zM1046 203 1048 203 1047 205 1046 204zM1088 220 1090 220 1090 221 1088 221zM1057 228 1058 228 1059 229 1057 229zM1043 222 1046 222 1046 224 1043 224zM993 201 994 200 995 202 993 202zM1075 207 1078 207 1078 209 1075 209zM995 192 996 191 997 193 995 193zM1020 191 1022 190 1023 192 1020 193zM969 205 971 204 972 206 969 207zM1058 202 1060 201 1061 203 1059 203zM1060 240 1062 241 1062 242 1060 242zM979 217 980 216 981 218 980 218zM1041 183 1043 182 1043 183 1042 184zM1083 211 1086 211 1085 213 1083 212zM1047 184 1049 183 1049 184 1048 185zM1013 204 1015 203 1016 205 1014 205zM1051 220 1053 220 1052 222 1050 221zM1083 206 1085 205 1086 207 1084 207zM1020 219 1022 218 1023 220 1020 220zM976 209 978 209 978 210 977 211zM1106 226 1107 226 1107 227 1106 228zM1060 217 1062 216 1063 218 1061 219zM1011 178 1013 178 1012 180 1011 179zM1021 210 1023 210 1022 212 1021 211zM1087 225 1089 224 1090 226 1087 227zM1027 203 1029 204 1029 205 1027 205zM1037 188 1039 188 1039 190 1037 190zM997 183 999 183 999 184 997 184zM1075 233 1076 233 1076 234 1075 234zM979 209 981 210 980 212 978 211zM1050 198 1052 197 1053 199 1051 200zM1056 218 1058 218 1058 219 1056 220zM1039 189 1041 189 1041 190 1040 190zM1064 194 1066 193 1066 194 1065 195zM1056 199 1058 199 1058 201 1055 201zM1063 192 1064 192 1065 193 1063 193zM1053 220 1055 219 1056 221 1053 222zM1048 209 1050 210 1049 212 1047 211zM1017 172 1018 173 1017 174 1016 173zM1051 232 1052 232 1052 233 1050 233zM1010 182 1011 183 1011 184 1009 184zM1090 219 1093 219 1093 221 1091 221zM1007 192 1009 191 1010 192 1008 193zM1062 193 1064 193 1064 195 1062 195zM1022 198 1024 199 1023 201 1021 200zM1001 169 1002 170 1002 171 1000 171zM974 222 975 221 976 222 974 223zM1067 195 1068 195 1068 196 1067 196zM1025 174 1026 174 1026 175 1025 175zM1073 200 1074 201 1074 202 1073 202zM1045 208 1047 209 1046 210 1044 210zM1062 214 1064 215 1063 216 1062 215zM1060 226 1063 225 1063 227 1061 228zM1015 214 1016 215 1016 216 1014 216zM1072 221 1073 220 1074 221 1072 222zM989 210 991 209 992 211 990 211zM999 202 1000 201 1001 202 999 203zM1011 209 1013 210 1012 211 1010 211zM977 206 979 206 979 207 977 207zM1060 201 1062 200 1062 201 1060 202zM1031 205 1032 205 1032 206 1030 206zM1032 181 1034 182 1034 183 1032 183zM1032 182 1034 182 1034 183 1032 184zM1097 241 1099 240 1099 241 1098 242zM1004 198 1006 197 1007 199 1005 200zM996 205 997 205 997 206 995 206zM1043 212 1044 211 1044 212 1043 213zM1079 211 1080 211 1080 212 1079 212zM1027 221 1029 221 1029 222 1027 222zM1056 222 1058 221 1058 222 1057 223zM1009 183 1011 184 1010 185 1008 184zM1094 243 1095 242 1095 243 1094 244zM997 178 999 178 998 179 997 179zM1083 228 1084 228 1084 230 1082 229zM991 180 994 181 993 182 991 182zM1093 219 1095 219 1095 220 1093 221zM992 194 994 194 994 196 992 195zM1032 213 1034 212 1034 214 1032 215zM1031 181 1032 181 1032 182 1031 182zM969 207 971 206 971 208 969 208zM1035 189 1037 188 1038 190 1036 191zM1014 171 1016 171 1016 173 1014 173zM1064 195 1066 195 1066 196 1064 197zM978 207 979 206 980 208 979 208zM1045 192 1047 193 1047 194 1045 194zM975 218 977 218 977 219 975 219zM1043 182 1045 182 1045 183 1043 183zM1067 219 1069 218 1069 220 1067 220zM1503 336 1505 336 1506 337 1504 338zM1487 353 1489 353 1490 354 1488 355zM1475 325 1477 325 1477 327 1474 327zM1461 292 1463 291 1463 292 1461 293zM1526 333 1528 333 1528 335 1526 335zM1488 347 1489 346 1490 348 1488 348zM1445 340 1447 340 1447 342 1445 342zM1516 304 1518 304 1518 305 1516 305zM1505 337 1507 337 1508 338 1506 339zM1520 309 1521 308 1522 309 1520 310zM1541 349 1542 349 1543 350 1541 351zM1470 343 1472 344 1471 345 1470 345zM1531 306 1533 305 1533 307 1531 307zM1491 366 1493 367 1492 368 1491 367zM1502 338 1503 338 1503 339 1501 339zM1513 352 1515 351 1515 353 1514 353zM1464 333 1466 333 1466 334 1465 334zM1483 334 1485 335 1485 336 1483 336zM1490 347 1493 346 1493 348 1491 349zM1493 316 1496 316 1496 318 1493 318zM1538 354 1540 353 1541 355 1539 356zM1453 334 1454 334 1454 335 1453 335zM1497 339 1499 339 1499 340 1498 340zM1498 326 1500 326 1500 328 1498 327zM1476 296 1478 297 1478 298 1476 298zM1454 303 1456 304 1456 306 1454 304zM1521 325 1523 325 1523 326 1521 326zM1539 316 1540 316 1540 318 1539 318zM1462 331 1463 330 1464 332 1462 332zM1501 356 1502 356 1503 357 1501 357zM1459 363 1461 362 1462 364 1460 365zM1538 362 1540 361 1540 362 1539 363zM1495 304 1496 304 1496 305 1495 305zM1530 359 1531 359 1531 361 1529 360zM1534 335 1535 335 1535 337 1534 336zM1494 361 1496 361 1496 363 1494 363zM1509 312 1511 313 1510 314 1509 314zM1448 296 1449 296 1449 297 1448 297zM1444 328 1445 329 1445 330 1443 329zM1463 317 1465 317 1465 319 1463 319zM1480 327 1482 327 1481 328 1480 328zM1486 342 1489 341 1489 343 1487 344zM1475 338 1477 338 1477 339 1475 340zM1479 360 1480 360 1480 361 1478 361zM1448 305 1450 305 1449 306 1448 306zM1528 326 1530 325 1530 327 1528 328zM1502 320 1504 320 1504 321 1503 322zM1485 319 1487 320 1486 321 1485 321zM1506 339 1507 339 1507 340 1505 340zM1524 350 1527 349 1527 351 1525 352zM1484 332 1485 332 1485 334 1483 333zM1527 330 1528 330 1529 331 1527 331zM1505 308 1507 308 1508 310 1505 310zM1516 340 1518 340 1518 342 1516 342zM1520 317 1523 317 1523 319 1520 319zM1523 319 1525 318 1525 319 1524 320zM1492 366 1494 366 1495 367 1492 368zM1487 338 1489 338 1489 339 1487 340zM1488 325 1490 325 1490 327 1487 326zM1518 310 1520 309 1520 311 1519 311zM1517 295 1519 294 1519 296 1518 296zM1526 355 1528 355 1528 356 1526 356zM1539 357 1541 359 1540 360 1538 359zM1471 323 1473 324 1472 325 1471 324zM1492 335 1494 336 1494 338 1491 337zM1449 340 1451 339 1452 341 1450 341zM1504 356 1506 355 1506 356 1505 357zM1528 350 1531 351 1530 353 1528 352zM1184 299 1185 299 1186 300 1184 301zM1248 310 1250 309 1251 311 1249 312zM1205 310 1207 309 1208 311 1206 312zM1168 303 1170 302 1170 304 1168 304zM1182 300 1183 299 1184 301 1182 301zM1212 313 1214 312 1214 313 1212 314zM1166 292 1168 292 1168 294 1166 293zM1163 285 1166 285 1165 287 1163 287zM1222 301 1224 301 1225 303 1222 303zM1222 304 1223 303 1224 304 1222 305zM1200 305 1202 305 1202 306 1200 307zM1198 311 1199 311 1200 312 1198 312zM1210 311 1211 311 1211 312 1210 312zM1213 316 1215 317 1214 319 1212 318zM1240 293 1242 294 1241 295 1240 294zM1205 306 1206 306 1206 307 1205 307zM1184 301 1186 302 1186 303 1184 303zM1219 294 1220 293 1221 294 1220 295zM1169 293 1171 293 1171 295 1169 295zM1180 292 1181 292 1181 293 1179 293zM1244 314 1245 315 1245 315 1244 315zM1238 307 1240 305 1241 307 1239 308zM1176 315 1179 314 1179 316 1177 316zM1168 310 1170 309 1170 310 1169 311zM1247 295 1250 296 1249 298 1246 297zM1207 315 1208 315 1209 316 1207 317zM397 422 398 422 399 423 397 423zM336 455 338 456 338 458 335 457zM349 428 350 428 351 429 349 430zM376 427 379 426 380 428 377 429zM412 427 414 427 413 429 412 428zM346 433 348 432 348 434 346 434zM375 431 377 429 378 431 376 432zM402 435 403 435 403 437 402 436zM391 419 392 419 393 420 391 420zM419 438 422 438 421 440 419 440zM383 440 385 440 385 442 383 442zM366 433 369 433 369 436 366 435zM450 426 451 426 451 427 449 427zM452 447 454 448 453 449 451 448zM366 411 368 410 368 411 367 412zM439 407 441 408 440 409 439 408zM342 459 344 459 344 461 342 460zM380 442 382 442 382 443 381 443zM407 433 408 433 408 434 407 434zM365 432 367 432 367 434 365 434zM359 409 361 409 360 411 358 411zM391 459 393 460 393 461 391 461zM376 420 379 420 379 422 376 422zM374 444 377 444 377 446 374 446zM334 408 335 408 335 410 333 409zM357 403 359 404 359 406 356 405zM424 428 426 427 427 429 425 429zM429 432 431 432 432 434 429 434zM395 454 397 455 396 456 395 455zM441 448 443 449 443 450 441 450zM376 458 378 457 379 458 377 460zM401 425 403 424 404 426 402 427zM353 408 354 408 354 410 352 409zM351 430 353 430 353 432 351 432zM377 436 378 437 378 438 376 437zM446 437 447 437 447 438 446 438zM530 361 532 360 532 362 530 362zM584 326 586 326 586 327 584 328zM571 335 573 335 573 336 571 336zM525 360 527 359 528 361 525 361zM580 357 582 356 583 358 581 358zM490 376 492 376 492 377 490 377zM535 329 537 330 536 331 534 330zM543 315 544 315 544 316 543 316zM540 331 542 332 541 333 540 332zM598 328 599 328 600 329 599 330zM552 351 553 351 553 352 552 352zM539 339 540 340 540 341 538 341zM481 396 483 396 483 397 482 397zM577 317 580 317 580 319 577 319zM558 351 560 351 560 353 558 352zM534 321 536 321 537 323 534 323zM496 392 498 392 498 393 496 393zM551 319 554 319 554 320 552 321zM525 366 527 365 528 366 526 367zM561 360 563 359 563 360 562 361zM561 355 564 356 563 358 561 357z"/>
<path fill="#d0d0ca" opacity="0.5" d="M658 241 661 241 661 243 658 243zM638 255 641 255 641 257 638 257zM637 299 640 300 639 303 635 302zM656 256 659 257 658 260 654 258zM599 256 601 255 602 257 600 258zM698 332 700 332 700 334 698 334zM655 306 657 307 656 309 654 308zM691 323 693 323 692 325 690 324zM691 334 695 335 694 338 691 337zM617 267 620 267 620 269 618 269zM707 341 710 341 710 344 707 343zM664 316 666 317 665 319 663 318zM659 238 660 239 659 240 658 239zM648 343 650 343 650 345 648 345zM660 333 665 335 663 338 659 336zM615 249 619 250 619 253 614 252zM642 248 645 249 644 251 641 250zM648 239 652 239 652 242 648 242zM659 306 663 307 661 310 658 309zM642 239 644 238 645 240 642 241zM610 323 613 323 613 325 610 326zM608 322 612 322 612 325 608 325zM713 331 716 330 717 333 714 334zM691 324 693 324 694 326 692 326zM609 254 612 253 613 256 610 257zM651 259 653 259 652 260 651 260zM631 281 633 280 633 282 631 283zM659 259 660 259 660 260 659 260zM614 340 617 341 616 343 614 342zM615 315 619 317 617 320 613 318zM677 318 679 318 678 319 676 319zM702 339 704 338 705 340 703 341zM633 277 636 278 636 280 632 280zM657 253 660 251 661 254 658 255zM646 278 647 278 647 279 646 279zM722 337 725 336 726 338 723 339zM714 334 718 335 718 338 713 337zM615 278 617 279 616 280 614 279zM664 310 667 309 667 311 665 312zM633 297 636 297 636 300 633 299zM655 313 656 313 656 315 654 314zM633 304 636 304 636 307 632 306zM598 257 602 257 603 260 599 260zM642 273 645 273 645 276 642 276zM643 248 645 248 645 250 643 250zM696 339 698 338 699 340 697 340zM617 258 620 259 620 261 616 260zM641 298 643 298 644 299 641 300zM648 304 650 303 651 305 649 305zM638 242 641 243 640 246 637 244zM608 266 612 265 613 268 609 269zM613 252 617 253 616 255 613 255zM620 314 623 313 624 315 621 317zM713 327 716 325 717 328 714 329zM654 248 657 247 657 249 654 250zM629 260 631 260 631 262 629 261zM616 258 618 258 618 259 617 260zM657 238 659 237 659 238 658 239zM609 325 611 324 611 326 610 326zM830 345 834 345 834 348 830 348zM829 346 831 346 831 348 829 347zM846 346 849 347 848 349 846 348zM762 329 766 328 767 331 763 332zM817 346 819 347 818 348 817 348zM780 331 782 332 781 334 779 333zM826 344 828 344 828 345 826 345zM837 349 839 350 839 351 837 351zM839 343 842 344 841 347 838 345zM813 345 816 344 816 346 814 347zM806 335 807 335 808 336 806 336zM824 342 826 341 827 343 825 344zM765 325 767 326 767 328 764 327zM823 350 827 350 827 353 823 353zM823 350 826 351 825 353 823 352zM774 327 778 326 779 329 775 330zM840 345 843 345 844 348 840 348zM844 346 847 346 847 348 844 348zM825 347 828 347 828 349 825 350zM801 331 802 332 802 333 800 332zM778 328 781 327 781 329 779 330zM826 338 830 339 829 342 825 341zM798 326 800 326 800 328 798 328zM829 338 831 338 831 339 829 339zM808 337 810 336 811 338 809 339zM837 346 841 347 840 350 837 349zM841 342 844 342 844 344 841 345zM826 328 830 330 828 333 825 331zM792 327 794 326 795 328 793 329zM801 340 804 339 805 341 802 343zM711 168 715 168 715 171 711 171zM732 191 736 193 735 195 731 194zM720 163 722 162 723 164 721 165zM705 167 707 166 707 168 705 168zM722 181 725 181 725 184 722 184zM695 184 698 183 699 185 696 186z"/>
<path fill="#4f6a45" opacity="0.5" d="M838 398 840 398 840 399 838 400zM852 409 855 411 854 413 851 411zM818 413 820 412 821 414 819 415zM883 396 885 395 885 398 883 398zM857 432 859 430 860 432 858 433zM895 407 897 407 897 409 895 409zM889 436 892 437 892 439 889 439zM872 400 874 400 874 402 871 402zM870 415 872 415 872 416 870 416zM850 433 853 434 852 436 850 436zM873 456 875 456 874 457 873 457zM872 460 874 459 875 461 873 462zM880 411 882 410 882 411 881 412zM839 424 842 425 841 427 839 426zM832 429 834 429 833 431 832 430zM844 416 846 416 847 417 844 418zM877 440 879 441 879 442 876 442zM874 390 876 390 876 391 874 392zM906 433 909 433 909 435 906 435zM874 390 877 391 876 393 874 392zM816 420 818 419 819 421 816 422zM842 442 843 442 843 443 842 443zM898 414 900 413 900 415 898 415zM873 395 875 395 875 397 873 397zM913 445 915 445 914 447 913 446zM861 416 864 414 865 417 862 418zM842 422 845 423 844 425 841 424zM815 408 817 408 817 409 816 410zM874 428 877 429 876 431 873 430zM901 433 903 434 903 436 900 436zM912 460 914 460 914 462 912 461zM877 428 880 427 880 429 878 430zM858 441 861 442 860 444 858 443zM849 435 851 436 851 438 848 437zM872 422 875 424 874 426 871 425zM827 423 830 423 830 425 827 426zM822 420 824 420 824 421 822 421zM862 453 864 453 864 454 863 454zM839 407 841 407 841 409 839 409zM876 430 878 430 878 432 876 432zM837 384 840 383 840 385 838 386zM821 392 823 392 824 394 821 394zM846 444 847 444 847 445 845 445zM829 428 832 429 831 431 829 430zM813 389 814 388 815 390 813 390zM874 456 876 456 876 458 874 458zM890 429 892 430 891 432 889 431zM845 395 847 395 847 397 845 397zM826 393 829 394 829 396 826 396zM909 421 911 420 911 422 909 422zM858 409 861 409 861 411 858 411zM852 413 855 414 854 416 852 415zM834 410 836 411 835 412 834 411zM838 455 840 455 840 457 837 456zM859 422 861 422 860 424 859 423zM881 415 882 415 882 416 881 416zM902 456 903 456 904 457 902 458zM832 399 833 399 834 400 832 401zM895 427 897 428 896 430 894 429zM874 448 877 448 877 450 874 450zM873 406 874 407 874 408 873 407zM861 458 863 458 863 459 861 459zM875 421 878 420 878 422 875 423zM842 405 845 404 845 406 842 407zM893 426 895 425 895 427 893 428zM866 423 869 422 869 425 866 425zM869 423 871 424 870 426 868 425zM903 430 904 431 904 432 902 432zM862 450 863 450 863 451 862 451zM847 391 849 392 848 394 846 393zM897 455 900 456 900 458 897 457zM842 399 844 398 845 400 843 401zM881 400 883 400 883 401 881 401zM852 419 855 420 854 422 852 421zM905 423 907 423 907 424 905 424zM845 440 847 440 847 442 845 442zM853 384 855 384 856 385 854 386zM887 416 889 416 889 418 887 418zM856 420 858 420 858 421 856 421zM845 409 846 409 846 410 845 410zM868 413 870 413 870 414 869 414zM888 439 890 440 890 442 887 441zM818 404 821 404 821 406 819 406zM845 401 847 402 846 403 845 402zM845 433 847 432 847 434 846 434zM897 420 898 421 898 422 896 422zM855 436 858 435 858 437 856 438zM866 395 867 394 868 396 866 396zM887 460 888 460 888 461 887 461zM824 445 825 445 825 447 823 446zM896 412 897 413 896 414 895 413zM884 409 886 409 886 411 884 410zM899 453 901 453 901 455 899 454zM851 419 853 420 853 422 850 421zM848 447 851 446 851 448 848 449zM845 441 847 440 848 442 846 443zM886 417 889 419 888 421 885 419zM849 408 852 409 851 411 849 410zM818 394 820 395 819 396 818 395zM847 414 849 413 850 415 848 416zM820 390 822 390 823 392 820 392zM367 420 369 419 370 421 368 422zM343 413 346 413 346 415 343 415zM370 442 372 442 372 443 371 443zM397 410 399 410 398 411 397 411zM370 436 373 437 372 439 370 438zM389 456 391 456 391 458 389 457zM394 406 397 405 397 407 395 408zM375 405 377 404 377 405 376 406zM386 436 388 437 387 439 385 438zM411 410 413 410 413 411 412 411zM338 444 340 443 340 445 339 445zM438 440 440 440 440 442 438 441zM394 407 396 407 396 409 394 409zM356 411 357 410 357 411 356 412zM370 435 373 434 374 436 371 437zM347 424 350 424 350 426 347 426zM421 419 423 420 422 421 420 420zM400 417 402 417 402 419 399 418zM385 457 387 455 388 457 386 458zM383 421 385 420 386 422 384 423zM401 451 403 450 404 452 402 452zM338 455 340 454 340 456 339 456zM340 437 342 437 342 438 341 438zM387 450 388 450 389 451 387 451zM359 436 361 435 362 437 360 437zM393 431 396 432 396 434 393 433zM456 442 459 441 459 443 457 444zM348 447 350 445 351 447 349 449zM433 416 436 414 436 416 434 417zM348 441 350 441 350 442 348 442zM344 450 346 451 346 452 344 452zM342 455 344 455 344 457 342 457zM352 459 355 459 355 461 352 461zM395 419 396 419 396 420 395 420zM362 444 363 445 363 446 362 445zM466 459 468 458 468 460 466 460zM398 442 400 442 400 444 398 443zM381 446 383 447 383 449 380 448zM377 430 378 431 378 432 376 431zM339 421 341 421 341 423 339 423zM401 409 403 408 404 410 402 410zM420 424 422 424 421 426 419 425zM336 424 337 425 337 426 336 425zM390 433 392 433 392 434 390 434zM402 438 403 438 403 439 402 439zM442 441 443 441 443 442 442 442zM390 459 393 459 392 461 390 461zM413 446 414 446 415 447 413 447zM374 402 376 403 375 404 373 403zM338 445 340 444 341 445 339 447zM409 448 412 448 413 450 410 450zM431 423 433 424 432 426 430 425zM349 458 352 457 352 459 350 460zM448 432 450 431 450 432 448 433zM412 403 413 403 413 405 411 404zM366 397 368 398 367 400 365 399zM394 414 397 414 397 416 394 416zM332 397 333 397 334 398 332 398zM576 312 577 311 578 312 577 313zM592 322 594 322 594 323 593 323zM573 330 576 329 577 331 574 332zM589 310 591 311 591 312 589 312zM488 384 489 384 489 386 488 385zM580 314 581 313 582 315 580 315zM521 363 524 362 525 363 522 365zM508 385 509 384 509 386 508 386zM525 342 526 342 526 343 525 343zM530 345 532 344 533 345 531 346zM483 391 485 390 486 392 484 393zM526 344 528 344 528 345 526 345zM584 349 586 348 586 350 584 351zM574 322 576 321 577 322 575 323zM540 333 542 334 541 335 540 335zM589 310 591 309 591 311 589 312zM537 367 539 368 538 370 536 369zM526 366 528 366 528 367 526 368z"/>
<path fill="#3f5236" opacity="0.5" d="M368 412 370 413 369 414 367 414zM411 441 413 441 412 443 410 442zM393 443 395 442 395 444 393 444zM341 424 343 423 343 424 342 425zM348 450 351 449 351 451 349 452zM373 411 375 410 376 412 373 413zM379 438 381 438 381 440 379 440zM437 434 439 433 439 435 437 435zM407 436 409 437 408 438 407 438zM371 440 373 441 373 442 371 442zM447 444 448 445 448 446 447 445zM439 406 442 406 442 407 440 408zM411 451 412 452 412 453 410 452zM389 426 391 427 390 428 388 427zM424 460 426 460 426 462 424 462zM332 454 334 453 334 455 332 456zM366 424 369 424 369 427 366 426zM375 424 377 423 377 424 376 425zM392 418 394 419 393 421 391 420zM458 439 460 439 460 441 458 441zM419 404 420 404 420 405 419 405zM465 460 467 459 468 461 465 462zM335 440 336 441 336 442 334 441zM431 453 432 454 432 454 431 454z"/>
<rect x="394" y="166" width="16" height="38" fill="#9a8b70" opacity="0.62"/>
<rect x="381" y="215" width="11" height="27" fill="#8d7f66" opacity="0.62"/>
<rect x="410" y="204" width="13" height="55" fill="#5b4a42" opacity="0.62"/>
<rect x="392" y="204" width="18" height="55" fill="#4f6e4c" opacity="0.62"/>
<rect x="405" y="259" width="18" height="26" fill="#95866a" opacity="0.62"/>
<rect x="332" y="252" width="10" height="26" fill="#8f8268" opacity="0.62"/>
<rect x="332" y="226" width="10" height="26" fill="#5a4a42" opacity="0.62"/>
<rect x="332" y="161" width="10" height="60" fill="#56704e" opacity="0.62"/>
<rect x="355" y="311" width="32" height="19" fill="#7b6c58" opacity="0.62"/>
<rect x="1262" y="326" width="46" height="30" fill="#8a8a78" opacity="0.62"/>
<rect x="1311" y="266" width="26" height="52" fill="#8c8b7a" opacity="0.62"/>
<rect x="1486" y="214" width="58" height="32" fill="#8b8b7c" opacity="0.62"/>
<rect x="1552" y="272" width="20" height="39" fill="#3f544a" opacity="0.62"/>
<rect x="1350" y="300" width="25" height="20" fill="#4d5e4c" opacity="0.62"/>
<polygon points="806,224 852,222 856,258 812,262" fill="#959880" opacity="0.75"/>
<polygon points="786,275 816,275 816,296 786,296" fill="#8f9278" opacity="0.6"/>
<polygon points="957,248 1000,244 1021,262 1015,292 978,292 960,270" fill="#8c866c" opacity="0.7"/>
<polygon points="894,345 935,338 953,382 900,382" fill="#949379" opacity="0.75"/>
<polygon points="976,357 1015,365 1020,400 1010,425 990,430 978,400" fill="#969a80" opacity="0.8"/>
<rect x="590" y="289" width="10" height="12" fill="#d9d8d2" opacity="0.7"/>
<rect x="626" y="269" width="18" height="6" fill="#d9d8d2" opacity="0.7"/>
<rect x="656" y="273" width="34" height="12" fill="#d9d8d2" opacity="0.7"/>
<rect x="670" y="301" width="18" height="12" fill="#d9d8d2" opacity="0.7"/>
<rect x="608" y="241" width="12" height="8" fill="#d9d8d2" opacity="0.7"/>
<rect x="700" y="165" width="12" height="12" fill="#d9d8d2" opacity="0.7"/>
<rect x="720" y="170" width="8" height="8" fill="#d9d8d2" opacity="0.7"/>
<rect x="800" y="330" width="10" height="8" fill="#d9d8d2" opacity="0.7"/>
<rect x="815" y="340" width="8" height="6" fill="#d9d8d2" opacity="0.7"/>
<rect x="760" y="300" width="6" height="6" fill="#d9d8d2" opacity="0.7"/>
<rect x="563" y="250" width="6" height="5" fill="#d9d8d2" opacity="0.7"/>
<rect x="640" y="300" width="8" height="5" fill="#d9d8d2" opacity="0.7"/>
<rect x="620" y="310" width="10" height="6" fill="#d9d8d2" opacity="0.7"/>
<path d="M642 174 L691 195 L805 202 L870 226 L952 292" fill="none" stroke="#9a9888" stroke-width="1.3" opacity="0.55"/>
<path d="M728 200 L728 311 L745 400 L760 461" fill="none" stroke="#9a9888" stroke-width="1.3" opacity="0.55"/>
<path d="M1001 327 L1262 417 L1400 461" fill="none" stroke="#9a9888" stroke-width="1.3" opacity="0.55"/>
<path d="M610 400 L700 440 L800 430" fill="none" stroke="#9a9888" stroke-width="1.3" opacity="0.55"/>
<path d="M758 202 Q770 196 776 205 L775 232 Q765 238 757 228 Z" fill="#1f2b26" stroke="none" stroke-width="0" />
<circle cx="786" cy="177" r="4" fill="#2a3a30"/>
<path d="M858 240 Q880 214 905 221 Q935 230 949 252" fill="none" stroke="#2b4233" stroke-width="9" opacity="0.9" fill="none"/>
<path d="M870 258 Q900 238 938 266" fill="none" stroke="#33493a" stroke-width="5" opacity="0.8" fill="none"/>
<path d="M780 197 L825 212 L906 275 L989 328 L1100 355" fill="none" stroke="#9a9a88" stroke-width="1.3" opacity="0.5" fill="none"/>
<path d="M948 252 Q962 280 974 305 Q989 328 1013 355 Q1026 385 1019 415 Q1010 432 1000 440" fill="none" stroke="#2c4236" stroke-width="5" fill="none"/>
<path d="M948 252 Q962 280 974 305 Q989 328 1013 355 Q1026 385 1019 415 Q1010 432 1000 440" fill="none" stroke="#6f7f6c" stroke-width="1" opacity="0.6" fill="none"/>
<path d="M984 365 Q990 395 986 425" fill="none" stroke="#4f6650" stroke-width="2" opacity="0.7"/>
<path d="M992 365 Q997 395 992 425" fill="none" stroke="#4f6650" stroke-width="2" opacity="0.7"/>
<path d="M1000 365 Q1004 395 998 425" fill="none" stroke="#4f6650" stroke-width="2" opacity="0.7"/>
<path d="M1008 365 Q1011 395 1004 425" fill="none" stroke="#4f6650" stroke-width="2" opacity="0.7"/>
<rect x="966" y="358" width="12" height="34" fill="#33483a" opacity="0.8"/>
<path d="M396 161 L489 226 L704 300" fill="none" stroke="#17262a" stroke-width="2.4" fill="none"/>
<path d="M710 304 L829 357" fill="none" stroke="#0f1b1f" stroke-width="3.8" fill="none"/>
<ellipse cx="707" cy="302" rx="7" ry="4.5" fill="#0f1b1f" transform="rotate(22 707 302)"/>
<path d="M831 358 L862 368 L898.6 386 L922.7 396.7 L959 410 L983 427 L995 442.5 L997.5 461 L926 461 L926 440 L910.6 420 L886.5 403 L862 393 L838 383 L820 383 L810.5 392 L809 406 L814 424.4 L823.8 442.5 L826 461 L801.5 461 L801 448.6 L800 424.4 L799.3 400 L804 380 L816 364 Z" fill="#1f3832" stroke="none" stroke-width="0" />
<path d="M801.5 461 L801 448.6 L800 424.4 L799.3 400 L804 380 L816 364 L831 358 L862 368 L898.6 386 L922.7 396.7 L959 410 L983 427 L995 442.5 L997.5 461" fill="none" stroke="#a9ad9c" stroke-width="1.4" opacity="0.55" fill="none"/>
<path d="M826 461 L823.8 442.5 L814 424.4 L809 406 L810.5 392 L820 383 L838 383 L862 393 L886.5 403 L910.6 420 L926 440" fill="none" stroke="#8f9786" stroke-width="1.2" opacity="0.5" fill="none"/>
<polygon points="838,390 862,398 886,408 910,425 920,440 900,438 870,420 845,405 830,395" fill="#3f5a45" opacity="0.85"/>
<g filter="url(#b3)"><ellipse cx="1154" cy="222" rx="8" ry="9" fill="#1e2320" opacity="0.75"/><ellipse cx="1170" cy="214" rx="10" ry="8" fill="#d8d8d8" opacity="0.75"/></g>
</g>

<rect x="342" y="171" width="40" height="81" rx="2" fill="#fff"/>
<rect x="350" y="211" width="24" height="1" fill="#e6e6e6"/>
<rect x="353" y="187.5" width="18" height="3" fill="#666"/><rect x="360.5" y="180" width="3" height="18" fill="#666"/>
<rect x="353" y="232" width="18" height="3" fill="#666"/>
<rect x="342" y="284" width="40" height="40" rx="2" fill="#fff"/>
<g fill="#fdbc2c" stroke="#c48a10" stroke-width="0.6">
<circle cx="362" cy="294" r="4.2"/>
<path d="M356.5 299.5 Q362 297.5 367.5 299.5 L369 309 L367 309.5 L366 305 L365.5 318 L362.8 318 L362.5 309 L361.5 309 L361.2 318 L358.5 318 L358 305 L357 309.5 L355 309 Z"/>
</g>
<path d="M359 299.5 L362 304 L365 299.5 Z" fill="#e07a1a"/>
<rect x="1392" y="171" width="170" height="40" rx="2" fill="#fff"/>
<rect x="1461" y="173" width="1" height="36" fill="#e6e6e6"/>
<text x="1427" y="197" font-family="Liberation Sans" font-size="18" fill="#565656" text-anchor="middle">Map</text>
<text x="1511.5" y="197" font-family="Liberation Sans" font-size="18" font-weight="bold" fill="#000" text-anchor="middle">Satellite</text>
<rect x="1522" y="231" width="40" height="40" rx="2" fill="#fff"/>
<path d="M1533 246 V242 H1537 M1547 242 H1551 V246 M1551 256 V260 H1547 M1537 260 H1533 V256" fill="none" stroke="#666" stroke-width="2"/>
<rect x="1248" y="447" width="324" height="14" fill="#f5f5f5" opacity="0.72"/>
<text x="1252" y="458" font-family="Liberation Sans" font-size="10" fill="#444">Imagery ©2018 TerraMetrics</text>
<text x="1392" y="458" font-family="Liberation Sans" font-size="10" fill="#444">2 km</text>
<path d="M1419 451 V456.5 H1494 V451" fill="none" stroke="#fff" stroke-width="3"/>
<path d="M1419 451 V456.5 H1494 V451" fill="none" stroke="#666" stroke-width="1.4"/>
<text x="1507" y="458" font-family="Liberation Sans" font-size="10" fill="#444">Terms of Use</text>
<text x="338.5" y="452" font-family="Liberation Sans" font-size="19.5" fill="#fff" stroke="#fff" stroke-width="0.6" letter-spacing="0">Google</text>
<g transform="translate(689.5 366.5)"><path d="M0 22.5 C-0.6 18 -1.8 14.5 -5.2 9.8 C-7.2 7 -8.8 4.2 -8.8 0 A8.8 8.8 0 1 1 8.8 0 C8.8 4.2 7.2 7 5.2 9.8 C1.8 14.5 0.6 18 0 22.5 Z" fill="#fb6e61" stroke="#000" stroke-width="1"/><circle cx="0" cy="-0.3" r="2.5" fill="#000"/></g>
<g transform="translate(1206.3 259.5)"><path d="M0 22.5 C-0.6 18 -1.8 14.5 -5.2 9.8 C-7.2 7 -8.8 4.2 -8.8 0 A8.8 8.8 0 1 1 8.8 0 C8.8 4.2 7.2 7 5.2 9.8 C1.8 14.5 0.6 18 0 22.5 Z" fill="#fb6e61" stroke="#000" stroke-width="1"/><circle cx="0" cy="-0.3" r="2.5" fill="#000"/></g>

</svg>
<svg style="position:absolute;left:340px;top:486px" width="76" height="71" viewBox="0 0 100 90" preserveAspectRatio="none">
<rect x="0" y="0" width="100" height="90" fill="#0b3576"/>
<rect x="3" y="3" width="94" height="84" fill="#ffdc00"/>
<text x="-0.5" y="46.8" font-family="Liberation Sans" font-weight="bold" font-size="52" fill="#0b3576">C</text>
<text x="29.5 55.5" y="46.8" font-family="Liberation Sans" font-weight="bold" font-size="50" fill="#0b3576">on</text>
<text x="23.6 50.9 71.5" y="75.5" font-family="Liberation Sans" font-weight="bold" font-size="47" fill="#0b3576">pro</text>
<rect x="26.7" y="70" width="7.2" height="18" fill="#0b3576"/>
</svg>
<div style="position:absolute;left:427px;top:491.53px;font-size:23px;line-height:23px;font-weight:normal;color:#1f4a84;white-space:nowrap;font-family:'Liberation Sans', sans-serif;">CONPRO</div>
<div style="position:absolute;left:427px;top:523.00px;font-size:13px;line-height:13px;font-weight:normal;color:#1f4a84;white-space:nowrap;font-family:'Liberation Sans', sans-serif;">CONSTRUCTION &amp;DESIGN</div>
<svg style="position:absolute;left:767px;top:486px" width="76" height="71" viewBox="0 0 100 90" preserveAspectRatio="none">
<rect x="0" y="0" width="100" height="90" fill="#0b3576"/>
<rect x="3" y="3" width="94" height="84" fill="#ffdc00"/>
<text x="-0.5" y="46.8" font-family="Liberation Sans" font-weight="bold" font-size="52" fill="#0b3576">C</text>
<text x="29.5 55.5" y="46.8" font-family="Liberation Sans" font-weight="bold" font-size="50" fill="#0b3576">on</text>
<text x="23.6 50.9 71.5" y="75.5" font-family="Liberation Sans" font-weight="bold" font-size="47" fill="#0b3576">pro</text>
<rect x="26.7" y="70" width="7.2" height="18" fill="#0b3576"/>
</svg>
<div style="position:absolute;left:854px;top:490.68px;font-size:24px;line-height:24px;font-weight:normal;color:#1f4a84;white-space:nowrap;font-family:'Liberation Sans', sans-serif;">Conpro M</div>
<div style="position:absolute;left:854px;top:522.74px;font-size:13.3px;line-height:13.3px;font-weight:normal;color:#1f4a84;white-space:nowrap;font-family:'Liberation Sans', sans-serif;">metalworking</div>
<div style="position:absolute;left:331.5px;top:563.90px;font-size:15px;line-height:15px;font-weight:normal;color:#111;white-space:nowrap;font-family:'Liberation Sans', sans-serif;">Sedište firme i projektni biro</div>
<div style="position:absolute;left:761.5px;top:563.90px;font-size:15px;line-height:15px;font-weight:normal;color:#111;white-space:nowrap;font-family:'Liberation Sans', sans-serif;">Proizvodni pogon</div>
<div style="position:absolute;left:331.5px;top:607.30px;font-size:15px;line-height:15px;font-weight:normal;color:#111;white-space:nowrap;font-family:'Liberation Sans', sans-serif;">ConPro d.o.o.</div>
<div style="position:absolute;left:761.5px;top:607.30px;font-size:15px;line-height:15px;font-weight:normal;color:#111;white-space:nowrap;font-family:'Liberation Sans', sans-serif;">ConPro M d.o.o.</div>
<div style="position:absolute;left:331.5px;top:629.00px;font-size:15px;line-height:15px;font-weight:normal;color:#111;white-space:nowrap;font-family:'Liberation Sans', sans-serif;">Stevana Mokranjca 10</div>
<div style="position:absolute;left:761.5px;top:629.00px;font-size:15px;line-height:15px;font-weight:normal;color:#111;white-space:nowrap;font-family:'Liberation Sans', sans-serif;">Železnička BB</div>
<div style="position:absolute;left:331.5px;top:650.70px;font-size:15px;line-height:15px;font-weight:normal;color:#111;white-space:nowrap;font-family:'Liberation Sans', sans-serif;">21000 Novi Sad</div>
<div style="position:absolute;left:761.5px;top:650.70px;font-size:15px;line-height:15px;font-weight:normal;color:#111;white-space:nowrap;font-family:'Liberation Sans', sans-serif;">21000 Budisava</div>
<div style="position:absolute;left:331.5px;top:694.10px;font-size:15px;line-height:15px;font-weight:normal;color:#111;white-space:nowrap;font-family:'Liberation Sans', sans-serif;">tel: +381 21 301 00 65</div>
<div style="position:absolute;left:761.5px;top:694.10px;font-size:15px;line-height:15px;font-weight:normal;color:#111;white-space:nowrap;font-family:'Liberation Sans', sans-serif;">tel: +381 21 40 06 44</div>
<div style="position:absolute;left:331.5px;top:737.50px;font-size:15px;line-height:15px;font-weight:normal;color:#111;white-space:nowrap;font-family:'Liberation Sans', sans-serif;">office@conpro.rs</div>
<div style="position:absolute;left:761.5px;top:737.50px;font-size:15px;line-height:15px;font-weight:normal;color:#111;white-space:nowrap;font-family:'Liberation Sans', sans-serif;">office@conpro.rs</div>
<div style="position:absolute;left:331.5px;top:759.20px;font-size:15px;line-height:15px;font-weight:normal;color:#111;white-space:nowrap;font-family:'Liberation Sans', sans-serif;">www.conpro.rs</div>
<div style="position:absolute;left:761.5px;top:759.20px;font-size:15px;line-height:15px;font-weight:normal;color:#111;white-space:nowrap;font-family:'Liberation Sans', sans-serif;">www.conpro.rs</div>
<div style="position:absolute;left:331.5px;top:802.60px;font-size:15px;line-height:15px;font-weight:normal;color:#111;white-space:nowrap;font-family:'Liberation Sans', sans-serif;">MB: 209066642</div>
<div style="position:absolute;left:761.5px;top:802.60px;font-size:15px;line-height:15px;font-weight:normal;color:#111;white-space:nowrap;font-family:'Liberation Sans', sans-serif;">MB: 210032875</div>
<div style="position:absolute;left:331.5px;top:824.30px;font-size:15px;line-height:15px;font-weight:normal;color:#111;white-space:nowrap;font-family:'Liberation Sans', sans-serif;">PIB: 107968822</div>
<div style="position:absolute;left:761.5px;top:824.30px;font-size:15px;line-height:15px;font-weight:normal;color:#111;white-space:nowrap;font-family:'Liberation Sans', sans-serif;">PIB: 108605410</div>
<div style="position:absolute;left:1191px;top:483.80px;font-size:15px;line-height:15px;font-weight:normal;color:#1a1a1a;white-space:nowrap;font-family:'Liberation Sans', sans-serif;">ime i prezime</div>
<div style="position:absolute;left:1191px;top:504px;width:380px;height:29px;box-sizing:border-box;border:1px solid #d3d3d3;background:#fff"></div>
<div style="position:absolute;left:1191px;top:555.80px;font-size:15px;line-height:15px;font-weight:normal;color:#1a1a1a;white-space:nowrap;font-family:'Liberation Sans', sans-serif;">e-mail<b>*</b></div>
<div style="position:absolute;left:1191px;top:575px;width:380px;height:29px;box-sizing:border-box;border:1px solid #d3d3d3;background:#fff"></div>
<div style="position:absolute;left:1191px;top:626.80px;font-size:15px;line-height:15px;font-weight:normal;color:#1a1a1a;white-space:nowrap;font-family:'Liberation Sans', sans-serif;">naslov</div>
<div style="position:absolute;left:1191px;top:647px;width:380px;height:29px;box-sizing:border-box;border:1px solid #d3d3d3;background:#fff"></div>
<div style="position:absolute;left:1191px;top:699.30px;font-size:15px;line-height:15px;font-weight:normal;color:#1a1a1a;white-space:nowrap;font-family:'Liberation Sans', sans-serif;">poruka</div>
<div style="position:absolute;left:1191px;top:719px;width:380px;height:150px;box-sizing:border-box;border:1px solid #d3d3d3;background:#fff"></div>
<svg style="position:absolute;left:1559px;top:857px" width="10" height="10" viewBox="0 0 10 10"><g fill="#b5b5b5"><rect x="7" y="1" width="1" height="1"/><rect x="4" y="4" width="1" height="1"/><rect x="7" y="4" width="1" height="1"/><rect x="1" y="7" width="1" height="1"/><rect x="4" y="7" width="1" height="1"/><rect x="7" y="7" width="1" height="1"/></g></svg>
<div style="position:absolute;left:1191px;top:890px;width:106px;height:43px;background:#07367a;border-radius:3px"></div>
<div style="position:absolute;left:1220.5px;top:905.57px;font-size:13.5px;line-height:13.5px;font-weight:normal;color:#fff;white-space:nowrap;font-family:'Liberation Sans', sans-serif;letter-spacing:-0.8px;transform:scaleX(0.98);transform-origin:0 0;">POŠALJI</div>
<div style="position:absolute;left:0px;top:953px;width:1900px;height:49px;background:#07367a"></div>
<div style="position:absolute;left:331.5px;top:972.72px;font-size:12.15px;line-height:12.15px;font-weight:normal;color:#fff;white-space:nowrap;font-family:'Liberation Sans', sans-serif;">Copyright 2016 ConPro | All Rights Reserved</div>
<div style="position:absolute;left:1269px;top:972.59px;font-size:12.3px;line-height:12.3px;font-weight:normal;color:#fff;white-space:nowrap;font-family:'Liberation Sans', sans-serif;">Kontakt: <b>T/F: +381 21 301 00 65 | E: office@conpro.rs</b></div>
</body></html>
